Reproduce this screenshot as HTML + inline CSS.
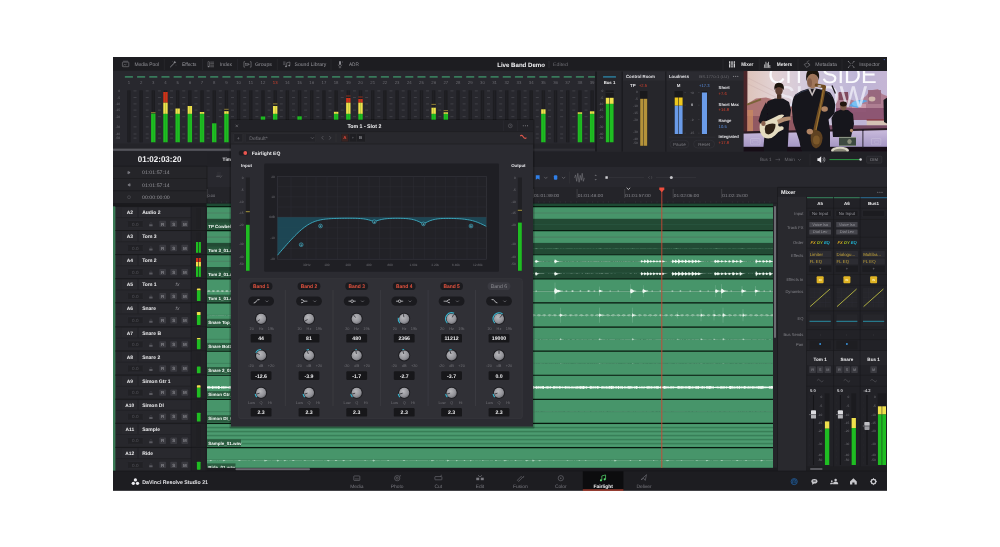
<!DOCTYPE html>
<html lang="en"><head><meta charset="utf-8"><title>DaVinci Resolve - Fairlight</title>
<style>
html,body{margin:0;padding:0;background:#fff;}
body{width:1000px;height:547px;overflow:hidden;position:relative;}
#wrap{position:absolute;left:0;top:0;width:1000px;height:547px;will-change:transform;}
svg{display:block;font-family:"Liberation Sans",sans-serif;filter:blur(0.35px);}
svg text{white-space:pre;text-rendering:geometricPrecision;}
</style></head><body>
<div id="wrap">
<svg width="1000" height="547" viewBox="0 0 1000 547">
<rect x="0" y="0" width="1000" height="547" fill="#ffffff"/>
<rect x="113" y="57" width="774" height="433.6" fill="#28282e"/>
<rect x="113" y="57" width="774" height="13.7" fill="#1d1d21"/>
<rect x="113" y="151.5" width="774" height="15.5" fill="#212126"/>
<rect x="207" y="167" width="680" height="20" fill="#28282e"/>
<rect x="207" y="187" width="570" height="16.5" fill="#242429"/>
<rect x="122.4" y="62.1" width="6.4" height="4.6" fill="none" rx="0.5" stroke="#95959b" stroke-width="0.5"/>
<line x1="123.1" y1="61.2" x2="128.1" y2="61.2" stroke="#95959b" stroke-width="0.4"/>
<path d="M123.4 65.6 l1 -1.2 l1 0.8 l1 -1.4" fill="none" stroke="#95959b" stroke-width="0.4"/>
<text x="134.4" y="66.19" font-size="5.1" fill="#95959b" textLength="24.6" lengthAdjust="spacingAndGlyphs">Media Pool</text>
<line x1="170.2" y1="67.2" x2="174" y2="63.4" stroke="#95959b" stroke-width="0.8"/>
<path d="M174.8 60.8 l0.5 1 l1 0.5 l-1 0.5 l-0.5 1 l-0.5 -1 l-1 -0.5 l1 -0.5z" fill="#95959b"/>
<circle cx="176" cy="65" r="0.35" fill="#95959b"/>
<circle cx="172.6" cy="61.8" r="0.3" fill="#95959b"/>
<text x="182" y="66.19" font-size="5.1" fill="#95959b" textLength="14.4" lengthAdjust="spacingAndGlyphs">Effects</text>
<rect x="208" y="61.8" width="1.3" height="5.2" fill="none" stroke="#95959b" stroke-width="0.4"/>
<line x1="210.2" y1="62.1" x2="214" y2="62.1" stroke="#95959b" stroke-width="0.45"/>
<line x1="210.2" y1="63.65" x2="214" y2="63.65" stroke="#95959b" stroke-width="0.45"/>
<line x1="210.2" y1="65.2" x2="214" y2="65.2" stroke="#95959b" stroke-width="0.45"/>
<line x1="210.2" y1="66.75" x2="214" y2="66.75" stroke="#95959b" stroke-width="0.45"/>
<text x="220" y="66.19" font-size="5.1" fill="#95959b" textLength="12" lengthAdjust="spacingAndGlyphs">Index</text>
<path d="M245.1 61.7 h-1.2 v5.4 h1.2 M249.9 61.7 h1.2 v5.4 h-1.2" fill="none" stroke="#95959b" stroke-width="0.5"/>
<rect x="245.7" y="63.2" width="3" height="2.4" fill="none" stroke="#95959b" stroke-width="0.4"/>
<line x1="246.3" y1="64.4" x2="249.9" y2="64.4" stroke="#95959b" stroke-width="0.4"/>
<text x="254.9" y="66.19" font-size="5.1" fill="#95959b" textLength="17" lengthAdjust="spacingAndGlyphs">Groups</text>
<path d="M286.7 66.4 v-3.6 l3.2 -0.8 v3.6" fill="none" stroke="#95959b" stroke-width="0.5"/>
<circle cx="286" cy="66.4" r="0.8" fill="#95959b"/>
<circle cx="289.2" cy="65.6" r="0.8" fill="#95959b"/>
<line x1="283.1" y1="62" x2="285.5" y2="62" stroke="#95959b" stroke-width="0.4"/>
<line x1="283.1" y1="63.2" x2="285.5" y2="63.2" stroke="#95959b" stroke-width="0.4"/>
<line x1="283.1" y1="64.4" x2="285.5" y2="64.4" stroke="#95959b" stroke-width="0.4"/>
<text x="294.6" y="66.19" font-size="5.1" fill="#95959b" textLength="31.6" lengthAdjust="spacingAndGlyphs">Sound Library</text>
<rect x="339.1" y="61" width="1.8" height="4" fill="#95959b" rx="0.9"/>
<path d="M338.2 64.6 a1.8 1.8 0 0 0 3.6 0" fill="none" stroke="#95959b" stroke-width="0.4"/>
<line x1="340" y1="66.4" x2="340" y2="67.7" stroke="#95959b" stroke-width="0.4"/>
<line x1="338.8" y1="67.7" x2="341.2" y2="67.7" stroke="#95959b" stroke-width="0.4"/>
<circle cx="342.4" cy="62" r="0.4" fill="#95959b"/>
<text x="348.9" y="66.19" font-size="5.1" fill="#95959b" textLength="9.9" lengthAdjust="spacingAndGlyphs">ADR</text>
<line x1="164.3" y1="59" x2="164.3" y2="70" stroke="#303036" stroke-width="0.5"/>
<line x1="202.5" y1="59" x2="202.5" y2="70" stroke="#303036" stroke-width="0.5"/>
<line x1="237.6" y1="59" x2="237.6" y2="70" stroke="#303036" stroke-width="0.5"/>
<line x1="277.3" y1="59" x2="277.3" y2="70" stroke="#303036" stroke-width="0.5"/>
<line x1="331" y1="59" x2="331" y2="70" stroke="#303036" stroke-width="0.5"/>
<text x="497.2" y="66.57" font-size="6.2" fill="#f2f2f4" font-weight="bold" textLength="47.8" lengthAdjust="spacingAndGlyphs">Live Band Demo</text>
<line x1="549" y1="61" x2="549" y2="68" stroke="#3a3a40" stroke-width="0.5"/>
<text x="553" y="66.08" font-size="4.8" fill="#6e6e74" textLength="15" lengthAdjust="spacingAndGlyphs">Edited</text>
<line x1="729.7" y1="61.2" x2="729.7" y2="67.6" stroke="#e8e8ea" stroke-width="1.15"/>
<line x1="729" y1="63.8" x2="730.4" y2="63.8" stroke="#1c1c20" stroke-width="0.45"/>
<line x1="732" y1="61.2" x2="732" y2="67.6" stroke="#e8e8ea" stroke-width="1.15"/>
<line x1="731.3" y1="65.3" x2="732.7" y2="65.3" stroke="#1c1c20" stroke-width="0.45"/>
<line x1="734.3" y1="61.2" x2="734.3" y2="67.6" stroke="#e8e8ea" stroke-width="1.15"/>
<line x1="733.6" y1="63.2" x2="735" y2="63.2" stroke="#1c1c20" stroke-width="0.45"/>
<text x="741.2" y="66.19" font-size="5.1" fill="#e8e8ea" font-weight="bold" textLength="12.2" lengthAdjust="spacingAndGlyphs">Mixer</text>
<line x1="764.6" y1="67.4" x2="764.6" y2="64.4" stroke="#e8e8ea" stroke-width="0.7"/>
<line x1="765.9" y1="67.4" x2="765.9" y2="61.8" stroke="#e8e8ea" stroke-width="0.7"/>
<line x1="767.2" y1="67.4" x2="767.2" y2="63.2" stroke="#e8e8ea" stroke-width="0.7"/>
<line x1="768.5" y1="67.4" x2="768.5" y2="61.8" stroke="#e8e8ea" stroke-width="0.7"/>
<line x1="769.8" y1="67.4" x2="769.8" y2="65" stroke="#e8e8ea" stroke-width="0.7"/>
<line x1="763.8" y1="67.6" x2="770.6" y2="67.6" stroke="#e8e8ea" stroke-width="0.4"/>
<text x="776.8" y="66.19" font-size="5.1" fill="#e8e8ea" font-weight="bold" textLength="15.4" lengthAdjust="spacingAndGlyphs">Meters</text>
<path d="M804.2 64.4 l3.5 -1.6 l2.4 2.2 l-3.5 2.4z" fill="none" stroke="#95959b" stroke-width="0.5"/>
<circle cx="808.8" cy="63.8" r="0.5" fill="#95959b"/>
<path d="M806.7 61.8 l2.6 -1.2" fill="none" stroke="#95959b" stroke-width="0.4"/>
<text x="815.2" y="66.19" font-size="5.1" fill="#95959b" textLength="21.6" lengthAdjust="spacingAndGlyphs">Metadata</text>
<line x1="848.4" y1="61.6" x2="854" y2="67.2" stroke="#95959b" stroke-width="0.55"/>
<line x1="848.4" y1="67.2" x2="854" y2="61.6" stroke="#95959b" stroke-width="0.55"/>
<circle cx="851.2" cy="64.4" r="0.9" fill="#1c1c20"/>
<circle cx="848.4" cy="61.6" r="0.5" fill="#95959b"/>
<circle cx="854" cy="61.6" r="0.5" fill="#95959b"/>
<circle cx="848.4" cy="67.2" r="0.5" fill="#95959b"/>
<circle cx="854" cy="67.2" r="0.5" fill="#95959b"/>
<text x="859.2" y="66.19" font-size="5.1" fill="#95959b" textLength="20.5" lengthAdjust="spacingAndGlyphs">Inspector</text>
<line x1="723" y1="59" x2="723" y2="70" stroke="#303036" stroke-width="0.5"/>
<line x1="759.2" y1="59" x2="759.2" y2="70" stroke="#303036" stroke-width="0.5"/>
<line x1="798" y1="59" x2="798" y2="70" stroke="#303036" stroke-width="0.5"/>
<line x1="842" y1="59" x2="842" y2="70" stroke="#303036" stroke-width="0.5"/>
<circle cx="884.3" cy="59.6" r="0.6" fill="#4a6ad0"/>
<text x="120.2" y="92.06" font-size="3.3" fill="#6a6a70" text-anchor="end">0</text>
<text x="120.2" y="98.66" font-size="3.3" fill="#6a6a70" text-anchor="end">-5</text>
<text x="120.2" y="105.06" font-size="3.3" fill="#6a6a70" text-anchor="end">-10</text>
<text x="120.2" y="111.25" font-size="3.3" fill="#6a6a70" text-anchor="end">-15</text>
<text x="120.2" y="117.86" font-size="3.3" fill="#6a6a70" text-anchor="end">-20</text>
<text x="120.2" y="128.06" font-size="3.3" fill="#6a6a70" text-anchor="end">-30</text>
<text x="120.2" y="135.16" font-size="3.3" fill="#6a6a70" text-anchor="end">-40</text>
<text x="120.2" y="139.25" font-size="3.3" fill="#6a6a70" text-anchor="end">-50</text>
<rect x="124.8" y="76.1" width="8.2" height="1.6" fill="#387a5b" rx="0.5"/>
<text x="128.9" y="83.91" font-size="4.3" fill="#6a6a70" text-anchor="middle">1</text>
<rect x="127.2" y="90.4" width="3.4" height="51.9" fill="#1d1d21"/>
<line x1="128.9" y1="90.4" x2="128.9" y2="142.3" stroke="#26262b" stroke-width="0.5"/>
<line x1="133.5" y1="90.9" x2="136.5" y2="90.9" stroke="#55555b" stroke-width="0.55"/>
<line x1="133.5" y1="97.5" x2="136.5" y2="97.5" stroke="#55555b" stroke-width="0.55"/>
<line x1="133.5" y1="103.9" x2="136.5" y2="103.9" stroke="#55555b" stroke-width="0.55"/>
<line x1="133.5" y1="110.1" x2="136.5" y2="110.1" stroke="#55555b" stroke-width="0.55"/>
<line x1="133.5" y1="116.7" x2="136.5" y2="116.7" stroke="#55555b" stroke-width="0.55"/>
<line x1="133.5" y1="126.9" x2="136.5" y2="126.9" stroke="#55555b" stroke-width="0.55"/>
<line x1="133.5" y1="134" x2="136.5" y2="134" stroke="#55555b" stroke-width="0.55"/>
<line x1="133.5" y1="138.1" x2="136.5" y2="138.1" stroke="#55555b" stroke-width="0.55"/>
<rect x="136.99" y="76.1" width="8.2" height="1.6" fill="#387a5b" rx="0.5"/>
<text x="141.09" y="83.91" font-size="4.3" fill="#6a6a70" text-anchor="middle">2</text>
<rect x="139.39" y="90.4" width="3.4" height="51.9" fill="#1d1d21"/>
<line x1="141.09" y1="90.4" x2="141.09" y2="142.3" stroke="#26262b" stroke-width="0.5"/>
<line x1="145.69" y1="90.9" x2="148.69" y2="90.9" stroke="#55555b" stroke-width="0.55"/>
<line x1="145.69" y1="97.5" x2="148.69" y2="97.5" stroke="#55555b" stroke-width="0.55"/>
<line x1="145.69" y1="103.9" x2="148.69" y2="103.9" stroke="#55555b" stroke-width="0.55"/>
<line x1="145.69" y1="110.1" x2="148.69" y2="110.1" stroke="#55555b" stroke-width="0.55"/>
<line x1="145.69" y1="116.7" x2="148.69" y2="116.7" stroke="#55555b" stroke-width="0.55"/>
<line x1="145.69" y1="126.9" x2="148.69" y2="126.9" stroke="#55555b" stroke-width="0.55"/>
<line x1="145.69" y1="134" x2="148.69" y2="134" stroke="#55555b" stroke-width="0.55"/>
<line x1="145.69" y1="138.1" x2="148.69" y2="138.1" stroke="#55555b" stroke-width="0.55"/>
<rect x="149.18" y="76.1" width="8.2" height="1.6" fill="#387a5b" rx="0.5"/>
<text x="153.28" y="83.91" font-size="4.3" fill="#6a6a70" text-anchor="middle">3</text>
<rect x="151.58" y="90.4" width="3.4" height="51.9" fill="#1d1d21"/>
<line x1="153.28" y1="90.4" x2="153.28" y2="142.3" stroke="#26262b" stroke-width="0.5"/>
<line x1="157.88" y1="90.9" x2="160.88" y2="90.9" stroke="#55555b" stroke-width="0.55"/>
<line x1="157.88" y1="97.5" x2="160.88" y2="97.5" stroke="#55555b" stroke-width="0.55"/>
<line x1="157.88" y1="103.9" x2="160.88" y2="103.9" stroke="#55555b" stroke-width="0.55"/>
<line x1="157.88" y1="110.1" x2="160.88" y2="110.1" stroke="#55555b" stroke-width="0.55"/>
<line x1="157.88" y1="116.7" x2="160.88" y2="116.7" stroke="#55555b" stroke-width="0.55"/>
<line x1="157.88" y1="126.9" x2="160.88" y2="126.9" stroke="#55555b" stroke-width="0.55"/>
<line x1="157.88" y1="134" x2="160.88" y2="134" stroke="#55555b" stroke-width="0.55"/>
<line x1="157.88" y1="138.1" x2="160.88" y2="138.1" stroke="#55555b" stroke-width="0.55"/>
<rect x="151.08" y="113.5" width="4.4" height="28.8" fill="#1fbd22"/>
<line x1="153.28" y1="113.5" x2="153.28" y2="142.3" stroke="#0c7a10" stroke-width="0.35" opacity="0.6"/>
<line x1="151.08" y1="112.6" x2="155.48" y2="112.6" stroke="#d8c040" stroke-width="0.6"/>
<rect x="161.37" y="76.1" width="8.2" height="1.6" fill="#387a5b" rx="0.5"/>
<text x="165.47" y="83.91" font-size="4.3" fill="#6a6a70" text-anchor="middle">4</text>
<rect x="163.77" y="90.4" width="3.4" height="51.9" fill="#1d1d21"/>
<line x1="165.47" y1="90.4" x2="165.47" y2="142.3" stroke="#26262b" stroke-width="0.5"/>
<line x1="170.07" y1="90.9" x2="173.07" y2="90.9" stroke="#55555b" stroke-width="0.55"/>
<line x1="170.07" y1="97.5" x2="173.07" y2="97.5" stroke="#55555b" stroke-width="0.55"/>
<line x1="170.07" y1="103.9" x2="173.07" y2="103.9" stroke="#55555b" stroke-width="0.55"/>
<line x1="170.07" y1="110.1" x2="173.07" y2="110.1" stroke="#55555b" stroke-width="0.55"/>
<line x1="170.07" y1="116.7" x2="173.07" y2="116.7" stroke="#55555b" stroke-width="0.55"/>
<line x1="170.07" y1="126.9" x2="173.07" y2="126.9" stroke="#55555b" stroke-width="0.55"/>
<line x1="170.07" y1="134" x2="173.07" y2="134" stroke="#55555b" stroke-width="0.55"/>
<line x1="170.07" y1="138.1" x2="173.07" y2="138.1" stroke="#55555b" stroke-width="0.55"/>
<rect x="163.27" y="92" width="4.4" height="10.7" fill="#d2301a"/>
<rect x="163.27" y="102.7" width="4.4" height="11.2" fill="#efe04c"/>
<rect x="163.27" y="113.9" width="4.4" height="28.4" fill="#1fbd22"/>
<line x1="165.47" y1="92" x2="165.47" y2="142.3" stroke="#0c7a10" stroke-width="0.35" opacity="0.6"/>
<rect x="173.56" y="76.1" width="8.2" height="1.6" fill="#387a5b" rx="0.5"/>
<text x="177.66" y="83.91" font-size="4.3" fill="#6a6a70" text-anchor="middle">5</text>
<rect x="175.96" y="90.4" width="3.4" height="51.9" fill="#1d1d21"/>
<line x1="177.66" y1="90.4" x2="177.66" y2="142.3" stroke="#26262b" stroke-width="0.5"/>
<line x1="182.26" y1="90.9" x2="185.26" y2="90.9" stroke="#55555b" stroke-width="0.55"/>
<line x1="182.26" y1="97.5" x2="185.26" y2="97.5" stroke="#55555b" stroke-width="0.55"/>
<line x1="182.26" y1="103.9" x2="185.26" y2="103.9" stroke="#55555b" stroke-width="0.55"/>
<line x1="182.26" y1="110.1" x2="185.26" y2="110.1" stroke="#55555b" stroke-width="0.55"/>
<line x1="182.26" y1="116.7" x2="185.26" y2="116.7" stroke="#55555b" stroke-width="0.55"/>
<line x1="182.26" y1="126.9" x2="185.26" y2="126.9" stroke="#55555b" stroke-width="0.55"/>
<line x1="182.26" y1="134" x2="185.26" y2="134" stroke="#55555b" stroke-width="0.55"/>
<line x1="182.26" y1="138.1" x2="185.26" y2="138.1" stroke="#55555b" stroke-width="0.55"/>
<rect x="175.46" y="108.5" width="4.4" height="5.4" fill="#efe04c"/>
<rect x="175.46" y="113.9" width="4.4" height="28.4" fill="#1fbd22"/>
<line x1="177.66" y1="108.5" x2="177.66" y2="142.3" stroke="#0c7a10" stroke-width="0.35" opacity="0.6"/>
<rect x="185.75" y="76.1" width="8.2" height="1.6" fill="#387a5b" rx="0.5"/>
<text x="189.85" y="83.91" font-size="4.3" fill="#6a6a70" text-anchor="middle">6</text>
<rect x="188.15" y="90.4" width="3.4" height="51.9" fill="#1d1d21"/>
<line x1="189.85" y1="90.4" x2="189.85" y2="142.3" stroke="#26262b" stroke-width="0.5"/>
<line x1="194.45" y1="90.9" x2="197.45" y2="90.9" stroke="#55555b" stroke-width="0.55"/>
<line x1="194.45" y1="97.5" x2="197.45" y2="97.5" stroke="#55555b" stroke-width="0.55"/>
<line x1="194.45" y1="103.9" x2="197.45" y2="103.9" stroke="#55555b" stroke-width="0.55"/>
<line x1="194.45" y1="110.1" x2="197.45" y2="110.1" stroke="#55555b" stroke-width="0.55"/>
<line x1="194.45" y1="116.7" x2="197.45" y2="116.7" stroke="#55555b" stroke-width="0.55"/>
<line x1="194.45" y1="126.9" x2="197.45" y2="126.9" stroke="#55555b" stroke-width="0.55"/>
<line x1="194.45" y1="134" x2="197.45" y2="134" stroke="#55555b" stroke-width="0.55"/>
<line x1="194.45" y1="138.1" x2="197.45" y2="138.1" stroke="#55555b" stroke-width="0.55"/>
<rect x="187.65" y="106" width="4.4" height="7.9" fill="#efe04c"/>
<rect x="187.65" y="113.9" width="4.4" height="28.4" fill="#1fbd22"/>
<line x1="189.85" y1="106" x2="189.85" y2="142.3" stroke="#0c7a10" stroke-width="0.35" opacity="0.6"/>
<rect x="197.94" y="76.1" width="8.2" height="1.6" fill="#387a5b" rx="0.5"/>
<text x="202.04" y="83.91" font-size="4.3" fill="#6a6a70" text-anchor="middle">7</text>
<rect x="200.34" y="90.4" width="3.4" height="51.9" fill="#1d1d21"/>
<line x1="202.04" y1="90.4" x2="202.04" y2="142.3" stroke="#26262b" stroke-width="0.5"/>
<line x1="206.64" y1="90.9" x2="209.64" y2="90.9" stroke="#55555b" stroke-width="0.55"/>
<line x1="206.64" y1="97.5" x2="209.64" y2="97.5" stroke="#55555b" stroke-width="0.55"/>
<line x1="206.64" y1="103.9" x2="209.64" y2="103.9" stroke="#55555b" stroke-width="0.55"/>
<line x1="206.64" y1="110.1" x2="209.64" y2="110.1" stroke="#55555b" stroke-width="0.55"/>
<line x1="206.64" y1="116.7" x2="209.64" y2="116.7" stroke="#55555b" stroke-width="0.55"/>
<line x1="206.64" y1="126.9" x2="209.64" y2="126.9" stroke="#55555b" stroke-width="0.55"/>
<line x1="206.64" y1="134" x2="209.64" y2="134" stroke="#55555b" stroke-width="0.55"/>
<line x1="206.64" y1="138.1" x2="209.64" y2="138.1" stroke="#55555b" stroke-width="0.55"/>
<rect x="199.84" y="112" width="4.4" height="1.9" fill="#efe04c"/>
<rect x="199.84" y="113.9" width="4.4" height="28.4" fill="#1fbd22"/>
<line x1="202.04" y1="112" x2="202.04" y2="142.3" stroke="#0c7a10" stroke-width="0.35" opacity="0.6"/>
<rect x="210.13" y="76.1" width="8.2" height="1.6" fill="#387a5b" rx="0.5"/>
<text x="214.23" y="83.91" font-size="4.3" fill="#6a6a70" text-anchor="middle">8</text>
<rect x="212.53" y="90.4" width="3.4" height="51.9" fill="#1d1d21"/>
<line x1="214.23" y1="90.4" x2="214.23" y2="142.3" stroke="#26262b" stroke-width="0.5"/>
<line x1="218.83" y1="90.9" x2="221.83" y2="90.9" stroke="#55555b" stroke-width="0.55"/>
<line x1="218.83" y1="97.5" x2="221.83" y2="97.5" stroke="#55555b" stroke-width="0.55"/>
<line x1="218.83" y1="103.9" x2="221.83" y2="103.9" stroke="#55555b" stroke-width="0.55"/>
<line x1="218.83" y1="110.1" x2="221.83" y2="110.1" stroke="#55555b" stroke-width="0.55"/>
<line x1="218.83" y1="116.7" x2="221.83" y2="116.7" stroke="#55555b" stroke-width="0.55"/>
<line x1="218.83" y1="126.9" x2="221.83" y2="126.9" stroke="#55555b" stroke-width="0.55"/>
<line x1="218.83" y1="134" x2="221.83" y2="134" stroke="#55555b" stroke-width="0.55"/>
<line x1="218.83" y1="138.1" x2="221.83" y2="138.1" stroke="#55555b" stroke-width="0.55"/>
<rect x="212.03" y="123.3" width="4.4" height="19" fill="#1fbd22"/>
<line x1="214.23" y1="123.3" x2="214.23" y2="142.3" stroke="#0c7a10" stroke-width="0.35" opacity="0.6"/>
<rect x="222.32" y="76.1" width="8.2" height="1.6" fill="#387a5b" rx="0.5"/>
<text x="226.42" y="83.91" font-size="4.3" fill="#6a6a70" text-anchor="middle">9</text>
<rect x="224.72" y="90.4" width="3.4" height="51.9" fill="#1d1d21"/>
<line x1="226.42" y1="90.4" x2="226.42" y2="142.3" stroke="#26262b" stroke-width="0.5"/>
<line x1="231.02" y1="90.9" x2="234.02" y2="90.9" stroke="#55555b" stroke-width="0.55"/>
<line x1="231.02" y1="97.5" x2="234.02" y2="97.5" stroke="#55555b" stroke-width="0.55"/>
<line x1="231.02" y1="103.9" x2="234.02" y2="103.9" stroke="#55555b" stroke-width="0.55"/>
<line x1="231.02" y1="110.1" x2="234.02" y2="110.1" stroke="#55555b" stroke-width="0.55"/>
<line x1="231.02" y1="116.7" x2="234.02" y2="116.7" stroke="#55555b" stroke-width="0.55"/>
<line x1="231.02" y1="126.9" x2="234.02" y2="126.9" stroke="#55555b" stroke-width="0.55"/>
<line x1="231.02" y1="134" x2="234.02" y2="134" stroke="#55555b" stroke-width="0.55"/>
<line x1="231.02" y1="138.1" x2="234.02" y2="138.1" stroke="#55555b" stroke-width="0.55"/>
<rect x="224.22" y="111.2" width="4.4" height="2.7" fill="#efe04c"/>
<rect x="224.22" y="113.9" width="4.4" height="28.4" fill="#1fbd22"/>
<line x1="226.42" y1="111.2" x2="226.42" y2="142.3" stroke="#0c7a10" stroke-width="0.35" opacity="0.6"/>
<line x1="224.22" y1="109.3" x2="228.62" y2="109.3" stroke="#d8c040" stroke-width="0.6"/>
<rect x="234.51" y="76.1" width="8.2" height="1.6" fill="#387a5b" rx="0.5"/>
<text x="238.61" y="83.91" font-size="4.3" fill="#6a6a70" text-anchor="middle">10</text>
<rect x="236.91" y="90.4" width="3.4" height="51.9" fill="#1d1d21"/>
<line x1="238.61" y1="90.4" x2="238.61" y2="142.3" stroke="#26262b" stroke-width="0.5"/>
<line x1="243.21" y1="90.9" x2="246.21" y2="90.9" stroke="#55555b" stroke-width="0.55"/>
<line x1="243.21" y1="97.5" x2="246.21" y2="97.5" stroke="#55555b" stroke-width="0.55"/>
<line x1="243.21" y1="103.9" x2="246.21" y2="103.9" stroke="#55555b" stroke-width="0.55"/>
<line x1="243.21" y1="110.1" x2="246.21" y2="110.1" stroke="#55555b" stroke-width="0.55"/>
<line x1="243.21" y1="116.7" x2="246.21" y2="116.7" stroke="#55555b" stroke-width="0.55"/>
<line x1="243.21" y1="126.9" x2="246.21" y2="126.9" stroke="#55555b" stroke-width="0.55"/>
<line x1="243.21" y1="134" x2="246.21" y2="134" stroke="#55555b" stroke-width="0.55"/>
<line x1="243.21" y1="138.1" x2="246.21" y2="138.1" stroke="#55555b" stroke-width="0.55"/>
<rect x="246.7" y="76.1" width="8.2" height="1.6" fill="#387a5b" rx="0.5"/>
<text x="250.8" y="83.91" font-size="4.3" fill="#6a6a70" text-anchor="middle">11</text>
<rect x="249.1" y="90.4" width="3.4" height="51.9" fill="#1d1d21"/>
<line x1="250.8" y1="90.4" x2="250.8" y2="142.3" stroke="#26262b" stroke-width="0.5"/>
<line x1="255.4" y1="90.9" x2="258.4" y2="90.9" stroke="#55555b" stroke-width="0.55"/>
<line x1="255.4" y1="97.5" x2="258.4" y2="97.5" stroke="#55555b" stroke-width="0.55"/>
<line x1="255.4" y1="103.9" x2="258.4" y2="103.9" stroke="#55555b" stroke-width="0.55"/>
<line x1="255.4" y1="110.1" x2="258.4" y2="110.1" stroke="#55555b" stroke-width="0.55"/>
<line x1="255.4" y1="116.7" x2="258.4" y2="116.7" stroke="#55555b" stroke-width="0.55"/>
<line x1="255.4" y1="126.9" x2="258.4" y2="126.9" stroke="#55555b" stroke-width="0.55"/>
<line x1="255.4" y1="134" x2="258.4" y2="134" stroke="#55555b" stroke-width="0.55"/>
<line x1="255.4" y1="138.1" x2="258.4" y2="138.1" stroke="#55555b" stroke-width="0.55"/>
<rect x="258.89" y="76.1" width="8.2" height="1.6" fill="#387a5b" rx="0.5"/>
<text x="262.99" y="83.91" font-size="4.3" fill="#6a6a70" text-anchor="middle">12</text>
<rect x="261.29" y="90.4" width="3.4" height="51.9" fill="#1d1d21"/>
<line x1="262.99" y1="90.4" x2="262.99" y2="142.3" stroke="#26262b" stroke-width="0.5"/>
<line x1="267.59" y1="90.9" x2="270.59" y2="90.9" stroke="#55555b" stroke-width="0.55"/>
<line x1="267.59" y1="97.5" x2="270.59" y2="97.5" stroke="#55555b" stroke-width="0.55"/>
<line x1="267.59" y1="103.9" x2="270.59" y2="103.9" stroke="#55555b" stroke-width="0.55"/>
<line x1="267.59" y1="110.1" x2="270.59" y2="110.1" stroke="#55555b" stroke-width="0.55"/>
<line x1="267.59" y1="116.7" x2="270.59" y2="116.7" stroke="#55555b" stroke-width="0.55"/>
<line x1="267.59" y1="126.9" x2="270.59" y2="126.9" stroke="#55555b" stroke-width="0.55"/>
<line x1="267.59" y1="134" x2="270.59" y2="134" stroke="#55555b" stroke-width="0.55"/>
<line x1="267.59" y1="138.1" x2="270.59" y2="138.1" stroke="#55555b" stroke-width="0.55"/>
<rect x="260.79" y="116.5" width="4.4" height="25.8" fill="#1fbd22"/>
<line x1="262.99" y1="116.5" x2="262.99" y2="142.3" stroke="#0c7a10" stroke-width="0.35" opacity="0.6"/>
<rect x="271.08" y="76.1" width="8.2" height="1.6" fill="#387a5b" rx="0.5"/>
<text x="275.18" y="83.91" font-size="4.3" fill="#d8402c" text-anchor="middle">13</text>
<rect x="273.48" y="90.4" width="3.4" height="51.9" fill="#1d1d21"/>
<line x1="275.18" y1="90.4" x2="275.18" y2="142.3" stroke="#26262b" stroke-width="0.5"/>
<line x1="279.78" y1="90.9" x2="282.78" y2="90.9" stroke="#55555b" stroke-width="0.55"/>
<line x1="279.78" y1="97.5" x2="282.78" y2="97.5" stroke="#55555b" stroke-width="0.55"/>
<line x1="279.78" y1="103.9" x2="282.78" y2="103.9" stroke="#55555b" stroke-width="0.55"/>
<line x1="279.78" y1="110.1" x2="282.78" y2="110.1" stroke="#55555b" stroke-width="0.55"/>
<line x1="279.78" y1="116.7" x2="282.78" y2="116.7" stroke="#55555b" stroke-width="0.55"/>
<line x1="279.78" y1="126.9" x2="282.78" y2="126.9" stroke="#55555b" stroke-width="0.55"/>
<line x1="279.78" y1="134" x2="282.78" y2="134" stroke="#55555b" stroke-width="0.55"/>
<line x1="279.78" y1="138.1" x2="282.78" y2="138.1" stroke="#55555b" stroke-width="0.55"/>
<rect x="272.98" y="106" width="4.4" height="7.9" fill="#efe04c"/>
<rect x="272.98" y="113.9" width="4.4" height="28.4" fill="#1fbd22"/>
<line x1="275.18" y1="106" x2="275.18" y2="142.3" stroke="#0c7a10" stroke-width="0.35" opacity="0.6"/>
<line x1="272.98" y1="103.9" x2="277.38" y2="103.9" stroke="#d8c040" stroke-width="0.6"/>
<rect x="283.27" y="76.1" width="8.2" height="1.6" fill="#387a5b" rx="0.5"/>
<text x="287.37" y="83.91" font-size="4.3" fill="#6a6a70" text-anchor="middle">14</text>
<rect x="285.67" y="90.4" width="3.4" height="51.9" fill="#1d1d21"/>
<line x1="287.37" y1="90.4" x2="287.37" y2="142.3" stroke="#26262b" stroke-width="0.5"/>
<line x1="291.97" y1="90.9" x2="294.97" y2="90.9" stroke="#55555b" stroke-width="0.55"/>
<line x1="291.97" y1="97.5" x2="294.97" y2="97.5" stroke="#55555b" stroke-width="0.55"/>
<line x1="291.97" y1="103.9" x2="294.97" y2="103.9" stroke="#55555b" stroke-width="0.55"/>
<line x1="291.97" y1="110.1" x2="294.97" y2="110.1" stroke="#55555b" stroke-width="0.55"/>
<line x1="291.97" y1="116.7" x2="294.97" y2="116.7" stroke="#55555b" stroke-width="0.55"/>
<line x1="291.97" y1="126.9" x2="294.97" y2="126.9" stroke="#55555b" stroke-width="0.55"/>
<line x1="291.97" y1="134" x2="294.97" y2="134" stroke="#55555b" stroke-width="0.55"/>
<line x1="291.97" y1="138.1" x2="294.97" y2="138.1" stroke="#55555b" stroke-width="0.55"/>
<rect x="295.46" y="76.1" width="8.2" height="1.6" fill="#387a5b" rx="0.5"/>
<text x="299.56" y="83.91" font-size="4.3" fill="#6a6a70" text-anchor="middle">15</text>
<rect x="297.86" y="90.4" width="3.4" height="51.9" fill="#1d1d21"/>
<line x1="299.56" y1="90.4" x2="299.56" y2="142.3" stroke="#26262b" stroke-width="0.5"/>
<line x1="304.16" y1="90.9" x2="307.16" y2="90.9" stroke="#55555b" stroke-width="0.55"/>
<line x1="304.16" y1="97.5" x2="307.16" y2="97.5" stroke="#55555b" stroke-width="0.55"/>
<line x1="304.16" y1="103.9" x2="307.16" y2="103.9" stroke="#55555b" stroke-width="0.55"/>
<line x1="304.16" y1="110.1" x2="307.16" y2="110.1" stroke="#55555b" stroke-width="0.55"/>
<line x1="304.16" y1="116.7" x2="307.16" y2="116.7" stroke="#55555b" stroke-width="0.55"/>
<line x1="304.16" y1="126.9" x2="307.16" y2="126.9" stroke="#55555b" stroke-width="0.55"/>
<line x1="304.16" y1="134" x2="307.16" y2="134" stroke="#55555b" stroke-width="0.55"/>
<line x1="304.16" y1="138.1" x2="307.16" y2="138.1" stroke="#55555b" stroke-width="0.55"/>
<rect x="297.36" y="116.3" width="4.4" height="26" fill="#1fbd22"/>
<line x1="299.56" y1="116.3" x2="299.56" y2="142.3" stroke="#0c7a10" stroke-width="0.35" opacity="0.6"/>
<rect x="307.65" y="76.1" width="8.2" height="1.6" fill="#387a5b" rx="0.5"/>
<text x="311.75" y="83.91" font-size="4.3" fill="#6a6a70" text-anchor="middle">16</text>
<rect x="310.05" y="90.4" width="3.4" height="51.9" fill="#1d1d21"/>
<line x1="311.75" y1="90.4" x2="311.75" y2="142.3" stroke="#26262b" stroke-width="0.5"/>
<line x1="316.35" y1="90.9" x2="319.35" y2="90.9" stroke="#55555b" stroke-width="0.55"/>
<line x1="316.35" y1="97.5" x2="319.35" y2="97.5" stroke="#55555b" stroke-width="0.55"/>
<line x1="316.35" y1="103.9" x2="319.35" y2="103.9" stroke="#55555b" stroke-width="0.55"/>
<line x1="316.35" y1="110.1" x2="319.35" y2="110.1" stroke="#55555b" stroke-width="0.55"/>
<line x1="316.35" y1="116.7" x2="319.35" y2="116.7" stroke="#55555b" stroke-width="0.55"/>
<line x1="316.35" y1="126.9" x2="319.35" y2="126.9" stroke="#55555b" stroke-width="0.55"/>
<line x1="316.35" y1="134" x2="319.35" y2="134" stroke="#55555b" stroke-width="0.55"/>
<line x1="316.35" y1="138.1" x2="319.35" y2="138.1" stroke="#55555b" stroke-width="0.55"/>
<rect x="319.84" y="76.1" width="8.2" height="1.6" fill="#387a5b" rx="0.5"/>
<text x="323.94" y="83.91" font-size="4.3" fill="#6a6a70" text-anchor="middle">17</text>
<rect x="322.24" y="90.4" width="3.4" height="51.9" fill="#1d1d21"/>
<line x1="323.94" y1="90.4" x2="323.94" y2="142.3" stroke="#26262b" stroke-width="0.5"/>
<line x1="328.54" y1="90.9" x2="331.54" y2="90.9" stroke="#55555b" stroke-width="0.55"/>
<line x1="328.54" y1="97.5" x2="331.54" y2="97.5" stroke="#55555b" stroke-width="0.55"/>
<line x1="328.54" y1="103.9" x2="331.54" y2="103.9" stroke="#55555b" stroke-width="0.55"/>
<line x1="328.54" y1="110.1" x2="331.54" y2="110.1" stroke="#55555b" stroke-width="0.55"/>
<line x1="328.54" y1="116.7" x2="331.54" y2="116.7" stroke="#55555b" stroke-width="0.55"/>
<line x1="328.54" y1="126.9" x2="331.54" y2="126.9" stroke="#55555b" stroke-width="0.55"/>
<line x1="328.54" y1="134" x2="331.54" y2="134" stroke="#55555b" stroke-width="0.55"/>
<line x1="328.54" y1="138.1" x2="331.54" y2="138.1" stroke="#55555b" stroke-width="0.55"/>
<rect x="332.03" y="76.1" width="8.2" height="1.6" fill="#387a5b" rx="0.5"/>
<text x="336.13" y="83.91" font-size="4.3" fill="#6a6a70" text-anchor="middle">18</text>
<rect x="334.43" y="90.4" width="3.4" height="51.9" fill="#1d1d21"/>
<line x1="336.13" y1="90.4" x2="336.13" y2="142.3" stroke="#26262b" stroke-width="0.5"/>
<line x1="340.73" y1="90.9" x2="343.73" y2="90.9" stroke="#55555b" stroke-width="0.55"/>
<line x1="340.73" y1="97.5" x2="343.73" y2="97.5" stroke="#55555b" stroke-width="0.55"/>
<line x1="340.73" y1="103.9" x2="343.73" y2="103.9" stroke="#55555b" stroke-width="0.55"/>
<line x1="340.73" y1="110.1" x2="343.73" y2="110.1" stroke="#55555b" stroke-width="0.55"/>
<line x1="340.73" y1="116.7" x2="343.73" y2="116.7" stroke="#55555b" stroke-width="0.55"/>
<line x1="340.73" y1="126.9" x2="343.73" y2="126.9" stroke="#55555b" stroke-width="0.55"/>
<line x1="340.73" y1="134" x2="343.73" y2="134" stroke="#55555b" stroke-width="0.55"/>
<line x1="340.73" y1="138.1" x2="343.73" y2="138.1" stroke="#55555b" stroke-width="0.55"/>
<rect x="333.93" y="111.8" width="4.4" height="2.1" fill="#efe04c"/>
<rect x="333.93" y="113.9" width="4.4" height="28.4" fill="#1fbd22"/>
<line x1="336.13" y1="111.8" x2="336.13" y2="142.3" stroke="#0c7a10" stroke-width="0.35" opacity="0.6"/>
<rect x="344.22" y="76.1" width="8.2" height="1.6" fill="#387a5b" rx="0.5"/>
<text x="348.32" y="83.91" font-size="4.3" fill="#6a6a70" text-anchor="middle">19</text>
<rect x="346.62" y="90.4" width="3.4" height="51.9" fill="#1d1d21"/>
<line x1="348.32" y1="90.4" x2="348.32" y2="142.3" stroke="#26262b" stroke-width="0.5"/>
<line x1="352.92" y1="90.9" x2="355.92" y2="90.9" stroke="#55555b" stroke-width="0.55"/>
<line x1="352.92" y1="97.5" x2="355.92" y2="97.5" stroke="#55555b" stroke-width="0.55"/>
<line x1="352.92" y1="103.9" x2="355.92" y2="103.9" stroke="#55555b" stroke-width="0.55"/>
<line x1="352.92" y1="110.1" x2="355.92" y2="110.1" stroke="#55555b" stroke-width="0.55"/>
<line x1="352.92" y1="116.7" x2="355.92" y2="116.7" stroke="#55555b" stroke-width="0.55"/>
<line x1="352.92" y1="126.9" x2="355.92" y2="126.9" stroke="#55555b" stroke-width="0.55"/>
<line x1="352.92" y1="134" x2="355.92" y2="134" stroke="#55555b" stroke-width="0.55"/>
<line x1="352.92" y1="138.1" x2="355.92" y2="138.1" stroke="#55555b" stroke-width="0.55"/>
<rect x="346.12" y="98" width="4.4" height="4.7" fill="#d2301a"/>
<rect x="346.12" y="102.7" width="4.4" height="11.2" fill="#efe04c"/>
<rect x="346.12" y="113.9" width="4.4" height="28.4" fill="#1fbd22"/>
<line x1="348.32" y1="98" x2="348.32" y2="142.3" stroke="#0c7a10" stroke-width="0.35" opacity="0.6"/>
<line x1="346.12" y1="96" x2="350.52" y2="96" stroke="#d84020" stroke-width="0.6"/>
<rect x="356.41" y="76.1" width="8.2" height="1.6" fill="#387a5b" rx="0.5"/>
<text x="360.51" y="83.91" font-size="4.3" fill="#6a6a70" text-anchor="middle">20</text>
<rect x="358.81" y="90.4" width="3.4" height="51.9" fill="#1d1d21"/>
<line x1="360.51" y1="90.4" x2="360.51" y2="142.3" stroke="#26262b" stroke-width="0.5"/>
<line x1="365.11" y1="90.9" x2="368.11" y2="90.9" stroke="#55555b" stroke-width="0.55"/>
<line x1="365.11" y1="97.5" x2="368.11" y2="97.5" stroke="#55555b" stroke-width="0.55"/>
<line x1="365.11" y1="103.9" x2="368.11" y2="103.9" stroke="#55555b" stroke-width="0.55"/>
<line x1="365.11" y1="110.1" x2="368.11" y2="110.1" stroke="#55555b" stroke-width="0.55"/>
<line x1="365.11" y1="116.7" x2="368.11" y2="116.7" stroke="#55555b" stroke-width="0.55"/>
<line x1="365.11" y1="126.9" x2="368.11" y2="126.9" stroke="#55555b" stroke-width="0.55"/>
<line x1="365.11" y1="134" x2="368.11" y2="134" stroke="#55555b" stroke-width="0.55"/>
<line x1="365.11" y1="138.1" x2="368.11" y2="138.1" stroke="#55555b" stroke-width="0.55"/>
<rect x="358.31" y="99" width="4.4" height="3.7" fill="#d2301a"/>
<rect x="358.31" y="102.7" width="4.4" height="11.2" fill="#efe04c"/>
<rect x="358.31" y="113.9" width="4.4" height="28.4" fill="#1fbd22"/>
<line x1="360.51" y1="99" x2="360.51" y2="142.3" stroke="#0c7a10" stroke-width="0.35" opacity="0.6"/>
<line x1="358.31" y1="97" x2="362.71" y2="97" stroke="#d84020" stroke-width="0.6"/>
<rect x="368.6" y="76.1" width="8.2" height="1.6" fill="#387a5b" rx="0.5"/>
<text x="372.7" y="83.91" font-size="4.3" fill="#6a6a70" text-anchor="middle">21</text>
<rect x="371" y="90.4" width="3.4" height="51.9" fill="#1d1d21"/>
<line x1="372.7" y1="90.4" x2="372.7" y2="142.3" stroke="#26262b" stroke-width="0.5"/>
<line x1="377.3" y1="90.9" x2="380.3" y2="90.9" stroke="#55555b" stroke-width="0.55"/>
<line x1="377.3" y1="97.5" x2="380.3" y2="97.5" stroke="#55555b" stroke-width="0.55"/>
<line x1="377.3" y1="103.9" x2="380.3" y2="103.9" stroke="#55555b" stroke-width="0.55"/>
<line x1="377.3" y1="110.1" x2="380.3" y2="110.1" stroke="#55555b" stroke-width="0.55"/>
<line x1="377.3" y1="116.7" x2="380.3" y2="116.7" stroke="#55555b" stroke-width="0.55"/>
<line x1="377.3" y1="126.9" x2="380.3" y2="126.9" stroke="#55555b" stroke-width="0.55"/>
<line x1="377.3" y1="134" x2="380.3" y2="134" stroke="#55555b" stroke-width="0.55"/>
<line x1="377.3" y1="138.1" x2="380.3" y2="138.1" stroke="#55555b" stroke-width="0.55"/>
<rect x="380.79" y="76.1" width="8.2" height="1.6" fill="#387a5b" rx="0.5"/>
<text x="384.89" y="83.91" font-size="4.3" fill="#6a6a70" text-anchor="middle">22</text>
<rect x="383.19" y="90.4" width="3.4" height="51.9" fill="#1d1d21"/>
<line x1="384.89" y1="90.4" x2="384.89" y2="142.3" stroke="#26262b" stroke-width="0.5"/>
<line x1="389.49" y1="90.9" x2="392.49" y2="90.9" stroke="#55555b" stroke-width="0.55"/>
<line x1="389.49" y1="97.5" x2="392.49" y2="97.5" stroke="#55555b" stroke-width="0.55"/>
<line x1="389.49" y1="103.9" x2="392.49" y2="103.9" stroke="#55555b" stroke-width="0.55"/>
<line x1="389.49" y1="110.1" x2="392.49" y2="110.1" stroke="#55555b" stroke-width="0.55"/>
<line x1="389.49" y1="116.7" x2="392.49" y2="116.7" stroke="#55555b" stroke-width="0.55"/>
<line x1="389.49" y1="126.9" x2="392.49" y2="126.9" stroke="#55555b" stroke-width="0.55"/>
<line x1="389.49" y1="134" x2="392.49" y2="134" stroke="#55555b" stroke-width="0.55"/>
<line x1="389.49" y1="138.1" x2="392.49" y2="138.1" stroke="#55555b" stroke-width="0.55"/>
<rect x="392.98" y="76.1" width="8.2" height="1.6" fill="#387a5b" rx="0.5"/>
<text x="397.08" y="83.91" font-size="4.3" fill="#6a6a70" text-anchor="middle">23</text>
<rect x="395.38" y="90.4" width="3.4" height="51.9" fill="#1d1d21"/>
<line x1="397.08" y1="90.4" x2="397.08" y2="142.3" stroke="#26262b" stroke-width="0.5"/>
<line x1="401.68" y1="90.9" x2="404.68" y2="90.9" stroke="#55555b" stroke-width="0.55"/>
<line x1="401.68" y1="97.5" x2="404.68" y2="97.5" stroke="#55555b" stroke-width="0.55"/>
<line x1="401.68" y1="103.9" x2="404.68" y2="103.9" stroke="#55555b" stroke-width="0.55"/>
<line x1="401.68" y1="110.1" x2="404.68" y2="110.1" stroke="#55555b" stroke-width="0.55"/>
<line x1="401.68" y1="116.7" x2="404.68" y2="116.7" stroke="#55555b" stroke-width="0.55"/>
<line x1="401.68" y1="126.9" x2="404.68" y2="126.9" stroke="#55555b" stroke-width="0.55"/>
<line x1="401.68" y1="134" x2="404.68" y2="134" stroke="#55555b" stroke-width="0.55"/>
<line x1="401.68" y1="138.1" x2="404.68" y2="138.1" stroke="#55555b" stroke-width="0.55"/>
<rect x="405.17" y="76.1" width="8.2" height="1.6" fill="#387a5b" rx="0.5"/>
<text x="409.27" y="83.91" font-size="4.3" fill="#6a6a70" text-anchor="middle">24</text>
<rect x="407.57" y="90.4" width="3.4" height="51.9" fill="#1d1d21"/>
<line x1="409.27" y1="90.4" x2="409.27" y2="142.3" stroke="#26262b" stroke-width="0.5"/>
<line x1="413.87" y1="90.9" x2="416.87" y2="90.9" stroke="#55555b" stroke-width="0.55"/>
<line x1="413.87" y1="97.5" x2="416.87" y2="97.5" stroke="#55555b" stroke-width="0.55"/>
<line x1="413.87" y1="103.9" x2="416.87" y2="103.9" stroke="#55555b" stroke-width="0.55"/>
<line x1="413.87" y1="110.1" x2="416.87" y2="110.1" stroke="#55555b" stroke-width="0.55"/>
<line x1="413.87" y1="116.7" x2="416.87" y2="116.7" stroke="#55555b" stroke-width="0.55"/>
<line x1="413.87" y1="126.9" x2="416.87" y2="126.9" stroke="#55555b" stroke-width="0.55"/>
<line x1="413.87" y1="134" x2="416.87" y2="134" stroke="#55555b" stroke-width="0.55"/>
<line x1="413.87" y1="138.1" x2="416.87" y2="138.1" stroke="#55555b" stroke-width="0.55"/>
<rect x="417.36" y="76.1" width="8.2" height="1.6" fill="#387a5b" rx="0.5"/>
<text x="421.46" y="83.91" font-size="4.3" fill="#6a6a70" text-anchor="middle">25</text>
<rect x="419.76" y="90.4" width="3.4" height="51.9" fill="#1d1d21"/>
<line x1="421.46" y1="90.4" x2="421.46" y2="142.3" stroke="#26262b" stroke-width="0.5"/>
<line x1="426.06" y1="90.9" x2="429.06" y2="90.9" stroke="#55555b" stroke-width="0.55"/>
<line x1="426.06" y1="97.5" x2="429.06" y2="97.5" stroke="#55555b" stroke-width="0.55"/>
<line x1="426.06" y1="103.9" x2="429.06" y2="103.9" stroke="#55555b" stroke-width="0.55"/>
<line x1="426.06" y1="110.1" x2="429.06" y2="110.1" stroke="#55555b" stroke-width="0.55"/>
<line x1="426.06" y1="116.7" x2="429.06" y2="116.7" stroke="#55555b" stroke-width="0.55"/>
<line x1="426.06" y1="126.9" x2="429.06" y2="126.9" stroke="#55555b" stroke-width="0.55"/>
<line x1="426.06" y1="134" x2="429.06" y2="134" stroke="#55555b" stroke-width="0.55"/>
<line x1="426.06" y1="138.1" x2="429.06" y2="138.1" stroke="#55555b" stroke-width="0.55"/>
<rect x="429.55" y="76.1" width="8.2" height="1.6" fill="#387a5b" rx="0.5"/>
<text x="433.65" y="83.91" font-size="4.3" fill="#6a6a70" text-anchor="middle">26</text>
<rect x="431.95" y="90.4" width="3.4" height="51.9" fill="#1d1d21"/>
<line x1="433.65" y1="90.4" x2="433.65" y2="142.3" stroke="#26262b" stroke-width="0.5"/>
<line x1="438.25" y1="90.9" x2="441.25" y2="90.9" stroke="#55555b" stroke-width="0.55"/>
<line x1="438.25" y1="97.5" x2="441.25" y2="97.5" stroke="#55555b" stroke-width="0.55"/>
<line x1="438.25" y1="103.9" x2="441.25" y2="103.9" stroke="#55555b" stroke-width="0.55"/>
<line x1="438.25" y1="110.1" x2="441.25" y2="110.1" stroke="#55555b" stroke-width="0.55"/>
<line x1="438.25" y1="116.7" x2="441.25" y2="116.7" stroke="#55555b" stroke-width="0.55"/>
<line x1="438.25" y1="126.9" x2="441.25" y2="126.9" stroke="#55555b" stroke-width="0.55"/>
<line x1="438.25" y1="134" x2="441.25" y2="134" stroke="#55555b" stroke-width="0.55"/>
<line x1="438.25" y1="138.1" x2="441.25" y2="138.1" stroke="#55555b" stroke-width="0.55"/>
<rect x="431.45" y="107.7" width="4.4" height="6.2" fill="#efe04c"/>
<rect x="431.45" y="113.9" width="4.4" height="28.4" fill="#1fbd22"/>
<line x1="433.65" y1="107.7" x2="433.65" y2="142.3" stroke="#0c7a10" stroke-width="0.35" opacity="0.6"/>
<line x1="431.45" y1="104.4" x2="435.85" y2="104.4" stroke="#d8c040" stroke-width="0.6"/>
<rect x="441.74" y="76.1" width="8.2" height="1.6" fill="#387a5b" rx="0.5"/>
<text x="445.84" y="83.91" font-size="4.3" fill="#6a6a70" text-anchor="middle">27</text>
<rect x="444.14" y="90.4" width="3.4" height="51.9" fill="#1d1d21"/>
<line x1="445.84" y1="90.4" x2="445.84" y2="142.3" stroke="#26262b" stroke-width="0.5"/>
<line x1="450.44" y1="90.9" x2="453.44" y2="90.9" stroke="#55555b" stroke-width="0.55"/>
<line x1="450.44" y1="97.5" x2="453.44" y2="97.5" stroke="#55555b" stroke-width="0.55"/>
<line x1="450.44" y1="103.9" x2="453.44" y2="103.9" stroke="#55555b" stroke-width="0.55"/>
<line x1="450.44" y1="110.1" x2="453.44" y2="110.1" stroke="#55555b" stroke-width="0.55"/>
<line x1="450.44" y1="116.7" x2="453.44" y2="116.7" stroke="#55555b" stroke-width="0.55"/>
<line x1="450.44" y1="126.9" x2="453.44" y2="126.9" stroke="#55555b" stroke-width="0.55"/>
<line x1="450.44" y1="134" x2="453.44" y2="134" stroke="#55555b" stroke-width="0.55"/>
<line x1="450.44" y1="138.1" x2="453.44" y2="138.1" stroke="#55555b" stroke-width="0.55"/>
<rect x="443.64" y="112.3" width="4.4" height="1.6" fill="#efe04c"/>
<rect x="443.64" y="113.9" width="4.4" height="28.4" fill="#1fbd22"/>
<line x1="445.84" y1="112.3" x2="445.84" y2="142.3" stroke="#0c7a10" stroke-width="0.35" opacity="0.6"/>
<line x1="443.64" y1="110.6" x2="448.04" y2="110.6" stroke="#d8c040" stroke-width="0.6"/>
<rect x="453.93" y="76.1" width="8.2" height="1.6" fill="#387a5b" rx="0.5"/>
<text x="458.03" y="83.91" font-size="4.3" fill="#6a6a70" text-anchor="middle">28</text>
<rect x="456.33" y="90.4" width="3.4" height="51.9" fill="#1d1d21"/>
<line x1="458.03" y1="90.4" x2="458.03" y2="142.3" stroke="#26262b" stroke-width="0.5"/>
<line x1="462.63" y1="90.9" x2="465.63" y2="90.9" stroke="#55555b" stroke-width="0.55"/>
<line x1="462.63" y1="97.5" x2="465.63" y2="97.5" stroke="#55555b" stroke-width="0.55"/>
<line x1="462.63" y1="103.9" x2="465.63" y2="103.9" stroke="#55555b" stroke-width="0.55"/>
<line x1="462.63" y1="110.1" x2="465.63" y2="110.1" stroke="#55555b" stroke-width="0.55"/>
<line x1="462.63" y1="116.7" x2="465.63" y2="116.7" stroke="#55555b" stroke-width="0.55"/>
<line x1="462.63" y1="126.9" x2="465.63" y2="126.9" stroke="#55555b" stroke-width="0.55"/>
<line x1="462.63" y1="134" x2="465.63" y2="134" stroke="#55555b" stroke-width="0.55"/>
<line x1="462.63" y1="138.1" x2="465.63" y2="138.1" stroke="#55555b" stroke-width="0.55"/>
<rect x="466.12" y="76.1" width="8.2" height="1.6" fill="#387a5b" rx="0.5"/>
<text x="470.22" y="83.91" font-size="4.3" fill="#6a6a70" text-anchor="middle">29</text>
<rect x="468.52" y="90.4" width="3.4" height="51.9" fill="#1d1d21"/>
<line x1="470.22" y1="90.4" x2="470.22" y2="142.3" stroke="#26262b" stroke-width="0.5"/>
<line x1="474.82" y1="90.9" x2="477.82" y2="90.9" stroke="#55555b" stroke-width="0.55"/>
<line x1="474.82" y1="97.5" x2="477.82" y2="97.5" stroke="#55555b" stroke-width="0.55"/>
<line x1="474.82" y1="103.9" x2="477.82" y2="103.9" stroke="#55555b" stroke-width="0.55"/>
<line x1="474.82" y1="110.1" x2="477.82" y2="110.1" stroke="#55555b" stroke-width="0.55"/>
<line x1="474.82" y1="116.7" x2="477.82" y2="116.7" stroke="#55555b" stroke-width="0.55"/>
<line x1="474.82" y1="126.9" x2="477.82" y2="126.9" stroke="#55555b" stroke-width="0.55"/>
<line x1="474.82" y1="134" x2="477.82" y2="134" stroke="#55555b" stroke-width="0.55"/>
<line x1="474.82" y1="138.1" x2="477.82" y2="138.1" stroke="#55555b" stroke-width="0.55"/>
<rect x="478.31" y="76.1" width="8.2" height="1.6" fill="#387a5b" rx="0.5"/>
<text x="482.41" y="83.91" font-size="4.3" fill="#6a6a70" text-anchor="middle">30</text>
<rect x="480.71" y="90.4" width="3.4" height="51.9" fill="#1d1d21"/>
<line x1="482.41" y1="90.4" x2="482.41" y2="142.3" stroke="#26262b" stroke-width="0.5"/>
<line x1="487.01" y1="90.9" x2="490.01" y2="90.9" stroke="#55555b" stroke-width="0.55"/>
<line x1="487.01" y1="97.5" x2="490.01" y2="97.5" stroke="#55555b" stroke-width="0.55"/>
<line x1="487.01" y1="103.9" x2="490.01" y2="103.9" stroke="#55555b" stroke-width="0.55"/>
<line x1="487.01" y1="110.1" x2="490.01" y2="110.1" stroke="#55555b" stroke-width="0.55"/>
<line x1="487.01" y1="116.7" x2="490.01" y2="116.7" stroke="#55555b" stroke-width="0.55"/>
<line x1="487.01" y1="126.9" x2="490.01" y2="126.9" stroke="#55555b" stroke-width="0.55"/>
<line x1="487.01" y1="134" x2="490.01" y2="134" stroke="#55555b" stroke-width="0.55"/>
<line x1="487.01" y1="138.1" x2="490.01" y2="138.1" stroke="#55555b" stroke-width="0.55"/>
<rect x="490.5" y="76.1" width="8.2" height="1.6" fill="#387a5b" rx="0.5"/>
<text x="494.6" y="83.91" font-size="4.3" fill="#6a6a70" text-anchor="middle">31</text>
<rect x="492.9" y="90.4" width="3.4" height="51.9" fill="#1d1d21"/>
<line x1="494.6" y1="90.4" x2="494.6" y2="142.3" stroke="#26262b" stroke-width="0.5"/>
<line x1="499.2" y1="90.9" x2="502.2" y2="90.9" stroke="#55555b" stroke-width="0.55"/>
<line x1="499.2" y1="97.5" x2="502.2" y2="97.5" stroke="#55555b" stroke-width="0.55"/>
<line x1="499.2" y1="103.9" x2="502.2" y2="103.9" stroke="#55555b" stroke-width="0.55"/>
<line x1="499.2" y1="110.1" x2="502.2" y2="110.1" stroke="#55555b" stroke-width="0.55"/>
<line x1="499.2" y1="116.7" x2="502.2" y2="116.7" stroke="#55555b" stroke-width="0.55"/>
<line x1="499.2" y1="126.9" x2="502.2" y2="126.9" stroke="#55555b" stroke-width="0.55"/>
<line x1="499.2" y1="134" x2="502.2" y2="134" stroke="#55555b" stroke-width="0.55"/>
<line x1="499.2" y1="138.1" x2="502.2" y2="138.1" stroke="#55555b" stroke-width="0.55"/>
<rect x="502.69" y="76.1" width="8.2" height="1.6" fill="#387a5b" rx="0.5"/>
<text x="506.79" y="83.91" font-size="4.3" fill="#6a6a70" text-anchor="middle">32</text>
<rect x="505.09" y="90.4" width="3.4" height="51.9" fill="#1d1d21"/>
<line x1="506.79" y1="90.4" x2="506.79" y2="142.3" stroke="#26262b" stroke-width="0.5"/>
<line x1="511.39" y1="90.9" x2="514.39" y2="90.9" stroke="#55555b" stroke-width="0.55"/>
<line x1="511.39" y1="97.5" x2="514.39" y2="97.5" stroke="#55555b" stroke-width="0.55"/>
<line x1="511.39" y1="103.9" x2="514.39" y2="103.9" stroke="#55555b" stroke-width="0.55"/>
<line x1="511.39" y1="110.1" x2="514.39" y2="110.1" stroke="#55555b" stroke-width="0.55"/>
<line x1="511.39" y1="116.7" x2="514.39" y2="116.7" stroke="#55555b" stroke-width="0.55"/>
<line x1="511.39" y1="126.9" x2="514.39" y2="126.9" stroke="#55555b" stroke-width="0.55"/>
<line x1="511.39" y1="134" x2="514.39" y2="134" stroke="#55555b" stroke-width="0.55"/>
<line x1="511.39" y1="138.1" x2="514.39" y2="138.1" stroke="#55555b" stroke-width="0.55"/>
<rect x="514.88" y="76.1" width="8.2" height="1.6" fill="#387a5b" rx="0.5"/>
<text x="518.98" y="83.91" font-size="4.3" fill="#6a6a70" text-anchor="middle">33</text>
<rect x="517.28" y="90.4" width="3.4" height="51.9" fill="#1d1d21"/>
<line x1="518.98" y1="90.4" x2="518.98" y2="142.3" stroke="#26262b" stroke-width="0.5"/>
<line x1="523.58" y1="90.9" x2="526.58" y2="90.9" stroke="#55555b" stroke-width="0.55"/>
<line x1="523.58" y1="97.5" x2="526.58" y2="97.5" stroke="#55555b" stroke-width="0.55"/>
<line x1="523.58" y1="103.9" x2="526.58" y2="103.9" stroke="#55555b" stroke-width="0.55"/>
<line x1="523.58" y1="110.1" x2="526.58" y2="110.1" stroke="#55555b" stroke-width="0.55"/>
<line x1="523.58" y1="116.7" x2="526.58" y2="116.7" stroke="#55555b" stroke-width="0.55"/>
<line x1="523.58" y1="126.9" x2="526.58" y2="126.9" stroke="#55555b" stroke-width="0.55"/>
<line x1="523.58" y1="134" x2="526.58" y2="134" stroke="#55555b" stroke-width="0.55"/>
<line x1="523.58" y1="138.1" x2="526.58" y2="138.1" stroke="#55555b" stroke-width="0.55"/>
<rect x="527.07" y="76.1" width="8.2" height="1.6" fill="#387a5b" rx="0.5"/>
<text x="531.17" y="83.91" font-size="4.3" fill="#6a6a70" text-anchor="middle">34</text>
<rect x="529.47" y="90.4" width="3.4" height="51.9" fill="#1d1d21"/>
<line x1="531.17" y1="90.4" x2="531.17" y2="142.3" stroke="#26262b" stroke-width="0.5"/>
<line x1="535.77" y1="90.9" x2="538.77" y2="90.9" stroke="#55555b" stroke-width="0.55"/>
<line x1="535.77" y1="97.5" x2="538.77" y2="97.5" stroke="#55555b" stroke-width="0.55"/>
<line x1="535.77" y1="103.9" x2="538.77" y2="103.9" stroke="#55555b" stroke-width="0.55"/>
<line x1="535.77" y1="110.1" x2="538.77" y2="110.1" stroke="#55555b" stroke-width="0.55"/>
<line x1="535.77" y1="116.7" x2="538.77" y2="116.7" stroke="#55555b" stroke-width="0.55"/>
<line x1="535.77" y1="126.9" x2="538.77" y2="126.9" stroke="#55555b" stroke-width="0.55"/>
<line x1="535.77" y1="134" x2="538.77" y2="134" stroke="#55555b" stroke-width="0.55"/>
<line x1="535.77" y1="138.1" x2="538.77" y2="138.1" stroke="#55555b" stroke-width="0.55"/>
<rect x="539.26" y="76.1" width="8.2" height="1.6" fill="#387a5b" rx="0.5"/>
<text x="543.36" y="83.91" font-size="4.3" fill="#6a6a70" text-anchor="middle">35</text>
<rect x="541.66" y="90.4" width="3.4" height="51.9" fill="#1d1d21"/>
<line x1="543.36" y1="90.4" x2="543.36" y2="142.3" stroke="#26262b" stroke-width="0.5"/>
<line x1="547.96" y1="90.9" x2="550.96" y2="90.9" stroke="#55555b" stroke-width="0.55"/>
<line x1="547.96" y1="97.5" x2="550.96" y2="97.5" stroke="#55555b" stroke-width="0.55"/>
<line x1="547.96" y1="103.9" x2="550.96" y2="103.9" stroke="#55555b" stroke-width="0.55"/>
<line x1="547.96" y1="110.1" x2="550.96" y2="110.1" stroke="#55555b" stroke-width="0.55"/>
<line x1="547.96" y1="116.7" x2="550.96" y2="116.7" stroke="#55555b" stroke-width="0.55"/>
<line x1="547.96" y1="126.9" x2="550.96" y2="126.9" stroke="#55555b" stroke-width="0.55"/>
<line x1="547.96" y1="134" x2="550.96" y2="134" stroke="#55555b" stroke-width="0.55"/>
<line x1="547.96" y1="138.1" x2="550.96" y2="138.1" stroke="#55555b" stroke-width="0.55"/>
<rect x="541.16" y="109.3" width="4.4" height="4.6" fill="#efe04c"/>
<rect x="541.16" y="113.9" width="4.4" height="28.4" fill="#1fbd22"/>
<line x1="543.36" y1="109.3" x2="543.36" y2="142.3" stroke="#0c7a10" stroke-width="0.35" opacity="0.6"/>
<rect x="551.45" y="76.1" width="8.2" height="1.6" fill="#387a5b" rx="0.5"/>
<text x="555.55" y="83.91" font-size="4.3" fill="#6a6a70" text-anchor="middle">36</text>
<rect x="553.85" y="90.4" width="3.4" height="51.9" fill="#1d1d21"/>
<line x1="555.55" y1="90.4" x2="555.55" y2="142.3" stroke="#26262b" stroke-width="0.5"/>
<line x1="560.15" y1="90.9" x2="563.15" y2="90.9" stroke="#55555b" stroke-width="0.55"/>
<line x1="560.15" y1="97.5" x2="563.15" y2="97.5" stroke="#55555b" stroke-width="0.55"/>
<line x1="560.15" y1="103.9" x2="563.15" y2="103.9" stroke="#55555b" stroke-width="0.55"/>
<line x1="560.15" y1="110.1" x2="563.15" y2="110.1" stroke="#55555b" stroke-width="0.55"/>
<line x1="560.15" y1="116.7" x2="563.15" y2="116.7" stroke="#55555b" stroke-width="0.55"/>
<line x1="560.15" y1="126.9" x2="563.15" y2="126.9" stroke="#55555b" stroke-width="0.55"/>
<line x1="560.15" y1="134" x2="563.15" y2="134" stroke="#55555b" stroke-width="0.55"/>
<line x1="560.15" y1="138.1" x2="563.15" y2="138.1" stroke="#55555b" stroke-width="0.55"/>
<rect x="563.64" y="76.1" width="8.2" height="1.6" fill="#387a5b" rx="0.5"/>
<text x="567.74" y="83.91" font-size="4.3" fill="#6a6a70" text-anchor="middle">37</text>
<rect x="566.04" y="90.4" width="3.4" height="51.9" fill="#1d1d21"/>
<line x1="567.74" y1="90.4" x2="567.74" y2="142.3" stroke="#26262b" stroke-width="0.5"/>
<line x1="572.34" y1="90.9" x2="575.34" y2="90.9" stroke="#55555b" stroke-width="0.55"/>
<line x1="572.34" y1="97.5" x2="575.34" y2="97.5" stroke="#55555b" stroke-width="0.55"/>
<line x1="572.34" y1="103.9" x2="575.34" y2="103.9" stroke="#55555b" stroke-width="0.55"/>
<line x1="572.34" y1="110.1" x2="575.34" y2="110.1" stroke="#55555b" stroke-width="0.55"/>
<line x1="572.34" y1="116.7" x2="575.34" y2="116.7" stroke="#55555b" stroke-width="0.55"/>
<line x1="572.34" y1="126.9" x2="575.34" y2="126.9" stroke="#55555b" stroke-width="0.55"/>
<line x1="572.34" y1="134" x2="575.34" y2="134" stroke="#55555b" stroke-width="0.55"/>
<line x1="572.34" y1="138.1" x2="575.34" y2="138.1" stroke="#55555b" stroke-width="0.55"/>
<rect x="575.83" y="76.1" width="8.2" height="1.6" fill="#387a5b" rx="0.5"/>
<text x="579.93" y="83.91" font-size="4.3" fill="#6a6a70" text-anchor="middle">38</text>
<rect x="578.23" y="90.4" width="3.4" height="51.9" fill="#1d1d21"/>
<line x1="579.93" y1="90.4" x2="579.93" y2="142.3" stroke="#26262b" stroke-width="0.5"/>
<line x1="584.53" y1="90.9" x2="587.53" y2="90.9" stroke="#55555b" stroke-width="0.55"/>
<line x1="584.53" y1="97.5" x2="587.53" y2="97.5" stroke="#55555b" stroke-width="0.55"/>
<line x1="584.53" y1="103.9" x2="587.53" y2="103.9" stroke="#55555b" stroke-width="0.55"/>
<line x1="584.53" y1="110.1" x2="587.53" y2="110.1" stroke="#55555b" stroke-width="0.55"/>
<line x1="584.53" y1="116.7" x2="587.53" y2="116.7" stroke="#55555b" stroke-width="0.55"/>
<line x1="584.53" y1="126.9" x2="587.53" y2="126.9" stroke="#55555b" stroke-width="0.55"/>
<line x1="584.53" y1="134" x2="587.53" y2="134" stroke="#55555b" stroke-width="0.55"/>
<line x1="584.53" y1="138.1" x2="587.53" y2="138.1" stroke="#55555b" stroke-width="0.55"/>
<rect x="577.73" y="112.3" width="4.4" height="1.6" fill="#efe04c"/>
<rect x="577.73" y="113.9" width="4.4" height="28.4" fill="#1fbd22"/>
<line x1="579.93" y1="112.3" x2="579.93" y2="142.3" stroke="#0c7a10" stroke-width="0.35" opacity="0.6"/>
<rect x="588.02" y="76.1" width="6.98" height="1.6" fill="#387a5b" rx="0.5"/>
<text x="592.12" y="83.91" font-size="4.3" fill="#6a6a70" text-anchor="middle">39</text>
<rect x="590.42" y="90.4" width="3.4" height="51.9" fill="#1d1d21"/>
<line x1="592.12" y1="90.4" x2="592.12" y2="142.3" stroke="#26262b" stroke-width="0.5"/>
<rect x="589.92" y="111.3" width="4.4" height="2.6" fill="#efe04c"/>
<rect x="589.92" y="113.9" width="4.4" height="28.4" fill="#1fbd22"/>
<line x1="592.12" y1="111.3" x2="592.12" y2="142.3" stroke="#0c7a10" stroke-width="0.35" opacity="0.6"/>
<rect x="113" y="148.4" width="482" height="2.4" fill="#303035"/>
<rect x="113" y="148.4" width="357" height="2.4" fill="#56565c"/>
<rect x="113" y="143.5" width="482" height="4.9" fill="#242429"/>
<rect x="595" y="71.5" width="2" height="80" fill="#1b1b1f"/>
<rect x="597" y="71.5" width="24.5" height="80" fill="#26262b"/>
<rect x="603" y="76.1" width="13" height="1.6" fill="#2a6f8a" rx="0.5"/>
<text x="609.5" y="83.8" font-size="4.3" fill="#e8e8ea" font-weight="bold" text-anchor="middle">Bus 1</text>
<text x="603.4" y="92.06" font-size="3.3" fill="#707076" text-anchor="end">0</text>
<text x="603.4" y="98.66" font-size="3.3" fill="#707076" text-anchor="end">-5</text>
<text x="603.4" y="105.06" font-size="3.3" fill="#707076" text-anchor="end">-10</text>
<text x="603.4" y="111.25" font-size="3.3" fill="#707076" text-anchor="end">-15</text>
<text x="603.4" y="117.86" font-size="3.3" fill="#707076" text-anchor="end">-20</text>
<text x="603.4" y="128.06" font-size="3.3" fill="#707076" text-anchor="end">-30</text>
<text x="603.4" y="135.16" font-size="3.3" fill="#707076" text-anchor="end">-40</text>
<text x="603.4" y="139.25" font-size="3.3" fill="#707076" text-anchor="end">-50</text>
<rect x="605.6" y="90.4" width="8.1" height="51.9" fill="#19191c"/>
<rect x="605.8" y="97.8" width="3.65" height="6.1" fill="#efe04c"/>
<rect x="605.8" y="103.9" width="3.65" height="38.4" fill="#1fbd22"/>
<rect x="609.95" y="97.8" width="3.65" height="6.1" fill="#efe04c"/>
<rect x="609.95" y="103.9" width="3.65" height="38.4" fill="#1fbd22"/>
<line x1="605.6" y1="92.5" x2="613.7" y2="92.5" stroke="#3a3a40" stroke-width="0.4"/>
<rect x="621.5" y="71.5" width="1.5" height="80" fill="#1b1b1f"/>
<rect x="623" y="71.5" width="42.3" height="80" fill="#26262b"/>
<rect x="623" y="71.5" width="42.3" height="9.1" fill="#2b2b31"/>
<text x="626" y="77.98" font-size="4.5" fill="#e2e2e6" font-weight="bold" textLength="28.8" lengthAdjust="spacingAndGlyphs">Control Room</text>
<text x="630" y="87.04" font-size="4.4" fill="#e2e2e6" font-weight="bold">TP</text>
<text x="639" y="87.04" font-size="4.4" fill="#d8402c" textLength="8" lengthAdjust="spacingAndGlyphs">+2.5</text>
<rect x="640" y="91" width="7.4" height="55" fill="#19191c"/>
<rect x="640.2" y="98.8" width="3.3" height="47" fill="#b4923a"/>
<rect x="643.9" y="98.8" width="3.3" height="47" fill="#b4923a"/>
<text x="637.8" y="92.66" font-size="3.3" fill="#707076" text-anchor="end">0</text>
<text x="637.8" y="99.66" font-size="3.3" fill="#707076" text-anchor="end">-5</text>
<text x="637.8" y="107.16" font-size="3.3" fill="#707076" text-anchor="end">-10</text>
<text x="637.8" y="114.16" font-size="3.3" fill="#707076" text-anchor="end">-15</text>
<text x="637.8" y="121.16" font-size="3.3" fill="#707076" text-anchor="end">-20</text>
<text x="637.8" y="132.66" font-size="3.3" fill="#707076" text-anchor="end">-30</text>
<text x="637.8" y="139.66" font-size="3.3" fill="#707076" text-anchor="end">-40</text>
<text x="637.8" y="144.16" font-size="3.3" fill="#707076" text-anchor="end">-50</text>
<rect x="665.3" y="71.5" width="1.3" height="80" fill="#1b1b1f"/>
<rect x="666.6" y="71.5" width="77" height="80" fill="#26262b"/>
<rect x="666.6" y="71.5" width="77" height="9.1" fill="#2b2b31"/>
<text x="669" y="77.98" font-size="4.5" fill="#e2e2e6" font-weight="bold" textLength="20" lengthAdjust="spacingAndGlyphs">Loudness</text>
<text x="699.3" y="77.77" font-size="3.9" fill="#6e6e74" textLength="29.5" lengthAdjust="spacingAndGlyphs">BS.1770-1 (LU)</text>
<circle cx="733.6" cy="76.4" r="0.55" fill="#8a8a90"/>
<circle cx="735.7" cy="76.4" r="0.55" fill="#8a8a90"/>
<circle cx="737.8" cy="76.4" r="0.55" fill="#8a8a90"/>
<text x="678.6" y="87.04" font-size="4.4" fill="#e2e2e6" font-weight="bold" text-anchor="middle">M</text>
<text x="699" y="86.97" font-size="4.2" fill="#5b8fe0" textLength="10.6" lengthAdjust="spacingAndGlyphs">+17.3</text>
<rect x="674.5" y="91" width="8.3" height="43.2" fill="#19191c"/>
<rect x="674.7" y="97.5" width="3.7" height="8.2" fill="#efc81e"/>
<rect x="674.7" y="105.7" width="3.7" height="28.3" fill="#6a9be8"/>
<rect x="678.9" y="97.5" width="3.7" height="8.2" fill="#efc81e"/>
<rect x="678.9" y="105.7" width="3.7" height="28.3" fill="#6a9be8"/>
<text x="692" y="93.62" font-size="3.2" fill="#707076" text-anchor="middle">+9</text>
<text x="692" y="106.46" font-size="3.6" fill="#d8d8dc" font-weight="bold" text-anchor="middle">0</text>
<text x="692" y="120.62" font-size="3.2" fill="#707076" text-anchor="middle">-9</text>
<text x="692" y="134.32" font-size="3.2" fill="#707076" text-anchor="middle">-15</text>
<line x1="684.3" y1="92.5" x2="686" y2="92.5" stroke="#4c4c52" stroke-width="0.4"/>
<line x1="698" y1="92.5" x2="699.7" y2="92.5" stroke="#4c4c52" stroke-width="0.4"/>
<line x1="684.3" y1="105.2" x2="686" y2="105.2" stroke="#4c4c52" stroke-width="0.4"/>
<line x1="698" y1="105.2" x2="699.7" y2="105.2" stroke="#4c4c52" stroke-width="0.4"/>
<line x1="684.3" y1="119.5" x2="686" y2="119.5" stroke="#4c4c52" stroke-width="0.4"/>
<line x1="698" y1="119.5" x2="699.7" y2="119.5" stroke="#4c4c52" stroke-width="0.4"/>
<line x1="684.3" y1="133.2" x2="686" y2="133.2" stroke="#4c4c52" stroke-width="0.4"/>
<line x1="698" y1="133.2" x2="699.7" y2="133.2" stroke="#4c4c52" stroke-width="0.4"/>
<rect x="701.7" y="91" width="5.5" height="43.2" fill="#19191c"/>
<rect x="701.9" y="92.5" width="5.1" height="41.5" fill="#6a9be8"/>
<line x1="669" y1="137.2" x2="715.5" y2="137.2" stroke="#3a3a40" stroke-width="0.4"/>
<rect x="670" y="140.3" width="18.8" height="7.6" fill="#26262b" rx="3.8" stroke="#3a3a41" stroke-width="0.45"/>
<text x="679.4" y="145.67" font-size="4.5" fill="#7c7c82" text-anchor="middle">Pause</text>
<rect x="693.5" y="140.3" width="21.1" height="7.6" fill="#26262b" rx="3.8" stroke="#3a3a41" stroke-width="0.45"/>
<text x="704.05" y="145.67" font-size="4.5" fill="#7c7c82" text-anchor="middle">Reset</text>
<text x="718.6" y="89.17" font-size="4.2" fill="#e2e2e6" font-weight="bold">Short</text>
<text x="718.6" y="94.67" font-size="4.2" fill="#d8402c">+7.6</text>
<text x="718.6" y="105.67" font-size="4.2" fill="#e2e2e6" font-weight="bold">Short Max</text>
<text x="718.6" y="111.07" font-size="4.2" fill="#d8402c">+14.8</text>
<text x="718.6" y="122.17" font-size="4.2" fill="#e2e2e6" font-weight="bold">Range</text>
<text x="718.6" y="127.77" font-size="4.2" fill="#5b8fe0">10.5</text>
<text x="718.6" y="138.47" font-size="4.2" fill="#e2e2e6" font-weight="bold">Integrated</text>
<text x="718.6" y="143.87" font-size="4.2" fill="#d8402c">+17.8</text>
<defs><clipPath id="vc"><rect x="743.6" y="71" width="143.4" height="80.6"/></clipPath>
<linearGradient id="vbg" x1="0" y1="0" x2="1" y2="0"><stop offset="0" stop-color="#dcc0b4"/><stop offset="0.22" stop-color="#e2d2d4"/><stop offset="0.5" stop-color="#cfc6dc"/><stop offset="0.8" stop-color="#bdb4d6"/><stop offset="1" stop-color="#c6b6d4"/></linearGradient>
<linearGradient id="vfl" x1="0" y1="0" x2="0" y2="1"><stop offset="0" stop-color="#c9bbdc"/><stop offset="1" stop-color="#a596c4"/></linearGradient>
<linearGradient id="vsh" x1="0" y1="0" x2="0" y2="1"><stop offset="0" stop-color="#f8f8fc"/><stop offset="0.6" stop-color="#f0f0fa"/><stop offset="1" stop-color="#b8d0f0"/></linearGradient>
<filter id="vb" x="-10%" y="-10%" width="120%" height="120%"><feGaussianBlur stdDeviation="0.7"/></filter></defs>
<g clip-path="url(#vc)">
<g filter="url(#vb)">
<rect x="740.6" y="68" width="149.4" height="86.6" fill="url(#vbg)"/>
<text x="768.3" y="82.7" font-size="24" fill="#fafafd" textLength="108.4" lengthAdjust="spacingAndGlyphs">CITYSIDE</text>
<rect x="740" y="68" width="7.4" height="66" fill="#4e262a"/>
<path d="M748 78 L792 100 M748 84 L790 104" fill="none" stroke="#c8a8a8" stroke-width="0.6" opacity="0.6"/>
<path d="M747 104 L756 98.5 L766 97.5 L775 100 L790 106 L800 110 L800 132 L747 132Z" fill="#a86a6a" opacity="0.9"/>
<rect x="747" y="116" width="53" height="16" fill="#8e5560" opacity="0.9"/>
<rect x="747.4" y="110" width="5.6" height="21.5" fill="#c88860" opacity="0.8"/>
<path d="M836 100 L838 92.5 L848 92 L849 99 L858 102 L866 96 L870 90.5 L878 89 L882 94 L887 96 L887 120 L836 120Z" fill="#ac7a8c" opacity="0.92"/>
<rect x="839" y="92" width="9" height="8" fill="#7a4458" opacity="0.9"/>
<rect x="868" y="90" width="13" height="14" fill="#94647a" opacity="0.85"/>
<rect x="852" y="104" width="14" height="8" fill="#d0a0b0" opacity="0.8"/>
<rect x="836" y="108" width="51" height="12" fill="#8a5270" opacity="0.9"/>
<path d="M849 106 Q856 97 868 101 Q860 103 858 108 Z" fill="#58a8e8" opacity="0.95"/>
<ellipse cx="857" cy="103.6" rx="5" ry="2.6" fill="#7cc4f4" opacity="0.9"/>
<ellipse cx="872" cy="99" rx="3.4" ry="2.4" fill="#e8d8c0" opacity="0.7"/>
<text x="776" y="106.9" font-size="30" fill="url(#vsh)" textLength="91" lengthAdjust="spacingAndGlyphs" opacity="0.72">SHOW</text>
<rect x="866.7" y="120" width="20.3" height="5.4" fill="#d4c2b4"/>
<rect x="800" y="125.3" width="87" height="4.7" fill="#6a3a50" opacity="0.85"/>
<rect x="866.7" y="119.2" width="20.3" height="1.4" fill="#8a3a48"/>
<path d="M740 131.5 L890 128 L890 134 L740 134Z" fill="#2a1a24"/>
<path d="M740 133.8 L890 130 L890 147 L740 147Z" fill="url(#vfl)"/>
<rect x="740" y="146.8" width="150" height="7.2" fill="#120f16"/>
<line x1="862.9" y1="129" x2="862.9" y2="148" stroke="#221a26" stroke-width="0.9"/>
<circle cx="862.9" cy="130" r="1" fill="#221a26"/>
<path d="M883.5 100 L888 97 L888 124 L884 122Z" fill="#14121a"/>
<path d="M831.5 118 L835 112 L841 109.5 L848 110 L853 114 L854 124 L851 137 L833 137Z" fill="#15131a"/>
<ellipse cx="843.4" cy="106.6" rx="3.2" ry="4" fill="#7a5a48"/>
<ellipse cx="843.4" cy="104" rx="3.5" ry="2.4" fill="#20160f"/>
<ellipse cx="851.5" cy="130.6" rx="1.6" ry="1.8" fill="#b08868"/>
<path d="M839 137 L856 137 L856 146 L839 146Z" fill="#3c4a40"/>
<line x1="839" y1="137.4" x2="856" y2="137.4" stroke="#a8b0a0" stroke-width="0.8"/>
<line x1="839" y1="145.6" x2="856" y2="145.6" stroke="#8a9488" stroke-width="0.7"/>
<ellipse cx="849.5" cy="141.5" rx="2.2" ry="2.6" fill="#a8a890" opacity="0.7"/>
<ellipse cx="840" cy="150.5" rx="9" ry="3.8" fill="#d8d4c4"/>
<ellipse cx="840" cy="151.4" rx="6.6" ry="2.6" fill="#8a8878"/>
<path d="M764 108 L768 101 L775 98.4 L783 98.6 L789 102 L791 110 L789 124 L787.5 152 L763 152 L765 130Z" fill="#14121a"/>
<path d="M766 102 L761 112 L758.5 121 L762 126 L768 116Z" fill="#15131b"/>
<ellipse cx="779" cy="90" rx="3.8" ry="5.4" fill="#5e4034"/>
<path d="M774.4 90 Q773.6 82.6 779 82.8 Q784.6 82.8 783.8 90 Q781 86 777.6 87.2 Q775.4 88 774.4 90Z" fill="#1c120e"/>
<rect x="777" y="94.5" width="4.4" height="4.5" fill="#4a3028"/>
<path d="M747 104.6 L761 99.4" fill="none" stroke="#7a6438" stroke-width="1.8"/>
<path d="M757 103 L772 118" fill="none" stroke="#3a2a20" stroke-width="1" opacity="0"/>
<path d="M759.9 124 Q758.5 133 764 137.6 Q770 140.4 775 135.5 Q778 131.5 783.4 129.6 Q784.6 126 780.6 126.4 Q777.6 127 778.4 123.6 Q780 118.6 784.2 115.4 Q783 113.6 779 115 Q772 118.6 766.6 121 Q762 121.4 759.9 124Z" fill="#e4dcc0"/>
<path d="M765.5 125.5 Q771 122.6 775.4 124 Q776 128.5 772.5 132.6 Q768.5 136 765.4 133 Q764 129 765.5 125.5Z" fill="#2e2018"/>
<path d="M777 120 Q785 116 790.6 116.6 L790.8 120 Q784 121 778.4 124Z" fill="#b08c70"/>
<ellipse cx="763.4" cy="123.4" rx="2.2" ry="2.6" fill="#8a6450"/>
<path d="M801.5 152 L799.2 140.5 L793.2 122.5 L791.7 107.5 Q792.4 98 795.4 94.4 Q801 90.4 808 88.8 L816 88.6 Q824 89.6 830 92.5 Q834.4 98 835.2 104.5 L834.5 113.5 L828.5 119.5 L830 130 L830 152Z" fill="#14131b"/>
<path d="M795.6 95.4 Q800.6 91.2 808 89.6" fill="none" stroke="#3a4258" stroke-width="1" opacity="0.8"/>
<path d="M821 90 Q828 91.4 832 96.6" fill="none" stroke="#343a50" stroke-width="0.9" opacity="0.7"/>
<path d="M808 88.4 L812.2 96.5 L816.2 88.4Z" fill="#c4bcbc"/>
<path d="M810.4 88.8 L812.2 93.6 L814 88.8Z" fill="#1a161e"/>
<ellipse cx="812.6" cy="80.4" rx="5.6" ry="8" fill="#a0765a"/>
<path d="M806.4 81.4 Q804.8 68.4 812.6 68.8 Q820.6 68.8 818.8 80.4 Q817.6 74 812.6 73.8 Q807.8 73.8 806.4 81.4Z" fill="#1c120d"/>
<ellipse cx="809.6" cy="82.8" rx="2.4" ry="4.6" fill="#74503c" opacity="0.6"/>
<path d="M816.4 85.2 L824.4 86.6 L822 100 L818.6 114 L815.4 128 L813.6 140" fill="none" stroke="#6e4c22" stroke-width="3.4" stroke-linecap="round" stroke-linejoin="round"/>
<path d="M823.4 90 L819.6 112 L816 130" fill="none" stroke="#b8903e" stroke-width="0.9" opacity="0.7"/>
<path d="M810.6 136 Q811 130.5 816 130 Q822 130.5 822.6 138 Q822 147 816 148.4 Q810.4 147.6 810.6 136Z" fill="#5e4220"/>
<ellipse cx="816.4" cy="140" rx="3.4" ry="4.6" fill="#7e5c2c" opacity="0.9"/>
<ellipse cx="824.6" cy="109" rx="3.3" ry="2.8" fill="#b08464"/>
<ellipse cx="809.8" cy="131.6" rx="3.2" ry="2.8" fill="#b08464"/>
<line x1="832" y1="85.5" x2="835.4" y2="93.6" stroke="#1a161e" stroke-width="1.3"/>
<ellipse cx="819.4" cy="86" rx="2" ry="1" fill="#d8d8e0" opacity="0.7"/>
</g>
<rect x="750.6" y="138.6" width="9.4" height="6.2" fill="none" rx="0.8" stroke="#e8e8f0" stroke-width="0.5" opacity="0.45"/>
<rect x="752.6" y="140.4" width="5.4" height="2.8" fill="none" rx="0.3" stroke="#e8e8f0" stroke-width="0.4" opacity="0.4"/>
<rect x="871.4" y="138.6" width="9.4" height="6.2" fill="none" rx="0.8" stroke="#e8e8f0" stroke-width="0.5" opacity="0.45"/>
<rect x="874.4" y="140.8" width="4.4" height="2.6" fill="none" rx="0.3" stroke="#e8e8f0" stroke-width="0.4" opacity="0.4"/>
</g>
<text x="760" y="161.21" font-size="4.6" fill="#6e6e74" textLength="11.5" lengthAdjust="spacingAndGlyphs">Bus 1</text>
<path d="M775.5 159.6 h4.5 m-1.3 -1.2 l1.3 1.2 l-1.3 1.2" fill="none" stroke="#6e6e74" stroke-width="0.45"/>
<text x="784.5" y="161.21" font-size="4.6" fill="#6e6e74" textLength="10.5" lengthAdjust="spacingAndGlyphs">Main</text>
<path d="M798 159 l1.5 1.5 l1.5 -1.5" fill="none" stroke="#6e6e74" stroke-width="0.5"/>
<line x1="810" y1="154" x2="810" y2="165.5" stroke="#303036" stroke-width="0.5"/>
<path d="M817.4 158.3 h1.6 l2.2 -2 v6.6 l-2.2 -2 h-1.6z" fill="#e8e8ec"/>
<path d="M822.6 158 a2 2 0 0 1 0 3.2 M823.6 156.9 a3.4 3.4 0 0 1 0 5.4" fill="none" stroke="#e8e8ec" stroke-width="0.5"/>
<line x1="829.5" y1="159.6" x2="860" y2="159.6" stroke="#2fa84a" stroke-width="0.9"/>
<circle cx="860.6" cy="159.6" r="1.25" fill="#d8d8dc"/>
<rect x="866.7" y="156.2" width="15.1" height="6.9" fill="#26262b" rx="1" stroke="#3e3e45" stroke-width="0.5"/>
<text x="874.2" y="161.17" font-size="4.2" fill="#8a8a90" text-anchor="middle">DIM</text>
<rect x="113" y="151.5" width="94" height="14.7" fill="#222227"/>
<text x="137.8" y="162.21" font-size="8.3" fill="#f4f4f6" font-weight="bold" textLength="43.6" lengthAdjust="spacingAndGlyphs">01:02:03:20</text>
<text x="222.6" y="160.88" font-size="4.8" fill="#e8e8ea" font-weight="bold">Timeline 1</text>
<rect x="113" y="166.2" width="94" height="12.3" fill="#252529"/>
<line x1="113" y1="166.2" x2="207" y2="166.2" stroke="#1a1a1d" stroke-width="0.6"/>
<text x="142" y="174.35" font-size="5" fill="#96969c" textLength="27.8" lengthAdjust="spacingAndGlyphs">01:01:57:14</text>
<path d="M127.6 171.3 v2.6 M128.4 171.3 l1.8 1.3 l-1.8 1.3z" fill="#8e8e94" stroke="#8e8e94" stroke-width="0.4"/>
<rect x="113" y="178.5" width="94" height="12.3" fill="#252529"/>
<line x1="113" y1="178.5" x2="207" y2="178.5" stroke="#1a1a1d" stroke-width="0.6"/>
<text x="142" y="186.65" font-size="5" fill="#96969c" textLength="27.8" lengthAdjust="spacingAndGlyphs">01:01:57:14</text>
<path d="M130.4 183.6 v2.6 M129.6 183.6 l-1.8 1.3 l1.8 1.3z" fill="#8e8e94" stroke="#8e8e94" stroke-width="0.4"/>
<rect x="113" y="190.8" width="94" height="12.3" fill="#252529"/>
<line x1="113" y1="190.8" x2="207" y2="190.8" stroke="#1a1a1d" stroke-width="0.6"/>
<text x="142" y="198.95" font-size="5" fill="#96969c" textLength="27.8" lengthAdjust="spacingAndGlyphs">00:00:00:00</text>
<circle cx="129" cy="197.2" r="1.5" fill="none" stroke="#6a6a70" stroke-width="0.4"/>
<line x1="207" y1="166.2" x2="207" y2="203.5" stroke="#1a1a1d" stroke-width="0.8"/>
<rect x="113" y="203.1" width="94" height="3.3" fill="#1a1a1d"/>
<text x="219" y="174.11" font-size="2.6" fill="#77777d" text-anchor="middle">::::</text>
<path d="M216.2 176.6 h3.5 l0.8 0.8 l1.4 -1.8" fill="none" stroke="#8a8a90" stroke-width="0.4"/>
<line x1="216.6" y1="175.2" x2="220.8" y2="175.2" stroke="#66666c" stroke-width="0.35"/>
<text x="207.5" y="196.87" font-size="3.9" fill="#8a8a90">0:00</text>
<line x1="207.3" y1="189" x2="207.3" y2="198" stroke="#66666c" stroke-width="0.4"/>
<path d="M535.8 175.2 h3.8 v4.6 l-1.9 -1.3 l-1.9 1.3z" fill="#2f7fe8"/>
<path d="M544.2 176.9 l1.6 1.6 l1.6 -1.6" fill="none" stroke="#8a8a90" stroke-width="0.5"/>
<rect x="553.9" y="175.3" width="3.4" height="4.4" fill="#2f7fe8" rx="0.9"/>
<path d="M562 176.9 l1.6 1.6 l1.6 -1.6" fill="none" stroke="#8a8a90" stroke-width="0.5"/>
<line x1="569.4" y1="171.5" x2="569.4" y2="183.5" stroke="#38383e" stroke-width="0.5"/>
<path d="M574.6 177.9 l1 -3 l1.1 6.4 l1.1 -8 l1.3 9 l1.1 -7 l1.1 5 l0.9 -7 l1.1 8 l1.1 -3.4" fill="none" stroke="#7c7c82" stroke-width="0.55"/>
<path d="M595.7 174.5 l-1.2 1.4 h2.4z M595.7 180.5 l-1.2 -1.4 h2.4z" fill="#66666c"/>
<rect x="605.4" y="176.3" width="2.4" height="2.4" fill="#d0d0d4" rx="0.3"/>
<line x1="609" y1="177.5" x2="644" y2="177.5" stroke="#3a3a40" stroke-width="0.5"/>
<path d="M649.6 176.4 l-1.2 1.1 l1.2 1.1 M651 176.4 l1.2 1.1 l-1.2 1.1" fill="none" stroke="#66666c" stroke-width="0.45"/>
<line x1="656" y1="177.5" x2="696" y2="177.5" stroke="#3a3a40" stroke-width="0.5"/>
<circle cx="671.3" cy="177.5" r="1.5" fill="#c4c4c8"/>
<line x1="207" y1="203.3" x2="777" y2="203.3" stroke="#18181b" stroke-width="0.6"/>
<line x1="533.3" y1="189" x2="533.3" y2="198" stroke="#5e5e64" stroke-width="0.45"/>
<text x="533.9" y="196.74" font-size="4.4" fill="#8a8a90" textLength="25.4" lengthAdjust="spacingAndGlyphs">01:01:39:00</text>
<line x1="577.1" y1="189" x2="577.1" y2="198" stroke="#5e5e64" stroke-width="0.45"/>
<text x="577.7" y="196.74" font-size="4.4" fill="#8a8a90" textLength="25.4" lengthAdjust="spacingAndGlyphs">01:01:48:00</text>
<line x1="624.7" y1="189" x2="624.7" y2="198" stroke="#5e5e64" stroke-width="0.45"/>
<text x="625.3" y="196.74" font-size="4.4" fill="#8a8a90" textLength="25.4" lengthAdjust="spacingAndGlyphs">01:01:57:00</text>
<line x1="673.2" y1="189" x2="673.2" y2="198" stroke="#5e5e64" stroke-width="0.45"/>
<text x="673.8" y="196.74" font-size="4.4" fill="#8a8a90" textLength="25.4" lengthAdjust="spacingAndGlyphs">01:02:06:00</text>
<line x1="721.7" y1="189" x2="721.7" y2="198" stroke="#5e5e64" stroke-width="0.45"/>
<text x="722.3" y="196.74" font-size="4.4" fill="#8a8a90" textLength="25.4" lengthAdjust="spacingAndGlyphs">01:02:15:00</text>
<line x1="210.63" y1="201" x2="210.63" y2="203" stroke="#3e3e44" stroke-width="0.35"/>
<line x1="216.01" y1="201" x2="216.01" y2="203" stroke="#3e3e44" stroke-width="0.35"/>
<line x1="221.39" y1="201" x2="221.39" y2="203" stroke="#3e3e44" stroke-width="0.35"/>
<line x1="226.77" y1="201" x2="226.77" y2="203" stroke="#3e3e44" stroke-width="0.35"/>
<line x1="232.14" y1="201" x2="232.14" y2="203" stroke="#3e3e44" stroke-width="0.35"/>
<line x1="237.52" y1="201" x2="237.52" y2="203" stroke="#3e3e44" stroke-width="0.35"/>
<line x1="248.28" y1="201" x2="248.28" y2="203" stroke="#3e3e44" stroke-width="0.35"/>
<line x1="253.66" y1="201" x2="253.66" y2="203" stroke="#3e3e44" stroke-width="0.35"/>
<line x1="259.03" y1="201" x2="259.03" y2="203" stroke="#3e3e44" stroke-width="0.35"/>
<line x1="264.41" y1="201" x2="264.41" y2="203" stroke="#3e3e44" stroke-width="0.35"/>
<line x1="269.79" y1="201" x2="269.79" y2="203" stroke="#3e3e44" stroke-width="0.35"/>
<line x1="275.17" y1="201" x2="275.17" y2="203" stroke="#3e3e44" stroke-width="0.35"/>
<line x1="280.54" y1="201" x2="280.54" y2="203" stroke="#3e3e44" stroke-width="0.35"/>
<line x1="285.92" y1="201" x2="285.92" y2="203" stroke="#3e3e44" stroke-width="0.35"/>
<line x1="296.68" y1="201" x2="296.68" y2="203" stroke="#3e3e44" stroke-width="0.35"/>
<line x1="302.06" y1="201" x2="302.06" y2="203" stroke="#3e3e44" stroke-width="0.35"/>
<line x1="307.43" y1="201" x2="307.43" y2="203" stroke="#3e3e44" stroke-width="0.35"/>
<line x1="312.81" y1="201" x2="312.81" y2="203" stroke="#3e3e44" stroke-width="0.35"/>
<line x1="318.19" y1="201" x2="318.19" y2="203" stroke="#3e3e44" stroke-width="0.35"/>
<line x1="323.57" y1="201" x2="323.57" y2="203" stroke="#3e3e44" stroke-width="0.35"/>
<line x1="328.94" y1="201" x2="328.94" y2="203" stroke="#3e3e44" stroke-width="0.35"/>
<line x1="334.32" y1="201" x2="334.32" y2="203" stroke="#3e3e44" stroke-width="0.35"/>
<line x1="345.08" y1="201" x2="345.08" y2="203" stroke="#3e3e44" stroke-width="0.35"/>
<line x1="350.46" y1="201" x2="350.46" y2="203" stroke="#3e3e44" stroke-width="0.35"/>
<line x1="355.83" y1="201" x2="355.83" y2="203" stroke="#3e3e44" stroke-width="0.35"/>
<line x1="361.21" y1="201" x2="361.21" y2="203" stroke="#3e3e44" stroke-width="0.35"/>
<line x1="366.59" y1="201" x2="366.59" y2="203" stroke="#3e3e44" stroke-width="0.35"/>
<line x1="371.97" y1="201" x2="371.97" y2="203" stroke="#3e3e44" stroke-width="0.35"/>
<line x1="377.34" y1="201" x2="377.34" y2="203" stroke="#3e3e44" stroke-width="0.35"/>
<line x1="382.72" y1="201" x2="382.72" y2="203" stroke="#3e3e44" stroke-width="0.35"/>
<line x1="393.48" y1="201" x2="393.48" y2="203" stroke="#3e3e44" stroke-width="0.35"/>
<line x1="398.86" y1="201" x2="398.86" y2="203" stroke="#3e3e44" stroke-width="0.35"/>
<line x1="404.23" y1="201" x2="404.23" y2="203" stroke="#3e3e44" stroke-width="0.35"/>
<line x1="409.61" y1="201" x2="409.61" y2="203" stroke="#3e3e44" stroke-width="0.35"/>
<line x1="414.99" y1="201" x2="414.99" y2="203" stroke="#3e3e44" stroke-width="0.35"/>
<line x1="420.37" y1="201" x2="420.37" y2="203" stroke="#3e3e44" stroke-width="0.35"/>
<line x1="425.74" y1="201" x2="425.74" y2="203" stroke="#3e3e44" stroke-width="0.35"/>
<line x1="431.12" y1="201" x2="431.12" y2="203" stroke="#3e3e44" stroke-width="0.35"/>
<line x1="441.88" y1="201" x2="441.88" y2="203" stroke="#3e3e44" stroke-width="0.35"/>
<line x1="447.26" y1="201" x2="447.26" y2="203" stroke="#3e3e44" stroke-width="0.35"/>
<line x1="452.63" y1="201" x2="452.63" y2="203" stroke="#3e3e44" stroke-width="0.35"/>
<line x1="458.01" y1="201" x2="458.01" y2="203" stroke="#3e3e44" stroke-width="0.35"/>
<line x1="463.39" y1="201" x2="463.39" y2="203" stroke="#3e3e44" stroke-width="0.35"/>
<line x1="468.77" y1="201" x2="468.77" y2="203" stroke="#3e3e44" stroke-width="0.35"/>
<line x1="474.14" y1="201" x2="474.14" y2="203" stroke="#3e3e44" stroke-width="0.35"/>
<line x1="479.52" y1="201" x2="479.52" y2="203" stroke="#3e3e44" stroke-width="0.35"/>
<line x1="490.28" y1="201" x2="490.28" y2="203" stroke="#3e3e44" stroke-width="0.35"/>
<line x1="495.66" y1="201" x2="495.66" y2="203" stroke="#3e3e44" stroke-width="0.35"/>
<line x1="501.03" y1="201" x2="501.03" y2="203" stroke="#3e3e44" stroke-width="0.35"/>
<line x1="506.41" y1="201" x2="506.41" y2="203" stroke="#3e3e44" stroke-width="0.35"/>
<line x1="511.79" y1="201" x2="511.79" y2="203" stroke="#3e3e44" stroke-width="0.35"/>
<line x1="517.17" y1="201" x2="517.17" y2="203" stroke="#3e3e44" stroke-width="0.35"/>
<line x1="522.54" y1="201" x2="522.54" y2="203" stroke="#3e3e44" stroke-width="0.35"/>
<line x1="527.92" y1="201" x2="527.92" y2="203" stroke="#3e3e44" stroke-width="0.35"/>
<line x1="538.68" y1="201" x2="538.68" y2="203" stroke="#3e3e44" stroke-width="0.35"/>
<line x1="544.06" y1="201" x2="544.06" y2="203" stroke="#3e3e44" stroke-width="0.35"/>
<line x1="549.43" y1="201" x2="549.43" y2="203" stroke="#3e3e44" stroke-width="0.35"/>
<line x1="554.81" y1="201" x2="554.81" y2="203" stroke="#3e3e44" stroke-width="0.35"/>
<line x1="560.19" y1="201" x2="560.19" y2="203" stroke="#3e3e44" stroke-width="0.35"/>
<line x1="565.57" y1="201" x2="565.57" y2="203" stroke="#3e3e44" stroke-width="0.35"/>
<line x1="570.94" y1="201" x2="570.94" y2="203" stroke="#3e3e44" stroke-width="0.35"/>
<line x1="576.32" y1="201" x2="576.32" y2="203" stroke="#3e3e44" stroke-width="0.35"/>
<line x1="587.08" y1="201" x2="587.08" y2="203" stroke="#3e3e44" stroke-width="0.35"/>
<line x1="592.46" y1="201" x2="592.46" y2="203" stroke="#3e3e44" stroke-width="0.35"/>
<line x1="597.83" y1="201" x2="597.83" y2="203" stroke="#3e3e44" stroke-width="0.35"/>
<line x1="603.21" y1="201" x2="603.21" y2="203" stroke="#3e3e44" stroke-width="0.35"/>
<line x1="608.59" y1="201" x2="608.59" y2="203" stroke="#3e3e44" stroke-width="0.35"/>
<line x1="613.97" y1="201" x2="613.97" y2="203" stroke="#3e3e44" stroke-width="0.35"/>
<line x1="619.34" y1="201" x2="619.34" y2="203" stroke="#3e3e44" stroke-width="0.35"/>
<line x1="624.72" y1="201" x2="624.72" y2="203" stroke="#3e3e44" stroke-width="0.35"/>
<line x1="635.48" y1="201" x2="635.48" y2="203" stroke="#3e3e44" stroke-width="0.35"/>
<line x1="640.86" y1="201" x2="640.86" y2="203" stroke="#3e3e44" stroke-width="0.35"/>
<line x1="646.23" y1="201" x2="646.23" y2="203" stroke="#3e3e44" stroke-width="0.35"/>
<line x1="651.61" y1="201" x2="651.61" y2="203" stroke="#3e3e44" stroke-width="0.35"/>
<line x1="656.99" y1="201" x2="656.99" y2="203" stroke="#3e3e44" stroke-width="0.35"/>
<line x1="662.37" y1="201" x2="662.37" y2="203" stroke="#3e3e44" stroke-width="0.35"/>
<line x1="667.74" y1="201" x2="667.74" y2="203" stroke="#3e3e44" stroke-width="0.35"/>
<line x1="673.12" y1="201" x2="673.12" y2="203" stroke="#3e3e44" stroke-width="0.35"/>
<line x1="683.88" y1="201" x2="683.88" y2="203" stroke="#3e3e44" stroke-width="0.35"/>
<line x1="689.26" y1="201" x2="689.26" y2="203" stroke="#3e3e44" stroke-width="0.35"/>
<line x1="694.63" y1="201" x2="694.63" y2="203" stroke="#3e3e44" stroke-width="0.35"/>
<line x1="700.01" y1="201" x2="700.01" y2="203" stroke="#3e3e44" stroke-width="0.35"/>
<line x1="705.39" y1="201" x2="705.39" y2="203" stroke="#3e3e44" stroke-width="0.35"/>
<line x1="710.77" y1="201" x2="710.77" y2="203" stroke="#3e3e44" stroke-width="0.35"/>
<line x1="716.14" y1="201" x2="716.14" y2="203" stroke="#3e3e44" stroke-width="0.35"/>
<line x1="721.52" y1="201" x2="721.52" y2="203" stroke="#3e3e44" stroke-width="0.35"/>
<line x1="732.28" y1="201" x2="732.28" y2="203" stroke="#3e3e44" stroke-width="0.35"/>
<line x1="737.66" y1="201" x2="737.66" y2="203" stroke="#3e3e44" stroke-width="0.35"/>
<line x1="743.03" y1="201" x2="743.03" y2="203" stroke="#3e3e44" stroke-width="0.35"/>
<line x1="748.41" y1="201" x2="748.41" y2="203" stroke="#3e3e44" stroke-width="0.35"/>
<line x1="753.79" y1="201" x2="753.79" y2="203" stroke="#3e3e44" stroke-width="0.35"/>
<line x1="759.17" y1="201" x2="759.17" y2="203" stroke="#3e3e44" stroke-width="0.35"/>
<line x1="764.54" y1="201" x2="764.54" y2="203" stroke="#3e3e44" stroke-width="0.35"/>
<line x1="769.92" y1="201" x2="769.92" y2="203" stroke="#3e3e44" stroke-width="0.35"/>
<path d="M626.6 187.8 l1.8 1.7 l1.8 -1.7" fill="none" stroke="#f0f0f2" stroke-width="0.7"/>
<rect x="206.6" y="203.6" width="566.4" height="3.4" fill="#1d4a33"/>
<rect x="206.6" y="206.4" width="566.4" height="24.1" fill="#47956a"/>
<rect x="206.6" y="230.5" width="566.4" height="24.1" fill="#47956a"/>
<rect x="206.6" y="254.6" width="566.4" height="24.1" fill="#47956a"/>
<rect x="206.6" y="278.7" width="566.4" height="24.1" fill="#47956a"/>
<rect x="206.6" y="302.8" width="566.4" height="24.1" fill="#47956a"/>
<rect x="206.6" y="326.9" width="566.4" height="24.1" fill="#47956a"/>
<rect x="206.6" y="351" width="566.4" height="24.1" fill="#47956a"/>
<rect x="206.6" y="375.1" width="566.4" height="24.1" fill="#47956a"/>
<rect x="206.6" y="399.2" width="566.4" height="24.1" fill="#47956a"/>
<rect x="206.6" y="423.3" width="566.4" height="24.1" fill="#47956a"/>
<rect x="206.6" y="447.4" width="566.4" height="23.6" fill="#47956a"/>
<rect x="206.6" y="207.3" width="566.4" height="11.1" fill="#47956a"/>
<line x1="206.6" y1="213" x2="773" y2="213" stroke="#4a8263" stroke-width="1.1"/>
<rect x="206.6" y="218.8" width="566.4" height="11.2" fill="#224a34"/>
<line x1="206.6" y1="224.6" x2="773" y2="224.6" stroke="#2a5640" stroke-width="0.8"/>
<rect x="206.6" y="231.4" width="566.4" height="11.1" fill="#47956a"/>
<line x1="206.6" y1="237.1" x2="773" y2="237.1" stroke="#4a8263" stroke-width="1.1"/>
<rect x="206.6" y="242.9" width="566.4" height="11.2" fill="#224a34"/>
<line x1="206.6" y1="248.7" x2="773" y2="248.7" stroke="#2a5640" stroke-width="0.8"/>
<rect x="206.6" y="255.5" width="566.4" height="11.1" fill="#47956a"/>
<line x1="206.6" y1="261.2" x2="773" y2="261.2" stroke="#4a8263" stroke-width="1.1"/>
<rect x="206.6" y="267" width="566.4" height="11.2" fill="#224a34"/>
<line x1="206.6" y1="272.8" x2="773" y2="272.8" stroke="#2a5640" stroke-width="0.8"/>
<line x1="206.6" y1="291.1" x2="773" y2="291.1" stroke="#3b7d59" stroke-width="0.8"/>
<line x1="206.6" y1="315.2" x2="773" y2="315.2" stroke="#3b7d59" stroke-width="0.8"/>
<line x1="206.6" y1="339.3" x2="773" y2="339.3" stroke="#3b7d59" stroke-width="0.8"/>
<line x1="206.6" y1="363.4" x2="773" y2="363.4" stroke="#3b7d59" stroke-width="0.8"/>
<line x1="206.6" y1="387.5" x2="773" y2="387.5" stroke="#3b7d59" stroke-width="0.8"/>
<line x1="206.6" y1="411.6" x2="773" y2="411.6" stroke="#3b7d59" stroke-width="0.8"/>
<line x1="206.6" y1="459.8" x2="773" y2="459.8" stroke="#3b7d59" stroke-width="0.8"/>
<line x1="206.6" y1="206.55" x2="773" y2="206.55" stroke="#07190e" stroke-width="1.2"/>
<line x1="206.6" y1="230.65" x2="773" y2="230.65" stroke="#07190e" stroke-width="1.2"/>
<line x1="206.6" y1="254.75" x2="773" y2="254.75" stroke="#07190e" stroke-width="1.2"/>
<line x1="206.6" y1="278.85" x2="773" y2="278.85" stroke="#07190e" stroke-width="1.2"/>
<line x1="206.6" y1="302.95" x2="773" y2="302.95" stroke="#07190e" stroke-width="1.2"/>
<line x1="206.6" y1="327.05" x2="773" y2="327.05" stroke="#07190e" stroke-width="1.2"/>
<line x1="206.6" y1="351.15" x2="773" y2="351.15" stroke="#07190e" stroke-width="1.2"/>
<line x1="206.6" y1="375.25" x2="773" y2="375.25" stroke="#07190e" stroke-width="1.2"/>
<line x1="206.6" y1="399.35" x2="773" y2="399.35" stroke="#07190e" stroke-width="1.2"/>
<line x1="206.6" y1="423.45" x2="773" y2="423.45" stroke="#07190e" stroke-width="1.2"/>
<line x1="206.6" y1="447.55" x2="773" y2="447.55" stroke="#07190e" stroke-width="1.2"/>
<line x1="206.6" y1="427.62" x2="773" y2="427.62" stroke="#2c6a47" stroke-width="0.6"/>
<line x1="206.6" y1="431.63" x2="773" y2="431.63" stroke="#2c6a47" stroke-width="0.6"/>
<line x1="206.6" y1="435.65" x2="773" y2="435.65" stroke="#2c6a47" stroke-width="0.6"/>
<line x1="206.6" y1="439.67" x2="773" y2="439.67" stroke="#2c6a47" stroke-width="0.6"/>
<line x1="206.6" y1="443.68" x2="773" y2="443.68" stroke="#2c6a47" stroke-width="0.6"/>
<line x1="206.6" y1="425.61" x2="773" y2="425.61" stroke="#5fae80" stroke-width="0.3"/>
<line x1="206.6" y1="429.62" x2="773" y2="429.62" stroke="#5fae80" stroke-width="0.3"/>
<line x1="206.6" y1="433.64" x2="773" y2="433.64" stroke="#5fae80" stroke-width="0.3"/>
<line x1="206.6" y1="437.66" x2="773" y2="437.66" stroke="#5fae80" stroke-width="0.3"/>
<line x1="206.6" y1="441.68" x2="773" y2="441.68" stroke="#5fae80" stroke-width="0.3"/>
<line x1="206.6" y1="445.69" x2="773" y2="445.69" stroke="#5fae80" stroke-width="0.3"/>
<path d="M531 248.7L531.5 248.6L532 248.6L532.5 248.6L533 248.6L533.5 248.7L534 248.7L534.5 248.6L535 248.7L535.5 248.6L536 248.1L536.5 248.4L537 248.5L537.5 248.6L538 248.6L538.5 248.7L539 248.6L539.5 248.7L540 248.6L540.5 248.6L541 248.6L541.5 248.6L542 248.6L542.5 248.6L543 248.6L543.5 248.7L544 248.7L544.5 248.7L545 248.6L545.5 248.6L546 248.6L546.5 248.7L547 248.6L547.5 248.6L548 248.6L548.5 248.6L549 248.6L549.5 248.6L550 248.6L550.5 248.6L551 248.6L551.5 248.6L552 248.6L552.5 248.7L553 248.6L553.5 248.6L554 248.6L554.5 248.6L555 248.6L555.5 248.6L556 248.2L556.5 248.4L557 248.5L557.5 248.6L558 248.6L558.5 248.6L559 248.7L559.5 248.7L560 248.7L560.5 248.6L561 248.6L561.5 248.7L562 248.6L562.5 248.7L563 248.7L563.5 248.6L564 248.6L564.5 248.7L565 248.7L565.5 248.6L566 248.7L566.5 248.6L567 248.6L567.5 248.6L568 248.6L568.5 248.6L569 248.6L569.5 248.6L570 248.6L570.5 248.6L571 248.6L571.5 248.6L572 248.6L572.5 248.6L573 248.7L573.5 248.7L574 248.6L574.5 248.6L575 248.6L575.5 248.7L576 248.6L576.5 248.6L577 248.7L577.5 248.6L578 248.6L578.5 248.7L579 248.6L579.5 248.6L580 248.6L580.5 248.6L581 248.6L581.5 248.6L582 248.7L582.5 248.7L583 248.6L583.5 248.6L584 248.7L584.5 248.6L585 248.6L585.5 248.7L586 248.6L586.5 248.7L587 248.6L587.5 248.6L588 248.7L588.5 248.6L589 248.6L589.5 248.7L590 248.6L590.5 248.6L591 248.7L591.5 248.7L592 248.6L592.5 248.7L593 248.7L593.5 248.6L594 248.6L594.5 248.7L595 248.7L595.5 248.7L596 248.6L596.5 248.6L597 248.6L597.5 248.7L598 248.7L598.5 248.6L599 248.6L599.5 248.6L600 248.3L600.5 248.4L601 248.6L601.5 248.6L602 248.6L602.5 248.7L603 248.7L603.5 248.7L604 248.6L604.5 248.6L605 248.7L605.5 248.6L606 248.6L606.5 248.6L607 248.6L607.5 248.6L608 248.6L608.5 248.7L609 248.6L609.5 248.6L610 248.6L610.5 248.6L611 248.7L611.5 248.7L612 248.7L612.5 248.7L613 248.6L613.5 248.7L614 248.6L614.5 248.7L615 248.6L615.5 248.6L616 248.6L616.5 248.6L617 248.6L617.5 248.6L618 248.7L618.5 248.6L619 248.7L619.5 248.7L620 248.6L620.5 248.6L621 248.6L621.5 248.6L622 248.6L622.5 248.7L623 248.7L623.5 248.6L624 248.6L624.5 248.6L625 248.6L625.5 248.7L626 248.6L626.5 248.6L627 248.7L627.5 248.6L628 248.6L628.5 248.6L629 248.6L629.5 248.7L630 248.6L630.5 248.6L631 248.7L631.5 248.7L632 248.3L632.5 248.4L633 248.6L633.5 248.6L634 248.6L634.5 248.6L635 248.6L635.5 248.7L636 248.6L636.5 248.6L637 248.7L637.5 248.6L638 248.6L638.5 248.6L639 248.7L639.5 248.7L640 248.6L640.5 248.6L641 248.6L641.5 248.6L642 248.6L642.5 248.6L643 248.6L643.5 248.6L644 248.6L644.5 248.6L645 248.6L645.5 248.6L646 248.6L646.5 248.7L647 248.6L647.5 248.6L648 248.7L648.5 248.6L649 248.6L649.5 248.6L650 248.6L650.5 248.6L651 248.6L651.5 248.6L652 248.7L652.5 248.6L653 248.7L653.5 248.6L654 248.6L654.5 248.6L655 248.6L655.5 248.6L656 248.6L656.5 248.6L657 248.7L657.5 248.6L658 248.7L658.5 248.7L659 248.6L659.5 248.7L660 248.7L660.5 248.7L661 248.6L661.5 248.7L662 248.7L662.5 248.6L663 248.7L663.5 248.6L664 248.6L664.5 248.6L665 248.6L665.5 248.6L666 248.6L666.5 248.7L667 248.6L667.5 248.6L668 248.6L668.5 248.7L669 248.6L669.5 248.6L670 248.7L670.5 248.7L671 248.6L671.5 248.6L672 248.7L672.5 248.7L673 248.7L673.5 248.6L674 248.6L674.5 248.6L675 248.6L675.5 248.6L676 248.3L676.5 248.3L677 248.5L677.5 248.6L678 248.6L678.5 248.6L679 248.6L679.5 248.7L680 248.6L680.5 248.6L681 248.6L681.5 248.7L682 248.7L682.5 248.6L683 248.7L683.5 248.7L684 248.6L684.5 248.6L685 248.7L685.5 248.6L686 248.6L686.5 248.6L687 248.6L687.5 248.7L688 248.7L688.5 248.7L689 248.6L689.5 248.6L690 248.7L690.5 248.6L691 248.7L691.5 248.6L692 248.7L692.5 248.6L693 248.6L693.5 248.6L694 248.6L694.5 248.6L695 248.6L695.5 248.6L696 248.6L696.5 248.6L697 248.6L697.5 248.6L698 248.6L698.5 248.6L699 248.6L699.5 248.7L700 248.7L700.5 248.6L701 248.6L701.5 248.6L702 248.6L702.5 248.7L703 248.7L703.5 248.7L704 248.7L704.5 248.6L705 248.6L705.5 248.6L706 248.7L706.5 248.6L707 248.7L707.5 248.6L708 248.6L708.5 248.7L709 248.7L709.5 248.6L710 248.7L710.5 248.6L711 248.6L711.5 248.6L712 248.7L712.5 248.7L713 248.6L713.5 248.6L714 248.7L714.5 248.6L715 248.6L715.5 248.6L716 248.3L716.5 248.5L717 248.5L717.5 248.6L718 248.6L718.5 248.6L719 248.6L719.5 248.6L720 248.6L720.5 248.6L721 248.7L721.5 248.6L722 248.6L722.5 248.6L723 248.6L723.5 248.7L724 248.6L724.5 248.6L725 248.7L725.5 248.6L726 248.6L726.5 248.7L727 248.6L727.5 248.7L728 248.7L728.5 248.6L729 248.6L729.5 248.6L730 248.6L730.5 248.6L731 248.7L731.5 248.7L732 248.7L732.5 248.6L733 248.6L733.5 248.6L734 248.6L734.5 248.6L735 248.7L735.5 248.6L736 248.6L736.5 248.7L737 248.6L737.5 248.7L738 248.6L738.5 248.6L739 248.7L739.5 248.6L740 248.6L740.5 248.6L741 248.6L741.5 248.6L742 248.3L742.5 248.4L743 248.6L743.5 248.6L744 248.6L744.5 248.6L745 248.7L745.5 248.7L746 248.6L746.5 248.7L747 248.7L747.5 248.6L748 248.6L748.5 248.6L749 248.6L749.5 248.6L750 248.6L750.5 248.6L751 248.6L751.5 248.7L752 248.6L752.5 248.6L753 248.6L753.5 248.6L754 248.7L754.5 248.6L755 248.6L755.5 248.6L756 248.6L756.5 248.6L757 248.7L757.5 248.6L758 248.7L758.5 248.6L759 248.6L759.5 248.6L760 248.6L760.5 248.6L761 248.6L761.5 248.7L762 248.6L762.5 248.6L763 248.7L763.5 248.6L764 248.7L764.5 248.7L765 248.6L765.5 248.6L766 248.7L766.5 248.6L767 248.6L767.5 248.7L768 248.6L768.5 248.6L769 248.6L769.5 248.6L770 248.6L770.5 248.7L771 248.6L771.5 248.6L772 248.6L772.5 248.6L773 248.6L773 248.8L772.5 248.8L772 248.8L771.5 248.8L771 248.8L770.5 248.7L770 248.8L769.5 248.8L769 248.8L768.5 248.8L768 248.8L767.5 248.7L767 248.8L766.5 248.8L766 248.7L765.5 248.8L765 248.8L764.5 248.7L764 248.7L763.5 248.8L763 248.7L762.5 248.8L762 248.8L761.5 248.7L761 248.8L760.5 248.8L760 248.8L759.5 248.8L759 248.8L758.5 248.8L758 248.7L757.5 248.8L757 248.7L756.5 248.8L756 248.8L755.5 248.8L755 248.8L754.5 248.8L754 248.7L753.5 248.8L753 248.8L752.5 248.8L752 248.8L751.5 248.7L751 248.8L750.5 248.8L750 248.8L749.5 248.8L749 248.8L748.5 248.8L748 248.8L747.5 248.8L747 248.7L746.5 248.7L746 248.8L745.5 248.7L745 248.7L744.5 248.8L744 248.8L743.5 248.8L743 248.8L742.5 249L742 249.1L741.5 248.8L741 248.8L740.5 248.8L740 248.8L739.5 248.8L739 248.7L738.5 248.8L738 248.8L737.5 248.7L737 248.8L736.5 248.7L736 248.8L735.5 248.8L735 248.7L734.5 248.8L734 248.8L733.5 248.8L733 248.8L732.5 248.8L732 248.7L731.5 248.7L731 248.7L730.5 248.8L730 248.8L729.5 248.8L729 248.8L728.5 248.8L728 248.7L727.5 248.7L727 248.8L726.5 248.7L726 248.8L725.5 248.8L725 248.7L724.5 248.8L724 248.8L723.5 248.7L723 248.8L722.5 248.8L722 248.8L721.5 248.8L721 248.7L720.5 248.8L720 248.8L719.5 248.8L719 248.8L718.5 248.8L718 248.8L717.5 248.8L717 248.9L716.5 248.9L716 249.1L715.5 248.8L715 248.8L714.5 248.8L714 248.7L713.5 248.8L713 248.8L712.5 248.7L712 248.7L711.5 248.8L711 248.8L710.5 248.8L710 248.7L709.5 248.8L709 248.7L708.5 248.7L708 248.8L707.5 248.8L707 248.7L706.5 248.8L706 248.7L705.5 248.8L705 248.8L704.5 248.8L704 248.7L703.5 248.7L703 248.7L702.5 248.7L702 248.8L701.5 248.8L701 248.8L700.5 248.8L700 248.7L699.5 248.7L699 248.8L698.5 248.8L698 248.8L697.5 248.8L697 248.8L696.5 248.8L696 248.8L695.5 248.8L695 248.8L694.5 248.8L694 248.8L693.5 248.8L693 248.8L692.5 248.8L692 248.7L691.5 248.8L691 248.7L690.5 248.8L690 248.7L689.5 248.8L689 248.8L688.5 248.7L688 248.7L687.5 248.7L687 248.8L686.5 248.8L686 248.8L685.5 248.8L685 248.7L684.5 248.8L684 248.8L683.5 248.7L683 248.7L682.5 248.8L682 248.7L681.5 248.7L681 248.8L680.5 248.8L680 248.8L679.5 248.7L679 248.8L678.5 248.8L678 248.8L677.5 248.8L677 248.9L676.5 249.1L676 249.1L675.5 248.8L675 248.8L674.5 248.8L674 248.8L673.5 248.8L673 248.7L672.5 248.7L672 248.7L671.5 248.8L671 248.8L670.5 248.7L670 248.7L669.5 248.8L669 248.8L668.5 248.7L668 248.8L667.5 248.8L667 248.8L666.5 248.7L666 248.8L665.5 248.8L665 248.8L664.5 248.8L664 248.8L663.5 248.8L663 248.7L662.5 248.8L662 248.7L661.5 248.7L661 248.8L660.5 248.7L660 248.7L659.5 248.7L659 248.8L658.5 248.7L658 248.7L657.5 248.8L657 248.7L656.5 248.8L656 248.8L655.5 248.8L655 248.8L654.5 248.8L654 248.8L653.5 248.8L653 248.7L652.5 248.8L652 248.7L651.5 248.8L651 248.8L650.5 248.8L650 248.8L649.5 248.8L649 248.8L648.5 248.8L648 248.7L647.5 248.8L647 248.8L646.5 248.7L646 248.8L645.5 248.8L645 248.8L644.5 248.8L644 248.8L643.5 248.8L643 248.8L642.5 248.8L642 248.8L641.5 248.8L641 248.8L640.5 248.8L640 248.8L639.5 248.7L639 248.7L638.5 248.8L638 248.8L637.5 248.8L637 248.7L636.5 248.8L636 248.8L635.5 248.7L635 248.8L634.5 248.8L634 248.8L633.5 248.8L633 248.8L632.5 249L632 249.1L631.5 248.7L631 248.7L630.5 248.8L630 248.8L629.5 248.7L629 248.8L628.5 248.8L628 248.8L627.5 248.8L627 248.7L626.5 248.8L626 248.8L625.5 248.7L625 248.8L624.5 248.8L624 248.8L623.5 248.8L623 248.7L622.5 248.7L622 248.8L621.5 248.8L621 248.8L620.5 248.8L620 248.8L619.5 248.7L619 248.7L618.5 248.8L618 248.7L617.5 248.8L617 248.8L616.5 248.8L616 248.8L615.5 248.8L615 248.8L614.5 248.7L614 248.8L613.5 248.7L613 248.8L612.5 248.7L612 248.7L611.5 248.7L611 248.7L610.5 248.8L610 248.8L609.5 248.8L609 248.8L608.5 248.7L608 248.8L607.5 248.8L607 248.8L606.5 248.8L606 248.8L605.5 248.8L605 248.7L604.5 248.8L604 248.8L603.5 248.7L603 248.7L602.5 248.7L602 248.8L601.5 248.8L601 248.8L600.5 249L600 249.1L599.5 248.8L599 248.8L598.5 248.8L598 248.7L597.5 248.7L597 248.8L596.5 248.8L596 248.8L595.5 248.7L595 248.7L594.5 248.7L594 248.8L593.5 248.8L593 248.7L592.5 248.7L592 248.8L591.5 248.7L591 248.7L590.5 248.8L590 248.8L589.5 248.7L589 248.8L588.5 248.8L588 248.7L587.5 248.8L587 248.8L586.5 248.7L586 248.8L585.5 248.7L585 248.8L584.5 248.8L584 248.7L583.5 248.8L583 248.8L582.5 248.7L582 248.7L581.5 248.8L581 248.8L580.5 248.8L580 248.8L579.5 248.8L579 248.8L578.5 248.7L578 248.8L577.5 248.8L577 248.7L576.5 248.8L576 248.8L575.5 248.7L575 248.8L574.5 248.8L574 248.8L573.5 248.7L573 248.7L572.5 248.8L572 248.8L571.5 248.8L571 248.8L570.5 248.8L570 248.8L569.5 248.8L569 248.8L568.5 248.8L568 248.8L567.5 248.8L567 248.8L566.5 248.8L566 248.7L565.5 248.8L565 248.7L564.5 248.7L564 248.8L563.5 248.8L563 248.7L562.5 248.7L562 248.8L561.5 248.7L561 248.8L560.5 248.8L560 248.7L559.5 248.7L559 248.7L558.5 248.8L558 248.8L557.5 248.8L557 248.9L556.5 249L556 249.2L555.5 248.8L555 248.8L554.5 248.8L554 248.8L553.5 248.8L553 248.8L552.5 248.7L552 248.8L551.5 248.8L551 248.8L550.5 248.8L550 248.8L549.5 248.8L549 248.8L548.5 248.8L548 248.8L547.5 248.8L547 248.8L546.5 248.7L546 248.8L545.5 248.8L545 248.8L544.5 248.7L544 248.7L543.5 248.7L543 248.8L542.5 248.8L542 248.8L541.5 248.8L541 248.8L540.5 248.8L540 248.8L539.5 248.7L539 248.8L538.5 248.7L538 248.8L537.5 248.8L537 248.9L536.5 249L536 249.3L535.5 248.8L535 248.7L534.5 248.8L534 248.7L533.5 248.7L533 248.8L532.5 248.8L532 248.8L531.5 248.8L531 248.7Z" fill="#7fba96" opacity="0.7"/>
<path d="M531 261.4L531.5 261.4L532 261.4L532.5 261.4L533 261.4L533.5 261.4L534 261.3L534.5 261.3L535 261.3L535.5 260.6L536 259.7L536.5 260.3L537 260.4L537.5 260.7L538 261L538.5 261.1L539 261.2L539.5 261.3L540 261.3L540.5 261.3L541 261.4L541.5 261.3L542 261.4L542.5 261.4L543 261.3L543.5 261.3L544 261.4L544.5 261.4L545 261.4L545.5 261.4L546 261.4L546.5 261.4L547 261.3L547.5 261.4L548 261.4L548.5 261.4L549 261.4L549.5 261.4L550 261.4L550.5 261.4L551 261.3L551.5 261.4L552 261.4L552.5 261.4L553 261.4L553.5 261.4L554 261.4L554.5 260.6L555 259.1L555.5 260.1L556 260.1L556.5 260.6L557 260.8L557.5 261L558 261L558.5 261.1L559 261.2L559.5 261.2L560 261.3L560.5 261.3L561 261.3L561.5 261.3L562 261.4L562.5 261.3L563 261.4L563.5 261.4L564 261.4L564.5 261.4L565 261.4L565.5 261.3L566 261.4L566.5 261.4L567 261.4L567.5 261.4L568 261.4L568.5 261.3L569 261.4L569.5 261.4L570 261.4L570.5 261.4L571 261.3L571.5 261.4L572 261.4L572.5 261.3L573 261.4L573.5 261.3L574 261.4L574.5 261.4L575 261.4L575.5 261.4L576 261.4L576.5 261.4L577 261.3L577.5 261.3L578 261.4L578.5 261.4L579 261.4L579.5 261.4L580 261.4L580.5 261.4L581 261.3L581.5 261.4L582 261.4L582.5 261.3L583 261.4L583.5 261.3L584 261.4L584.5 261.3L585 261.4L585.5 261.3L586 261.3L586.5 261.4L587 261.4L587.5 261.4L588 261.3L588.5 261.3L589 261.3L589.5 261.4L590 261.4L590.5 261.3L591 261.4L591.5 261.3L592 261.4L592.5 261.4L593 261.3L593.5 261.4L594 261.3L594.5 261.3L595 261.4L595.5 261.3L596 261.3L596.5 261.3L597 261.4L597.5 261.3L598 261.4L598.5 261.3L599 261.3L599.5 261.4L600 261.4L600.5 261.4L601 261.4L601.5 261.3L602 261.3L602.5 261.4L603 261.4L603.5 261.3L604 261.4L604.5 261.3L605 261.4L605.5 261.3L606 261.3L606.5 261.3L607 261.4L607.5 261.3L608 261.4L608.5 261.3L609 261.4L609.5 261.3L610 261.3L610.5 261.4L611 261.4L611.5 261.4L612 261.4L612.5 261.4L613 261.4L613.5 261.3L614 261.4L614.5 261.4L615 261.4L615.5 261.3L616 261.4L616.5 261.4L617 261.3L617.5 261.3L618 261.4L618.5 261.4L619 261.4L619.5 261.3L620 261.4L620.5 261.4L621 261.4L621.5 261.3L622 261.4L622.5 261.4L623 261.4L623.5 261.3L624 261.4L624.5 261.4L625 261.3L625.5 261.3L626 261.4L626.5 261.3L627 261.4L627.5 261.4L628 261.3L628.5 261.4L629 261.3L629.5 261.4L630 261.3L630.5 261.4L631 261.4L631.5 261.4L632 261.4L632.5 261.4L633 261.3L633.5 261.3L634 261.4L634.5 261.4L635 261.4L635.5 261.4L636 261.3L636.5 261.4L637 261.4L637.5 261.4L638 261.3L638.5 261.4L639 261.3L639.5 261.3L640 261.4L640.5 261.3L641 260.7L641.5 260.1L642 260.5L642.5 260.7L643 261L643.5 261.1L644 261L644.5 259.5L645 260.3L645.5 260.6L646 260.8L646.5 261.1L647 260.8L647.5 259.2L648 260.1L648.5 260.4L649 260.8L649.5 261L650 261.1L650.5 260.1L651 260.4L651.5 260.8L652 261L652.5 261.1L653 261.1L653.5 260.2L654 260.3L654.5 260.8L655 260.9L655.5 261.1L656 261.2L656.5 260.6L657 260.4L657.5 260.8L658 261L658.5 261L659 261.2L659.5 260.5L660 260.3L660.5 260.6L661 261L661.5 261.1L662 261.1L662.5 260.3L663 260.4L663.5 260.8L664 261L664.5 261.1L665 261.2L665.5 261.3L666 261.3L666.5 261.3L667 261.3L667.5 261.4L668 261.4L668.5 261.4L669 261.3L669.5 261.4L670 261.4L670.5 261.3L671 261.3L671.5 261.3L672 260.9L672.5 259.6L673 259.9L673.5 260.6L674 260.7L674.5 260.9L675 260.6L675.5 259.6L676 260L676.5 260.4L677 260.8L677.5 260.9L678 260.8L678.5 259.1L679 259.6L679.5 260.1L680 260.7L680.5 260.8L681 260.9L681.5 260.7L682 259.6L682.5 260.2L683 260.5L683.5 260.5L684 260.9L684.5 261L685 260.3L685.5 259.5L686 260.1L686.5 260.6L687 260.8L687.5 260.9L688 261.1L688.5 260.2L689 259.7L689.5 260.4L690 260.6L690.5 260.7L691 261L691.5 261.1L692 259.3L692.5 259.9L693 260.4L693.5 260.4L694 260.8L694.5 261L695 260.5L695.5 259.7L696 260.2L696.5 260.5L697 260.7L697.5 261L698 260.7L698.5 260L699 260.3L699.5 260.7L700 260.9L700.5 261L701 261.1L701.5 261.2L702 261.2L702.5 261.3L703 261.3L703.5 261.3L704 261.3L704.5 261.4L705 261.4L705.5 261.3L706 261.4L706.5 261.4L707 261.4L707.5 261.3L708 261.3L708.5 261.4L709 261.4L709.5 261.4L710 261.4L710.5 261.3L711 261.4L711.5 261.3L712 261.3L712.5 261.3L713 261.4L713.5 261.3L714 261.3L714.5 260.8L715 259.7L715.5 260.1L716 260.4L716.5 260.7L717 260.9L717.5 260.3L718 259.8L718.5 260.5L719 260.6L719.5 261L720 261.1L720.5 261.1L721 261L721.5 260L722 260.5L722.5 260.7L723 261L723.5 261.1L724 261.2L724.5 261.2L725 260L725.5 260.5L726 260.8L726.5 260.9L727 261.1L727.5 261.2L728 261.2L728.5 261L729 259.9L729.5 260.5L730 260.8L730.5 261L731 261.1L731.5 261.2L732 261.3L732.5 260.2L733 259.6L733.5 260.3L734 260.6L734.5 260.7L735 260.9L735.5 261.1L736 261L736.5 260.1L737 260.4L737.5 260.8L738 261L738.5 261L739 261.2L739.5 261.2L740 259.5L740.5 260L741 260.4L741.5 260.6L742 260.9L742.5 261L743 261.2L743.5 261.3L744 261.3L744.5 261.3L745 261.3L745.5 261.4L746 261.3L746.5 261.3L747 261.4L747.5 261.4L748 261.4L748.5 261.4L749 261.3L749.5 261.4L750 261.4L750.5 261.3L751 261.4L751.5 261.4L752 261.4L752.5 261.4L753 261.4L753.5 261.3L754 261.4L754.5 261.4L755 261.4L755.5 261.1L756 259.1L756.5 260L757 260.5L757.5 260.8L758 261L758.5 261L759 260.8L759.5 260.5L760 260.5L760.5 260.8L761 261L761.5 261.2L762 261.2L762.5 260.8L763 260.1L763.5 260.4L764 260.6L764.5 260.9L765 261.1L765.5 261.2L766 260.5L766.5 260.1L767 260.6L767.5 260.7L768 260.9L768.5 261.1L769 261.2L769.5 260L770 260L770.5 260.5L771 260.8L771.5 260.9L772 261.1L772.5 261.1L773 261.3L773 261.5L772.5 261.7L772 261.7L771.5 261.9L771 262L770.5 262.3L770 262.8L769.5 262.8L769 261.6L768.5 261.7L768 261.9L767.5 262.1L767 262.2L766.5 262.7L766 262.3L765.5 261.6L765 261.7L764.5 261.9L764 262.2L763.5 262.4L763 262.7L762.5 262L762 261.6L761.5 261.6L761 261.8L760.5 262L760 262.3L759.5 262.3L759 262L758.5 261.8L758 261.8L757.5 262L757 262.3L756.5 262.8L756 263.7L755.5 261.7L755 261.4L754.5 261.4L754 261.4L753.5 261.5L753 261.4L752.5 261.4L752 261.4L751.5 261.4L751 261.4L750.5 261.5L750 261.4L749.5 261.4L749 261.5L748.5 261.4L748 261.4L747.5 261.4L747 261.4L746.5 261.5L746 261.5L745.5 261.4L745 261.5L744.5 261.5L744 261.5L743.5 261.5L743 261.6L742.5 261.8L742 261.9L741.5 262.2L741 262.4L740.5 262.8L740 263.3L739.5 261.6L739 261.6L738.5 261.8L738 261.8L737.5 262L737 262.4L736.5 262.7L736 261.8L735.5 261.7L735 261.9L734.5 262.1L734 262.2L733.5 262.5L733 263.2L732.5 262.6L732 261.5L731.5 261.6L731 261.7L730.5 261.8L730 262L729.5 262.3L729 262.9L728.5 261.8L728 261.6L727.5 261.6L727 261.7L726.5 261.9L726 262L725.5 262.3L725 262.8L724.5 261.6L724 261.6L723.5 261.7L723 261.8L722.5 262.1L722 262.3L721.5 262.8L721 261.8L720.5 261.7L720 261.7L719.5 261.8L719 262.2L718.5 262.3L718 263L717.5 262.5L717 261.9L716.5 262.1L716 262.4L715.5 262.7L715 263.1L714.5 262L714 261.5L713.5 261.5L713 261.4L712.5 261.5L712 261.5L711.5 261.5L711 261.4L710.5 261.5L710 261.4L709.5 261.4L709 261.4L708.5 261.4L708 261.5L707.5 261.5L707 261.4L706.5 261.4L706 261.4L705.5 261.5L705 261.4L704.5 261.4L704 261.5L703.5 261.5L703 261.5L702.5 261.5L702 261.6L701.5 261.6L701 261.7L700.5 261.8L700 261.9L699.5 262.1L699 262.5L698.5 262.8L698 262.1L697.5 261.8L697 262.1L696.5 262.3L696 262.6L695.5 263.1L695 262.3L694.5 261.8L694 262L693.5 262.4L693 262.4L692.5 262.9L692 263.5L691.5 261.7L691 261.8L690.5 262.1L690 262.2L689.5 262.4L689 263.1L688.5 262.6L688 261.7L687.5 261.9L687 262L686.5 262.2L686 262.7L685.5 263.3L685 262.5L684.5 261.8L684 261.9L683.5 262.3L683 262.3L682.5 262.6L682 263.2L681.5 262.1L681 261.9L680.5 262L680 262.1L679.5 262.7L679 263.2L678.5 263.7L678 262L677.5 261.9L677 262L676.5 262.4L676 262.8L675.5 263.2L675 262.2L674.5 261.9L674 262.1L673.5 262.2L673 262.9L672.5 263.2L672 261.9L671.5 261.5L671 261.5L670.5 261.5L670 261.4L669.5 261.4L669 261.5L668.5 261.4L668 261.4L667.5 261.4L667 261.5L666.5 261.5L666 261.5L665.5 261.5L665 261.6L664.5 261.7L664 261.8L663.5 262L663 262.4L662.5 262.5L662 261.7L661.5 261.7L661 261.8L660.5 262.2L660 262.5L659.5 262.3L659 261.6L658.5 261.8L658 261.8L657.5 262L657 262.4L656.5 262.2L656 261.6L655.5 261.7L655 261.9L654.5 262L654 262.5L653.5 262.6L653 261.7L652.5 261.7L652 261.8L651.5 262L651 262.4L650.5 262.7L650 261.7L649.5 261.8L649 262L648.5 262.4L648 262.7L647.5 263.6L647 262L646.5 261.7L646 262L645.5 262.2L645 262.5L644.5 263.3L644 261.8L643.5 261.7L643 261.8L642.5 262.1L642 262.3L641.5 262.7L641 262.1L640.5 261.5L640 261.4L639.5 261.5L639 261.5L638.5 261.4L638 261.5L637.5 261.4L637 261.4L636.5 261.4L636 261.5L635.5 261.4L635 261.4L634.5 261.4L634 261.4L633.5 261.5L633 261.5L632.5 261.4L632 261.4L631.5 261.4L631 261.4L630.5 261.4L630 261.5L629.5 261.4L629 261.5L628.5 261.4L628 261.5L627.5 261.4L627 261.4L626.5 261.5L626 261.4L625.5 261.5L625 261.5L624.5 261.4L624 261.4L623.5 261.5L623 261.4L622.5 261.4L622 261.4L621.5 261.5L621 261.4L620.5 261.4L620 261.4L619.5 261.5L619 261.4L618.5 261.4L618 261.4L617.5 261.5L617 261.5L616.5 261.4L616 261.4L615.5 261.5L615 261.4L614.5 261.4L614 261.4L613.5 261.5L613 261.4L612.5 261.4L612 261.4L611.5 261.4L611 261.4L610.5 261.4L610 261.5L609.5 261.5L609 261.4L608.5 261.5L608 261.4L607.5 261.5L607 261.4L606.5 261.5L606 261.5L605.5 261.5L605 261.4L604.5 261.5L604 261.4L603.5 261.5L603 261.4L602.5 261.4L602 261.5L601.5 261.5L601 261.4L600.5 261.4L600 261.4L599.5 261.4L599 261.5L598.5 261.5L598 261.4L597.5 261.5L597 261.4L596.5 261.5L596 261.5L595.5 261.5L595 261.4L594.5 261.5L594 261.5L593.5 261.4L593 261.5L592.5 261.4L592 261.4L591.5 261.5L591 261.4L590.5 261.5L590 261.4L589.5 261.4L589 261.5L588.5 261.5L588 261.5L587.5 261.4L587 261.4L586.5 261.4L586 261.5L585.5 261.5L585 261.4L584.5 261.5L584 261.4L583.5 261.5L583 261.4L582.5 261.5L582 261.4L581.5 261.4L581 261.5L580.5 261.4L580 261.4L579.5 261.4L579 261.4L578.5 261.4L578 261.4L577.5 261.5L577 261.5L576.5 261.4L576 261.4L575.5 261.4L575 261.4L574.5 261.4L574 261.4L573.5 261.5L573 261.4L572.5 261.5L572 261.4L571.5 261.4L571 261.5L570.5 261.4L570 261.4L569.5 261.4L569 261.4L568.5 261.5L568 261.4L567.5 261.4L567 261.4L566.5 261.4L566 261.4L565.5 261.5L565 261.4L564.5 261.4L564 261.4L563.5 261.4L563 261.4L562.5 261.5L562 261.4L561.5 261.5L561 261.5L560.5 261.5L560 261.5L559.5 261.6L559 261.6L558.5 261.7L558 261.8L557.5 261.8L557 262L556.5 262.2L556 262.7L555.5 262.7L555 263.7L554.5 262.2L554 261.4L553.5 261.4L553 261.4L552.5 261.4L552 261.4L551.5 261.4L551 261.5L550.5 261.4L550 261.4L549.5 261.4L549 261.4L548.5 261.4L548 261.4L547.5 261.4L547 261.5L546.5 261.4L546 261.4L545.5 261.4L545 261.4L544.5 261.4L544 261.4L543.5 261.5L543 261.5L542.5 261.4L542 261.4L541.5 261.5L541 261.4L540.5 261.5L540 261.5L539.5 261.5L539 261.6L538.5 261.7L538 261.8L537.5 262.1L537 262.4L536.5 262.5L536 263.1L535.5 262.2L535 261.5L534.5 261.5L534 261.5L533.5 261.4L533 261.4L532.5 261.4L532 261.4L531.5 261.4L531 261.4Z" fill="#f2faf4" opacity="1"/>
<path d="M531 273.8L531.5 273.7L532 273.7L532.5 273.7L533 273.7L533.5 273.7L534 273.8L534.5 273.8L535 273.7L535.5 272.8L536 271.7L536.5 272.4L537 273L537.5 273.2L538 273.3L538.5 273.5L539 273.6L539.5 273.7L540 273.7L540.5 273.7L541 273.7L541.5 273.7L542 273.7L542.5 273.7L543 273.7L543.5 273.7L544 273.7L544.5 273.8L545 273.8L545.5 273.8L546 273.8L546.5 273.8L547 273.8L547.5 273.8L548 273.8L548.5 273.7L549 273.8L549.5 273.8L550 273.7L550.5 273.8L551 273.8L551.5 273.8L552 273.7L552.5 273.8L553 273.7L553.5 273.8L554 273.7L554.5 273.1L555 271.6L555.5 272.4L556 272.6L556.5 272.9L557 272.9L557.5 273.3L558 273.4L558.5 273.5L559 273.5L559.5 273.6L560 273.7L560.5 273.7L561 273.7L561.5 273.7L562 273.8L562.5 273.8L563 273.8L563.5 273.7L564 273.8L564.5 273.7L565 273.8L565.5 273.8L566 273.8L566.5 273.8L567 273.7L567.5 273.8L568 273.8L568.5 273.8L569 273.7L569.5 273.8L570 273.8L570.5 273.7L571 273.8L571.5 273.7L572 273.7L572.5 273.8L573 273.7L573.5 273.8L574 273.8L574.5 273.8L575 273.7L575.5 273.8L576 273.8L576.5 273.7L577 273.7L577.5 273.7L578 273.8L578.5 273.8L579 273.7L579.5 273.8L580 273.8L580.5 273.8L581 273.8L581.5 273.8L582 273.7L582.5 273.7L583 273.8L583.5 273.8L584 273.8L584.5 273.8L585 273.8L585.5 273.7L586 273.7L586.5 273.8L587 273.7L587.5 273.7L588 273.7L588.5 273.8L589 273.7L589.5 273.8L590 273.7L590.5 273.8L591 273.8L591.5 273.7L592 273.7L592.5 273.8L593 273.7L593.5 273.8L594 273.8L594.5 273.8L595 273.8L595.5 273.8L596 273.7L596.5 273.8L597 273.7L597.5 273.8L598 273.7L598.5 273.8L599 273.8L599.5 273.7L600 273.7L600.5 273.8L601 273.7L601.5 273.7L602 273.7L602.5 273.7L603 273.7L603.5 273.8L604 273.8L604.5 273.8L605 273.7L605.5 273.7L606 273.8L606.5 273.7L607 273.7L607.5 273.7L608 273.8L608.5 273.7L609 273.8L609.5 273.8L610 273.8L610.5 273.8L611 273.7L611.5 273.8L612 273.7L612.5 273.8L613 273.8L613.5 273.8L614 273.8L614.5 273.8L615 273.7L615.5 273.8L616 273.8L616.5 273.8L617 273.8L617.5 273.8L618 273.8L618.5 273.8L619 273.8L619.5 273.8L620 273.8L620.5 273.8L621 273.8L621.5 273.8L622 273.8L622.5 273.8L623 273.7L623.5 273.8L624 273.8L624.5 273.8L625 273.8L625.5 273.8L626 273.7L626.5 273.8L627 273.8L627.5 273.8L628 273.8L628.5 273.8L629 273.8L629.5 273.8L630 273.7L630.5 273.7L631 273.8L631.5 273.7L632 273.8L632.5 273.8L633 273.8L633.5 273.8L634 273.8L634.5 273.7L635 273.7L635.5 273.8L636 273.8L636.5 273.7L637 273.8L637.5 273.8L638 273.8L638.5 273.8L639 273.8L639.5 273.8L640 273.7L640.5 273.8L641 273L641.5 272L642 272.6L642.5 273.1L643 273.2L643.5 273.5L644 273.3L644.5 272.2L645 272.6L645.5 273.1L646 273.1L646.5 273.4L647 273.2L647.5 271.5L648 272.5L648.5 272.9L649 273.2L649.5 273.4L650 273.4L650.5 272.3L651 272.7L651.5 273.1L652 273.4L652.5 273.5L653 273.4L653.5 272.2L654 272.8L654.5 273L655 273.2L655.5 273.5L656 273.5L656.5 273L657 272.6L657.5 272.9L658 273.3L658.5 273.5L659 273.6L659.5 272.7L660 272.7L660.5 272.9L661 273.2L661.5 273.4L662 273.5L662.5 272.4L663 272.7L663.5 273.1L664 273.4L664.5 273.5L665 273.6L665.5 273.6L666 273.7L666.5 273.7L667 273.7L667.5 273.8L668 273.8L668.5 273.8L669 273.8L669.5 273.8L670 273.8L670.5 273.8L671 273.8L671.5 273.7L672 273.3L672.5 271.7L673 272.4L673.5 272.7L674 273.2L674.5 273.3L675 272.7L675.5 271.9L676 272.4L676.5 272.9L677 273.1L677.5 273.3L678 273.2L678.5 271.4L679 272L679.5 272.6L680 272.9L680.5 273.2L681 273.3L681.5 272.9L682 271.5L682.5 272L683 272.7L683.5 272.8L684 273.3L684.5 273.3L685 272.9L685.5 272L686 272.2L686.5 272.9L687 273.1L687.5 273.2L688 273.5L688.5 272.5L689 271.8L689.5 272.7L690 273L690.5 273.2L691 273.3L691.5 273.4L692 271.6L692.5 272.1L693 272.3L693.5 272.8L694 273.1L694.5 273.3L695 272.9L695.5 271.9L696 272.5L696.5 272.9L697 273.1L697.5 273.3L698 272.8L698.5 272.4L699 272.5L699.5 272.9L700 273.1L700.5 273.3L701 273.5L701.5 273.6L702 273.6L702.5 273.7L703 273.7L703.5 273.7L704 273.8L704.5 273.7L705 273.7L705.5 273.8L706 273.7L706.5 273.8L707 273.8L707.5 273.8L708 273.7L708.5 273.7L709 273.8L709.5 273.7L710 273.8L710.5 273.7L711 273.7L711.5 273.8L712 273.7L712.5 273.8L713 273.8L713.5 273.8L714 273.8L714.5 273L715 272.1L715.5 272.4L716 272.7L716.5 273L717 273.2L717.5 272.5L718 272.1L718.5 272.8L719 273L719.5 273.2L720 273.4L720.5 273.5L721 273.4L721.5 272.4L722 272.8L722.5 273.1L723 273.3L723.5 273.4L724 273.6L724.5 273.6L725 272.3L725.5 272.5L726 272.9L726.5 273.2L727 273.4L727.5 273.5L728 273.6L728.5 273.3L729 272.4L729.5 272.9L730 273.1L730.5 273.3L731 273.5L731.5 273.5L732 273.6L732.5 272.5L733 272.1L733.5 272.4L734 272.8L734.5 273.1L735 273.4L735.5 273.5L736 273.4L736.5 272.3L737 272.9L737.5 273L738 273.2L738.5 273.4L739 273.5L739.5 273.6L740 271.5L740.5 272.4L741 272.7L741.5 273.1L742 273.3L742.5 273.4L743 273.5L743.5 273.6L744 273.7L744.5 273.7L745 273.7L745.5 273.8L746 273.8L746.5 273.8L747 273.8L747.5 273.8L748 273.8L748.5 273.7L749 273.7L749.5 273.8L750 273.8L750.5 273.8L751 273.7L751.5 273.8L752 273.8L752.5 273.7L753 273.8L753.5 273.8L754 273.8L754.5 273.8L755 273.7L755.5 273.5L756 271.1L756.5 271.9L757 272.5L757.5 273L758 273.2L758.5 273.5L759 273.1L759.5 272.7L760 273.1L760.5 273.1L761 273.4L761.5 273.6L762 273.6L762.5 273.2L763 272L763.5 272.5L764 273.2L764.5 273.3L765 273.4L765.5 273.6L766 273L766.5 272.5L767 272.7L767.5 273.2L768 273.3L768.5 273.5L769 273.5L769.5 272.3L770 271.8L770.5 272.4L771 272.9L771.5 273.2L772 273.4L772.5 273.5L773 273.6L773 274L772.5 274.1L772 274.2L771.5 274.4L771 274.7L770.5 275.2L770 275.8L769.5 275.3L769 274.1L768.5 274.1L768 274.3L767.5 274.4L767 274.9L766.5 275.1L766 274.6L765.5 274L765 274.2L764.5 274.3L764 274.4L763.5 275.1L763 275.6L762.5 274.4L762 274L761.5 274L761 274.2L760.5 274.5L760 274.5L759.5 274.9L759 274.5L758.5 274.1L758 274.4L757.5 274.6L757 275.1L756.5 275.7L756 276.5L755.5 274.1L755 273.9L754.5 273.8L754 273.8L753.5 273.8L753 273.8L752.5 273.9L752 273.8L751.5 273.8L751 273.9L750.5 273.8L750 273.8L749.5 273.8L749 273.9L748.5 273.9L748 273.8L747.5 273.8L747 273.8L746.5 273.8L746 273.8L745.5 273.8L745 273.9L744.5 273.9L744 273.9L743.5 274L743 274.1L742.5 274.2L742 274.3L741.5 274.5L741 274.9L740.5 275.2L740 276.1L739.5 274L739 274.1L738.5 274.2L738 274.4L737.5 274.6L737 274.7L736.5 275.3L736 274.2L735.5 274.1L735 274.2L734.5 274.5L734 274.8L733.5 275.2L733 275.5L732.5 275.1L732 274L731.5 274.1L731 274.1L730.5 274.3L730 274.5L729.5 274.7L729 275.2L728.5 274.3L728 274L727.5 274.1L727 274.2L726.5 274.4L726 274.7L725.5 275.1L725 275.3L724.5 274L724 274L723.5 274.2L723 274.3L722.5 274.5L722 274.8L721.5 275.2L721 274.2L720.5 274.1L720 274.2L719.5 274.4L719 274.6L718.5 274.8L718 275.5L717.5 275.1L717 274.4L716.5 274.6L716 274.9L715.5 275.2L715 275.5L714.5 274.6L714 273.8L713.5 273.8L713 273.8L712.5 273.8L712 273.9L711.5 273.8L711 273.9L710.5 273.9L710 273.8L709.5 273.9L709 273.8L708.5 273.9L708 273.9L707.5 273.8L707 273.8L706.5 273.8L706 273.9L705.5 273.8L705 273.9L704.5 273.9L704 273.8L703.5 273.9L703 273.9L702.5 273.9L702 274L701.5 274L701 274.1L700.5 274.3L700 274.5L699.5 274.7L699 275.1L698.5 275.2L698 274.8L697.5 274.3L697 274.5L696.5 274.7L696 275.1L695.5 275.7L695 274.7L694.5 274.3L694 274.5L693.5 274.8L693 275.3L692.5 275.5L692 276L691.5 274.2L691 274.3L690.5 274.4L690 274.6L689.5 274.9L689 275.8L688.5 275.1L688 274.1L687.5 274.4L687 274.5L686.5 274.7L686 275.4L685.5 275.6L685 274.7L684.5 274.3L684 274.3L683.5 274.8L683 274.9L682.5 275.6L682 276.1L681.5 274.7L681 274.3L680.5 274.4L680 274.7L679.5 275L679 275.6L678.5 276.2L678 274.4L677.5 274.3L677 274.5L676.5 274.7L676 275.2L675.5 275.7L675 274.9L674.5 274.3L674 274.4L673.5 274.9L673 275.2L672.5 275.9L672 274.3L671.5 273.9L671 273.8L670.5 273.8L670 273.8L669.5 273.8L669 273.8L668.5 273.8L668 273.8L667.5 273.8L667 273.9L666.5 273.9L666 273.9L665.5 274L665 274L664.5 274.1L664 274.2L663.5 274.5L663 274.9L662.5 275.2L662 274.1L661.5 274.2L661 274.4L660.5 274.7L660 274.9L659.5 274.9L659 274L658.5 274.1L658 274.3L657.5 274.7L657 275L656.5 274.6L656 274.1L655.5 274.1L655 274.4L654.5 274.6L654 274.8L653.5 275.4L653 274.2L652.5 274.1L652 274.2L651.5 274.5L651 274.9L650.5 275.3L650 274.2L649.5 274.2L649 274.4L648.5 274.7L648 275.1L647.5 276.1L647 274.4L646.5 274.2L646 274.5L645.5 274.5L645 275L644.5 275.4L644 274.3L643.5 274.1L643 274.4L642.5 274.5L642 275L641.5 275.6L641 274.6L640.5 273.8L640 273.9L639.5 273.8L639 273.8L638.5 273.8L638 273.8L637.5 273.8L637 273.8L636.5 273.9L636 273.8L635.5 273.8L635 273.9L634.5 273.9L634 273.8L633.5 273.8L633 273.8L632.5 273.8L632 273.8L631.5 273.9L631 273.8L630.5 273.9L630 273.9L629.5 273.8L629 273.8L628.5 273.8L628 273.8L627.5 273.8L627 273.8L626.5 273.8L626 273.9L625.5 273.8L625 273.8L624.5 273.8L624 273.8L623.5 273.8L623 273.9L622.5 273.8L622 273.8L621.5 273.8L621 273.8L620.5 273.8L620 273.8L619.5 273.8L619 273.8L618.5 273.8L618 273.8L617.5 273.8L617 273.8L616.5 273.8L616 273.8L615.5 273.8L615 273.9L614.5 273.8L614 273.8L613.5 273.8L613 273.8L612.5 273.8L612 273.9L611.5 273.8L611 273.9L610.5 273.8L610 273.8L609.5 273.8L609 273.8L608.5 273.9L608 273.8L607.5 273.9L607 273.9L606.5 273.9L606 273.8L605.5 273.9L605 273.9L604.5 273.8L604 273.8L603.5 273.8L603 273.9L602.5 273.9L602 273.9L601.5 273.9L601 273.9L600.5 273.8L600 273.9L599.5 273.9L599 273.8L598.5 273.8L598 273.9L597.5 273.8L597 273.9L596.5 273.8L596 273.9L595.5 273.8L595 273.8L594.5 273.8L594 273.8L593.5 273.8L593 273.9L592.5 273.8L592 273.9L591.5 273.9L591 273.8L590.5 273.8L590 273.9L589.5 273.8L589 273.9L588.5 273.8L588 273.9L587.5 273.9L587 273.9L586.5 273.8L586 273.9L585.5 273.9L585 273.8L584.5 273.8L584 273.8L583.5 273.8L583 273.8L582.5 273.9L582 273.9L581.5 273.8L581 273.8L580.5 273.8L580 273.8L579.5 273.8L579 273.9L578.5 273.8L578 273.8L577.5 273.9L577 273.9L576.5 273.9L576 273.8L575.5 273.8L575 273.9L574.5 273.8L574 273.8L573.5 273.8L573 273.9L572.5 273.8L572 273.9L571.5 273.9L571 273.8L570.5 273.9L570 273.8L569.5 273.8L569 273.9L568.5 273.8L568 273.8L567.5 273.8L567 273.9L566.5 273.8L566 273.8L565.5 273.8L565 273.8L564.5 273.9L564 273.8L563.5 273.9L563 273.8L562.5 273.8L562 273.8L561.5 273.9L561 273.9L560.5 273.9L560 273.9L559.5 274L559 274.1L558.5 274.1L558 274.2L557.5 274.3L557 274.7L556.5 274.7L556 275L555.5 275.2L555 276L554.5 274.5L554 273.9L553.5 273.8L553 273.9L552.5 273.8L552 273.9L551.5 273.8L551 273.8L550.5 273.8L550 273.9L549.5 273.8L549 273.8L548.5 273.9L548 273.8L547.5 273.8L547 273.8L546.5 273.8L546 273.8L545.5 273.8L545 273.8L544.5 273.8L544 273.9L543.5 273.9L543 273.9L542.5 273.9L542 273.9L541.5 273.9L541 273.9L540.5 273.9L540 273.9L539.5 273.9L539 274L538.5 274.1L538 274.3L537.5 274.4L537 274.6L536.5 275.2L536 275.9L535.5 274.8L535 273.9L534.5 273.8L534 273.8L533.5 273.9L533 273.9L532.5 273.9L532 273.9L531.5 273.9L531 273.8Z" fill="#f2faf4" opacity="1"/>
<path d="M531 290.9L531.5 290.9L532 291L532.5 291L533 291L533.5 291L534 291L534.5 290.9L535 291L535.5 290.9L536 290.4L536.5 290.7L537 290.9L537.5 290.9L538 291L538.5 291L539 291L539.5 290.9L540 291L540.5 291L541 291L541.5 291L542 291L542.5 291L543 291L543.5 290.9L544 290.9L544.5 291L545 291L545.5 291L546 290.9L546.5 290.9L547 291L547.5 291L548 291L548.5 291L549 291L549.5 291L550 290.9L550.5 291L551 291L551.5 291L552 291L552.5 291L553 291L553.5 291L554 291L554.5 289.8L555 287.6L555.5 288.6L556 288.7L556.5 289.3L557 289.7L557.5 289.9L558 289.8L558.5 289.9L559 290.1L559.5 290.3L560 290.5L560.5 290.5L561 290.7L561.5 290.7L562 290.8L562.5 290.8L563 290.9L563.5 290.9L564 290.9L564.5 291L565 290.9L565.5 291L566 290.4L566.5 290.7L567 290.8L567.5 290.9L568 291L568.5 291L569 291L569.5 291L570 291L570.5 291L571 290.9L571.5 291L572 290.2L572.5 290.5L573 290.7L573.5 290.8L574 291L574.5 291L575 291L575.5 291L576 291L576.5 291L577 291L577.5 290.9L578 290.9L578.5 291L579 290.9L579.5 291L580 290.4L580.5 290.6L581 290.8L581.5 290.9L582 290.9L582.5 290.9L583 290.9L583.5 290.9L584 290.9L584.5 291L585 291L585.5 291L586 291L586.5 290.9L587 290.9L587.5 290.9L588 290.2L588.5 290.5L589 290.6L589.5 290.8L590 290.8L590.5 290.9L591 291L591.5 291L592 291L592.5 291L593 290.9L593.5 291L594 290.4L594.5 290.7L595 290.8L595.5 290.9L596 291L596.5 291L597 290.9L597.5 291L598 291L598.5 290.9L599 290.6L599.5 289.7L600 290.1L600.5 290.1L601 290.5L601.5 290.5L602 290.7L602.5 290.8L603 290.9L603.5 290.9L604 290.9L604.5 291L605 291L605.5 290.9L606 290.9L606.5 291L607 290.9L607.5 290.9L608 291L608.5 291L609 291L609.5 291L610 290.5L610.5 290.8L611 290.9L611.5 291L612 291L612.5 290.9L613 291L613.5 291L614 291L614.5 291L615 291L615.5 291L616 291L616.5 291L617 290.9L617.5 291L618 290.6L618.5 290.8L619 290.9L619.5 291L620 290.9L620.5 291L621 291L621.5 290.9L622 290.9L622.5 290.9L623 291L623.5 291L624 290.9L624.5 291L625 291L625.5 291L626 291L626.5 291L627 290.9L627.5 290.9L628 291L628.5 291L629 291L629.5 290.9L630 290.9L630.5 289.1L631 288.4L631.5 289.2L632 289.3L632.5 289.6L633 289.9L633.5 290.3L634 290.4L634.5 290.6L635 290.7L635.5 290.7L636 290.7L636.5 290.9L637 290.9L637.5 290.9L638 291L638.5 291L639 291L639.5 291L640 291L640.5 291L641 290.9L641.5 290.9L642 291L642.5 290.8L643 288.8L643.5 289.1L644 289.7L644.5 289.8L645 290.1L645.5 290.2L646 290.5L646.5 290.4L647 290.6L647.5 290.6L648 290.8L648.5 290.9L649 290.9L649.5 290.9L650 290.9L650.5 291L651 291L651.5 290.9L652 290.5L652.5 290.8L653 290.9L653.5 291L654 291L654.5 291L655 290.9L655.5 291L656 290.9L656.5 291L657 290.9L657.5 291L658 291L658.5 291L659 291L659.5 291L660 290.6L660.5 290.8L661 290.9L661.5 291L662 290.9L662.5 291L663 291L663.5 291L664 291L664.5 291L665 291L665.5 291L666 291L666.5 291L667 291L667.5 291L668 291L668.5 291L669 291L669.5 291L670 291L670.5 291L671 291L671.5 291L672 290.4L672.5 290.7L673 290.8L673.5 291L674 291L674.5 290.9L675 290.9L675.5 290.9L676 291L676.5 291L677 291L677.5 291L678 291L678.5 291L679 291L679.5 291L680 290.4L680.5 290.6L681 290.8L681.5 290.9L682 291L682.5 291L683 291L683.5 291L684 291L684.5 291L685 290.9L685.5 291L686 291L686.5 291L687 291L687.5 291L688 290.9L688.5 291L689 291L689.5 291L690 290.5L690.5 290.7L691 290.9L691.5 291L692 291L692.5 291L693 291L693.5 291L694 291L694.5 290.9L695 290.9L695.5 291L696 291L696.5 291L697 290.9L697.5 290.9L698 291L698.5 291L699 291L699.5 290.9L700 290.3L700.5 290.7L701 290.8L701.5 290.9L702 291L702.5 290.9L703 290.9L703.5 290.9L704 291L704.5 290.9L705 291L705.5 291L706 291L706.5 291L707 291L707.5 291L708 290.5L708.5 290.7L709 290.9L709.5 290.9L710 291L710.5 291L711 290.9L711.5 291L712 290.9L712.5 291L713 290.9L713.5 290.9L714 291L714.5 291L715 291L715.5 289.5L716 289.4L716.5 289.5L717 289.7L717.5 290.2L718 290.4L718.5 290.6L719 290.6L719.5 290.8L720 290.9L720.5 290.9L721 289.9L721.5 288.4L722 289L722.5 289.1L723 289.6L723.5 290L724 290.3L724.5 290.4L725 290.4L725.5 290.6L726 290.7L726.5 290.8L727 290.8L727.5 290.8L728 290.9L728.5 291L729 291L729.5 291L730 291L730.5 290.9L731 290.6L731.5 290.8L732 290.9L732.5 291L733 290.9L733.5 291L734 291L734.5 291L735 291L735.5 290.9L736 291L736.5 291L737 291L737.5 290.9L738 291L738.5 291L739 291L739.5 291L740 291L740.5 291L741 291L741.5 290.4L742 288.7L742.5 289.6L743 289.9L743.5 290L744 290.3L744.5 290.4L745 290.5L745.5 290.6L746 290.8L746.5 290.9L747 290.9L747.5 290.9L748 291L748.5 291L749 291L749.5 290.9L750 291L750.5 290.9L751 291L751.5 291L752 290.9L752.5 291L753 291L753.5 291L754 291L754.5 291L755 290.3L755.5 289.4L756 289.7L756.5 290L757 290.1L757.5 290.5L758 290.5L758.5 290.7L759 290.7L759.5 290.8L760 290.9L760.5 290.9L761 290.9L761.5 291L762 291L762.5 290.9L763 291L763.5 291L764 290.5L764.5 290.7L765 290.9L765.5 291L766 290.9L766.5 290.9L767 291L767.5 291L768 291L768.5 291L769 291L769.5 290.9L770 290.5L770.5 290.8L771 290.9L771.5 290.9L772 291L772.5 290.9L773 291L773 291.2L772.5 291.3L772 291.2L771.5 291.3L771 291.3L770.5 291.4L770 291.7L769.5 291.3L769 291.2L768.5 291.2L768 291.2L767.5 291.2L767 291.2L766.5 291.3L766 291.3L765.5 291.2L765 291.3L764.5 291.5L764 291.7L763.5 291.2L763 291.2L762.5 291.3L762 291.2L761.5 291.2L761 291.3L760.5 291.3L760 291.3L759.5 291.4L759 291.5L758.5 291.5L758 291.7L757.5 291.7L757 292.1L756.5 292.2L756 292.5L755.5 292.8L755 291.9L754.5 291.2L754 291.2L753.5 291.2L753 291.2L752.5 291.2L752 291.3L751.5 291.2L751 291.2L750.5 291.3L750 291.2L749.5 291.3L749 291.2L748.5 291.2L748 291.2L747.5 291.3L747 291.3L746.5 291.3L746 291.4L745.5 291.6L745 291.7L744.5 291.8L744 291.9L743.5 292.2L743 292.3L742.5 292.6L742 293.5L741.5 291.8L741 291.2L740.5 291.2L740 291.2L739.5 291.2L739 291.2L738.5 291.2L738 291.2L737.5 291.3L737 291.2L736.5 291.2L736 291.2L735.5 291.3L735 291.2L734.5 291.2L734 291.2L733.5 291.2L733 291.3L732.5 291.2L732 291.3L731.5 291.4L731 291.6L730.5 291.3L730 291.2L729.5 291.2L729 291.2L728.5 291.2L728 291.3L727.5 291.4L727 291.4L726.5 291.4L726 291.5L725.5 291.6L725 291.8L724.5 291.8L724 291.9L723.5 292.2L723 292.6L722.5 293.1L722 293.2L721.5 293.8L721 292.3L720.5 291.3L720 291.3L719.5 291.4L719 291.6L718.5 291.6L718 291.8L717.5 292L717 292.5L716.5 292.7L716 292.8L715.5 292.7L715 291.2L714.5 291.2L714 291.2L713.5 291.3L713 291.3L712.5 291.2L712 291.3L711.5 291.2L711 291.3L710.5 291.2L710 291.2L709.5 291.3L709 291.3L708.5 291.5L708 291.7L707.5 291.2L707 291.2L706.5 291.2L706 291.2L705.5 291.2L705 291.2L704.5 291.3L704 291.2L703.5 291.3L703 291.3L702.5 291.3L702 291.2L701.5 291.3L701 291.4L700.5 291.5L700 291.9L699.5 291.3L699 291.2L698.5 291.2L698 291.2L697.5 291.3L697 291.3L696.5 291.2L696 291.2L695.5 291.2L695 291.3L694.5 291.3L694 291.2L693.5 291.2L693 291.2L692.5 291.2L692 291.2L691.5 291.2L691 291.3L690.5 291.5L690 291.7L689.5 291.2L689 291.2L688.5 291.2L688 291.3L687.5 291.2L687 291.2L686.5 291.2L686 291.2L685.5 291.2L685 291.3L684.5 291.2L684 291.2L683.5 291.2L683 291.2L682.5 291.2L682 291.2L681.5 291.3L681 291.4L680.5 291.6L680 291.8L679.5 291.2L679 291.2L678.5 291.2L678 291.2L677.5 291.2L677 291.2L676.5 291.2L676 291.2L675.5 291.3L675 291.3L674.5 291.3L674 291.2L673.5 291.2L673 291.4L672.5 291.5L672 291.8L671.5 291.2L671 291.2L670.5 291.2L670 291.2L669.5 291.2L669 291.2L668.5 291.2L668 291.2L667.5 291.2L667 291.2L666.5 291.2L666 291.2L665.5 291.2L665 291.2L664.5 291.2L664 291.2L663.5 291.2L663 291.2L662.5 291.2L662 291.3L661.5 291.2L661 291.3L660.5 291.4L660 291.6L659.5 291.2L659 291.2L658.5 291.2L658 291.2L657.5 291.2L657 291.3L656.5 291.2L656 291.3L655.5 291.2L655 291.3L654.5 291.2L654 291.2L653.5 291.2L653 291.3L652.5 291.4L652 291.7L651.5 291.3L651 291.2L650.5 291.2L650 291.3L649.5 291.3L649 291.3L648.5 291.3L648 291.4L647.5 291.6L647 291.6L646.5 291.8L646 291.7L645.5 292L645 292.1L644.5 292.4L644 292.5L643.5 293.1L643 293.4L642.5 291.4L642 291.2L641.5 291.3L641 291.3L640.5 291.2L640 291.2L639.5 291.2L639 291.2L638.5 291.2L638 291.2L637.5 291.3L637 291.3L636.5 291.3L636 291.5L635.5 291.5L635 291.5L634.5 291.6L634 291.8L633.5 291.9L633 292.3L632.5 292.6L632 292.9L631.5 293L631 293.8L630.5 293.1L630 291.3L629.5 291.3L629 291.2L628.5 291.2L628 291.2L627.5 291.3L627 291.3L626.5 291.2L626 291.2L625.5 291.2L625 291.2L624.5 291.2L624 291.3L623.5 291.2L623 291.2L622.5 291.3L622 291.3L621.5 291.3L621 291.2L620.5 291.2L620 291.3L619.5 291.2L619 291.3L618.5 291.4L618 291.6L617.5 291.2L617 291.3L616.5 291.2L616 291.2L615.5 291.2L615 291.2L614.5 291.2L614 291.2L613.5 291.2L613 291.2L612.5 291.3L612 291.2L611.5 291.2L611 291.3L610.5 291.4L610 291.7L609.5 291.2L609 291.2L608.5 291.2L608 291.2L607.5 291.3L607 291.3L606.5 291.2L606 291.3L605.5 291.3L605 291.2L604.5 291.2L604 291.3L603.5 291.3L603 291.3L602.5 291.4L602 291.5L601.5 291.7L601 291.7L600.5 292.1L600 292.1L599.5 292.5L599 291.6L598.5 291.3L598 291.2L597.5 291.2L597 291.3L596.5 291.2L596 291.2L595.5 291.3L595 291.4L594.5 291.5L594 291.8L593.5 291.2L593 291.3L592.5 291.2L592 291.2L591.5 291.2L591 291.2L590.5 291.3L590 291.4L589.5 291.4L589 291.6L588.5 291.7L588 292L587.5 291.3L587 291.3L586.5 291.3L586 291.2L585.5 291.2L585 291.2L584.5 291.2L584 291.3L583.5 291.3L583 291.3L582.5 291.3L582 291.3L581.5 291.3L581 291.4L580.5 291.6L580 291.8L579.5 291.2L579 291.3L578.5 291.2L578 291.3L577.5 291.3L577 291.2L576.5 291.2L576 291.2L575.5 291.2L575 291.2L574.5 291.2L574 291.2L573.5 291.4L573 291.5L572.5 291.7L572 292L571.5 291.2L571 291.3L570.5 291.2L570 291.2L569.5 291.2L569 291.2L568.5 291.2L568 291.2L567.5 291.3L567 291.4L566.5 291.5L566 291.8L565.5 291.2L565 291.3L564.5 291.2L564 291.3L563.5 291.3L563 291.3L562.5 291.4L562 291.4L561.5 291.5L561 291.5L560.5 291.7L560 291.7L559.5 291.9L559 292.1L558.5 292.3L558 292.4L557.5 292.3L557 292.5L556.5 292.9L556 293.5L555.5 293.6L555 294.6L554.5 292.4L554 291.2L553.5 291.2L553 291.2L552.5 291.2L552 291.2L551.5 291.2L551 291.2L550.5 291.2L550 291.3L549.5 291.2L549 291.2L548.5 291.2L548 291.2L547.5 291.2L547 291.2L546.5 291.3L546 291.3L545.5 291.2L545 291.2L544.5 291.2L544 291.3L543.5 291.3L543 291.2L542.5 291.2L542 291.2L541.5 291.2L541 291.2L540.5 291.2L540 291.2L539.5 291.3L539 291.2L538.5 291.2L538 291.2L537.5 291.3L537 291.3L536.5 291.5L536 291.8L535.5 291.3L535 291.2L534.5 291.3L534 291.2L533.5 291.2L533 291.2L532.5 291.2L532 291.2L531.5 291.3L531 291.3Z" fill="#f2faf4" opacity="1"/>
<line x1="555" y1="282.6" x2="555" y2="299.6" stroke="#cfe8d8" stroke-width="0.35" opacity="0.6"/>
<line x1="599.5" y1="286.6" x2="599.5" y2="295.6" stroke="#cfe8d8" stroke-width="0.35" opacity="0.6"/>
<line x1="630.8" y1="284.1" x2="630.8" y2="298.1" stroke="#cfe8d8" stroke-width="0.35" opacity="0.6"/>
<line x1="643.2" y1="285.1" x2="643.2" y2="297.1" stroke="#cfe8d8" stroke-width="0.35" opacity="0.6"/>
<line x1="715.8" y1="285.1" x2="715.8" y2="297.1" stroke="#cfe8d8" stroke-width="0.35" opacity="0.6"/>
<line x1="721.4" y1="284.1" x2="721.4" y2="298.1" stroke="#cfe8d8" stroke-width="0.35" opacity="0.6"/>
<line x1="742" y1="286.1" x2="742" y2="296.1" stroke="#cfe8d8" stroke-width="0.35" opacity="0.6"/>
<line x1="755.5" y1="286.1" x2="755.5" y2="296.1" stroke="#cfe8d8" stroke-width="0.35" opacity="0.6"/>
<path d="M531 315.2L531.5 314.9L532 314.7L532.5 314.4L533 314.2L533.5 314L534 314.1L534.5 314.3L535 314.5L535.5 314.8L536 315L536.5 315.1L537 314.8L537.5 314.6L538 314.4L538.5 314.1L539 313.9L539.5 314.2L540 314.4L540.5 314.6L541 314.9L541.5 315.1L542 315L542.5 314.7L543 314.5L543.5 314.3L544 314L544.5 314L545 314.3L545.5 314.5L546 314.7L546.5 315L547 315.1L547.5 314.9L548 314.6L548.5 314.4L549 314.2L549.5 313.9L550 314.1L550.5 314.4L551 314.6L551.5 314.8L552 315.1L552.5 315L553 314.8L553.5 314.5L554 314.3L554.5 314.1L555 314L555.5 314.2L556 314.4L556.5 314.7L557 314.9L557.5 315.2L558 314.9L558.5 314.7L559 314.4L559.5 314.2L560 314L560.5 314.1L561 314.3L561.5 314.5L562 314.8L562.5 315L563 315.1L563.5 314.8L564 314.6L564.5 314.4L565 314.1L565.5 313.9L566 314.2L566.5 314.4L567 314.6L567.5 314.9L568 315.1L568.5 315L569 314.7L569.5 314.5L570 314.3L570.5 314L571 314L571.5 314.3L572 314.5L572.5 314.7L573 315L573.5 315.1L574 314.9L574.5 314.6L575 314.4L575.5 314.2L576 313.9L576.5 314.1L577 314.4L577.5 314.6L578 314.8L578.5 315.1L579 315L579.5 314.8L580 314.5L580.5 314.3L581 314.1L581.5 314L582 314.2L582.5 314.4L583 314.7L583.5 314.9L584 315.2L584.5 314.9L585 314.7L585.5 314.4L586 314.2L586.5 314L587 314.1L587.5 314.3L588 314.5L588.5 314.8L589 315L589.5 315.1L590 314.8L590.5 314.6L591 314.4L591.5 314.1L592 313.9L592.5 314.2L593 314.4L593.5 314.6L594 314.9L594.5 315.1L595 315L595.5 314.7L596 314.5L596.5 314.3L597 314L597.5 314L598 314.3L598.5 314.5L599 314.7L599.5 315L600 315.1L600.5 314.9L601 314.6L601.5 314.4L602 314.2L602.5 313.9L603 314.1L603.5 314.4L604 314.6L604.5 314.8L605 315.1L605.5 315L606 314.8L606.5 314.5L607 314.3L607.5 314.1L608 314L608.5 314.2L609 314.4L609.5 314.7L610 314.9L610.5 315.2L611 314.9L611.5 314.7L612 314.4L612.5 314.2L613 314L613.5 314.1L614 314.3L614.5 314.5L615 314.8L615.5 315L616 315.1L616.5 314.8L617 314.6L617.5 314.4L618 314.1L618.5 313.9L619 314.2L619.5 314.4L620 314.6L620.5 314.9L621 315.1L621.5 315L622 314.7L622.5 314.5L623 314.3L623.5 314L624 314L624.5 314.3L625 314.5L625.5 314.7L626 315L626.5 315.1L627 314.9L627.5 314.6L628 314.4L628.5 314.2L629 313.9L629.5 314.1L630 314.4L630.5 314.6L631 314.8L631.5 315.1L632 315L632.5 314.8L633 314.5L633.5 314.3L634 314.1L634.5 314L635 314.2L635.5 314.4L636 314.7L636.5 314.9L637 315.2L637.5 314.9L638 314.7L638.5 314.4L639 314.2L639.5 314L640 314.1L640.5 314.3L641 314.5L641.5 314.8L642 315L642.5 315.1L643 314.8L643.5 314.6L644 314.4L644.5 314.1L645 313.9L645.5 314.2L646 314.4L646.5 314.6L647 314.9L647.5 315.1L648 315L648.5 314.7L649 314.5L649.5 314.3L650 314L650.5 314L651 314.3L651.5 314.5L652 314.7L652.5 315L653 315.1L653.5 314.9L654 314.6L654.5 314.4L655 314.2L655.5 313.9L656 314.1L656.5 314.4L657 314.6L657.5 314.8L658 315.1L658.5 315L659 314.8L659.5 314.5L660 314.3L660.5 314.1L661 314L661.5 314.2L662 314.4L662.5 314.7L663 314.9L663.5 315.2L664 314.9L664.5 314.7L665 314.4L665.5 314.2L666 314L666.5 314.1L667 314.3L667.5 314.5L668 314.8L668.5 315L669 315.1L669.5 314.8L670 314.6L670.5 314.4L671 314.1L671.5 313.9L672 314.2L672.5 314.4L673 314.6L673.5 314.9L674 315.1L674.5 315L675 314.7L675.5 314.5L676 314.3L676.5 314L677 314L677.5 314.3L678 314.5L678.5 314.7L679 315L679.5 315.1L680 314.9L680.5 314.6L681 314.4L681.5 314.2L682 313.9L682.5 314.1L683 314.4L683.5 314.6L684 314.8L684.5 315.1L685 315L685.5 314.8L686 314.5L686.5 314.3L687 314.1L687.5 314L688 314.2L688.5 314.4L689 314.7L689.5 314.9L690 315.1L690.5 314.9L691 314.7L691.5 314.4L692 314.2L692.5 314L693 314.1L693.5 314.3L694 314.5L694.5 314.8L695 315L695.5 315.1L696 314.8L696.5 314.6L697 314.4L697.5 314.1L698 313.9L698.5 314.2L699 314.4L699.5 314.6L700 314.9L700.5 315.1L701 315L701.5 314.7L702 314.5L702.5 314.3L703 314L703.5 314L704 314.3L704.5 314.5L705 314.7L705.5 315L706 315.1L706.5 314.9L707 314.6L707.5 314.4L708 314.2L708.5 313.9L709 314.1L709.5 314.4L710 314.6L710.5 314.8L711 315.1L711.5 315L712 314.8L712.5 314.5L713 314.3L713.5 314.1L714 314L714.5 314.2L715 314.4L715.5 314.7L716 314.9L716.5 315.1L717 314.9L717.5 314.7L718 314.4L718.5 314.2L719 314L719.5 314.1L720 314.3L720.5 314.5L721 314.8L721.5 315L722 315.1L722.5 314.8L723 314.6L723.5 314.4L724 314.1L724.5 313.9L725 314.2L725.5 314.4L726 314.6L726.5 314.9L727 315.1L727.5 315L728 314.7L728.5 314.5L729 314.3L729.5 314L730 314L730.5 314.3L731 314.5L731.5 314.7L732 315L732.5 315.1L733 314.9L733.5 314.6L734 314.4L734.5 314.2L735 313.9L735.5 314.1L736 314.4L736.5 314.6L737 314.8L737.5 315.1L738 315L738.5 314.8L739 314.5L739.5 314.3L740 314.1L740.5 314L741 314.2L741.5 314.4L742 314.7L742.5 314.9L743 315.2L743.5 314.9L744 314.7L744.5 314.4L745 314.2L745.5 314L746 314.1L746.5 314.3L747 314.5L747.5 314.8L748 315L748.5 315.1L749 314.8L749.5 314.6L750 314.4L750.5 314.1L751 313.9L751.5 314.2L752 314.4L752.5 314.6L753 314.9L753.5 315.1L754 315L754.5 314.7L755 314.5L755.5 314.3L756 314L756.5 314L757 314.3L757.5 314.5L758 314.7L758.5 315L759 315.1L759.5 314.9L760 314.6L760.5 314.4L761 314.2L761.5 313.9L762 314.1L762.5 314.4L763 314.6L763.5 314.8L764 315.1L764.5 315L765 314.8L765.5 314.5L766 314.3L766.5 314.1L767 314L767.5 314.2L768 314.4L768.5 314.7L769 314.9L769.5 315.2L770 314.9L770.5 314.7L771 314.4L771.5 314.2L772 314L772.5 314.1L773 314.3L773 316.1L772.5 316.3L772 316.4L771.5 316.2L771 316L770.5 315.7L770 315.5L769.5 315.2L769 315.5L768.5 315.7L768 316L767.5 316.2L767 316.4L766.5 316.3L766 316.1L765.5 315.9L765 315.6L764.5 315.4L764 315.3L763.5 315.6L763 315.8L762.5 316L762 316.3L761.5 316.5L761 316.2L760.5 316L760 315.8L759.5 315.5L759 315.3L758.5 315.4L758 315.7L757.5 315.9L757 316.1L756.5 316.4L756 316.4L755.5 316.1L755 315.9L754.5 315.7L754 315.4L753.5 315.3L753 315.5L752.5 315.8L752 316L751.5 316.2L751 316.5L750.5 316.3L750 316L749.5 315.8L749 315.6L748.5 315.3L748 315.4L747.5 315.6L747 315.9L746.5 316.1L746 316.3L745.5 316.4L745 316.2L744.5 316L744 315.7L743.5 315.5L743 315.2L742.5 315.5L742 315.7L741.5 316L741 316.2L740.5 316.4L740 316.3L739.5 316.1L739 315.9L738.5 315.6L738 315.4L737.5 315.3L737 315.6L736.5 315.8L736 316L735.5 316.3L735 316.5L734.5 316.2L734 316L733.5 315.8L733 315.5L732.5 315.3L732 315.4L731.5 315.7L731 315.9L730.5 316.1L730 316.4L729.5 316.4L729 316.1L728.5 315.9L728 315.7L727.5 315.4L727 315.3L726.5 315.5L726 315.8L725.5 316L725 316.2L724.5 316.5L724 316.3L723.5 316L723 315.8L722.5 315.6L722 315.3L721.5 315.4L721 315.6L720.5 315.9L720 316.1L719.5 316.3L719 316.4L718.5 316.2L718 316L717.5 315.7L717 315.5L716.5 315.3L716 315.5L715.5 315.7L715 316L714.5 316.2L714 316.4L713.5 316.3L713 316.1L712.5 315.9L712 315.6L711.5 315.4L711 315.3L710.5 315.6L710 315.8L709.5 316L709 316.3L708.5 316.5L708 316.2L707.5 316L707 315.8L706.5 315.5L706 315.3L705.5 315.4L705 315.7L704.5 315.9L704 316.1L703.5 316.4L703 316.4L702.5 316.1L702 315.9L701.5 315.7L701 315.4L700.5 315.3L700 315.5L699.5 315.8L699 316L698.5 316.2L698 316.5L697.5 316.3L697 316L696.5 315.8L696 315.6L695.5 315.3L695 315.4L694.5 315.6L694 315.9L693.5 316.1L693 316.3L692.5 316.4L692 316.2L691.5 316L691 315.7L690.5 315.5L690 315.3L689.5 315.5L689 315.7L688.5 316L688 316.2L687.5 316.4L687 316.3L686.5 316.1L686 315.9L685.5 315.6L685 315.4L684.5 315.3L684 315.6L683.5 315.8L683 316L682.5 316.3L682 316.5L681.5 316.2L681 316L680.5 315.8L680 315.5L679.5 315.3L679 315.4L678.5 315.7L678 315.9L677.5 316.1L677 316.4L676.5 316.4L676 316.1L675.5 315.9L675 315.7L674.5 315.4L674 315.3L673.5 315.5L673 315.8L672.5 316L672 316.2L671.5 316.5L671 316.3L670.5 316L670 315.8L669.5 315.6L669 315.3L668.5 315.4L668 315.6L667.5 315.9L667 316.1L666.5 316.3L666 316.4L665.5 316.2L665 316L664.5 315.7L664 315.5L663.5 315.2L663 315.5L662.5 315.7L662 316L661.5 316.2L661 316.4L660.5 316.3L660 316.1L659.5 315.9L659 315.6L658.5 315.4L658 315.3L657.5 315.6L657 315.8L656.5 316L656 316.3L655.5 316.5L655 316.2L654.5 316L654 315.8L653.5 315.5L653 315.3L652.5 315.4L652 315.7L651.5 315.9L651 316.1L650.5 316.4L650 316.4L649.5 316.1L649 315.9L648.5 315.7L648 315.4L647.5 315.3L647 315.5L646.5 315.8L646 316L645.5 316.2L645 316.5L644.5 316.3L644 316L643.5 315.8L643 315.6L642.5 315.3L642 315.4L641.5 315.6L641 315.9L640.5 316.1L640 316.3L639.5 316.4L639 316.2L638.5 316L638 315.7L637.5 315.5L637 315.2L636.5 315.5L636 315.7L635.5 316L635 316.2L634.5 316.4L634 316.3L633.5 316.1L633 315.9L632.5 315.6L632 315.4L631.5 315.3L631 315.6L630.5 315.8L630 316L629.5 316.3L629 316.5L628.5 316.2L628 316L627.5 315.8L627 315.5L626.5 315.3L626 315.4L625.5 315.7L625 315.9L624.5 316.1L624 316.4L623.5 316.4L623 316.1L622.5 315.9L622 315.7L621.5 315.4L621 315.3L620.5 315.5L620 315.8L619.5 316L619 316.2L618.5 316.5L618 316.3L617.5 316L617 315.8L616.5 315.6L616 315.3L615.5 315.4L615 315.6L614.5 315.9L614 316.1L613.5 316.3L613 316.4L612.5 316.2L612 316L611.5 315.7L611 315.5L610.5 315.2L610 315.5L609.5 315.7L609 316L608.5 316.2L608 316.4L607.5 316.3L607 316.1L606.5 315.9L606 315.6L605.5 315.4L605 315.3L604.5 315.6L604 315.8L603.5 316L603 316.3L602.5 316.5L602 316.2L601.5 316L601 315.8L600.5 315.5L600 315.3L599.5 315.4L599 315.7L598.5 315.9L598 316.1L597.5 316.4L597 316.4L596.5 316.1L596 315.9L595.5 315.7L595 315.4L594.5 315.3L594 315.5L593.5 315.8L593 316L592.5 316.2L592 316.5L591.5 316.3L591 316L590.5 315.8L590 315.6L589.5 315.3L589 315.4L588.5 315.6L588 315.9L587.5 316.1L587 316.3L586.5 316.4L586 316.2L585.5 316L585 315.7L584.5 315.5L584 315.2L583.5 315.5L583 315.7L582.5 316L582 316.2L581.5 316.4L581 316.3L580.5 316.1L580 315.9L579.5 315.6L579 315.4L578.5 315.3L578 315.6L577.5 315.8L577 316L576.5 316.3L576 316.5L575.5 316.2L575 316L574.5 315.8L574 315.5L573.5 315.3L573 315.4L572.5 315.7L572 315.9L571.5 316.1L571 316.4L570.5 316.4L570 316.1L569.5 315.9L569 315.7L568.5 315.4L568 315.3L567.5 315.5L567 315.8L566.5 316L566 316.2L565.5 316.5L565 316.3L564.5 316L564 315.8L563.5 315.6L563 315.3L562.5 315.4L562 315.6L561.5 315.9L561 316.1L560.5 316.3L560 316.4L559.5 316.2L559 316L558.5 315.7L558 315.5L557.5 315.2L557 315.5L556.5 315.7L556 316L555.5 316.2L555 316.4L554.5 316.3L554 316.1L553.5 315.9L553 315.6L552.5 315.4L552 315.3L551.5 315.6L551 315.8L550.5 316L550 316.3L549.5 316.5L549 316.2L548.5 316L548 315.8L547.5 315.5L547 315.3L546.5 315.4L546 315.7L545.5 315.9L545 316.1L544.5 316.4L544 316.4L543.5 316.1L543 315.9L542.5 315.7L542 315.4L541.5 315.3L541 315.5L540.5 315.8L540 316L539.5 316.2L539 316.5L538.5 316.3L538 316L537.5 315.8L537 315.6L536.5 315.3L536 315.4L535.5 315.6L535 315.9L534.5 316.1L534 316.3L533.5 316.4L533 316.2L532.5 316L532 315.7L531.5 315.5L531 315.2Z" fill="#a4ccb4" opacity="0.7"/>
<path d="M531 315.2L531.5 315.2L532 315.2L532.5 315.2L533 315.2L533.5 315.2L534 315.2L534.5 315.2L535 315.2L535.5 315.2L536 315.2L536.5 315.2L537 315.2L537.5 315.1L538 315.2L538.5 315.2L539 315.2L539.5 315.1L540 315.2L540.5 315.2L541 315.1L541.5 315.2L542 315.1L542.5 315.2L543 315.2L543.5 315.2L544 315.2L544.5 315.1L545 315.2L545.5 315.2L546 315.2L546.5 315.2L547 315.2L547.5 315.2L548 315.2L548.5 315.2L549 315.1L549.5 315.2L550 315.2L550.5 315.2L551 315.2L551.5 315.2L552 315.1L552.5 315.1L553 315.2L553.5 315.2L554 315.2L554.5 315.1L555 315.1L555.5 315.2L556 315.1L556.5 315.2L557 315.2L557.5 315.1L558 315.2L558.5 315.2L559 315.2L559.5 315.1L560 314.4L560.5 313.5L561 313.9L561.5 314.4L562 314.6L562.5 314.8L563 315L563.5 315L564 315.1L564.5 315.1L565 315.2L565.5 315.2L566 315.2L566.5 315.2L567 315.2L567.5 315.2L568 315.1L568.5 315.2L569 315.2L569.5 315.2L570 315.1L570.5 315.1L571 315.1L571.5 315.2L572 315.2L572.5 315.2L573 315.1L573.5 315.1L574 315.2L574.5 315.2L575 315.2L575.5 315.2L576 315.2L576.5 315.2L577 315.2L577.5 315.2L578 315.2L578.5 315.2L579 315.2L579.5 315.1L580 315.1L580.5 315.2L581 315.2L581.5 315.1L582 315.2L582.5 315.1L583 315.1L583.5 315.1L584 315.1L584.5 315.2L585 315.2L585.5 315.2L586 315.2L586.5 315.2L587 315.2L587.5 315.2L588 315.2L588.5 315.2L589 315.2L589.5 315.2L590 315.2L590.5 315.2L591 315.2L591.5 315.2L592 315.1L592.5 315.2L593 315.2L593.5 315.2L594 315.2L594.5 315.2L595 315.2L595.5 315.1L596 315.1L596.5 315.2L597 315.2L597.5 315.2L598 315.2L598.5 315.2L599 314.6L599.5 313.5L600 313.8L600.5 314.3L601 314.6L601.5 314.8L602 315L602.5 315.1L603 315.1L603.5 315.1L604 315.1L604.5 315.1L605 315.1L605.5 315.1L606 315.2L606.5 315.2L607 315.2L607.5 315.2L608 315.2L608.5 315.2L609 315.2L609.5 315.1L610 315.1L610.5 315.2L611 315.1L611.5 315.1L612 315.1L612.5 315.2L613 315.2L613.5 315.2L614 315.2L614.5 315.2L615 315.2L615.5 315.1L616 315.1L616.5 315.2L617 315.2L617.5 315.1L618 315.2L618.5 315.2L619 315.1L619.5 315.1L620 315.1L620.5 315.2L621 315.2L621.5 315.1L622 315.2L622.5 315.1L623 315.1L623.5 315.2L624 315.2L624.5 315.1L625 315.1L625.5 315.2L626 315.2L626.5 315.2L627 315.1L627.5 315.1L628 315.2L628.5 315.1L629 315.1L629.5 315.2L630 315.2L630.5 315.2L631 315.2L631.5 315.2L632 314.7L632.5 312.9L633 313.7L633.5 314.4L634 314.7L634.5 314.8L635 315L635.5 315L636 315.1L636.5 315.1L637 315.1L637.5 315.2L638 315.2L638.5 315.2L639 315.2L639.5 315.2L640 315.1L640.5 315.2L641 315.2L641.5 315.1L642 315.2L642.5 315.2L643 315.2L643.5 315.2L644 315.1L644.5 315.2L645 315.2L645.5 315.2L646 315.2L646.5 315.1L647 315.2L647.5 315.2L648 315.1L648.5 315.1L649 315.2L649.5 315.2L650 315.2L650.5 315.2L651 315.1L651.5 315.2L652 315.2L652.5 315.2L653 315.1L653.5 315.1L654 315.1L654.5 315.1L655 315.2L655.5 315.2L656 315.1L656.5 315.1L657 315.2L657.5 315.2L658 315.2L658.5 315.2L659 315.2L659.5 315.2L660 315.1L660.5 315.1L661 315.1L661.5 315.2L662 315.1L662.5 315.2L663 315.2L663.5 315.1L664 315.1L664.5 315.2L665 315.1L665.5 315.2L666 315.2L666.5 315.1L667 315.1L667.5 315.2L668 315.2L668.5 315.2L669 315.2L669.5 315.2L670 315.2L670.5 315.1L671 315.2L671.5 315.2L672 315.2L672.5 315.2L673 315.2L673.5 315.2L674 315.2L674.5 315.2L675 315.1L675.5 315.1L676 315.1L676.5 315.2L677 314.9L677.5 314.5L678 314.7L678.5 314.9L679 315L679.5 315.1L680 315.1L680.5 315.2L681 315.2L681.5 315.1L682 315.1L682.5 315.1L683 315.2L683.5 315.1L684 315.2L684.5 315.2L685 315.2L685.5 315.1L686 315.2L686.5 315.2L687 315.2L687.5 315.2L688 315.2L688.5 315.2L689 315.2L689.5 315.2L690 315.2L690.5 315.2L691 315.1L691.5 315.2L692 315.2L692.5 315.2L693 315.2L693.5 315.2L694 315.2L694.5 315.2L695 315.1L695.5 315.2L696 315.2L696.5 315.2L697 315.1L697.5 315.2L698 315.1L698.5 315.2L699 315.2L699.5 315.1L700 315.2L700.5 315L701 313.5L701.5 314L702 314.6L702.5 314.9L703 315L703.5 315.1L704 315.1L704.5 315.1L705 315.1L705.5 315.2L706 315.2L706.5 315.2L707 315.2L707.5 315.1L708 315.1L708.5 315.2L709 315.2L709.5 315.1L710 315.2L710.5 315.2L711 315.2L711.5 315.2L712 315.2L712.5 315.2L713 315.2L713.5 315.1L714 313.9L714.5 314.4L715 314.7L715.5 314.8L716 315L716.5 315.1L717 315.1L717.5 315.1L718 315.2L718.5 315.2L719 315.1L719.5 315.2L720 315.1L720.5 315.1L721 315.2L721.5 315.2L722 315.2L722.5 314.9L723 312.9L723.5 313.6L724 314.3L724.5 314.6L725 314.8L725.5 314.9L726 315L726.5 315.1L727 315.1L727.5 315.1L728 315.2L728.5 315.2L729 315.2L729.5 315.2L730 315.1L730.5 315.2L731 315.1L731.5 315.1L732 315.2L732.5 315.2L733 315.2L733.5 315.1L734 315.1L734.5 315.2L735 315.2L735.5 315.2L736 315.2L736.5 315.2L737 315.1L737.5 315.2L738 315.2L738.5 315.2L739 315.2L739.5 315.2L740 315.1L740.5 315.1L741 315.1L741.5 315.2L742 315.2L742.5 315L743 313.2L743.5 313.9L744 314.7L744.5 314.8L745 315L745.5 315.1L746 315.1L746.5 315.2L747 315.2L747.5 315.2L748 315.2L748.5 315.1L749 315.2L749.5 315.1L750 315.2L750.5 315.2L751 315.2L751.5 315.2L752 315.2L752.5 315.2L753 315.2L753.5 315.2L754 315.2L754.5 315.1L755 315.2L755.5 315.1L756 315.1L756.5 315.2L757 315.1L757.5 315.1L758 315.1L758.5 315.2L759 315.2L759.5 315.2L760 315.1L760.5 315.2L761 315.2L761.5 315.2L762 315.2L762.5 315.2L763 315.2L763.5 315.1L764 315.2L764.5 315.1L765 315.2L765.5 315.2L766 315.2L766.5 315.2L767 315.2L767.5 315.1L768 315.1L768.5 315.1L769 315.2L769.5 315.1L770 315.1L770.5 315.2L771 315.1L771.5 315.2L772 315.1L772.5 315.2L773 315.1L773 315.3L772.5 315.2L772 315.3L771.5 315.2L771 315.3L770.5 315.2L770 315.3L769.5 315.3L769 315.2L768.5 315.3L768 315.3L767.5 315.3L767 315.2L766.5 315.2L766 315.2L765.5 315.2L765 315.2L764.5 315.3L764 315.2L763.5 315.3L763 315.2L762.5 315.2L762 315.2L761.5 315.2L761 315.2L760.5 315.2L760 315.3L759.5 315.2L759 315.2L758.5 315.2L758 315.3L757.5 315.3L757 315.3L756.5 315.2L756 315.3L755.5 315.3L755 315.2L754.5 315.3L754 315.2L753.5 315.2L753 315.2L752.5 315.2L752 315.2L751.5 315.2L751 315.2L750.5 315.2L750 315.2L749.5 315.3L749 315.2L748.5 315.3L748 315.2L747.5 315.2L747 315.2L746.5 315.2L746 315.3L745.5 315.3L745 315.4L744.5 315.6L744 315.7L743.5 316.5L743 317.2L742.5 315.4L742 315.2L741.5 315.2L741 315.3L740.5 315.3L740 315.3L739.5 315.2L739 315.2L738.5 315.2L738 315.2L737.5 315.2L737 315.3L736.5 315.2L736 315.2L735.5 315.2L735 315.2L734.5 315.2L734 315.3L733.5 315.3L733 315.2L732.5 315.2L732 315.2L731.5 315.3L731 315.3L730.5 315.2L730 315.3L729.5 315.2L729 315.2L728.5 315.2L728 315.2L727.5 315.3L727 315.3L726.5 315.3L726 315.4L725.5 315.5L725 315.6L724.5 315.8L724 316.1L723.5 316.8L723 317.5L722.5 315.5L722 315.2L721.5 315.2L721 315.2L720.5 315.3L720 315.3L719.5 315.2L719 315.3L718.5 315.2L718 315.2L717.5 315.3L717 315.3L716.5 315.3L716 315.4L715.5 315.6L715 315.7L714.5 316L714 316.5L713.5 315.3L713 315.2L712.5 315.2L712 315.2L711.5 315.2L711 315.2L710.5 315.2L710 315.2L709.5 315.3L709 315.2L708.5 315.2L708 315.3L707.5 315.3L707 315.2L706.5 315.2L706 315.2L705.5 315.2L705 315.3L704.5 315.3L704 315.3L703.5 315.3L703 315.4L702.5 315.5L702 315.8L701.5 316.4L701 316.9L700.5 315.4L700 315.2L699.5 315.3L699 315.2L698.5 315.2L698 315.3L697.5 315.2L697 315.3L696.5 315.2L696 315.2L695.5 315.2L695 315.3L694.5 315.2L694 315.2L693.5 315.2L693 315.2L692.5 315.2L692 315.2L691.5 315.2L691 315.3L690.5 315.2L690 315.2L689.5 315.2L689 315.2L688.5 315.2L688 315.2L687.5 315.2L687 315.2L686.5 315.2L686 315.2L685.5 315.3L685 315.2L684.5 315.2L684 315.2L683.5 315.3L683 315.2L682.5 315.3L682 315.3L681.5 315.3L681 315.2L680.5 315.2L680 315.3L679.5 315.3L679 315.4L678.5 315.5L678 315.7L677.5 315.9L677 315.5L676.5 315.2L676 315.3L675.5 315.3L675 315.3L674.5 315.2L674 315.2L673.5 315.2L673 315.2L672.5 315.2L672 315.2L671.5 315.2L671 315.2L670.5 315.3L670 315.2L669.5 315.2L669 315.2L668.5 315.2L668 315.2L667.5 315.2L667 315.3L666.5 315.3L666 315.2L665.5 315.2L665 315.3L664.5 315.2L664 315.3L663.5 315.3L663 315.2L662.5 315.2L662 315.3L661.5 315.2L661 315.3L660.5 315.3L660 315.3L659.5 315.2L659 315.2L658.5 315.2L658 315.2L657.5 315.2L657 315.2L656.5 315.3L656 315.3L655.5 315.2L655 315.2L654.5 315.3L654 315.3L653.5 315.3L653 315.3L652.5 315.2L652 315.2L651.5 315.2L651 315.3L650.5 315.2L650 315.2L649.5 315.2L649 315.2L648.5 315.3L648 315.3L647.5 315.2L647 315.2L646.5 315.3L646 315.2L645.5 315.2L645 315.2L644.5 315.2L644 315.3L643.5 315.2L643 315.2L642.5 315.2L642 315.2L641.5 315.3L641 315.2L640.5 315.2L640 315.3L639.5 315.2L639 315.2L638.5 315.2L638 315.2L637.5 315.2L637 315.3L636.5 315.3L636 315.3L635.5 315.4L635 315.4L634.5 315.6L634 315.7L633.5 316L633 316.7L632.5 317.5L632 315.7L631.5 315.2L631 315.2L630.5 315.2L630 315.2L629.5 315.2L629 315.3L628.5 315.3L628 315.2L627.5 315.3L627 315.3L626.5 315.2L626 315.2L625.5 315.2L625 315.3L624.5 315.3L624 315.2L623.5 315.2L623 315.3L622.5 315.3L622 315.2L621.5 315.3L621 315.2L620.5 315.2L620 315.3L619.5 315.3L619 315.3L618.5 315.2L618 315.2L617.5 315.3L617 315.2L616.5 315.2L616 315.3L615.5 315.3L615 315.2L614.5 315.2L614 315.2L613.5 315.2L613 315.2L612.5 315.2L612 315.3L611.5 315.3L611 315.3L610.5 315.2L610 315.3L609.5 315.3L609 315.2L608.5 315.2L608 315.2L607.5 315.2L607 315.2L606.5 315.2L606 315.2L605.5 315.3L605 315.3L604.5 315.3L604 315.3L603.5 315.3L603 315.3L602.5 315.3L602 315.4L601.5 315.6L601 315.8L600.5 316.1L600 316.6L599.5 316.9L599 315.8L598.5 315.2L598 315.2L597.5 315.2L597 315.2L596.5 315.2L596 315.3L595.5 315.3L595 315.2L594.5 315.2L594 315.2L593.5 315.2L593 315.2L592.5 315.2L592 315.3L591.5 315.2L591 315.2L590.5 315.2L590 315.2L589.5 315.2L589 315.2L588.5 315.2L588 315.2L587.5 315.2L587 315.2L586.5 315.2L586 315.2L585.5 315.2L585 315.2L584.5 315.2L584 315.3L583.5 315.3L583 315.3L582.5 315.3L582 315.2L581.5 315.3L581 315.2L580.5 315.2L580 315.3L579.5 315.3L579 315.2L578.5 315.2L578 315.2L577.5 315.2L577 315.2L576.5 315.2L576 315.2L575.5 315.2L575 315.2L574.5 315.2L574 315.2L573.5 315.3L573 315.3L572.5 315.2L572 315.2L571.5 315.2L571 315.3L570.5 315.3L570 315.3L569.5 315.2L569 315.2L568.5 315.2L568 315.3L567.5 315.2L567 315.2L566.5 315.2L566 315.2L565.5 315.2L565 315.2L564.5 315.3L564 315.3L563.5 315.4L563 315.4L562.5 315.6L562 315.8L561.5 316L561 316.5L560.5 316.9L560 316L559.5 315.3L559 315.2L558.5 315.2L558 315.2L557.5 315.3L557 315.2L556.5 315.2L556 315.3L555.5 315.2L555 315.3L554.5 315.3L554 315.2L553.5 315.2L553 315.2L552.5 315.3L552 315.3L551.5 315.2L551 315.2L550.5 315.2L550 315.2L549.5 315.2L549 315.3L548.5 315.2L548 315.2L547.5 315.2L547 315.2L546.5 315.2L546 315.2L545.5 315.2L545 315.2L544.5 315.3L544 315.2L543.5 315.2L543 315.2L542.5 315.2L542 315.3L541.5 315.2L541 315.3L540.5 315.2L540 315.2L539.5 315.3L539 315.2L538.5 315.2L538 315.2L537.5 315.3L537 315.2L536.5 315.2L536 315.2L535.5 315.2L535 315.2L534.5 315.2L534 315.2L533.5 315.2L533 315.2L532.5 315.2L532 315.2L531.5 315.2L531 315.2Z" fill="#f2faf4" opacity="0.95"/>
<line x1="560.3" y1="307.7" x2="560.3" y2="322.7" stroke="#cfe8d8" stroke-width="0.35" opacity="0.6"/>
<line x1="599.4" y1="307.7" x2="599.4" y2="322.7" stroke="#cfe8d8" stroke-width="0.35" opacity="0.6"/>
<line x1="632.4" y1="307.7" x2="632.4" y2="322.7" stroke="#cfe8d8" stroke-width="0.35" opacity="0.6"/>
<line x1="677.3" y1="311.82" x2="677.3" y2="318.57" stroke="#cfe8d8" stroke-width="0.35" opacity="0.6"/>
<line x1="701" y1="309.2" x2="701" y2="321.2" stroke="#cfe8d8" stroke-width="0.35" opacity="0.6"/>
<line x1="714" y1="309.95" x2="714" y2="320.45" stroke="#cfe8d8" stroke-width="0.35" opacity="0.6"/>
<line x1="723" y1="307.7" x2="723" y2="322.7" stroke="#cfe8d8" stroke-width="0.35" opacity="0.6"/>
<line x1="743" y1="309.2" x2="743" y2="321.2" stroke="#cfe8d8" stroke-width="0.35" opacity="0.6"/>
<path d="M531 339.3L531.5 339.2L532 339.3L532.5 339.2L533 339.3L533.5 339.3L534 339.2L534.5 339.3L535 339.2L535.5 339.2L536 339.2L536.5 339.2L537 339.3L537.5 339.2L538 339.3L538.5 339.3L539 339.3L539.5 339.3L540 339.2L540.5 339.2L541 339.2L541.5 339.3L542 339.3L542.5 339.2L543 339.3L543.5 339.2L544 339.2L544.5 339.2L545 339.3L545.5 339.2L546 339.2L546.5 339.2L547 339.2L547.5 339.2L548 339.3L548.5 339.3L549 339.2L549.5 339.2L550 339.3L550.5 339.2L551 339.2L551.5 339.2L552 339.2L552.5 339.3L553 339.2L553.5 339.2L554 339.3L554.5 339.2L555 339.3L555.5 339.2L556 339.2L556.5 339.2L557 339.2L557.5 339.2L558 339.3L558.5 339.3L559 339.2L559.5 339.2L560 338.9L560.5 338.3L561 338.8L561.5 339L562 339.1L562.5 339.2L563 339.2L563.5 339.2L564 339.2L564.5 339.3L565 339.3L565.5 339.2L566 339.3L566.5 339.3L567 339.2L567.5 339.3L568 339.2L568.5 339.2L569 339.2L569.5 339.2L570 339.3L570.5 339.3L571 339.3L571.5 339.3L572 339.2L572.5 339.2L573 339.2L573.5 339.2L574 339.2L574.5 339.2L575 339.3L575.5 339.3L576 339.3L576.5 339.2L577 339.2L577.5 339.2L578 339.2L578.5 339.2L579 339.3L579.5 339.2L580 339.3L580.5 339.2L581 339.3L581.5 339.2L582 339.2L582.5 339.2L583 339.2L583.5 339.3L584 339.2L584.5 339.2L585 339.3L585.5 339.2L586 339.2L586.5 339.2L587 339.3L587.5 339.3L588 339.2L588.5 339.2L589 339.3L589.5 339.2L590 339.2L590.5 339.2L591 339.2L591.5 339.2L592 339.2L592.5 339.3L593 339.3L593.5 339.2L594 339.3L594.5 339.2L595 339.2L595.5 339.2L596 339.3L596.5 339.2L597 339.2L597.5 339.3L598 339.2L598.5 339.2L599 339L599.5 338.4L600 338.6L600.5 339L601 339L601.5 339.1L602 339.2L602.5 339.2L603 339.2L603.5 339.2L604 339.2L604.5 339.2L605 339.2L605.5 339.3L606 339.2L606.5 339.3L607 339.2L607.5 339.2L608 339.2L608.5 339.3L609 339.3L609.5 339.2L610 339.2L610.5 339.2L611 339.2L611.5 339.2L612 339.2L612.5 339.2L613 339.2L613.5 339.2L614 339.2L614.5 339.2L615 339.2L615.5 339.3L616 339.3L616.5 339.2L617 339.3L617.5 339.2L618 339.3L618.5 339.2L619 339.3L619.5 339.3L620 339.2L620.5 339.2L621 339.3L621.5 339.2L622 339.2L622.5 339.2L623 339.2L623.5 339.2L624 339.2L624.5 339.3L625 339.2L625.5 339.2L626 339.2L626.5 339.2L627 339.2L627.5 339.2L628 339.2L628.5 339.2L629 339.2L629.5 339.2L630 339.2L630.5 339.2L631 339.3L631.5 339.2L632 339.1L632.5 338.2L633 338.6L633.5 338.9L634 339.1L634.5 339.2L635 339.2L635.5 339.2L636 339.2L636.5 339.2L637 339.3L637.5 339.2L638 339.3L638.5 339.2L639 339.3L639.5 339.2L640 339.3L640.5 339.3L641 339.3L641.5 339.2L642 339.2L642.5 339.2L643 339.3L643.5 339.3L644 339.3L644.5 339.3L645 339.2L645.5 339.3L646 339.3L646.5 339.2L647 339.2L647.5 339.2L648 339.2L648.5 339.3L649 339.2L649.5 339.2L650 339.2L650.5 339.2L651 339.2L651.5 339.2L652 339.2L652.5 339.3L653 339.3L653.5 339.2L654 339.3L654.5 339.2L655 339.3L655.5 339.2L656 339.2L656.5 339.2L657 339.2L657.5 339.2L658 339.2L658.5 339.2L659 339.2L659.5 339.2L660 339.2L660.5 339.2L661 339.2L661.5 339.2L662 339.2L662.5 339.3L663 339.2L663.5 339.2L664 339.3L664.5 339.2L665 339.2L665.5 339.2L666 339.2L666.5 339.2L667 339.3L667.5 339.3L668 339.2L668.5 339.2L669 339.2L669.5 339.2L670 339.3L670.5 339.2L671 339.3L671.5 339.2L672 339.2L672.5 339.3L673 339.2L673.5 339.2L674 339.3L674.5 339.2L675 339.3L675.5 339.3L676 339.2L676.5 339.3L677 339.1L677.5 338.8L678 339L678.5 339.1L679 339.2L679.5 339.2L680 339.2L680.5 339.3L681 339.2L681.5 339.2L682 339.2L682.5 339.3L683 339.3L683.5 339.2L684 339.2L684.5 339.3L685 339.3L685.5 339.3L686 339.2L686.5 339.2L687 339.2L687.5 339.3L688 339.2L688.5 339.2L689 339.2L689.5 339.2L690 339.2L690.5 339.3L691 339.2L691.5 339.3L692 339.2L692.5 339.2L693 339.2L693.5 339.2L694 339.2L694.5 339.3L695 339.2L695.5 339.2L696 339.2L696.5 339.2L697 339.2L697.5 339.2L698 339.2L698.5 339.2L699 339.2L699.5 339.3L700 339.3L700.5 339.2L701 338.3L701.5 338.7L702 338.9L702.5 339.1L703 339.2L703.5 339.2L704 339.2L704.5 339.2L705 339.2L705.5 339.2L706 339.2L706.5 339.2L707 339.3L707.5 339.2L708 339.3L708.5 339.2L709 339.2L709.5 339.2L710 339.2L710.5 339.2L711 339.2L711.5 339.2L712 339.3L712.5 339.3L713 339.2L713.5 339.2L714 338.5L714.5 338.9L715 339L715.5 339.2L716 339.2L716.5 339.2L717 339.2L717.5 339.2L718 339.2L718.5 339.2L719 339.3L719.5 339.2L720 339.2L720.5 339.2L721 339.2L721.5 339.2L722 339.3L722.5 339.2L723 338.2L723.5 338.6L724 338.8L724.5 339L725 339.2L725.5 339.2L726 339.2L726.5 339.3L727 339.2L727.5 339.3L728 339.2L728.5 339.2L729 339.2L729.5 339.3L730 339.3L730.5 339.2L731 339.2L731.5 339.2L732 339.2L732.5 339.2L733 339.3L733.5 339.2L734 339.2L734.5 339.2L735 339.2L735.5 339.2L736 339.2L736.5 339.2L737 339.2L737.5 339.2L738 339.3L738.5 339.2L739 339.2L739.5 339.2L740 339.2L740.5 339.2L741 339.2L741.5 339.2L742 339.2L742.5 339.2L743 338.4L743.5 338.7L744 339L744.5 339.1L745 339.2L745.5 339.2L746 339.2L746.5 339.2L747 339.2L747.5 339.2L748 339.2L748.5 339.2L749 339.2L749.5 339.2L750 339.2L750.5 339.2L751 339.2L751.5 339.3L752 339.3L752.5 339.2L753 339.2L753.5 339.2L754 339.2L754.5 339.2L755 339.2L755.5 339.2L756 339.2L756.5 339.2L757 339.3L757.5 339.3L758 339.2L758.5 339.2L759 339.2L759.5 339.2L760 339.2L760.5 339.2L761 339.3L761.5 339.2L762 339.2L762.5 339.2L763 339.2L763.5 339.2L764 339.2L764.5 339.3L765 339.2L765.5 339.2L766 339.2L766.5 339.3L767 339.3L767.5 339.3L768 339.3L768.5 339.3L769 339.2L769.5 339.2L770 339.2L770.5 339.2L771 339.2L771.5 339.3L772 339.3L772.5 339.3L773 339.2L773 339.4L772.5 339.3L772 339.3L771.5 339.3L771 339.4L770.5 339.4L770 339.4L769.5 339.4L769 339.4L768.5 339.3L768 339.3L767.5 339.3L767 339.3L766.5 339.3L766 339.4L765.5 339.4L765 339.4L764.5 339.3L764 339.4L763.5 339.4L763 339.4L762.5 339.4L762 339.4L761.5 339.4L761 339.3L760.5 339.4L760 339.4L759.5 339.4L759 339.4L758.5 339.4L758 339.4L757.5 339.3L757 339.3L756.5 339.4L756 339.4L755.5 339.4L755 339.4L754.5 339.4L754 339.4L753.5 339.4L753 339.4L752.5 339.4L752 339.3L751.5 339.3L751 339.4L750.5 339.4L750 339.4L749.5 339.4L749 339.4L748.5 339.4L748 339.4L747.5 339.4L747 339.4L746.5 339.4L746 339.4L745.5 339.4L745 339.4L744.5 339.5L744 339.6L743.5 339.9L743 340.2L742.5 339.4L742 339.4L741.5 339.4L741 339.4L740.5 339.4L740 339.4L739.5 339.4L739 339.4L738.5 339.4L738 339.3L737.5 339.4L737 339.4L736.5 339.4L736 339.4L735.5 339.4L735 339.4L734.5 339.4L734 339.4L733.5 339.4L733 339.3L732.5 339.4L732 339.4L731.5 339.4L731 339.4L730.5 339.4L730 339.3L729.5 339.3L729 339.4L728.5 339.4L728 339.4L727.5 339.3L727 339.4L726.5 339.3L726 339.4L725.5 339.4L725 339.4L724.5 339.6L724 339.8L723.5 340L723 340.4L722.5 339.4L722 339.3L721.5 339.4L721 339.4L720.5 339.4L720 339.4L719.5 339.4L719 339.3L718.5 339.4L718 339.4L717.5 339.4L717 339.4L716.5 339.4L716 339.4L715.5 339.4L715 339.6L714.5 339.7L714 340.1L713.5 339.4L713 339.4L712.5 339.3L712 339.3L711.5 339.4L711 339.4L710.5 339.4L710 339.4L709.5 339.4L709 339.4L708.5 339.4L708 339.3L707.5 339.4L707 339.3L706.5 339.4L706 339.4L705.5 339.4L705 339.4L704.5 339.4L704 339.4L703.5 339.4L703 339.4L702.5 339.5L702 339.7L701.5 339.9L701 340.3L700.5 339.4L700 339.3L699.5 339.3L699 339.4L698.5 339.4L698 339.4L697.5 339.4L697 339.4L696.5 339.4L696 339.4L695.5 339.4L695 339.4L694.5 339.3L694 339.4L693.5 339.4L693 339.4L692.5 339.4L692 339.4L691.5 339.3L691 339.4L690.5 339.3L690 339.4L689.5 339.4L689 339.4L688.5 339.4L688 339.4L687.5 339.3L687 339.4L686.5 339.4L686 339.4L685.5 339.3L685 339.3L684.5 339.3L684 339.4L683.5 339.4L683 339.3L682.5 339.3L682 339.4L681.5 339.4L681 339.4L680.5 339.3L680 339.4L679.5 339.4L679 339.4L678.5 339.5L678 339.6L677.5 339.8L677 339.5L676.5 339.3L676 339.4L675.5 339.3L675 339.3L674.5 339.4L674 339.3L673.5 339.4L673 339.4L672.5 339.3L672 339.4L671.5 339.4L671 339.3L670.5 339.4L670 339.3L669.5 339.4L669 339.4L668.5 339.4L668 339.4L667.5 339.3L667 339.3L666.5 339.4L666 339.4L665.5 339.4L665 339.4L664.5 339.4L664 339.3L663.5 339.4L663 339.4L662.5 339.3L662 339.4L661.5 339.4L661 339.4L660.5 339.4L660 339.4L659.5 339.4L659 339.4L658.5 339.4L658 339.4L657.5 339.4L657 339.4L656.5 339.4L656 339.4L655.5 339.4L655 339.3L654.5 339.4L654 339.3L653.5 339.4L653 339.3L652.5 339.3L652 339.4L651.5 339.4L651 339.4L650.5 339.4L650 339.4L649.5 339.4L649 339.4L648.5 339.3L648 339.4L647.5 339.4L647 339.4L646.5 339.4L646 339.3L645.5 339.3L645 339.4L644.5 339.3L644 339.3L643.5 339.3L643 339.3L642.5 339.4L642 339.4L641.5 339.4L641 339.3L640.5 339.3L640 339.3L639.5 339.4L639 339.3L638.5 339.4L638 339.3L637.5 339.4L637 339.3L636.5 339.4L636 339.4L635.5 339.4L635 339.4L634.5 339.4L634 339.5L633.5 339.7L633 340L632.5 340.4L632 339.5L631.5 339.4L631 339.3L630.5 339.4L630 339.4L629.5 339.4L629 339.4L628.5 339.4L628 339.4L627.5 339.4L627 339.4L626.5 339.4L626 339.4L625.5 339.4L625 339.4L624.5 339.3L624 339.4L623.5 339.4L623 339.4L622.5 339.4L622 339.4L621.5 339.4L621 339.3L620.5 339.4L620 339.4L619.5 339.3L619 339.3L618.5 339.4L618 339.3L617.5 339.4L617 339.3L616.5 339.4L616 339.3L615.5 339.3L615 339.4L614.5 339.4L614 339.4L613.5 339.4L613 339.4L612.5 339.4L612 339.4L611.5 339.4L611 339.4L610.5 339.4L610 339.4L609.5 339.4L609 339.3L608.5 339.3L608 339.4L607.5 339.4L607 339.4L606.5 339.3L606 339.4L605.5 339.3L605 339.4L604.5 339.4L604 339.4L603.5 339.4L603 339.4L602.5 339.4L602 339.4L601.5 339.5L601 339.6L600.5 339.6L600 340L599.5 340.2L599 339.6L598.5 339.4L598 339.4L597.5 339.3L597 339.4L596.5 339.4L596 339.3L595.5 339.4L595 339.4L594.5 339.4L594 339.3L593.5 339.4L593 339.3L592.5 339.3L592 339.4L591.5 339.4L591 339.4L590.5 339.4L590 339.4L589.5 339.4L589 339.3L588.5 339.4L588 339.4L587.5 339.3L587 339.3L586.5 339.4L586 339.4L585.5 339.4L585 339.3L584.5 339.4L584 339.4L583.5 339.3L583 339.4L582.5 339.4L582 339.4L581.5 339.4L581 339.3L580.5 339.4L580 339.3L579.5 339.4L579 339.3L578.5 339.4L578 339.4L577.5 339.4L577 339.4L576.5 339.4L576 339.3L575.5 339.3L575 339.3L574.5 339.4L574 339.4L573.5 339.4L573 339.4L572.5 339.4L572 339.4L571.5 339.3L571 339.3L570.5 339.3L570 339.3L569.5 339.4L569 339.4L568.5 339.4L568 339.4L567.5 339.3L567 339.4L566.5 339.3L566 339.3L565.5 339.4L565 339.3L564.5 339.3L564 339.4L563.5 339.4L563 339.4L562.5 339.4L562 339.5L561.5 339.6L561 339.8L560.5 340.3L560 339.7L559.5 339.4L559 339.4L558.5 339.3L558 339.3L557.5 339.4L557 339.4L556.5 339.4L556 339.4L555.5 339.4L555 339.3L554.5 339.4L554 339.3L553.5 339.4L553 339.4L552.5 339.3L552 339.4L551.5 339.4L551 339.4L550.5 339.4L550 339.3L549.5 339.4L549 339.4L548.5 339.3L548 339.3L547.5 339.4L547 339.4L546.5 339.4L546 339.4L545.5 339.4L545 339.3L544.5 339.4L544 339.4L543.5 339.4L543 339.3L542.5 339.4L542 339.3L541.5 339.3L541 339.4L540.5 339.4L540 339.4L539.5 339.3L539 339.3L538.5 339.3L538 339.3L537.5 339.4L537 339.3L536.5 339.4L536 339.4L535.5 339.4L535 339.4L534.5 339.3L534 339.4L533.5 339.3L533 339.3L532.5 339.4L532 339.3L531.5 339.4L531 339.3Z" fill="#d6ecdf" opacity="0.8"/>
<path d="M531 363.4L531.5 363.4L532 363.4L532.5 363.3L533 363.4L533.5 363.3L534 363.3L534.5 363.4L535 363.3L535.5 363.3L536 363.4L536.5 363.4L537 363.3L537.5 363.4L538 363.3L538.5 363.4L539 363.4L539.5 363.4L540 363.3L540.5 363.3L541 363.3L541.5 363.3L542 363.4L542.5 363.3L543 363.4L543.5 363.4L544 363.3L544.5 363.3L545 363.4L545.5 363.4L546 363.4L546.5 363.4L547 363.4L547.5 363.3L548 363.4L548.5 363.3L549 363.3L549.5 363.4L550 363.4L550.5 363.3L551 363.4L551.5 363.4L552 363.3L552.5 363.4L553 363.3L553.5 363.4L554 363.3L554.5 363.3L555 363.4L555.5 363.4L556 363.4L556.5 363.3L557 363.4L557.5 363.4L558 363.3L558.5 363.3L559 363.4L559.5 363.4L560 363.2L560.5 363L561 363.1L561.5 363.2L562 363.3L562.5 363.3L563 363.3L563.5 363.3L564 363.4L564.5 363.4L565 363.3L565.5 363.3L566 363.4L566.5 363.4L567 363.3L567.5 363.3L568 363.4L568.5 363.4L569 363.3L569.5 363.3L570 363.4L570.5 363.3L571 363.4L571.5 363.4L572 363.4L572.5 363.4L573 363.4L573.5 363.4L574 363.3L574.5 363.4L575 363.3L575.5 363.4L576 363.3L576.5 363.3L577 363.3L577.5 363.3L578 363.4L578.5 363.3L579 363.4L579.5 363.4L580 363.3L580.5 363.4L581 363.4L581.5 363.3L582 363.4L582.5 363.3L583 363.4L583.5 363.3L584 363.4L584.5 363.4L585 363.3L585.5 363.4L586 363.3L586.5 363.3L587 363.3L587.5 363.4L588 363.4L588.5 363.4L589 363.4L589.5 363.3L590 363.3L590.5 363.4L591 363.4L591.5 363.3L592 363.4L592.5 363.4L593 363.3L593.5 363.3L594 363.4L594.5 363.4L595 363.3L595.5 363.3L596 363.4L596.5 363.3L597 363.4L597.5 363.3L598 363.3L598.5 363.3L599 363.3L599.5 362.9L600 363.1L600.5 363.2L601 363.3L601.5 363.3L602 363.3L602.5 363.4L603 363.3L603.5 363.3L604 363.3L604.5 363.3L605 363.3L605.5 363.3L606 363.3L606.5 363.4L607 363.3L607.5 363.3L608 363.4L608.5 363.3L609 363.3L609.5 363.4L610 363.3L610.5 363.4L611 363.3L611.5 363.3L612 363.4L612.5 363.3L613 363.4L613.5 363.3L614 363.4L614.5 363.3L615 363.3L615.5 363.3L616 363.3L616.5 363.4L617 363.3L617.5 363.3L618 363.3L618.5 363.4L619 363.4L619.5 363.4L620 363.3L620.5 363.4L621 363.4L621.5 363.4L622 363.4L622.5 363.3L623 363.4L623.5 363.3L624 363.4L624.5 363.3L625 363.4L625.5 363.3L626 363.3L626.5 363.3L627 363.3L627.5 363.3L628 363.4L628.5 363.4L629 363.4L629.5 363.3L630 363.4L630.5 363.4L631 363.4L631.5 363.4L632 363.3L632.5 362.9L633 363.1L633.5 363.2L634 363.3L634.5 363.3L635 363.4L635.5 363.4L636 363.3L636.5 363.4L637 363.3L637.5 363.4L638 363.4L638.5 363.4L639 363.3L639.5 363.3L640 363.3L640.5 363.3L641 363.3L641.5 363.3L642 363.3L642.5 363.3L643 363.4L643.5 363.4L644 363.4L644.5 363.3L645 363.3L645.5 363.4L646 363.3L646.5 363.4L647 363.4L647.5 363.4L648 363.4L648.5 363.3L649 363.3L649.5 363.4L650 363.4L650.5 363.4L651 363.4L651.5 363.4L652 363.3L652.5 363.4L653 363.3L653.5 363.3L654 363.4L654.5 363.3L655 363.4L655.5 363.4L656 363.3L656.5 363.3L657 363.3L657.5 363.3L658 363.4L658.5 363.3L659 363.4L659.5 363.4L660 363.3L660.5 363.4L661 363.3L661.5 363.4L662 363.3L662.5 363.3L663 363.4L663.5 363.3L664 363.4L664.5 363.3L665 363.4L665.5 363.4L666 363.3L666.5 363.4L667 363.4L667.5 363.4L668 363.4L668.5 363.3L669 363.3L669.5 363.3L670 363.4L670.5 363.3L671 363.3L671.5 363.4L672 363.3L672.5 363.4L673 363.4L673.5 363.4L674 363.4L674.5 363.4L675 363.3L675.5 363.3L676 363.3L676.5 363.4L677 363.3L677.5 363.2L678 363.3L678.5 363.3L679 363.4L679.5 363.3L680 363.4L680.5 363.4L681 363.3L681.5 363.4L682 363.3L682.5 363.4L683 363.4L683.5 363.4L684 363.3L684.5 363.3L685 363.4L685.5 363.4L686 363.3L686.5 363.4L687 363.3L687.5 363.3L688 363.3L688.5 363.3L689 363.3L689.5 363.4L690 363.3L690.5 363.4L691 363.4L691.5 363.3L692 363.3L692.5 363.3L693 363.3L693.5 363.3L694 363.4L694.5 363.4L695 363.3L695.5 363.3L696 363.3L696.5 363.4L697 363.3L697.5 363.3L698 363.3L698.5 363.3L699 363.3L699.5 363.4L700 363.4L700.5 363.3L701 362.9L701.5 363.2L702 363.3L702.5 363.3L703 363.3L703.5 363.4L704 363.4L704.5 363.4L705 363.3L705.5 363.3L706 363.3L706.5 363.4L707 363.3L707.5 363.4L708 363.4L708.5 363.3L709 363.4L709.5 363.3L710 363.3L710.5 363.4L711 363.3L711.5 363.3L712 363.4L712.5 363.3L713 363.3L713.5 363.4L714 363.1L714.5 363.2L715 363.3L715.5 363.3L716 363.4L716.5 363.4L717 363.3L717.5 363.4L718 363.4L718.5 363.3L719 363.3L719.5 363.4L720 363.4L720.5 363.3L721 363.3L721.5 363.4L722 363.3L722.5 363.3L723 362.9L723.5 363.1L724 363.2L724.5 363.3L725 363.3L725.5 363.4L726 363.3L726.5 363.3L727 363.4L727.5 363.3L728 363.3L728.5 363.3L729 363.3L729.5 363.3L730 363.4L730.5 363.4L731 363.4L731.5 363.4L732 363.3L732.5 363.4L733 363.3L733.5 363.4L734 363.3L734.5 363.3L735 363.3L735.5 363.4L736 363.4L736.5 363.4L737 363.4L737.5 363.3L738 363.3L738.5 363.3L739 363.3L739.5 363.4L740 363.4L740.5 363.4L741 363.4L741.5 363.4L742 363.3L742.5 363.4L743 363L743.5 363.2L744 363.2L744.5 363.3L745 363.3L745.5 363.4L746 363.3L746.5 363.3L747 363.4L747.5 363.3L748 363.3L748.5 363.4L749 363.4L749.5 363.4L750 363.3L750.5 363.3L751 363.4L751.5 363.4L752 363.3L752.5 363.3L753 363.4L753.5 363.3L754 363.3L754.5 363.3L755 363.3L755.5 363.3L756 363.4L756.5 363.4L757 363.3L757.5 363.4L758 363.3L758.5 363.3L759 363.3L759.5 363.4L760 363.4L760.5 363.3L761 363.3L761.5 363.4L762 363.3L762.5 363.3L763 363.4L763.5 363.3L764 363.4L764.5 363.3L765 363.3L765.5 363.4L766 363.4L766.5 363.3L767 363.4L767.5 363.3L768 363.3L768.5 363.3L769 363.4L769.5 363.3L770 363.3L770.5 363.3L771 363.4L771.5 363.4L772 363.4L772.5 363.3L773 363.4L773 363.4L772.5 363.5L772 363.4L771.5 363.4L771 363.4L770.5 363.5L770 363.5L769.5 363.5L769 363.4L768.5 363.5L768 363.5L767.5 363.5L767 363.4L766.5 363.5L766 363.4L765.5 363.4L765 363.5L764.5 363.5L764 363.4L763.5 363.5L763 363.4L762.5 363.5L762 363.5L761.5 363.4L761 363.5L760.5 363.5L760 363.4L759.5 363.4L759 363.5L758.5 363.5L758 363.5L757.5 363.4L757 363.5L756.5 363.4L756 363.4L755.5 363.5L755 363.5L754.5 363.5L754 363.5L753.5 363.5L753 363.4L752.5 363.5L752 363.5L751.5 363.4L751 363.4L750.5 363.5L750 363.5L749.5 363.4L749 363.4L748.5 363.4L748 363.5L747.5 363.5L747 363.4L746.5 363.5L746 363.5L745.5 363.4L745 363.5L744.5 363.5L744 363.6L743.5 363.6L743 363.8L742.5 363.4L742 363.5L741.5 363.4L741 363.4L740.5 363.4L740 363.4L739.5 363.4L739 363.5L738.5 363.5L738 363.5L737.5 363.5L737 363.4L736.5 363.4L736 363.4L735.5 363.4L735 363.5L734.5 363.5L734 363.5L733.5 363.4L733 363.5L732.5 363.4L732 363.5L731.5 363.4L731 363.4L730.5 363.4L730 363.4L729.5 363.5L729 363.5L728.5 363.5L728 363.5L727.5 363.5L727 363.4L726.5 363.5L726 363.5L725.5 363.4L725 363.5L724.5 363.5L724 363.6L723.5 363.7L723 363.9L722.5 363.5L722 363.5L721.5 363.4L721 363.5L720.5 363.5L720 363.4L719.5 363.4L719 363.5L718.5 363.5L718 363.4L717.5 363.4L717 363.5L716.5 363.4L716 363.4L715.5 363.5L715 363.5L714.5 363.6L714 363.7L713.5 363.4L713 363.5L712.5 363.5L712 363.4L711.5 363.5L711 363.5L710.5 363.4L710 363.5L709.5 363.5L709 363.4L708.5 363.5L708 363.4L707.5 363.4L707 363.5L706.5 363.4L706 363.5L705.5 363.5L705 363.5L704.5 363.4L704 363.4L703.5 363.4L703 363.5L702.5 363.5L702 363.5L701.5 363.6L701 363.9L700.5 363.5L700 363.4L699.5 363.4L699 363.5L698.5 363.5L698 363.5L697.5 363.5L697 363.5L696.5 363.4L696 363.5L695.5 363.5L695 363.5L694.5 363.4L694 363.4L693.5 363.5L693 363.5L692.5 363.5L692 363.5L691.5 363.5L691 363.4L690.5 363.4L690 363.5L689.5 363.4L689 363.5L688.5 363.5L688 363.5L687.5 363.5L687 363.5L686.5 363.4L686 363.5L685.5 363.4L685 363.4L684.5 363.5L684 363.5L683.5 363.4L683 363.4L682.5 363.4L682 363.5L681.5 363.4L681 363.5L680.5 363.4L680 363.4L679.5 363.5L679 363.4L678.5 363.5L678 363.5L677.5 363.6L677 363.5L676.5 363.4L676 363.5L675.5 363.5L675 363.5L674.5 363.4L674 363.4L673.5 363.4L673 363.4L672.5 363.4L672 363.5L671.5 363.4L671 363.5L670.5 363.5L670 363.4L669.5 363.5L669 363.5L668.5 363.5L668 363.4L667.5 363.4L667 363.4L666.5 363.4L666 363.5L665.5 363.4L665 363.4L664.5 363.5L664 363.4L663.5 363.5L663 363.4L662.5 363.5L662 363.5L661.5 363.4L661 363.5L660.5 363.4L660 363.5L659.5 363.4L659 363.4L658.5 363.5L658 363.4L657.5 363.5L657 363.5L656.5 363.5L656 363.5L655.5 363.4L655 363.4L654.5 363.5L654 363.4L653.5 363.5L653 363.5L652.5 363.4L652 363.5L651.5 363.4L651 363.4L650.5 363.4L650 363.4L649.5 363.4L649 363.5L648.5 363.5L648 363.4L647.5 363.4L647 363.4L646.5 363.4L646 363.5L645.5 363.4L645 363.5L644.5 363.5L644 363.4L643.5 363.4L643 363.4L642.5 363.5L642 363.5L641.5 363.5L641 363.5L640.5 363.5L640 363.5L639.5 363.5L639 363.5L638.5 363.4L638 363.4L637.5 363.4L637 363.5L636.5 363.4L636 363.5L635.5 363.4L635 363.4L634.5 363.5L634 363.5L633.5 363.6L633 363.7L632.5 363.9L632 363.5L631.5 363.4L631 363.4L630.5 363.4L630 363.4L629.5 363.5L629 363.4L628.5 363.4L628 363.4L627.5 363.5L627 363.5L626.5 363.5L626 363.5L625.5 363.5L625 363.4L624.5 363.5L624 363.4L623.5 363.5L623 363.4L622.5 363.5L622 363.4L621.5 363.4L621 363.4L620.5 363.4L620 363.5L619.5 363.4L619 363.4L618.5 363.4L618 363.5L617.5 363.5L617 363.5L616.5 363.4L616 363.5L615.5 363.5L615 363.5L614.5 363.5L614 363.4L613.5 363.5L613 363.4L612.5 363.5L612 363.4L611.5 363.5L611 363.5L610.5 363.4L610 363.5L609.5 363.4L609 363.5L608.5 363.5L608 363.4L607.5 363.5L607 363.5L606.5 363.4L606 363.5L605.5 363.5L605 363.5L604.5 363.5L604 363.5L603.5 363.5L603 363.5L602.5 363.4L602 363.5L601.5 363.5L601 363.5L600.5 363.6L600 363.7L599.5 363.9L599 363.5L598.5 363.5L598 363.5L597.5 363.5L597 363.4L596.5 363.5L596 363.4L595.5 363.5L595 363.5L594.5 363.4L594 363.4L593.5 363.5L593 363.5L592.5 363.4L592 363.4L591.5 363.5L591 363.4L590.5 363.4L590 363.5L589.5 363.5L589 363.4L588.5 363.4L588 363.4L587.5 363.4L587 363.5L586.5 363.5L586 363.5L585.5 363.4L585 363.5L584.5 363.4L584 363.4L583.5 363.5L583 363.4L582.5 363.5L582 363.4L581.5 363.5L581 363.4L580.5 363.4L580 363.5L579.5 363.4L579 363.4L578.5 363.5L578 363.4L577.5 363.5L577 363.5L576.5 363.5L576 363.5L575.5 363.4L575 363.5L574.5 363.4L574 363.5L573.5 363.4L573 363.4L572.5 363.4L572 363.4L571.5 363.4L571 363.4L570.5 363.5L570 363.4L569.5 363.5L569 363.5L568.5 363.4L568 363.4L567.5 363.5L567 363.5L566.5 363.4L566 363.4L565.5 363.5L565 363.5L564.5 363.4L564 363.4L563.5 363.5L563 363.5L562.5 363.5L562 363.5L561.5 363.6L561 363.7L560.5 363.8L560 363.6L559.5 363.4L559 363.4L558.5 363.5L558 363.5L557.5 363.4L557 363.4L556.5 363.5L556 363.4L555.5 363.4L555 363.4L554.5 363.5L554 363.5L553.5 363.4L553 363.5L552.5 363.4L552 363.5L551.5 363.4L551 363.4L550.5 363.5L550 363.4L549.5 363.4L549 363.5L548.5 363.5L548 363.4L547.5 363.5L547 363.4L546.5 363.4L546 363.4L545.5 363.4L545 363.4L544.5 363.5L544 363.5L543.5 363.4L543 363.4L542.5 363.5L542 363.4L541.5 363.5L541 363.5L540.5 363.5L540 363.5L539.5 363.4L539 363.4L538.5 363.4L538 363.5L537.5 363.4L537 363.5L536.5 363.4L536 363.4L535.5 363.5L535 363.5L534.5 363.4L534 363.5L533.5 363.5L533 363.4L532.5 363.5L532 363.4L531.5 363.4L531 363.4Z" fill="#a8d0b8" opacity="0.5"/>
<path d="M531 386.3L531.5 386.5L532 386.3L532.5 386.7L533 386L533.5 386L534 386.2L534.5 386.7L535 386.4L535.5 386.6L536 386.7L536.5 385.9L537 385.8L537.5 386.9L538 386L538.5 386.3L539 386.5L539.5 386.6L540 386.2L540.5 386.4L541 386.2L541.5 386.2L542 386.8L542.5 386.1L543 385.9L543.5 385.9L544 386.3L544.5 386.9L545 386.9L545.5 386.8L546 385.9L546.5 386.6L547 386.5L547.5 385.9L548 386.6L548.5 386.3L549 386.4L549.5 386.8L550 386.3L550.5 386L551 386.8L551.5 386.7L552 386.5L552.5 386.9L553 386.4L553.5 386L554 386.2L554.5 386.3L555 386L555.5 386.8L556 386.3L556.5 386.5L557 386.3L557.5 386.8L558 386.1L558.5 386.8L559 386.7L559.5 386L560 385.9L560.5 386.5L561 386.5L561.5 386.7L562 386.6L562.5 386.3L563 386.7L563.5 386.8L564 386.4L564.5 386.7L565 386.2L565.5 386L566 386.4L566.5 386.5L567 386.2L567.5 386.6L568 386.4L568.5 386.5L569 386.2L569.5 386.4L570 386.4L570.5 386.9L571 386.4L571.5 386.5L572 386.3L572.5 386.7L573 385.9L573.5 386.9L574 386.3L574.5 386.8L575 386.4L575.5 386.4L576 386.4L576.5 386.4L577 386L577.5 386.5L578 385.9L578.5 386.7L579 386.2L579.5 386.3L580 386.4L580.5 385.9L581 386L581.5 386L582 386.9L582.5 385.9L583 386.1L583.5 385.9L584 385.9L584.5 386.6L585 386.2L585.5 386.8L586 386.3L586.5 385.9L587 386.7L587.5 386.5L588 386.8L588.5 386.7L589 386.7L589.5 386.8L590 385.8L590.5 386L591 386.4L591.5 386.1L592 386.2L592.5 386.4L593 386.5L593.5 386.2L594 386.3L594.5 386.6L595 386.5L595.5 386.2L596 386.2L596.5 386.7L597 386.3L597.5 386L598 386L598.5 386.2L599 386.8L599.5 386.5L600 386.8L600.5 386.9L601 386.6L601.5 386.4L602 386.1L602.5 386.2L603 386.6L603.5 386.2L604 386.4L604.5 386.4L605 386.6L605.5 386.4L606 386.6L606.5 386.1L607 386.4L607.5 386.4L608 386.4L608.5 386.4L609 386.2L609.5 386.1L610 386.1L610.5 386.5L611 386.1L611.5 385.9L612 385.8L612.5 386.1L613 386.8L613.5 386L614 386L614.5 386.9L615 386.6L615.5 386.6L616 386.1L616.5 386.3L617 386.6L617.5 386.7L618 386.1L618.5 385.9L619 386.1L619.5 386.7L620 386.4L620.5 386L621 386.7L621.5 386.3L622 386L622.5 385.9L623 386.9L623.5 386.9L624 386L624.5 386.3L625 386.7L625.5 386L626 386.9L626.5 386.4L627 386.5L627.5 386.5L628 386L628.5 386.3L629 386.1L629.5 385.9L630 386.7L630.5 386L631 386L631.5 386.5L632 386.3L632.5 386.4L633 386.7L633.5 386.5L634 386.8L634.5 385.9L635 386.7L635.5 386.2L636 386.3L636.5 385.9L637 386.1L637.5 386.5L638 386.5L638.5 386.9L639 386.9L639.5 386.6L640 385.9L640.5 386.9L641 386.7L641.5 386.2L642 386.5L642.5 386.7L643 385.9L643.5 386.9L644 386.3L644.5 386.5L645 386.5L645.5 386.7L646 386.7L646.5 386.5L647 386.1L647.5 386.4L648 386.1L648.5 386L649 386.7L649.5 386L650 386.3L650.5 386.5L651 386.4L651.5 386L652 386.5L652.5 386.8L653 385.9L653.5 386.8L654 386.8L654.5 386.1L655 386.6L655.5 386.6L656 386.2L656.5 386L657 386.5L657.5 385.9L658 386.3L658.5 386.3L659 386.3L659.5 386.9L660 386.7L660.5 386.2L661 386.3L661.5 386.4L662 386.5L662.5 386.5L663 386.7L663.5 386.3L664 386L664.5 386L665 385.9L665.5 386.5L666 385.9L666.5 386.7L667 386L667.5 386.7L668 386.3L668.5 386.3L669 386.9L669.5 386.9L670 385.9L670.5 386.5L671 386.5L671.5 386.2L672 386.3L672.5 386.5L673 386.6L673.5 386.2L674 386.2L674.5 386.8L675 386.7L675.5 386.8L676 386.4L676.5 386.8L677 386.8L677.5 386.2L678 386L678.5 386L679 386.3L679.5 386.2L680 386.1L680.5 386.5L681 386.4L681.5 386.1L682 386.2L682.5 386.3L683 386.2L683.5 386.3L684 386.7L684.5 386.6L685 386.2L685.5 386.5L686 386L686.5 386.5L687 386.2L687.5 386.8L688 386L688.5 386.2L689 386.3L689.5 385.9L690 386.1L690.5 386.2L691 386.4L691.5 386.4L692 386.7L692.5 386.2L693 385.9L693.5 386.8L694 386.6L694.5 386.8L695 386.2L695.5 386.4L696 386.1L696.5 385.9L697 386.8L697.5 385.9L698 386.2L698.5 385.9L699 386.1L699.5 386.8L700 386.8L700.5 386.5L701 386.4L701.5 386.6L702 386.1L702.5 386.1L703 386.5L703.5 386.2L704 386.7L704.5 385.9L705 386.7L705.5 386.8L706 386.5L706.5 386L707 386.3L707.5 386.2L708 386L708.5 386.5L709 385.9L709.5 385.9L710 386.3L710.5 386.1L711 386L711.5 386.3L712 386.8L712.5 386.2L713 386.4L713.5 386L714 386.7L714.5 386.9L715 386.7L715.5 386.7L716 386.5L716.5 386.7L717 386.6L717.5 386.3L718 386.8L718.5 386.4L719 386.5L719.5 386.9L720 386.2L720.5 386.4L721 386.1L721.5 386L722 386.9L722.5 386.1L723 386.4L723.5 386L724 386.8L724.5 386L725 386.5L725.5 386.8L726 386.4L726.5 386L727 386.8L727.5 386.5L728 386.8L728.5 386.9L729 386L729.5 386.3L730 385.9L730.5 385.9L731 386L731.5 386.5L732 385.8L732.5 386.2L733 386.6L733.5 386.4L734 386.4L734.5 386.6L735 385.9L735.5 386.9L736 386.2L736.5 386.6L737 386.5L737.5 386.1L738 386.3L738.5 386.9L739 385.8L739.5 386.1L740 386.4L740.5 386.7L741 386.2L741.5 386.5L742 386.2L742.5 386.8L743 386.2L743.5 386.7L744 385.9L744.5 386.1L745 386.3L745.5 386.2L746 386.3L746.5 386.6L747 386.9L747.5 386.4L748 386.1L748.5 386.5L749 386.1L749.5 386.4L750 386.8L750.5 386.3L751 386.3L751.5 386.6L752 386.7L752.5 385.9L753 386.3L753.5 386.1L754 386.9L754.5 386.1L755 386.7L755.5 386.4L756 386.5L756.5 386.5L757 386.1L757.5 386.7L758 385.9L758.5 386L759 386.4L759.5 386L760 386.3L760.5 385.9L761 386.4L761.5 385.9L762 386.1L762.5 386.2L763 385.8L763.5 386.2L764 386.7L764.5 386.2L765 386.7L765.5 386.5L766 386.2L766.5 386.7L767 386.5L767.5 386.7L768 386.5L768.5 386.7L769 386.2L769.5 386L770 386.4L770.5 386.2L771 386.1L771.5 386L772 386.1L772.5 386.2L773 386.1L773 388.7L772.5 388.6L772 388.7L771.5 388.8L771 388.7L770.5 388.6L770 388.4L769.5 388.8L769 388.6L768.5 388.1L768 388.3L767.5 388.1L767 388.3L766.5 388.1L766 388.6L765.5 388.3L765 388.1L764.5 388.6L764 388.1L763.5 388.6L763 389L762.5 388.6L762 388.7L761.5 388.9L761 388.4L760.5 388.9L760 388.5L759.5 388.8L759 388.4L758.5 388.8L758 388.9L757.5 388.1L757 388.7L756.5 388.3L756 388.3L755.5 388.4L755 388.1L754.5 388.7L754 387.9L753.5 388.7L753 388.5L752.5 388.9L752 388.1L751.5 388.2L751 388.5L750.5 388.5L750 388L749.5 388.4L749 388.7L748.5 388.3L748 388.7L747.5 388.4L747 387.9L746.5 388.2L746 388.5L745.5 388.6L745 388.5L744.5 388.7L744 388.9L743.5 388.1L743 388.6L742.5 388L742 388.6L741.5 388.3L741 388.6L740.5 388.1L740 388.4L739.5 388.7L739 389L738.5 387.9L738 388.5L737.5 388.7L737 388.3L736.5 388.2L736 388.6L735.5 387.9L735 388.9L734.5 388.2L734 388.4L733.5 388.4L733 388.2L732.5 388.6L732 389L731.5 388.3L731 388.8L730.5 388.9L730 388.9L729.5 388.5L729 388.8L728.5 387.9L728 388L727.5 388.3L727 388L726.5 388.8L726 388.4L725.5 388L725 388.3L724.5 388.8L724 388L723.5 388.8L723 388.4L722.5 388.7L722 387.9L721.5 388.8L721 388.7L720.5 388.4L720 388.6L719.5 387.9L719 388.3L718.5 388.4L718 388L717.5 388.5L717 388.2L716.5 388.1L716 388.3L715.5 388.1L715 388.1L714.5 387.9L714 388.1L713.5 388.8L713 388.4L712.5 388.6L712 388L711.5 388.5L711 388.8L710.5 388.7L710 388.5L709.5 388.9L709 388.9L708.5 388.3L708 388.8L707.5 388.6L707 388.5L706.5 388.8L706 388.3L705.5 388L705 388.1L704.5 388.9L704 388.1L703.5 388.6L703 388.3L702.5 388.7L702 388.7L701.5 388.2L701 388.4L700.5 388.3L700 388L699.5 388L699 388.7L698.5 388.9L698 388.6L697.5 388.9L697 388L696.5 388.9L696 388.7L695.5 388.4L695 388.6L694.5 388L694 388.2L693.5 388L693 388.9L692.5 388.6L692 388.1L691.5 388.4L691 388.4L690.5 388.6L690 388.7L689.5 388.9L689 388.5L688.5 388.6L688 388.8L687.5 388L687 388.6L686.5 388.3L686 388.8L685.5 388.3L685 388.6L684.5 388.2L684 388.1L683.5 388.5L683 388.6L682.5 388.5L682 388.6L681.5 388.7L681 388.4L680.5 388.3L680 388.7L679.5 388.6L679 388.5L678.5 388.8L678 388.8L677.5 388.6L677 388L676.5 388L676 388.4L675.5 388L675 388.1L674.5 388L674 388.6L673.5 388.6L673 388.2L672.5 388.3L672 388.5L671.5 388.6L671 388.3L670.5 388.3L670 388.9L669.5 387.9L669 387.9L668.5 388.5L668 388.5L667.5 388.1L667 388.8L666.5 388.1L666 388.9L665.5 388.3L665 388.9L664.5 388.8L664 388.8L663.5 388.5L663 388.1L662.5 388.3L662 388.3L661.5 388.4L661 388.5L660.5 388.6L660 388.1L659.5 387.9L659 388.5L658.5 388.5L658 388.5L657.5 388.9L657 388.3L656.5 388.8L656 388.6L655.5 388.2L655 388.2L654.5 388.7L654 388L653.5 388L653 388.9L652.5 388L652 388.3L651.5 388.8L651 388.4L650.5 388.3L650 388.5L649.5 388.8L649 388.1L648.5 388.8L648 388.7L647.5 388.4L647 388.7L646.5 388.3L646 388.1L645.5 388.1L645 388.3L644.5 388.3L644 388.5L643.5 387.9L643 388.9L642.5 388.1L642 388.3L641.5 388.6L641 388.1L640.5 387.9L640 388.9L639.5 388.2L639 387.9L638.5 387.9L638 388.3L637.5 388.3L637 388.7L636.5 388.9L636 388.5L635.5 388.6L635 388.1L634.5 388.9L634 388L633.5 388.3L633 388.1L632.5 388.4L632 388.5L631.5 388.3L631 388.8L630.5 388.8L630 388.1L629.5 388.9L629 388.7L628.5 388.5L628 388.8L627.5 388.3L627 388.3L626.5 388.4L626 387.9L625.5 388.8L625 388.1L624.5 388.5L624 388.8L623.5 387.9L623 387.9L622.5 388.9L622 388.8L621.5 388.5L621 388.1L620.5 388.8L620 388.4L619.5 388.1L619 388.7L618.5 388.9L618 388.7L617.5 388.1L617 388.2L616.5 388.5L616 388.7L615.5 388.2L615 388.2L614.5 387.9L614 388.8L613.5 388.8L613 388L612.5 388.7L612 389L611.5 388.9L611 388.7L610.5 388.3L610 388.7L609.5 388.7L609 388.6L608.5 388.4L608 388.4L607.5 388.4L607 388.4L606.5 388.7L606 388.2L605.5 388.4L605 388.2L604.5 388.4L604 388.4L603.5 388.6L603 388.2L602.5 388.6L602 388.7L601.5 388.4L601 388.2L600.5 387.9L600 388L599.5 388.3L599 388L598.5 388.6L598 388.8L597.5 388.8L597 388.5L596.5 388.1L596 388.6L595.5 388.6L595 388.3L594.5 388.2L594 388.5L593.5 388.6L593 388.3L592.5 388.4L592 388.6L591.5 388.7L591 388.4L590.5 388.8L590 389L589.5 388L589 388.1L588.5 388.1L588 388L587.5 388.3L587 388.1L586.5 388.9L586 388.5L585.5 388L585 388.6L584.5 388.2L584 388.9L583.5 388.9L583 388.7L582.5 388.9L582 387.9L581.5 388.8L581 388.8L580.5 388.9L580 388.4L579.5 388.5L579 388.6L578.5 388.1L578 388.9L577.5 388.3L577 388.8L576.5 388.4L576 388.4L575.5 388.4L575 388.4L574.5 388L574 388.5L573.5 387.9L573 388.9L572.5 388.1L572 388.5L571.5 388.3L571 388.4L570.5 387.9L570 388.4L569.5 388.4L569 388.6L568.5 388.3L568 388.4L567.5 388.2L567 388.6L566.5 388.3L566 388.4L565.5 388.8L565 388.6L564.5 388.1L564 388.4L563.5 388L563 388.1L562.5 388.5L562 388.2L561.5 388.1L561 388.3L560.5 388.3L560 388.9L559.5 388.8L559 388.1L558.5 388L558 388.7L557.5 388L557 388.5L556.5 388.3L556 388.5L555.5 388L555 388.8L554.5 388.5L554 388.6L553.5 388.8L553 388.4L552.5 387.9L552 388.3L551.5 388.1L551 388L550.5 388.8L550 388.5L549.5 388L549 388.4L548.5 388.5L548 388.2L547.5 388.9L547 388.3L546.5 388.2L546 388.9L545.5 388L545 387.9L544.5 387.9L544 388.5L543.5 388.9L543 388.9L542.5 388.7L542 388L541.5 388.6L541 388.6L540.5 388.4L540 388.6L539.5 388.2L539 388.3L538.5 388.5L538 388.8L537.5 387.9L537 389L536.5 388.9L536 388.1L535.5 388.2L535 388.4L534.5 388.1L534 388.6L533.5 388.8L533 388.8L532.5 388.1L532 388.5L531.5 388.3L531 388.5Z" fill="#f2faf4" opacity="1"/>
<path d="M206.6 386.3L207.1 386.5L207.6 386.3L208.1 386.7L208.6 386L209.1 386L209.6 386.2L210.1 386.7L210.6 386.4L211.1 386.6L211.6 386.7L212.1 385.9L212.6 385.8L213.1 386.9L213.6 386L214.1 386.3L214.6 386.5L215.1 386.6L215.6 386.2L216.1 386.4L216.6 386.2L217.1 386.2L217.6 386.8L218.1 386.1L218.6 385.9L219.1 385.9L219.6 386.3L220.1 386.9L220.6 386.9L221.1 386.8L221.6 385.9L222.1 386.6L222.6 386.5L223.1 385.9L223.6 386.6L224.1 386.3L224.6 386.4L225.1 386.8L225.6 386.3L226.1 386L226.6 386.8L227.1 386.7L227.6 386.5L228.1 386.9L228.6 386.4L229.1 386L229.6 386.2L230.1 386.3L230.6 386L231.1 386.8L231.6 386.3L231.6 388.5L231.1 388L230.6 388.8L230.1 388.5L229.6 388.6L229.1 388.8L228.6 388.4L228.1 387.9L227.6 388.3L227.1 388.1L226.6 388L226.1 388.8L225.6 388.5L225.1 388L224.6 388.4L224.1 388.5L223.6 388.2L223.1 388.9L222.6 388.3L222.1 388.2L221.6 388.9L221.1 388L220.6 387.9L220.1 387.9L219.6 388.5L219.1 388.9L218.6 388.9L218.1 388.7L217.6 388L217.1 388.6L216.6 388.6L216.1 388.4L215.6 388.6L215.1 388.2L214.6 388.3L214.1 388.5L213.6 388.8L213.1 387.9L212.6 389L212.1 388.9L211.6 388.1L211.1 388.2L210.6 388.4L210.1 388.1L209.6 388.6L209.1 388.8L208.6 388.8L208.1 388.1L207.6 388.5L207.1 388.3L206.6 388.5Z" fill="#f2faf4" opacity="1"/>
<path d="M531 411.5L531.5 411.5L532 411.5L532.5 411.5L533 411.5L533.5 411.5L534 411.5L534.5 411.5L535 411.5L535.5 411.5L536 411.6L536.5 411.5L537 411.6L537.5 411.5L538 411.5L538.5 411.6L539 411.5L539.5 411.5L540 411.5L540.5 411.5L541 411.6L541.5 411.6L542 411.5L542.5 411.6L543 411.5L543.5 411.5L544 411.6L544.5 411.5L545 411.5L545.5 411.5L546 411.5L546.5 411.5L547 411.5L547.5 411.5L548 411.5L548.5 411.5L549 411.5L549.5 411.5L550 411.5L550.5 411.5L551 411.5L551.5 411.5L552 411.5L552.5 411.6L553 411.5L553.5 411.5L554 411.5L554.5 411.5L555 411.5L555.5 411.5L556 411.6L556.5 411.5L557 411.5L557.5 411.5L558 411.5L558.5 411.5L559 411.6L559.5 411.5L560 411.5L560.5 411.5L561 411.6L561.5 411.5L562 411.5L562.5 411.5L563 411.6L563.5 411.5L564 411.6L564.5 411.6L565 411.5L565.5 411.5L566 411.5L566.5 411.5L567 411.5L567.5 411.5L568 411.6L568.5 411.5L569 411.6L569.5 411.5L570 411.5L570.5 411.5L571 411.5L571.5 411.5L572 411.5L572.5 411.5L573 411.5L573.5 411.5L574 411.5L574.5 411.5L575 411.6L575.5 411.5L576 411.5L576.5 411.5L577 411.5L577.5 411.5L578 411.5L578.5 411.6L579 411.6L579.5 411.5L580 411.5L580.5 411.5L581 411.5L581.5 411.5L582 411.5L582.5 411.5L583 411.5L583.5 411.5L584 411.5L584.5 411.6L585 411.5L585.5 411.5L586 411.5L586.5 411.5L587 411.5L587.5 411.5L588 411.5L588.5 411.5L589 411.5L589.5 411.5L590 411.5L590.5 411.6L591 411.6L591.5 411.5L592 411.5L592.5 411.5L593 411.5L593.5 411.5L594 411.5L594.5 411.5L595 411.5L595.5 411.5L596 411.6L596.5 411.5L597 411.5L597.5 411.5L598 411.5L598.5 411.5L599 411.5L599.5 411.5L600 411.6L600.5 411.5L601 411.5L601.5 411.6L602 411.5L602.5 411.5L603 411.5L603.5 411.6L604 411.5L604.5 411.5L605 411.5L605.5 411.5L606 411.5L606.5 411.5L607 411.6L607.5 411.6L608 411.6L608.5 411.5L609 411.5L609.5 411.5L610 411.6L610.5 411.5L611 411.5L611.5 411.5L612 411.5L612.5 411.5L613 411.6L613.5 411.5L614 411.5L614.5 411.5L615 411.5L615.5 411.5L616 411.5L616.5 411.5L617 411.5L617.5 411.5L618 411.5L618.5 411.5L619 411.5L619.5 411.5L620 411.5L620.5 411.5L621 411.5L621.5 411.5L622 411.5L622.5 411.5L623 411.6L623.5 411.5L624 411.5L624.5 411.5L625 411.5L625.5 411.5L626 411.5L626.5 411.5L627 411.5L627.5 411.5L628 411.6L628.5 411.5L629 411.6L629.5 411.5L630 411.5L630.5 411.5L631 411.5L631.5 411.5L632 411.5L632.5 411.5L633 411.5L633.5 411.6L634 411.5L634.5 411.5L635 411.5L635.5 411.6L636 411.5L636.5 411.5L637 411.5L637.5 411.5L638 411.5L638.5 411.5L639 411.5L639.5 411.5L640 411.5L640.5 411.5L641 411.5L641.5 411.5L642 411.5L642.5 411.5L643 411.6L643.5 411.5L644 411.5L644.5 411.5L645 411.5L645.5 411.5L646 411.5L646.5 411.6L647 411.5L647.5 411.5L648 411.5L648.5 411.5L649 411.5L649.5 411.5L650 411.5L650.5 411.5L651 411.5L651.5 411.5L652 411.6L652.5 411.6L653 411.5L653.5 411.6L654 411.5L654.5 411.5L655 411.5L655.5 411.5L656 411.6L656.5 411.6L657 411.5L657.5 411.6L658 411.5L658.5 411.5L659 411.6L659.5 411.6L660 411.5L660.5 411.5L661 411.5L661.5 411.5L662 411.5L662.5 411.5L663 411.5L663.5 411.5L664 411.5L664.5 411.5L665 411.6L665.5 411.5L666 411.5L666.5 411.5L667 411.5L667.5 411.5L668 411.5L668.5 411.5L669 411.5L669.5 411.5L670 411.5L670.5 411.5L671 411.5L671.5 411.6L672 411.5L672.5 411.5L673 411.6L673.5 411.5L674 411.5L674.5 411.5L675 411.5L675.5 411.5L676 411.5L676.5 411.5L677 411.5L677.5 411.5L678 411.5L678.5 411.5L679 411.5L679.5 411.5L680 411.5L680.5 411.5L681 411.5L681.5 411.5L682 411.5L682.5 411.5L683 411.5L683.5 411.5L684 411.5L684.5 411.5L685 411.5L685.5 411.5L686 411.6L686.5 411.5L687 411.5L687.5 411.5L688 411.5L688.5 411.6L689 411.5L689.5 411.6L690 411.5L690.5 411.5L691 411.5L691.5 411.5L692 411.6L692.5 411.6L693 411.5L693.5 411.5L694 411.5L694.5 411.5L695 411.5L695.5 411.5L696 411.5L696.5 411.6L697 411.5L697.5 411.5L698 411.5L698.5 411.5L699 411.5L699.5 411.5L700 411.5L700.5 411.5L701 411.5L701.5 411.5L702 411.5L702.5 411.5L703 411.5L703.5 411.5L704 411.5L704.5 411.5L705 411.5L705.5 411.5L706 411.5L706.5 411.5L707 411.5L707.5 411.6L708 411.5L708.5 411.5L709 411.5L709.5 411.5L710 411.5L710.5 411.5L711 411.5L711.5 411.6L712 411.5L712.5 411.5L713 411.5L713.5 411.5L714 411.5L714.5 411.5L715 411.6L715.5 411.5L716 411.5L716.5 411.5L717 411.5L717.5 411.5L718 411.5L718.5 411.5L719 411.5L719.5 411.6L720 411.5L720.5 411.6L721 411.5L721.5 411.5L722 411.5L722.5 411.5L723 411.5L723.5 411.5L724 411.6L724.5 411.5L725 411.6L725.5 411.5L726 411.5L726.5 411.5L727 411.5L727.5 411.5L728 411.5L728.5 411.5L729 411.5L729.5 411.6L730 411.5L730.5 411.5L731 411.5L731.5 411.5L732 411.5L732.5 411.5L733 411.5L733.5 411.5L734 411.5L734.5 411.5L735 411.5L735.5 411.5L736 411.5L736.5 411.5L737 411.5L737.5 411.5L738 411.5L738.5 411.6L739 411.5L739.5 411.5L740 411.5L740.5 411.6L741 411.5L741.5 411.5L742 411.5L742.5 411.6L743 411.5L743.5 411.5L744 411.6L744.5 411.5L745 411.5L745.5 411.5L746 411.5L746.5 411.6L747 411.5L747.5 411.5L748 411.5L748.5 411.5L749 411.5L749.5 411.6L750 411.6L750.5 411.6L751 411.5L751.5 411.5L752 411.5L752.5 411.6L753 411.5L753.5 411.5L754 411.5L754.5 411.5L755 411.5L755.5 411.6L756 411.6L756.5 411.5L757 411.5L757.5 411.5L758 411.5L758.5 411.5L759 411.5L759.5 411.5L760 411.5L760.5 411.6L761 411.5L761.5 411.5L762 411.5L762.5 411.5L763 411.5L763.5 411.5L764 411.5L764.5 411.6L765 411.5L765.5 411.6L766 411.5L766.5 411.5L767 411.5L767.5 411.5L768 411.5L768.5 411.5L769 411.5L769.5 411.5L770 411.5L770.5 411.5L771 411.5L771.5 411.5L772 411.5L772.5 411.5L773 411.5L773 411.7L772.5 411.7L772 411.7L771.5 411.7L771 411.7L770.5 411.7L770 411.7L769.5 411.7L769 411.7L768.5 411.7L768 411.7L767.5 411.7L767 411.7L766.5 411.7L766 411.7L765.5 411.6L765 411.7L764.5 411.6L764 411.7L763.5 411.7L763 411.7L762.5 411.7L762 411.7L761.5 411.7L761 411.7L760.5 411.6L760 411.7L759.5 411.7L759 411.7L758.5 411.7L758 411.7L757.5 411.7L757 411.7L756.5 411.7L756 411.6L755.5 411.6L755 411.7L754.5 411.7L754 411.7L753.5 411.7L753 411.7L752.5 411.6L752 411.7L751.5 411.7L751 411.7L750.5 411.6L750 411.6L749.5 411.6L749 411.7L748.5 411.7L748 411.7L747.5 411.7L747 411.7L746.5 411.6L746 411.7L745.5 411.7L745 411.7L744.5 411.7L744 411.6L743.5 411.7L743 411.7L742.5 411.6L742 411.7L741.5 411.7L741 411.7L740.5 411.6L740 411.7L739.5 411.7L739 411.7L738.5 411.6L738 411.7L737.5 411.7L737 411.7L736.5 411.7L736 411.7L735.5 411.7L735 411.7L734.5 411.7L734 411.7L733.5 411.7L733 411.7L732.5 411.7L732 411.7L731.5 411.7L731 411.7L730.5 411.7L730 411.7L729.5 411.6L729 411.7L728.5 411.7L728 411.7L727.5 411.7L727 411.7L726.5 411.7L726 411.7L725.5 411.7L725 411.6L724.5 411.7L724 411.6L723.5 411.7L723 411.7L722.5 411.7L722 411.7L721.5 411.7L721 411.7L720.5 411.6L720 411.7L719.5 411.6L719 411.7L718.5 411.7L718 411.7L717.5 411.7L717 411.7L716.5 411.7L716 411.7L715.5 411.7L715 411.6L714.5 411.7L714 411.7L713.5 411.7L713 411.7L712.5 411.7L712 411.7L711.5 411.6L711 411.7L710.5 411.7L710 411.7L709.5 411.7L709 411.7L708.5 411.7L708 411.7L707.5 411.6L707 411.7L706.5 411.7L706 411.7L705.5 411.7L705 411.7L704.5 411.7L704 411.7L703.5 411.7L703 411.7L702.5 411.7L702 411.7L701.5 411.7L701 411.7L700.5 411.7L700 411.7L699.5 411.7L699 411.7L698.5 411.7L698 411.7L697.5 411.7L697 411.7L696.5 411.6L696 411.7L695.5 411.7L695 411.7L694.5 411.7L694 411.7L693.5 411.7L693 411.7L692.5 411.6L692 411.6L691.5 411.7L691 411.7L690.5 411.7L690 411.7L689.5 411.6L689 411.7L688.5 411.6L688 411.7L687.5 411.7L687 411.7L686.5 411.7L686 411.6L685.5 411.7L685 411.7L684.5 411.7L684 411.7L683.5 411.7L683 411.7L682.5 411.7L682 411.7L681.5 411.7L681 411.7L680.5 411.7L680 411.7L679.5 411.7L679 411.7L678.5 411.7L678 411.7L677.5 411.7L677 411.7L676.5 411.7L676 411.7L675.5 411.7L675 411.7L674.5 411.7L674 411.7L673.5 411.7L673 411.6L672.5 411.7L672 411.7L671.5 411.6L671 411.7L670.5 411.7L670 411.7L669.5 411.7L669 411.7L668.5 411.7L668 411.7L667.5 411.7L667 411.7L666.5 411.7L666 411.7L665.5 411.7L665 411.6L664.5 411.7L664 411.7L663.5 411.7L663 411.7L662.5 411.7L662 411.7L661.5 411.7L661 411.7L660.5 411.7L660 411.7L659.5 411.6L659 411.6L658.5 411.7L658 411.7L657.5 411.6L657 411.7L656.5 411.6L656 411.6L655.5 411.7L655 411.7L654.5 411.7L654 411.7L653.5 411.6L653 411.7L652.5 411.6L652 411.6L651.5 411.7L651 411.7L650.5 411.7L650 411.7L649.5 411.7L649 411.7L648.5 411.7L648 411.7L647.5 411.7L647 411.7L646.5 411.6L646 411.7L645.5 411.7L645 411.7L644.5 411.7L644 411.7L643.5 411.7L643 411.6L642.5 411.7L642 411.7L641.5 411.7L641 411.7L640.5 411.7L640 411.7L639.5 411.7L639 411.7L638.5 411.7L638 411.7L637.5 411.7L637 411.7L636.5 411.7L636 411.7L635.5 411.6L635 411.7L634.5 411.7L634 411.7L633.5 411.6L633 411.7L632.5 411.7L632 411.7L631.5 411.7L631 411.7L630.5 411.7L630 411.7L629.5 411.7L629 411.6L628.5 411.7L628 411.6L627.5 411.7L627 411.7L626.5 411.7L626 411.7L625.5 411.7L625 411.7L624.5 411.7L624 411.7L623.5 411.7L623 411.6L622.5 411.7L622 411.7L621.5 411.7L621 411.7L620.5 411.7L620 411.7L619.5 411.7L619 411.7L618.5 411.7L618 411.7L617.5 411.7L617 411.7L616.5 411.7L616 411.7L615.5 411.7L615 411.7L614.5 411.7L614 411.7L613.5 411.7L613 411.6L612.5 411.7L612 411.7L611.5 411.7L611 411.7L610.5 411.7L610 411.6L609.5 411.7L609 411.7L608.5 411.7L608 411.6L607.5 411.6L607 411.6L606.5 411.7L606 411.7L605.5 411.7L605 411.7L604.5 411.7L604 411.7L603.5 411.6L603 411.7L602.5 411.7L602 411.7L601.5 411.6L601 411.7L600.5 411.7L600 411.6L599.5 411.7L599 411.7L598.5 411.7L598 411.7L597.5 411.7L597 411.7L596.5 411.7L596 411.6L595.5 411.7L595 411.7L594.5 411.7L594 411.7L593.5 411.7L593 411.7L592.5 411.7L592 411.7L591.5 411.7L591 411.6L590.5 411.6L590 411.7L589.5 411.7L589 411.7L588.5 411.7L588 411.7L587.5 411.7L587 411.7L586.5 411.7L586 411.7L585.5 411.7L585 411.7L584.5 411.6L584 411.7L583.5 411.7L583 411.7L582.5 411.7L582 411.7L581.5 411.7L581 411.7L580.5 411.7L580 411.7L579.5 411.7L579 411.6L578.5 411.6L578 411.7L577.5 411.7L577 411.7L576.5 411.7L576 411.7L575.5 411.7L575 411.6L574.5 411.7L574 411.7L573.5 411.7L573 411.7L572.5 411.7L572 411.7L571.5 411.7L571 411.7L570.5 411.7L570 411.7L569.5 411.7L569 411.6L568.5 411.7L568 411.6L567.5 411.7L567 411.7L566.5 411.7L566 411.7L565.5 411.7L565 411.7L564.5 411.6L564 411.6L563.5 411.7L563 411.6L562.5 411.7L562 411.7L561.5 411.7L561 411.6L560.5 411.7L560 411.7L559.5 411.7L559 411.6L558.5 411.7L558 411.7L557.5 411.7L557 411.7L556.5 411.7L556 411.6L555.5 411.7L555 411.7L554.5 411.7L554 411.7L553.5 411.7L553 411.7L552.5 411.6L552 411.7L551.5 411.7L551 411.7L550.5 411.7L550 411.7L549.5 411.7L549 411.7L548.5 411.7L548 411.7L547.5 411.7L547 411.7L546.5 411.7L546 411.7L545.5 411.7L545 411.7L544.5 411.7L544 411.6L543.5 411.7L543 411.7L542.5 411.6L542 411.7L541.5 411.6L541 411.6L540.5 411.7L540 411.7L539.5 411.7L539 411.7L538.5 411.6L538 411.7L537.5 411.7L537 411.6L536.5 411.7L536 411.6L535.5 411.7L535 411.7L534.5 411.7L534 411.7L533.5 411.7L533 411.7L532.5 411.7L532 411.7L531.5 411.7L531 411.7Z" fill="#a8d0b8" opacity="0.5"/>
<path d="M206.6 291L207.1 290.9L207.6 290.8L208.1 290.6L208.6 290.5L209.1 290.5L209.6 290.6L210.1 290.8L210.6 290.9L211.1 291L211.6 290.9L212.1 290.8L212.6 290.6L213.1 290.5L213.6 290.5L214.1 290.6L214.6 290.8L215.1 290.9L215.6 290.9L216.1 290.9L216.6 290.8L217.1 290.6L217.6 290.5L218.1 290.5L218.6 290.6L219.1 290.8L219.6 290.9L220.1 291L220.6 290.9L221.1 290.8L221.6 290.6L222.1 290.5L222.6 290.5L223.1 290.6L223.6 290.8L224.1 290.9L224.6 291L225.1 290.9L225.6 290.8L226.1 290.6L226.6 290.5L227.1 290.5L227.6 290.6L228.1 290.8L228.6 290.9L229.1 291L229.6 290.9L230.1 290.8L230.6 290.6L231.1 290.5L231.6 290.5L231.6 291.7L231.1 291.7L230.6 291.6L230.1 291.4L229.6 291.3L229.1 291.2L228.6 291.3L228.1 291.4L227.6 291.6L227.1 291.7L226.6 291.7L226.1 291.6L225.6 291.4L225.1 291.3L224.6 291.2L224.1 291.3L223.6 291.4L223.1 291.6L222.6 291.7L222.1 291.7L221.6 291.6L221.1 291.4L220.6 291.3L220.1 291.2L219.6 291.3L219.1 291.4L218.6 291.6L218.1 291.7L217.6 291.7L217.1 291.6L216.6 291.4L216.1 291.3L215.6 291.3L215.1 291.3L214.6 291.4L214.1 291.6L213.6 291.7L213.1 291.7L212.6 291.6L212.1 291.4L211.6 291.3L211.1 291.2L210.6 291.3L210.1 291.4L209.6 291.6L209.1 291.7L208.6 291.7L208.1 291.6L207.6 291.4L207.1 291.3L206.6 291.2Z" fill="#f2faf4" opacity="0.8"/>
<path d="M206.6 315.1L207.1 315.2L207.6 315.2L208.1 315.1L208.6 315.2L209.1 315.2L209.6 315.1L210.1 315.1L210.6 315.1L211.1 315.2L211.6 315.1L212.1 315.1L212.6 315.1L213.1 315.1L213.6 315.1L214.1 315.1L214.6 315.1L215.1 315.2L215.6 315.1L216.1 315.1L216.6 315.1L217.1 315.2L217.6 315.1L218.1 315.1L218.6 315.1L219.1 315.1L219.6 315.1L220.1 315.1L220.6 315.1L221.1 315.1L221.6 315.1L222.1 315.1L222.6 315.1L223.1 315.1L223.6 315.1L224.1 315.1L224.6 315.2L225.1 315.1L225.6 315.1L226.1 315.2L226.6 315.2L227.1 315.1L227.6 315.2L228.1 315.1L228.6 315.1L229.1 315.1L229.6 315.1L230.1 315.1L230.6 315.1L231.1 315.1L231.6 315.1L231.6 315.3L231.1 315.3L230.6 315.3L230.1 315.3L229.6 315.3L229.1 315.3L228.6 315.3L228.1 315.3L227.6 315.2L227.1 315.3L226.6 315.2L226.1 315.2L225.6 315.3L225.1 315.3L224.6 315.2L224.1 315.3L223.6 315.3L223.1 315.3L222.6 315.3L222.1 315.3L221.6 315.3L221.1 315.3L220.6 315.3L220.1 315.3L219.6 315.3L219.1 315.3L218.6 315.3L218.1 315.3L217.6 315.3L217.1 315.2L216.6 315.3L216.1 315.3L215.6 315.3L215.1 315.2L214.6 315.3L214.1 315.3L213.6 315.3L213.1 315.3L212.6 315.3L212.1 315.3L211.6 315.3L211.1 315.2L210.6 315.3L210.1 315.3L209.6 315.3L209.1 315.2L208.6 315.2L208.1 315.3L207.6 315.2L207.1 315.2L206.6 315.3Z" fill="#f2faf4" opacity="0.6"/>
<path d="M206.6 460.5L207.3 460.5L208 460.5L208.7 460.5L209.4 460.6L210.1 459.9L210.8 460.1L211.5 460.3L212.2 460.4L212.9 460.5L213.6 460.5L214.3 460.5L215 460.5L215.7 460.5L216.4 460.6L217.1 460.5L217.8 460.5L218.5 460.6L219.2 460.5L219.9 460.5L220.6 460.5L221.3 460.5L222 460.5L222.7 460.5L223.4 460L224.1 460.1L224.8 460.2L225.5 460.4L226.2 460.5L226.9 460.5L227.6 460.5L228.3 460.5L229 460.5L229.7 460.5L230.4 460.5L231.1 460.5L231.8 460.5L232.5 460.5L233.2 460.5L233.9 460.6L234.6 460.5L235.3 460.5L236 460.5L236.7 460.5L237.4 460.5L238.1 460.5L238.8 460.1L239.5 460.1L240.2 460.3L240.9 460.4L241.6 460.5L242.3 460.5L243 460.5L243.7 460.5L244.4 460.5L245.1 460.5L245.8 460.5L246.5 460.5L247.2 460.6L247.9 460.5L248.6 460.5L249.3 460.5L250 460.5L250.7 460.6L251.4 460.6L252.1 460.5L252.8 460.5L253.5 460.5L254.2 460.2L254.9 460.3L255.6 460.5L256.3 460.5L257 460.5L257.7 460.5L258.4 460.5L259.1 460.5L259.8 460.5L260.5 460.5L261.2 460.5L261.9 460.5L262.6 460.5L263.3 460.5L264 460.5L264.7 459.8L265.4 460L266.1 460.1L266.8 460.3L267.5 460.4L268.2 460.5L268.9 460.5L269.6 460.5L270.3 460.5L271 460.5L271.7 460.6L272.4 460.5L273.1 460.5L273.8 460.5L274.5 460.5L275.2 460.5L275.9 460.5L276.6 460.5L277.3 459.7L278 459.9L278.7 460.2L279.4 460.4L280.1 460.5L280.8 460.5L281.5 460.5L282.2 460.5L282.9 460.6L283.6 460.5L284.3 460L285 460.2L285.7 460.3L286.4 460.4L287.1 460.5L287.8 460.5L288.5 460.6L289.2 460.5L289.9 460.5L290.6 460.5L291.3 460.5L292 460.5L292.7 460.1L293.4 460.1L294.1 460.2L294.8 460.4L295.5 460.5L296.2 460.5L296.9 460.5L297.6 460.5L298.3 460.5L299 460.5L299.7 460.5L300.4 460.5L301.1 460.5L301.8 460.5L302.5 460.6L303.2 460.5L303.9 460.5L304.6 460.2L305.3 460.3L306 460.5L306.7 460.5L307.4 460.5L308.1 460.5L308.8 460.5L309.5 460.5L310.2 460.5L310.9 460.5L311.6 460.5L312.3 460.4L313 460.2L313.7 460.2L314.4 460.4L315.1 460.5L315.8 460.5L316.5 460.5L317.2 460.5L317.9 460.5L318.6 460.5L319.3 460.5L320 460.5L320.7 460.5L321.4 460.5L322.1 460.5L322.8 460.5L323.5 460.6L324.2 460.5L324.9 460.5L325.6 460.5L326.3 460.5L327 460.5L327.7 460.1L328.4 460L329.1 460.2L329.8 460.4L330.5 460.5L331.2 460.5L331.9 460.5L332.6 460.5L333.3 460.5L334 460.5L334.7 460.5L335.4 460.1L336.1 460.1L336.8 460.3L337.5 460.4L338.2 460.4L338.9 460.5L339.6 460.5L340.3 460.5L341 460.5L341.7 460.5L342.4 460.5L343.1 459.9L343.8 460.1L344.5 460.3L345.2 460.5L345.9 460.5L346.6 460.5L347.3 460.5L348 460.5L348.7 460.5L349.4 460.5L350.1 460.3L350.8 460.3L351.5 460.4L352.2 460.5L352.9 460.5L353.6 460.5L354.3 460.5L355 460.5L355.7 460.5L356.4 460.5L357.1 460.5L357.8 460.5L358.5 460.5L359.2 460.5L359.9 460.5L360.6 460.5L361.3 460.5L362 460.5L362.7 460.5L363.4 460.5L364.1 460.5L364.8 460.2L365.5 460.2L366.2 460.4L366.9 460.5L367.6 460.5L368.3 460.5L369 460.6L369.7 460.5L370.4 460.5L371.1 460.5L371.8 460.5L372.5 460.5L373.2 459.6L373.9 459.9L374.6 460.2L375.3 460.4L376 460.5L376.7 460.5L377.4 460.5L378.1 460.5L378.8 460.5L379.5 460.5L380.2 460.6L380.9 460.5L381.6 460.5L382.3 460.5L383 460.5L383.7 460.5L384.4 460.5L385.1 460.5L385.8 460.5L386.5 460.5L387.2 460.5L387.9 460.1L388.6 460.3L389.3 460.4L390 460.5L390.7 460.5L391.4 460.5L392.1 460.5L392.8 460.5L393.5 460.5L394.2 460.5L394.9 460.5L395.6 460.5L396.3 460.5L397 460.5L397.7 460.5L398.4 460.5L399.1 460.6L399.8 460.5L400.5 460.5L401.2 460.5L401.9 460.5L402.6 460.5L403.3 460.2L404 460.1L404.7 460.3L405.4 460.4L406.1 460.5L406.8 460.5L407.5 460.5L408.2 460.5L408.9 460.6L409.6 460.5L410.3 460.5L411 460.5L411.7 460.5L412.4 460.5L413.1 460.5L413.8 460.5L414.5 460.5L415.2 460.5L415.9 460.4L416.6 460.3L417.3 460.4L418 460.5L418.7 460.5L419.4 460.5L420.1 460.5L420.8 460.5L421.5 460.5L422.2 460.5L422.9 460.5L423.6 460.5L424.3 460.5L425 460.5L425.7 460.5L426.4 460.5L427.1 460.5L427.8 460.5L428.5 460.6L429.2 460.5L429.9 460.5L430.6 460.6L431.3 460.2L432 459.9L432.7 460.2L433.4 460.3L434.1 460.4L434.8 460.5L435.5 460.6L436.2 460.5L436.9 460.5L437.6 460.5L438.3 460.6L439 460.5L439.7 460.5L440.4 460.5L441.1 460.5L441.8 460.5L442.5 460.5L443.2 460.5L443.9 460.5L444.6 460.6L445.3 460.5L446 460.5L446.7 460.5L447.4 459.8L448.1 460.1L448.8 460.2L449.5 460.4L450.2 460.5L450.9 460.5L451.6 460.5L452.3 460.5L453 460.5L453.7 460.5L454.4 460.5L455.1 460.5L455.8 460.4L456.5 460L457.2 460.3L457.9 460.4L458.6 460.5L459.3 460.5L460 460.5L460.7 460.5L461.4 460.5L462.1 460.5L462.8 460.5L463.5 460.5L464.2 460.1L464.9 460.3L465.6 460.5L466.3 460.5L467 460.5L467.7 460.5L468.4 460.5L469.1 460.5L469.8 460.5L470.5 459.9L471.2 460.3L471.9 460.4L472.6 460.5L473.3 460.5L474 460.5L474.7 460.6L475.4 460.5L476.1 460.5L476.8 460.5L477.5 460.5L478.2 460.6L478.9 460.5L479.6 460.5L480.3 460.5L481 460.5L481.7 460.6L482.4 460.3L483.1 460.3L483.8 460.4L484.5 460.5L485.2 460.5L485.9 460.5L486.6 460.5L487.3 460.5L488 460.5L488.7 460.5L489.4 460.6L490.1 460.5L490.8 460.5L491.5 460.5L492.2 460.5L492.9 460.5L493.6 460.6L494.3 460.6L495 460.4L495.7 460.1L496.4 460.3L497.1 460.4L497.8 460.5L498.5 460.5L499.2 460.5L499.9 460.5L500.6 460.5L501.3 460.5L502 460.6L502.7 460.5L503.4 460.5L504.1 460.2L504.8 460L505.5 460.2L506.2 460.3L506.9 460.4L507.6 460.5L508.3 460.5L509 460.5L509.7 460.6L510.4 460.5L511.1 460.5L511.8 460.5L512.5 460.5L513.2 460.6L513.9 460.5L514.6 460.5L515.3 460.1L516 460.2L516.7 460.4L517.4 460.5L518.1 460.5L518.8 460.5L519.5 460.5L520.2 460.5L520.9 460.5L521.6 460.5L522.3 460.5L523 460.6L523.7 460.5L524.4 460.6L525.1 460.5L525.8 460.2L526.5 460L527.2 460.2L527.9 460.3L528.6 460.4L529.3 460.5L530 460.5L530.7 460.5L531.4 460.5L532.1 460.5L532.8 459.6L533.5 459.9L534.2 460.3L534.9 460.4L535.6 460.5L536.3 460.5L537 460.5L537.7 460.5L538.4 460.4L539.1 459.9L539.8 460.2L540.5 460.3L541.2 460.4L541.9 460.5L542.6 460.5L543.3 460.5L544 460.5L544.7 460.5L545.4 460.5L546.1 460.5L546.8 460.5L547.5 460.5L548.2 460.5L548.9 460.6L549.6 460.5L550.3 460.5L551 460.5L551.7 460.5L552.4 460.5L553.1 460.4L553.8 460.3L554.5 460.4L555.2 460.5L555.9 460.5L556.6 460.5L557.3 460.5L558 460.5L558.7 460.5L559.4 460.5L560.1 460.5L560.8 460.5L561.5 460.5L562.2 460.5L562.9 460.5L563.6 460.5L564.3 460.5L565 460.5L565.7 460.5L566.4 460.5L567.1 460.2L567.8 460.2L568.5 460.4L569.2 460.4L569.9 460.5L570.6 460.5L571.3 460.5L572 460.5L572.7 460.5L573.4 460.6L574.1 460.5L574.8 460.5L575.5 460.6L576.2 460.5L576.9 460.5L577.6 460.5L578.3 460.5L579 460.2L579.7 460.3L580.4 460.4L581.1 460.5L581.8 460.5L582.5 460.5L583.2 460.5L583.9 460.5L584.6 460.5L585.3 460.2L586 460.3L586.7 460.4L587.4 460.5L588.1 460.5L588.8 460.5L589.5 460.5L590.2 460.5L590.9 460.5L591.6 460.5L592.3 460.5L593 460.5L593.7 460.5L594.4 460.5L595.1 460.5L595.8 460.5L596.5 460.5L597.2 460.5L597.9 460.5L598.6 460.6L599.3 460.5L600 460.5L600.7 460.4L601.4 460.2L602.1 460.4L602.8 460.4L603.5 460.5L604.2 460.5L604.9 460.5L605.6 460.5L606.3 460.5L607 460.5L607.7 460.5L608.4 460.5L609.1 460.5L609.8 460.5L610.5 460.6L611.2 460.5L611.9 460.5L612.6 460.5L613.3 460.5L614 460.5L614.7 459.7L615.4 460L616.1 460.2L616.8 460.4L617.5 460.5L618.2 460.5L618.9 460.5L619.6 460.5L620.3 460.5L621 460.5L621.7 460.5L622.4 460.5L623.1 460.5L623.8 460.5L624.5 460.5L625.2 460.5L625.9 460.5L626.6 460.5L627.3 460.5L628 460.5L628.7 460.5L629.4 460.5L630.1 460.1L630.8 460.3L631.5 460.4L632.2 460.5L632.9 460.5L633.6 460.5L634.3 460.5L635 460.5L635.7 460.5L636.4 460.5L637.1 460.5L637.8 460.5L638.5 460.6L639.2 460.3L639.9 460.1L640.6 460.3L641.3 460.4L642 460.5L642.7 460.5L643.4 460.5L644.1 460.5L644.8 460.5L645.5 460.5L646.2 460.5L646.9 460.5L647.6 460.5L648.3 460.5L649 460.5L649.7 460.5L650.4 460.5L651.1 460.5L651.8 460.5L652.5 460.6L653.2 460.3L653.9 460.3L654.6 460.4L655.3 460.5L656 460.5L656.7 460.5L657.4 460.5L658.1 460.5L658.8 460.6L659.5 460.6L660.2 460.5L660.9 460.5L661.6 460.5L662.3 460.5L663 460.5L663.7 460.6L664.4 460.5L665.1 460.5L665.8 460.5L666.5 460.2L667.2 459.9L667.9 460.2L668.6 460.3L669.3 460.4L670 460.5L670.7 460.5L671.4 460.5L672.1 460.5L672.8 460.5L673.5 460.5L674.2 460.6L674.9 460.5L675.6 460.6L676.3 460.5L677 460.5L677.7 460.5L678.4 460.5L679.1 460.5L679.8 460.5L680.5 460.5L681.2 460.3L681.9 460.3L682.6 460.4L683.3 460.5L684 460.5L684.7 460.5L685.4 460.5L686.1 460.5L686.8 460.5L687.5 460.5L688.2 460.5L688.9 460.5L689.6 460.5L690.3 460.5L691 460.5L691.7 460.5L692.4 460.5L693.1 460.5L693.8 460.5L694.5 460.6L695.2 460.5L695.9 460.5L696.6 460.3L697.3 460.2L698 460.4L698.7 460.5L699.4 460.5L700.1 460.5L700.8 460.5L701.5 460.5L702.2 460.5L702.9 460.5L703.6 460.5L704.3 460.5L705 460.5L705.7 460.5L706.4 459.9L707.1 460.1L707.8 460.3L708.5 460.4L709.2 460.5L709.9 460.5L710.6 460.6L711.3 460.5L712 460.6L712.7 460.6L713.4 460.5L714.1 460.5L714.8 460.5L715.5 460.5L716.2 460.5L716.9 460.5L717.6 460.5L718.3 460.6L719 460.5L719.7 460.6L720.4 460.5L721.1 460.3L721.8 460.1L722.5 460.3L723.2 460.4L723.9 460.5L724.6 460.5L725.3 460.5L726 460.5L726.7 460.5L727.4 460.5L728.1 460.5L728.8 460.5L729.5 460.5L730.2 460.5L730.9 460.5L731.6 460.6L732.3 460.5L733 460.5L733.7 460.5L734.4 460.5L735.1 460.5L735.8 460.5L736.5 460.2L737.2 460.1L737.9 460.2L738.6 460.4L739.3 460.5L740 460.5L740.7 460.5L741.4 460.5L742.1 460.5L742.8 460.6L743.5 460.5L744.2 460.5L744.9 460.5L745.6 460.2L746.3 460.1L747 460.4L747.7 460.4L748.4 460.5L749.1 460.5L749.8 460.5L750.5 460.5L751.2 460.5L751.9 460.5L752.6 460.5L753.3 460.4L754 460.3L754.7 460.4L755.4 460.5L756.1 460.5L756.8 460.5L757.5 460.5L758.2 460.5L758.9 460.5L759.6 460.5L760.3 460.6L761 459.7L761.7 460.1L762.4 460.2L763.1 460.4L763.8 460.5L764.5 460.5L765.2 460.6L765.9 460.5L766.6 460.5L767.3 460.5L768 460.5L768.7 460.5L769.4 460.5L770.1 460.5L770.8 460.5L771.5 460.5L772.2 460.5L772.9 460.5L772.9 460.7L772.2 460.7L771.5 460.7L770.8 460.7L770.1 460.7L769.4 460.7L768.7 460.7L768 460.7L767.3 460.7L766.6 460.7L765.9 460.7L765.2 460.6L764.5 460.7L763.8 460.7L763.1 460.8L762.4 461L761.7 461.1L761 461.5L760.3 460.6L759.6 460.7L758.9 460.7L758.2 460.7L757.5 460.7L756.8 460.7L756.1 460.7L755.4 460.7L754.7 460.8L754 460.9L753.3 460.8L752.6 460.7L751.9 460.7L751.2 460.7L750.5 460.7L749.8 460.7L749.1 460.7L748.4 460.7L747.7 460.8L747 460.8L746.3 461.1L745.6 461L744.9 460.7L744.2 460.7L743.5 460.7L742.8 460.6L742.1 460.7L741.4 460.7L740.7 460.7L740 460.7L739.3 460.7L738.6 460.8L737.9 461L737.2 461.1L736.5 461L735.8 460.7L735.1 460.7L734.4 460.7L733.7 460.7L733 460.7L732.3 460.7L731.6 460.6L730.9 460.7L730.2 460.7L729.5 460.7L728.8 460.7L728.1 460.7L727.4 460.7L726.7 460.7L726 460.7L725.3 460.7L724.6 460.7L723.9 460.7L723.2 460.8L722.5 460.9L721.8 461.1L721.1 460.9L720.4 460.7L719.7 460.6L719 460.7L718.3 460.6L717.6 460.7L716.9 460.7L716.2 460.7L715.5 460.7L714.8 460.7L714.1 460.7L713.4 460.7L712.7 460.6L712 460.6L711.3 460.7L710.6 460.6L709.9 460.7L709.2 460.7L708.5 460.8L707.8 460.9L707.1 461.1L706.4 461.3L705.7 460.7L705 460.7L704.3 460.7L703.6 460.7L702.9 460.7L702.2 460.7L701.5 460.7L700.8 460.7L700.1 460.7L699.4 460.7L698.7 460.7L698 460.8L697.3 461L696.6 460.9L695.9 460.7L695.2 460.7L694.5 460.6L693.8 460.7L693.1 460.7L692.4 460.7L691.7 460.7L691 460.7L690.3 460.7L689.6 460.7L688.9 460.7L688.2 460.7L687.5 460.7L686.8 460.7L686.1 460.7L685.4 460.7L684.7 460.7L684 460.7L683.3 460.7L682.6 460.8L681.9 460.9L681.2 460.9L680.5 460.7L679.8 460.7L679.1 460.7L678.4 460.7L677.7 460.7L677 460.7L676.3 460.7L675.6 460.6L674.9 460.7L674.2 460.6L673.5 460.7L672.8 460.7L672.1 460.7L671.4 460.7L670.7 460.7L670 460.7L669.3 460.8L668.6 460.9L667.9 461L667.2 461.3L666.5 461L665.8 460.7L665.1 460.7L664.4 460.7L663.7 460.6L663 460.7L662.3 460.7L661.6 460.7L660.9 460.7L660.2 460.7L659.5 460.6L658.8 460.6L658.1 460.7L657.4 460.7L656.7 460.7L656 460.7L655.3 460.7L654.6 460.8L653.9 460.9L653.2 460.9L652.5 460.6L651.8 460.7L651.1 460.7L650.4 460.7L649.7 460.7L649 460.7L648.3 460.7L647.6 460.7L646.9 460.7L646.2 460.7L645.5 460.7L644.8 460.7L644.1 460.7L643.4 460.7L642.7 460.7L642 460.7L641.3 460.8L640.6 460.9L639.9 461.1L639.2 460.9L638.5 460.6L637.8 460.7L637.1 460.7L636.4 460.7L635.7 460.7L635 460.7L634.3 460.7L633.6 460.7L632.9 460.7L632.2 460.7L631.5 460.8L630.8 460.9L630.1 461.1L629.4 460.7L628.7 460.7L628 460.7L627.3 460.7L626.6 460.7L625.9 460.7L625.2 460.7L624.5 460.7L623.8 460.7L623.1 460.7L622.4 460.7L621.7 460.7L621 460.7L620.3 460.7L619.6 460.7L618.9 460.7L618.2 460.7L617.5 460.7L616.8 460.8L616.1 461L615.4 461.2L614.7 461.5L614 460.7L613.3 460.7L612.6 460.7L611.9 460.7L611.2 460.7L610.5 460.6L609.8 460.7L609.1 460.7L608.4 460.7L607.7 460.7L607 460.7L606.3 460.7L605.6 460.7L604.9 460.7L604.2 460.7L603.5 460.7L602.8 460.8L602.1 460.8L601.4 461L600.7 460.8L600 460.7L599.3 460.7L598.6 460.6L597.9 460.7L597.2 460.7L596.5 460.7L595.8 460.7L595.1 460.7L594.4 460.7L593.7 460.7L593 460.7L592.3 460.7L591.6 460.7L590.9 460.7L590.2 460.7L589.5 460.7L588.8 460.7L588.1 460.7L587.4 460.7L586.7 460.8L586 460.9L585.3 461L584.6 460.7L583.9 460.7L583.2 460.7L582.5 460.7L581.8 460.7L581.1 460.7L580.4 460.8L579.7 460.9L579 461L578.3 460.7L577.6 460.7L576.9 460.7L576.2 460.7L575.5 460.6L574.8 460.7L574.1 460.7L573.4 460.6L572.7 460.7L572 460.7L571.3 460.7L570.6 460.7L569.9 460.7L569.2 460.8L568.5 460.8L567.8 461L567.1 461L566.4 460.7L565.7 460.7L565 460.7L564.3 460.7L563.6 460.7L562.9 460.7L562.2 460.7L561.5 460.7L560.8 460.7L560.1 460.7L559.4 460.7L558.7 460.7L558 460.7L557.3 460.7L556.6 460.7L555.9 460.7L555.2 460.7L554.5 460.8L553.8 460.9L553.1 460.8L552.4 460.7L551.7 460.7L551 460.7L550.3 460.7L549.6 460.7L548.9 460.6L548.2 460.7L547.5 460.7L546.8 460.7L546.1 460.7L545.4 460.7L544.7 460.7L544 460.7L543.3 460.7L542.6 460.7L541.9 460.7L541.2 460.8L540.5 460.9L539.8 461L539.1 461.3L538.4 460.8L537.7 460.7L537 460.7L536.3 460.7L535.6 460.7L534.9 460.8L534.2 460.9L533.5 461.3L532.8 461.6L532.1 460.7L531.4 460.7L530.7 460.7L530 460.7L529.3 460.7L528.6 460.8L527.9 460.9L527.2 461L526.5 461.2L525.8 461L525.1 460.7L524.4 460.6L523.7 460.7L523 460.6L522.3 460.7L521.6 460.7L520.9 460.7L520.2 460.7L519.5 460.7L518.8 460.7L518.1 460.7L517.4 460.7L516.7 460.8L516 461L515.3 461.1L514.6 460.7L513.9 460.7L513.2 460.6L512.5 460.7L511.8 460.7L511.1 460.7L510.4 460.7L509.7 460.6L509 460.7L508.3 460.7L507.6 460.7L506.9 460.8L506.2 460.9L505.5 461L504.8 461.2L504.1 461L503.4 460.7L502.7 460.7L502 460.6L501.3 460.7L500.6 460.7L499.9 460.7L499.2 460.7L498.5 460.7L497.8 460.7L497.1 460.8L496.4 460.9L495.7 461.1L495 460.8L494.3 460.6L493.6 460.6L492.9 460.7L492.2 460.7L491.5 460.7L490.8 460.7L490.1 460.7L489.4 460.6L488.7 460.7L488 460.7L487.3 460.7L486.6 460.7L485.9 460.7L485.2 460.7L484.5 460.7L483.8 460.8L483.1 460.9L482.4 460.9L481.7 460.6L481 460.7L480.3 460.7L479.6 460.7L478.9 460.7L478.2 460.6L477.5 460.7L476.8 460.7L476.1 460.7L475.4 460.7L474.7 460.6L474 460.7L473.3 460.7L472.6 460.7L471.9 460.8L471.2 460.9L470.5 461.3L469.8 460.7L469.1 460.7L468.4 460.7L467.7 460.7L467 460.7L466.3 460.7L465.6 460.7L464.9 460.9L464.2 461.1L463.5 460.7L462.8 460.7L462.1 460.7L461.4 460.7L460.7 460.7L460 460.7L459.3 460.7L458.6 460.7L457.9 460.8L457.2 460.9L456.5 461.2L455.8 460.8L455.1 460.7L454.4 460.7L453.7 460.7L453 460.7L452.3 460.7L451.6 460.7L450.9 460.7L450.2 460.7L449.5 460.8L448.8 461L448.1 461.1L447.4 461.4L446.7 460.7L446 460.7L445.3 460.7L444.6 460.6L443.9 460.7L443.2 460.7L442.5 460.7L441.8 460.7L441.1 460.7L440.4 460.7L439.7 460.7L439 460.7L438.3 460.6L437.6 460.7L436.9 460.7L436.2 460.7L435.5 460.6L434.8 460.7L434.1 460.8L433.4 460.9L432.7 461L432 461.3L431.3 461L430.6 460.6L429.9 460.7L429.2 460.7L428.5 460.6L427.8 460.7L427.1 460.7L426.4 460.7L425.7 460.7L425 460.7L424.3 460.7L423.6 460.7L422.9 460.7L422.2 460.7L421.5 460.7L420.8 460.7L420.1 460.7L419.4 460.7L418.7 460.7L418 460.7L417.3 460.8L416.6 460.9L415.9 460.8L415.2 460.7L414.5 460.7L413.8 460.7L413.1 460.7L412.4 460.7L411.7 460.7L411 460.7L410.3 460.7L409.6 460.7L408.9 460.6L408.2 460.7L407.5 460.7L406.8 460.7L406.1 460.7L405.4 460.8L404.7 460.9L404 461.1L403.3 461L402.6 460.7L401.9 460.7L401.2 460.7L400.5 460.7L399.8 460.7L399.1 460.6L398.4 460.7L397.7 460.7L397 460.7L396.3 460.7L395.6 460.7L394.9 460.7L394.2 460.7L393.5 460.7L392.8 460.7L392.1 460.7L391.4 460.7L390.7 460.7L390 460.7L389.3 460.8L388.6 460.9L387.9 461.1L387.2 460.7L386.5 460.7L385.8 460.7L385.1 460.7L384.4 460.7L383.7 460.7L383 460.7L382.3 460.7L381.6 460.7L380.9 460.7L380.2 460.6L379.5 460.7L378.8 460.7L378.1 460.7L377.4 460.7L376.7 460.7L376 460.7L375.3 460.8L374.6 461L373.9 461.3L373.2 461.6L372.5 460.7L371.8 460.7L371.1 460.7L370.4 460.7L369.7 460.7L369 460.6L368.3 460.7L367.6 460.7L366.9 460.7L366.2 460.8L365.5 461L364.8 461L364.1 460.7L363.4 460.7L362.7 460.7L362 460.7L361.3 460.7L360.6 460.7L359.9 460.7L359.2 460.7L358.5 460.7L357.8 460.7L357.1 460.7L356.4 460.7L355.7 460.7L355 460.7L354.3 460.7L353.6 460.7L352.9 460.7L352.2 460.7L351.5 460.8L350.8 460.9L350.1 460.9L349.4 460.7L348.7 460.7L348 460.7L347.3 460.7L346.6 460.7L345.9 460.7L345.2 460.7L344.5 460.9L343.8 461.1L343.1 461.3L342.4 460.7L341.7 460.7L341 460.7L340.3 460.7L339.6 460.7L338.9 460.7L338.2 460.8L337.5 460.8L336.8 460.9L336.1 461.1L335.4 461.1L334.7 460.7L334 460.7L333.3 460.7L332.6 460.7L331.9 460.7L331.2 460.7L330.5 460.7L329.8 460.8L329.1 461L328.4 461.2L327.7 461.1L327 460.7L326.3 460.7L325.6 460.7L324.9 460.7L324.2 460.7L323.5 460.6L322.8 460.7L322.1 460.7L321.4 460.7L320.7 460.7L320 460.7L319.3 460.7L318.6 460.7L317.9 460.7L317.2 460.7L316.5 460.7L315.8 460.7L315.1 460.7L314.4 460.8L313.7 461L313 461L312.3 460.8L311.6 460.7L310.9 460.7L310.2 460.7L309.5 460.7L308.8 460.7L308.1 460.7L307.4 460.7L306.7 460.7L306 460.7L305.3 460.9L304.6 461L303.9 460.7L303.2 460.7L302.5 460.6L301.8 460.7L301.1 460.7L300.4 460.7L299.7 460.7L299 460.7L298.3 460.7L297.6 460.7L296.9 460.7L296.2 460.7L295.5 460.7L294.8 460.8L294.1 461L293.4 461.1L292.7 461.1L292 460.7L291.3 460.7L290.6 460.7L289.9 460.7L289.2 460.7L288.5 460.6L287.8 460.7L287.1 460.7L286.4 460.8L285.7 460.9L285 461L284.3 461.2L283.6 460.7L282.9 460.6L282.2 460.7L281.5 460.7L280.8 460.7L280.1 460.7L279.4 460.8L278.7 461L278 461.3L277.3 461.5L276.6 460.7L275.9 460.7L275.2 460.7L274.5 460.7L273.8 460.7L273.1 460.7L272.4 460.7L271.7 460.6L271 460.7L270.3 460.7L269.6 460.7L268.9 460.7L268.2 460.7L267.5 460.8L266.8 460.9L266.1 461.1L265.4 461.2L264.7 461.4L264 460.7L263.3 460.7L262.6 460.7L261.9 460.7L261.2 460.7L260.5 460.7L259.8 460.7L259.1 460.7L258.4 460.7L257.7 460.7L257 460.7L256.3 460.7L255.6 460.7L254.9 460.9L254.2 461L253.5 460.7L252.8 460.7L252.1 460.7L251.4 460.6L250.7 460.6L250 460.7L249.3 460.7L248.6 460.7L247.9 460.7L247.2 460.6L246.5 460.7L245.8 460.7L245.1 460.7L244.4 460.7L243.7 460.7L243 460.7L242.3 460.7L241.6 460.7L240.9 460.8L240.2 460.9L239.5 461.1L238.8 461.1L238.1 460.7L237.4 460.7L236.7 460.7L236 460.7L235.3 460.7L234.6 460.7L233.9 460.6L233.2 460.7L232.5 460.7L231.8 460.7L231.1 460.7L230.4 460.7L229.7 460.7L229 460.7L228.3 460.7L227.6 460.7L226.9 460.7L226.2 460.7L225.5 460.8L224.8 461L224.1 461.1L223.4 461.2L222.7 460.7L222 460.7L221.3 460.7L220.6 460.7L219.9 460.7L219.2 460.7L218.5 460.6L217.8 460.7L217.1 460.7L216.4 460.6L215.7 460.7L215 460.7L214.3 460.7L213.6 460.7L212.9 460.7L212.2 460.8L211.5 460.9L210.8 461.1L210.1 461.3L209.4 460.6L208.7 460.7L208 460.7L207.3 460.7L206.6 460.7Z" fill="#d6ecdf" opacity="0.7"/>
<rect x="207" y="222.4" width="25" height="7.2" fill="#28573c" opacity="0.9"/>
<text x="208.2" y="227.67" font-size="4.5" fill="#f4f8f5" font-weight="bold">TP Cowbell</text>
<rect x="207" y="246.5" width="25" height="7.2" fill="#28573c" opacity="0.9"/>
<text x="208.2" y="251.77" font-size="4.5" fill="#f4f8f5" font-weight="bold">Tom 3_01.a</text>
<rect x="207" y="270.6" width="25" height="7.2" fill="#28573c" opacity="0.9"/>
<text x="208.2" y="275.88" font-size="4.5" fill="#f4f8f5" font-weight="bold">Tom 2_01.a</text>
<rect x="207" y="294.7" width="25" height="7.2" fill="#28573c" opacity="0.9"/>
<text x="208.2" y="299.98" font-size="4.5" fill="#f4f8f5" font-weight="bold">Tom 1_01.a</text>
<rect x="207" y="318.8" width="25" height="7.2" fill="#28573c" opacity="0.9"/>
<text x="208.2" y="324.07" font-size="4.5" fill="#f4f8f5" font-weight="bold">Snare Top_</text>
<rect x="207" y="342.9" width="25" height="7.2" fill="#28573c" opacity="0.9"/>
<text x="208.2" y="348.17" font-size="4.5" fill="#f4f8f5" font-weight="bold">Snare Bott</text>
<rect x="207" y="367" width="25" height="7.2" fill="#28573c" opacity="0.9"/>
<text x="208.2" y="372.27" font-size="4.5" fill="#f4f8f5" font-weight="bold">Snare 2_01</text>
<rect x="207" y="391.1" width="25" height="7.2" fill="#28573c" opacity="0.9"/>
<text x="208.2" y="396.38" font-size="4.5" fill="#f4f8f5" font-weight="bold">Simon Gtr_</text>
<rect x="207" y="415.2" width="25" height="7.2" fill="#28573c" opacity="0.9"/>
<text x="208.2" y="420.48" font-size="4.5" fill="#f4f8f5" font-weight="bold">Simon DI_0</text>
<rect x="207" y="439.3" width="34" height="7.2" fill="#28573c" opacity="0.9"/>
<text x="208.2" y="444.57" font-size="4.5" fill="#f4f8f5" font-weight="bold">Sample_01.wav</text>
<rect x="207" y="463.4" width="28.5" height="7.2" fill="#28573c" opacity="0.9"/>
<text x="208.2" y="468.67" font-size="4.5" fill="#f4f8f5" font-weight="bold">Ride_01.wav</text>
<rect x="773" y="203.6" width="4.6" height="267.4" fill="#242429"/>
<rect x="774" y="206" width="2" height="132" fill="#6b6b71" rx="1"/>
<rect x="207" y="467.8" width="570" height="3.2" fill="#1c1c20"/>
<rect x="235.5" y="468.3" width="74.5" height="1.9" fill="#6b6b71" rx="0.9"/>
<rect x="113" y="206.4" width="94" height="264.6" fill="#27272c"/>
<rect x="113" y="206.4" width="2.4" height="264.6" fill="#3a7a56"/>
<line x1="115.4" y1="206.4" x2="207" y2="206.4" stroke="#18181b" stroke-width="0.9"/>
<rect x="121.9" y="207.4" width="15.7" height="9.7" fill="#29292e"/>
<rect x="138.4" y="207.4" width="52.4" height="9.7" fill="#29292e"/>
<line x1="138" y1="207" x2="138" y2="217.4" stroke="#1c1c20" stroke-width="0.5"/>
<line x1="116" y1="217.6" x2="191" y2="217.6" stroke="#1e1e22" stroke-width="0.5"/>
<text x="129.8" y="214.02" font-size="4.9" fill="#ececee" font-weight="bold" text-anchor="middle">A2</text>
<text x="142.2" y="214.05" font-size="5" fill="#ececee" font-weight="bold">Audio 2</text>
<rect x="127.4" y="220.5" width="15.8" height="6.8" fill="#212125" rx="0.8" stroke="#33333a" stroke-width="0.4"/>
<text x="135.3" y="225.51" font-size="4.6" fill="#55555b" text-anchor="middle">0.0</text>
<rect x="149.2" y="224.3" width="3.4" height="2" fill="#5a5a60" rx="0.3"/>
<path d="M150 224.3 v-0.8 a0.9 0.9 0 0 1 1.8 0 v0.8" fill="none" stroke="#4a4a50" stroke-width="0.4"/>
<rect x="159.3" y="220.7" width="6.8" height="6.4" fill="#3a3a40" rx="0.8"/>
<text x="162.7" y="225.57" font-size="4.5" fill="#85858b" font-weight="bold" text-anchor="middle">R</text>
<rect x="170.3" y="220.7" width="6.8" height="6.4" fill="#3a3a40" rx="0.8"/>
<text x="173.7" y="225.57" font-size="4.5" fill="#85858b" font-weight="bold" text-anchor="middle">S</text>
<rect x="181.4" y="220.7" width="6.8" height="6.4" fill="#3a3a40" rx="0.8"/>
<text x="184.8" y="225.57" font-size="4.5" fill="#85858b" font-weight="bold" text-anchor="middle">M</text>
<rect x="191.6" y="206.9" width="14" height="23.2" fill="#222226"/>
<line x1="115.4" y1="230.5" x2="207" y2="230.5" stroke="#18181b" stroke-width="0.9"/>
<rect x="121.9" y="231.5" width="15.7" height="9.7" fill="#29292e"/>
<rect x="138.4" y="231.5" width="52.4" height="9.7" fill="#29292e"/>
<line x1="138" y1="231.1" x2="138" y2="241.5" stroke="#1c1c20" stroke-width="0.5"/>
<line x1="116" y1="241.7" x2="191" y2="241.7" stroke="#1e1e22" stroke-width="0.5"/>
<text x="129.8" y="238.12" font-size="4.9" fill="#ececee" font-weight="bold" text-anchor="middle">A3</text>
<text x="142.2" y="238.15" font-size="5" fill="#ececee" font-weight="bold">Tom 3</text>
<rect x="127.4" y="244.6" width="15.8" height="6.8" fill="#212125" rx="0.8" stroke="#33333a" stroke-width="0.4"/>
<text x="135.3" y="249.61" font-size="4.6" fill="#55555b" text-anchor="middle">0.0</text>
<rect x="149.2" y="248.4" width="3.4" height="2" fill="#5a5a60" rx="0.3"/>
<path d="M150 248.4 v-0.8 a0.9 0.9 0 0 1 1.8 0 v0.8" fill="none" stroke="#4a4a50" stroke-width="0.4"/>
<rect x="159.3" y="244.8" width="6.8" height="6.4" fill="#3a3a40" rx="0.8"/>
<text x="162.7" y="249.67" font-size="4.5" fill="#85858b" font-weight="bold" text-anchor="middle">R</text>
<rect x="170.3" y="244.8" width="6.8" height="6.4" fill="#3a3a40" rx="0.8"/>
<text x="173.7" y="249.67" font-size="4.5" fill="#85858b" font-weight="bold" text-anchor="middle">S</text>
<rect x="181.4" y="244.8" width="6.8" height="6.4" fill="#3a3a40" rx="0.8"/>
<text x="184.8" y="249.67" font-size="4.5" fill="#85858b" font-weight="bold" text-anchor="middle">M</text>
<rect x="191.6" y="231" width="14" height="23.2" fill="#222226"/>
<line x1="115.4" y1="254.6" x2="207" y2="254.6" stroke="#18181b" stroke-width="0.9"/>
<rect x="121.9" y="255.6" width="15.7" height="9.7" fill="#29292e"/>
<rect x="138.4" y="255.6" width="52.4" height="9.7" fill="#29292e"/>
<line x1="138" y1="255.2" x2="138" y2="265.6" stroke="#1c1c20" stroke-width="0.5"/>
<line x1="116" y1="265.8" x2="191" y2="265.8" stroke="#1e1e22" stroke-width="0.5"/>
<text x="129.8" y="262.21" font-size="4.9" fill="#ececee" font-weight="bold" text-anchor="middle">A4</text>
<text x="142.2" y="262.25" font-size="5" fill="#ececee" font-weight="bold">Tom 2</text>
<rect x="127.4" y="268.7" width="15.8" height="6.8" fill="#212125" rx="0.8" stroke="#33333a" stroke-width="0.4"/>
<text x="135.3" y="273.71" font-size="4.6" fill="#55555b" text-anchor="middle">0.0</text>
<rect x="149.2" y="272.5" width="3.4" height="2" fill="#5a5a60" rx="0.3"/>
<path d="M150 272.5 v-0.8 a0.9 0.9 0 0 1 1.8 0 v0.8" fill="none" stroke="#4a4a50" stroke-width="0.4"/>
<rect x="159.3" y="268.9" width="6.8" height="6.4" fill="#3a3a40" rx="0.8"/>
<text x="162.7" y="273.78" font-size="4.5" fill="#85858b" font-weight="bold" text-anchor="middle">R</text>
<rect x="170.3" y="268.9" width="6.8" height="6.4" fill="#3a3a40" rx="0.8"/>
<text x="173.7" y="273.78" font-size="4.5" fill="#85858b" font-weight="bold" text-anchor="middle">S</text>
<rect x="181.4" y="268.9" width="6.8" height="6.4" fill="#3a3a40" rx="0.8"/>
<text x="184.8" y="273.78" font-size="4.5" fill="#85858b" font-weight="bold" text-anchor="middle">M</text>
<rect x="191.6" y="255.1" width="14" height="23.2" fill="#222226"/>
<line x1="115.4" y1="278.7" x2="207" y2="278.7" stroke="#18181b" stroke-width="0.9"/>
<rect x="121.9" y="279.7" width="15.7" height="9.7" fill="#29292e"/>
<rect x="138.4" y="279.7" width="52.4" height="9.7" fill="#29292e"/>
<line x1="138" y1="279.3" x2="138" y2="289.7" stroke="#1c1c20" stroke-width="0.5"/>
<line x1="116" y1="289.9" x2="191" y2="289.9" stroke="#1e1e22" stroke-width="0.5"/>
<text x="129.8" y="286.31" font-size="4.9" fill="#ececee" font-weight="bold" text-anchor="middle">A5</text>
<text x="142.2" y="286.35" font-size="5" fill="#ececee" font-weight="bold">Tom 1</text>
<text x="175.6" y="286.35" font-size="5" fill="#8e8e94" font-style="italic">fx</text>
<rect x="127.4" y="292.8" width="15.8" height="6.8" fill="#212125" rx="0.8" stroke="#33333a" stroke-width="0.4"/>
<text x="135.3" y="297.81" font-size="4.6" fill="#55555b" text-anchor="middle">0.0</text>
<rect x="149.2" y="296.6" width="3.4" height="2" fill="#5a5a60" rx="0.3"/>
<path d="M150 296.6 v-0.8 a0.9 0.9 0 0 1 1.8 0 v0.8" fill="none" stroke="#4a4a50" stroke-width="0.4"/>
<rect x="159.3" y="293" width="6.8" height="6.4" fill="#3a3a40" rx="0.8"/>
<text x="162.7" y="297.88" font-size="4.5" fill="#85858b" font-weight="bold" text-anchor="middle">R</text>
<rect x="170.3" y="293" width="6.8" height="6.4" fill="#3a3a40" rx="0.8"/>
<text x="173.7" y="297.88" font-size="4.5" fill="#85858b" font-weight="bold" text-anchor="middle">S</text>
<rect x="181.4" y="293" width="6.8" height="6.4" fill="#3a3a40" rx="0.8"/>
<text x="184.8" y="297.88" font-size="4.5" fill="#85858b" font-weight="bold" text-anchor="middle">M</text>
<rect x="191.6" y="279.2" width="14" height="23.2" fill="#222226"/>
<line x1="115.4" y1="302.8" x2="207" y2="302.8" stroke="#18181b" stroke-width="0.9"/>
<rect x="121.9" y="303.8" width="15.7" height="9.7" fill="#29292e"/>
<rect x="138.4" y="303.8" width="52.4" height="9.7" fill="#29292e"/>
<line x1="138" y1="303.4" x2="138" y2="313.8" stroke="#1c1c20" stroke-width="0.5"/>
<line x1="116" y1="314" x2="191" y2="314" stroke="#1e1e22" stroke-width="0.5"/>
<text x="129.8" y="310.41" font-size="4.9" fill="#ececee" font-weight="bold" text-anchor="middle">A6</text>
<text x="142.2" y="310.45" font-size="5" fill="#ececee" font-weight="bold">Snare</text>
<text x="175.6" y="310.45" font-size="5" fill="#8e8e94" font-style="italic">fx</text>
<rect x="127.4" y="316.9" width="15.8" height="6.8" fill="#212125" rx="0.8" stroke="#33333a" stroke-width="0.4"/>
<text x="135.3" y="321.91" font-size="4.6" fill="#55555b" text-anchor="middle">0.0</text>
<rect x="149.2" y="320.7" width="3.4" height="2" fill="#5a5a60" rx="0.3"/>
<path d="M150 320.7 v-0.8 a0.9 0.9 0 0 1 1.8 0 v0.8" fill="none" stroke="#4a4a50" stroke-width="0.4"/>
<rect x="159.3" y="317.1" width="6.8" height="6.4" fill="#3a3a40" rx="0.8"/>
<text x="162.7" y="321.98" font-size="4.5" fill="#85858b" font-weight="bold" text-anchor="middle">R</text>
<rect x="170.3" y="317.1" width="6.8" height="6.4" fill="#3a3a40" rx="0.8"/>
<text x="173.7" y="321.98" font-size="4.5" fill="#85858b" font-weight="bold" text-anchor="middle">S</text>
<rect x="181.4" y="317.1" width="6.8" height="6.4" fill="#3a3a40" rx="0.8"/>
<text x="184.8" y="321.98" font-size="4.5" fill="#85858b" font-weight="bold" text-anchor="middle">M</text>
<rect x="191.6" y="303.3" width="14" height="23.2" fill="#222226"/>
<line x1="115.4" y1="326.9" x2="207" y2="326.9" stroke="#18181b" stroke-width="0.9"/>
<rect x="121.9" y="327.9" width="15.7" height="9.7" fill="#29292e"/>
<rect x="138.4" y="327.9" width="52.4" height="9.7" fill="#29292e"/>
<line x1="138" y1="327.5" x2="138" y2="337.9" stroke="#1c1c20" stroke-width="0.5"/>
<line x1="116" y1="338.1" x2="191" y2="338.1" stroke="#1e1e22" stroke-width="0.5"/>
<text x="129.8" y="334.51" font-size="4.9" fill="#ececee" font-weight="bold" text-anchor="middle">A7</text>
<text x="142.2" y="334.55" font-size="5" fill="#ececee" font-weight="bold">Snare B</text>
<rect x="127.4" y="341" width="15.8" height="6.8" fill="#212125" rx="0.8" stroke="#33333a" stroke-width="0.4"/>
<text x="135.3" y="346.01" font-size="4.6" fill="#55555b" text-anchor="middle">0.0</text>
<rect x="149.2" y="344.8" width="3.4" height="2" fill="#5a5a60" rx="0.3"/>
<path d="M150 344.8 v-0.8 a0.9 0.9 0 0 1 1.8 0 v0.8" fill="none" stroke="#4a4a50" stroke-width="0.4"/>
<rect x="159.3" y="341.2" width="6.8" height="6.4" fill="#3a3a40" rx="0.8"/>
<text x="162.7" y="346.07" font-size="4.5" fill="#85858b" font-weight="bold" text-anchor="middle">R</text>
<rect x="170.3" y="341.2" width="6.8" height="6.4" fill="#3a3a40" rx="0.8"/>
<text x="173.7" y="346.07" font-size="4.5" fill="#85858b" font-weight="bold" text-anchor="middle">S</text>
<rect x="181.4" y="341.2" width="6.8" height="6.4" fill="#3a3a40" rx="0.8"/>
<text x="184.8" y="346.07" font-size="4.5" fill="#85858b" font-weight="bold" text-anchor="middle">M</text>
<rect x="191.6" y="327.4" width="14" height="23.2" fill="#222226"/>
<line x1="115.4" y1="351" x2="207" y2="351" stroke="#18181b" stroke-width="0.9"/>
<rect x="121.9" y="352" width="15.7" height="9.7" fill="#29292e"/>
<rect x="138.4" y="352" width="52.4" height="9.7" fill="#29292e"/>
<line x1="138" y1="351.6" x2="138" y2="362" stroke="#1c1c20" stroke-width="0.5"/>
<line x1="116" y1="362.2" x2="191" y2="362.2" stroke="#1e1e22" stroke-width="0.5"/>
<text x="129.8" y="358.61" font-size="4.9" fill="#ececee" font-weight="bold" text-anchor="middle">A8</text>
<text x="142.2" y="358.65" font-size="5" fill="#ececee" font-weight="bold">Snare 2</text>
<rect x="127.4" y="365.1" width="15.8" height="6.8" fill="#212125" rx="0.8" stroke="#33333a" stroke-width="0.4"/>
<text x="135.3" y="370.11" font-size="4.6" fill="#55555b" text-anchor="middle">0.0</text>
<rect x="149.2" y="368.9" width="3.4" height="2" fill="#5a5a60" rx="0.3"/>
<path d="M150 368.9 v-0.8 a0.9 0.9 0 0 1 1.8 0 v0.8" fill="none" stroke="#4a4a50" stroke-width="0.4"/>
<rect x="159.3" y="365.3" width="6.8" height="6.4" fill="#3a3a40" rx="0.8"/>
<text x="162.7" y="370.18" font-size="4.5" fill="#85858b" font-weight="bold" text-anchor="middle">R</text>
<rect x="170.3" y="365.3" width="6.8" height="6.4" fill="#3a3a40" rx="0.8"/>
<text x="173.7" y="370.18" font-size="4.5" fill="#85858b" font-weight="bold" text-anchor="middle">S</text>
<rect x="181.4" y="365.3" width="6.8" height="6.4" fill="#3a3a40" rx="0.8"/>
<text x="184.8" y="370.18" font-size="4.5" fill="#85858b" font-weight="bold" text-anchor="middle">M</text>
<rect x="191.6" y="351.5" width="14" height="23.2" fill="#222226"/>
<line x1="115.4" y1="375.1" x2="207" y2="375.1" stroke="#18181b" stroke-width="0.9"/>
<rect x="121.9" y="376.1" width="15.7" height="9.7" fill="#29292e"/>
<rect x="138.4" y="376.1" width="52.4" height="9.7" fill="#29292e"/>
<line x1="138" y1="375.7" x2="138" y2="386.1" stroke="#1c1c20" stroke-width="0.5"/>
<line x1="116" y1="386.3" x2="191" y2="386.3" stroke="#1e1e22" stroke-width="0.5"/>
<text x="129.8" y="382.71" font-size="4.9" fill="#ececee" font-weight="bold" text-anchor="middle">A9</text>
<text x="142.2" y="382.75" font-size="5" fill="#ececee" font-weight="bold">Simon Gtr 1</text>
<rect x="127.4" y="389.2" width="15.8" height="6.8" fill="#212125" rx="0.8" stroke="#33333a" stroke-width="0.4"/>
<text x="135.3" y="394.21" font-size="4.6" fill="#55555b" text-anchor="middle">0.0</text>
<rect x="149.2" y="393" width="3.4" height="2" fill="#5a5a60" rx="0.3"/>
<path d="M150 393 v-0.8 a0.9 0.9 0 0 1 1.8 0 v0.8" fill="none" stroke="#4a4a50" stroke-width="0.4"/>
<rect x="159.3" y="389.4" width="6.8" height="6.4" fill="#3a3a40" rx="0.8"/>
<text x="162.7" y="394.28" font-size="4.5" fill="#85858b" font-weight="bold" text-anchor="middle">R</text>
<rect x="170.3" y="389.4" width="6.8" height="6.4" fill="#3a3a40" rx="0.8"/>
<text x="173.7" y="394.28" font-size="4.5" fill="#85858b" font-weight="bold" text-anchor="middle">S</text>
<rect x="181.4" y="389.4" width="6.8" height="6.4" fill="#3a3a40" rx="0.8"/>
<text x="184.8" y="394.28" font-size="4.5" fill="#85858b" font-weight="bold" text-anchor="middle">M</text>
<rect x="191.6" y="375.6" width="14" height="23.2" fill="#222226"/>
<line x1="115.4" y1="399.2" x2="207" y2="399.2" stroke="#18181b" stroke-width="0.9"/>
<rect x="121.9" y="400.2" width="15.7" height="9.7" fill="#29292e"/>
<rect x="138.4" y="400.2" width="52.4" height="9.7" fill="#29292e"/>
<line x1="138" y1="399.8" x2="138" y2="410.2" stroke="#1c1c20" stroke-width="0.5"/>
<line x1="116" y1="410.4" x2="191" y2="410.4" stroke="#1e1e22" stroke-width="0.5"/>
<text x="129.8" y="406.81" font-size="4.9" fill="#ececee" font-weight="bold" text-anchor="middle">A10</text>
<text x="142.2" y="406.85" font-size="5" fill="#ececee" font-weight="bold">Simon DI</text>
<rect x="127.4" y="413.3" width="15.8" height="6.8" fill="#212125" rx="0.8" stroke="#33333a" stroke-width="0.4"/>
<text x="135.3" y="418.31" font-size="4.6" fill="#55555b" text-anchor="middle">0.0</text>
<rect x="149.2" y="417.1" width="3.4" height="2" fill="#5a5a60" rx="0.3"/>
<path d="M150 417.1 v-0.8 a0.9 0.9 0 0 1 1.8 0 v0.8" fill="none" stroke="#4a4a50" stroke-width="0.4"/>
<rect x="159.3" y="413.5" width="6.8" height="6.4" fill="#3a3a40" rx="0.8"/>
<text x="162.7" y="418.38" font-size="4.5" fill="#85858b" font-weight="bold" text-anchor="middle">R</text>
<rect x="170.3" y="413.5" width="6.8" height="6.4" fill="#3a3a40" rx="0.8"/>
<text x="173.7" y="418.38" font-size="4.5" fill="#85858b" font-weight="bold" text-anchor="middle">S</text>
<rect x="181.4" y="413.5" width="6.8" height="6.4" fill="#3a3a40" rx="0.8"/>
<text x="184.8" y="418.38" font-size="4.5" fill="#85858b" font-weight="bold" text-anchor="middle">M</text>
<rect x="191.6" y="399.7" width="14" height="23.2" fill="#222226"/>
<line x1="115.4" y1="423.3" x2="207" y2="423.3" stroke="#18181b" stroke-width="0.9"/>
<rect x="121.9" y="424.3" width="15.7" height="9.7" fill="#29292e"/>
<rect x="138.4" y="424.3" width="52.4" height="9.7" fill="#29292e"/>
<line x1="138" y1="423.9" x2="138" y2="434.3" stroke="#1c1c20" stroke-width="0.5"/>
<line x1="116" y1="434.5" x2="191" y2="434.5" stroke="#1e1e22" stroke-width="0.5"/>
<text x="129.8" y="430.91" font-size="4.9" fill="#ececee" font-weight="bold" text-anchor="middle">A11</text>
<text x="142.2" y="430.95" font-size="5" fill="#ececee" font-weight="bold">Sample</text>
<rect x="127.4" y="437.4" width="15.8" height="6.8" fill="#212125" rx="0.8" stroke="#33333a" stroke-width="0.4"/>
<text x="135.3" y="442.41" font-size="4.6" fill="#55555b" text-anchor="middle">0.0</text>
<rect x="149.2" y="441.2" width="3.4" height="2" fill="#5a5a60" rx="0.3"/>
<path d="M150 441.2 v-0.8 a0.9 0.9 0 0 1 1.8 0 v0.8" fill="none" stroke="#4a4a50" stroke-width="0.4"/>
<rect x="159.3" y="437.6" width="6.8" height="6.4" fill="#3a3a40" rx="0.8"/>
<text x="162.7" y="442.48" font-size="4.5" fill="#85858b" font-weight="bold" text-anchor="middle">R</text>
<rect x="170.3" y="437.6" width="6.8" height="6.4" fill="#3a3a40" rx="0.8"/>
<text x="173.7" y="442.48" font-size="4.5" fill="#85858b" font-weight="bold" text-anchor="middle">S</text>
<rect x="181.4" y="437.6" width="6.8" height="6.4" fill="#3a3a40" rx="0.8"/>
<text x="184.8" y="442.48" font-size="4.5" fill="#85858b" font-weight="bold" text-anchor="middle">M</text>
<rect x="191.6" y="423.8" width="14" height="23.2" fill="#222226"/>
<line x1="115.4" y1="447.4" x2="207" y2="447.4" stroke="#18181b" stroke-width="0.9"/>
<rect x="121.9" y="448.4" width="15.7" height="9.7" fill="#29292e"/>
<rect x="138.4" y="448.4" width="52.4" height="9.7" fill="#29292e"/>
<line x1="138" y1="448" x2="138" y2="458.4" stroke="#1c1c20" stroke-width="0.5"/>
<line x1="116" y1="458.6" x2="191" y2="458.6" stroke="#1e1e22" stroke-width="0.5"/>
<text x="129.8" y="455.01" font-size="4.9" fill="#ececee" font-weight="bold" text-anchor="middle">A12</text>
<text x="142.2" y="455.05" font-size="5" fill="#ececee" font-weight="bold">Ride</text>
<rect x="127.4" y="461.5" width="15.8" height="6.8" fill="#212125" rx="0.8" stroke="#33333a" stroke-width="0.4"/>
<text x="135.3" y="466.51" font-size="4.6" fill="#55555b" text-anchor="middle">0.0</text>
<rect x="149.2" y="465.3" width="3.4" height="2" fill="#5a5a60" rx="0.3"/>
<path d="M150 465.3 v-0.8 a0.9 0.9 0 0 1 1.8 0 v0.8" fill="none" stroke="#4a4a50" stroke-width="0.4"/>
<rect x="159.3" y="461.7" width="6.8" height="6.4" fill="#3a3a40" rx="0.8"/>
<text x="162.7" y="466.57" font-size="4.5" fill="#85858b" font-weight="bold" text-anchor="middle">R</text>
<rect x="170.3" y="461.7" width="6.8" height="6.4" fill="#3a3a40" rx="0.8"/>
<text x="173.7" y="466.57" font-size="4.5" fill="#85858b" font-weight="bold" text-anchor="middle">S</text>
<rect x="181.4" y="461.7" width="6.8" height="6.4" fill="#3a3a40" rx="0.8"/>
<text x="184.8" y="466.57" font-size="4.5" fill="#85858b" font-weight="bold" text-anchor="middle">M</text>
<rect x="191.6" y="447.9" width="14" height="23.2" fill="#222226"/>
<line x1="191.2" y1="206.4" x2="191.2" y2="471" stroke="#18181b" stroke-width="0.6"/>
<line x1="206.2" y1="206.4" x2="206.2" y2="471" stroke="#18181b" stroke-width="0.8"/>
<rect x="196" y="208.4" width="2.2" height="20.3" fill="#202024"/>
<rect x="198.7" y="208.4" width="2.2" height="20.3" fill="#202024"/>
<rect x="196" y="232.5" width="2.2" height="20.3" fill="#202024"/>
<rect x="196" y="242" width="2.2" height="10.8" fill="#1fbd22"/>
<rect x="198.7" y="232.5" width="2.2" height="20.3" fill="#202024"/>
<rect x="198.7" y="242" width="2.2" height="10.8" fill="#1fbd22"/>
<rect x="196" y="256.6" width="2.2" height="20.3" fill="#202024"/>
<rect x="196" y="258" width="2.2" height="4" fill="#d2301a"/>
<rect x="196" y="262" width="2.2" height="4.7" fill="#efe04c"/>
<rect x="196" y="266.7" width="2.2" height="10.2" fill="#1fbd22"/>
<rect x="198.7" y="256.6" width="2.2" height="20.3" fill="#202024"/>
<rect x="198.7" y="258" width="2.2" height="4" fill="#d2301a"/>
<rect x="198.7" y="262" width="2.2" height="4.7" fill="#efe04c"/>
<rect x="198.7" y="266.7" width="2.2" height="10.2" fill="#1fbd22"/>
<rect x="196.9" y="280.7" width="3.7" height="20.3" fill="#212125"/>
<rect x="196.9" y="288.6" width="3.7" height="1.9" fill="#efe04c" rx="0.6"/>
<rect x="196.9" y="290.5" width="3.7" height="10.5" fill="#1fbd22" rx="0.6"/>
<rect x="196.9" y="304.8" width="3.7" height="20.3" fill="#212125"/>
<rect x="196.9" y="312" width="3.7" height="3" fill="#efe04c" rx="0.6"/>
<rect x="196.9" y="315" width="3.7" height="10.1" fill="#1fbd22" rx="0.6"/>
<rect x="196.9" y="328.9" width="3.7" height="20.3" fill="#212125"/>
<rect x="196.9" y="338" width="3.7" height="1.5" fill="#efe04c" rx="0.6"/>
<rect x="196.9" y="339.5" width="3.7" height="9.7" fill="#1fbd22" rx="0.6"/>
<rect x="196.9" y="353" width="3.7" height="20.3" fill="#212125"/>
<rect x="196.9" y="366.5" width="3.7" height="6.8" fill="#1fbd22" rx="0.6"/>
<rect x="196.9" y="377.1" width="3.7" height="20.3" fill="#212125"/>
<rect x="196.9" y="385.3" width="3.7" height="2.5" fill="#efe04c" rx="0.6"/>
<rect x="196.9" y="387.8" width="3.7" height="9.6" fill="#1fbd22" rx="0.6"/>
<rect x="196.9" y="401.2" width="3.7" height="20.3" fill="#212125"/>
<rect x="196.9" y="412.7" width="3.7" height="8.8" fill="#1fbd22" rx="0.6"/>
<rect x="196" y="425.3" width="2.2" height="20.3" fill="#202024"/>
<rect x="198.7" y="425.3" width="2.2" height="20.3" fill="#202024"/>
<rect x="196.9" y="449.4" width="3.7" height="20.3" fill="#212125"/>
<rect x="196.9" y="461.7" width="3.7" height="8" fill="#1fbd22" rx="0.6"/>
<line x1="661.8" y1="190" x2="661.8" y2="468" stroke="#cc4636" stroke-width="0.9"/>
<path d="M659.3 187.6 h5 v2 l-2.5 2.6 l-2.5 -2.6z" fill="#ee4e3e"/>
<rect x="777.8" y="187.3" width="109.2" height="283.7" fill="#27272c"/>
<line x1="777.5" y1="187.3" x2="777.5" y2="471" stroke="#18181b" stroke-width="0.8"/>
<rect x="777.8" y="187.3" width="109.2" height="9.5" fill="#222227"/>
<line x1="777.8" y1="187.3" x2="887" y2="187.3" stroke="#18181b" stroke-width="0.6"/>
<text x="781" y="194.16" font-size="5.3" fill="#f2f2f4" font-weight="bold" textLength="14.4" lengthAdjust="spacingAndGlyphs">Mixer</text>
<circle cx="877.8" cy="192.3" r="0.55" fill="#8a8a90"/>
<circle cx="879.9" cy="192.3" r="0.55" fill="#8a8a90"/>
<circle cx="882" cy="192.3" r="0.55" fill="#8a8a90"/>
<rect x="777.8" y="196.8" width="28.6" height="274.2" fill="#29292e"/>
<text x="803.4" y="214.94" font-size="4.1" fill="#85858b" text-anchor="end">Input</text>
<text x="803.4" y="228.63" font-size="4.1" fill="#85858b" text-anchor="end">Track FX</text>
<text x="803.4" y="244.44" font-size="4.1" fill="#85858b" text-anchor="end">Order</text>
<text x="803.4" y="257.33" font-size="4.1" fill="#85858b" text-anchor="end">Effects</text>
<text x="803.4" y="281.13" font-size="4.1" fill="#85858b" text-anchor="end">Effects In</text>
<text x="803.4" y="292.94" font-size="4.1" fill="#85858b" text-anchor="end">Dynamics</text>
<text x="803.4" y="320.13" font-size="4.1" fill="#85858b" text-anchor="end">EQ</text>
<text x="803.4" y="336.04" font-size="4.1" fill="#85858b" text-anchor="end">Bus Sends</text>
<text x="803.4" y="346.13" font-size="4.1" fill="#85858b" text-anchor="end">Pan</text>
<rect x="806.7" y="196.8" width="26.9" height="274.2" fill="#222227"/>
<line x1="806.7" y1="196.8" x2="806.7" y2="471" stroke="#18181b" stroke-width="0.6"/>
<rect x="807" y="197.2" width="26.6" height="1" fill="#37855e"/>
<text x="820.15" y="205.38" font-size="4.5" fill="#ececee" font-weight="bold" text-anchor="middle">A5</text>
<line x1="806.7" y1="208.2" x2="833.6" y2="208.2" stroke="#1a1a1d" stroke-width="0.5"/>
<line x1="806.7" y1="219.5" x2="833.6" y2="219.5" stroke="#1a1a1d" stroke-width="0.5"/>
<line x1="806.7" y1="237.2" x2="833.6" y2="237.2" stroke="#1a1a1d" stroke-width="0.5"/>
<line x1="806.7" y1="248.3" x2="833.6" y2="248.3" stroke="#1a1a1d" stroke-width="0.5"/>
<line x1="806.7" y1="274.5" x2="833.6" y2="274.5" stroke="#1a1a1d" stroke-width="0.5"/>
<line x1="806.7" y1="285.3" x2="833.6" y2="285.3" stroke="#1a1a1d" stroke-width="0.5"/>
<line x1="806.7" y1="310.8" x2="833.6" y2="310.8" stroke="#1a1a1d" stroke-width="0.5"/>
<line x1="806.7" y1="329.6" x2="833.6" y2="329.6" stroke="#1a1a1d" stroke-width="0.5"/>
<line x1="806.7" y1="339.6" x2="833.6" y2="339.6" stroke="#1a1a1d" stroke-width="0.5"/>
<line x1="806.7" y1="350.6" x2="833.6" y2="350.6" stroke="#1a1a1d" stroke-width="0.5"/>
<rect x="808.9" y="210.2" width="22.5" height="6.5" fill="#1c1c20" rx="0.6" stroke="#34343a" stroke-width="0.4"/>
<text x="820.15" y="215" font-size="4.3" fill="#9a9aa0" text-anchor="middle">No Input</text>
<rect x="809.3" y="222" width="21.7" height="5.2" fill="#45454c" rx="0.5"/>
<text x="820.15" y="226.06" font-size="3.9" fill="#9a9aa0" text-anchor="middle" font-style="italic">Voice Iso</text>
<rect x="809.3" y="229.4" width="21.7" height="5.2" fill="#45454c" rx="0.5"/>
<text x="820.15" y="233.47" font-size="3.9" fill="#9a9aa0" text-anchor="middle" font-style="italic">Dial Lev</text>
<text x="810.5" y="244.44" font-size="4.1" fill="#d8a820" font-weight="bold" font-style="italic">FX</text>
<text x="817.1" y="244.44" font-size="4.1" fill="#a8c020" font-weight="bold" font-style="italic">DY</text>
<text x="823.9" y="244.44" font-size="4.1" fill="#20b8d8" font-weight="bold" font-style="italic">EQ</text>
<rect x="808.9" y="251" width="22.5" height="6.2" fill="#2c2c32" rx="0.5"/>
<text x="809.7" y="255.74" font-size="4.4" fill="#c8a83a">Limiter</text>
<rect x="808.9" y="258.4" width="22.5" height="6.2" fill="#2c2c32" rx="0.5"/>
<text x="809.7" y="263.14" font-size="4.4" fill="#c8a83a">FL EQ</text>
<rect x="808.9" y="265.8" width="22.5" height="6.2" fill="#1c1c20" rx="0.5"/>
<text x="820.15" y="270.3" font-size="4" fill="#8a8a90" text-anchor="middle">+</text>
<rect x="816.65" y="276.3" width="7" height="7" fill="#e0b424" rx="1"/>
<text x="820.15" y="280.88" font-size="2.8" fill="#fff4c0" font-weight="bold" text-anchor="middle">IN</text>
<rect x="809.5" y="288" width="21.3" height="19.4" fill="#26262b" rx="0.4"/>
<line x1="809.5" y1="292.85" x2="830.8" y2="292.85" stroke="#30303a" stroke-width="0.3"/>
<line x1="814.83" y1="288" x2="814.83" y2="307.4" stroke="#30303a" stroke-width="0.3"/>
<line x1="809.5" y1="297.7" x2="830.8" y2="297.7" stroke="#30303a" stroke-width="0.3"/>
<line x1="820.15" y1="288" x2="820.15" y2="307.4" stroke="#30303a" stroke-width="0.3"/>
<line x1="809.5" y1="302.55" x2="830.8" y2="302.55" stroke="#30303a" stroke-width="0.3"/>
<line x1="825.48" y1="288" x2="825.48" y2="307.4" stroke="#30303a" stroke-width="0.3"/>
<line x1="810.1" y1="306.6" x2="830" y2="289" stroke="#b4b440" stroke-width="0.95"/>
<rect x="809.5" y="314.5" width="21.3" height="11.6" fill="#26262b" rx="0.4"/>
<line x1="809.5" y1="321.3" x2="830.8" y2="321.3" stroke="#2aa8c4" stroke-width="0.8"/>
<text x="820.15" y="335.85" font-size="3" fill="#55555b" text-anchor="middle">+</text>
<rect x="809.5" y="340.6" width="21.3" height="8.6" fill="#1e1e22" rx="0.4"/>
<circle cx="820.15" cy="344" r="0.9" fill="#3a9ae8"/>
<rect x="807" y="351" width="26.6" height="14" fill="#26262b"/>
<text x="820.15" y="361.11" font-size="4.6" fill="#ececee" font-weight="bold" text-anchor="middle">Tom 1</text>
<rect x="809.25" y="366.3" width="6.6" height="6.6" fill="#3a3a40" rx="0.7"/>
<text x="812.55" y="371.03" font-size="3.8" fill="#77777d" font-weight="bold" text-anchor="middle">R</text>
<rect x="816.85" y="366.3" width="6.6" height="6.6" fill="#3a3a40" rx="0.7"/>
<text x="820.15" y="371.03" font-size="3.8" fill="#77777d" font-weight="bold" text-anchor="middle">S</text>
<rect x="824.45" y="366.3" width="6.6" height="6.6" fill="#3a3a40" rx="0.7"/>
<text x="827.75" y="371.03" font-size="3.8" fill="#77777d" font-weight="bold" text-anchor="middle">M</text>
<line x1="806.7" y1="375.3" x2="833.6" y2="375.3" stroke="#1a1a1d" stroke-width="0.5"/>
<path d="M816.95 380.6 q1.6 -2.6 3.2 0 q1.6 2.6 3.2 0" fill="none" stroke="#66666c" stroke-width="0.5"/>
<line x1="806.7" y1="386.2" x2="833.6" y2="386.2" stroke="#1a1a1d" stroke-width="0.5"/>
<text x="810.1" y="391.74" font-size="4.1" fill="#d8d8dc" font-weight="bold">0.0</text>
<line x1="813.5" y1="395" x2="813.5" y2="465" stroke="#151518" stroke-width="1.1"/>
<text x="822.3" y="397.92" font-size="3.2" fill="#74747a" text-anchor="end">0</text>
<text x="822.3" y="406.62" font-size="3.2" fill="#74747a" text-anchor="end">-5</text>
<text x="822.3" y="415.72" font-size="3.2" fill="#74747a" text-anchor="end">-10</text>
<text x="822.3" y="423.72" font-size="3.2" fill="#74747a" text-anchor="end">-15</text>
<text x="822.3" y="432.12" font-size="3.2" fill="#74747a" text-anchor="end">-20</text>
<text x="822.3" y="445.12" font-size="3.2" fill="#74747a" text-anchor="end">-30</text>
<text x="822.3" y="455.72" font-size="3.2" fill="#74747a" text-anchor="end">-40</text>
<text x="822.3" y="461.12" font-size="3.2" fill="#74747a" text-anchor="end">-50</text>
<line x1="809.3" y1="397" x2="810.3" y2="397" stroke="#3a3a40" stroke-width="0.3"/>
<line x1="809.3" y1="403" x2="810.3" y2="403" stroke="#3a3a40" stroke-width="0.3"/>
<line x1="809.3" y1="409" x2="810.3" y2="409" stroke="#3a3a40" stroke-width="0.3"/>
<line x1="809.3" y1="415" x2="810.3" y2="415" stroke="#3a3a40" stroke-width="0.3"/>
<line x1="809.3" y1="421" x2="810.3" y2="421" stroke="#3a3a40" stroke-width="0.3"/>
<line x1="809.3" y1="427" x2="810.3" y2="427" stroke="#3a3a40" stroke-width="0.3"/>
<line x1="809.3" y1="433" x2="810.3" y2="433" stroke="#3a3a40" stroke-width="0.3"/>
<line x1="809.3" y1="439" x2="810.3" y2="439" stroke="#3a3a40" stroke-width="0.3"/>
<line x1="809.3" y1="445" x2="810.3" y2="445" stroke="#3a3a40" stroke-width="0.3"/>
<line x1="809.3" y1="451" x2="810.3" y2="451" stroke="#3a3a40" stroke-width="0.3"/>
<line x1="809.3" y1="457" x2="810.3" y2="457" stroke="#3a3a40" stroke-width="0.3"/>
<line x1="809.3" y1="463" x2="810.3" y2="463" stroke="#3a3a40" stroke-width="0.3"/>
<rect x="811" y="410.6" width="5" height="8" fill="#b4b4b8" rx="0.7"/>
<rect x="811" y="410.6" width="5" height="3.8" fill="#dcdce0" rx="0.7"/>
<line x1="811" y1="414.6" x2="816" y2="414.6" stroke="#303036" stroke-width="0.6"/>
<line x1="809.3" y1="414.6" x2="810.6" y2="414.6" stroke="#d0d0d4" stroke-width="0.5"/>
<rect x="833.6" y="196.8" width="26.6" height="274.2" fill="#222227"/>
<line x1="833.6" y1="196.8" x2="833.6" y2="471" stroke="#18181b" stroke-width="0.6"/>
<rect x="833.9" y="197.2" width="26.3" height="1" fill="#37855e"/>
<text x="846.9" y="205.38" font-size="4.5" fill="#ececee" font-weight="bold" text-anchor="middle">A6</text>
<line x1="833.6" y1="208.2" x2="860.2" y2="208.2" stroke="#1a1a1d" stroke-width="0.5"/>
<line x1="833.6" y1="219.5" x2="860.2" y2="219.5" stroke="#1a1a1d" stroke-width="0.5"/>
<line x1="833.6" y1="237.2" x2="860.2" y2="237.2" stroke="#1a1a1d" stroke-width="0.5"/>
<line x1="833.6" y1="248.3" x2="860.2" y2="248.3" stroke="#1a1a1d" stroke-width="0.5"/>
<line x1="833.6" y1="274.5" x2="860.2" y2="274.5" stroke="#1a1a1d" stroke-width="0.5"/>
<line x1="833.6" y1="285.3" x2="860.2" y2="285.3" stroke="#1a1a1d" stroke-width="0.5"/>
<line x1="833.6" y1="310.8" x2="860.2" y2="310.8" stroke="#1a1a1d" stroke-width="0.5"/>
<line x1="833.6" y1="329.6" x2="860.2" y2="329.6" stroke="#1a1a1d" stroke-width="0.5"/>
<line x1="833.6" y1="339.6" x2="860.2" y2="339.6" stroke="#1a1a1d" stroke-width="0.5"/>
<line x1="833.6" y1="350.6" x2="860.2" y2="350.6" stroke="#1a1a1d" stroke-width="0.5"/>
<rect x="835.8" y="210.2" width="22.2" height="6.5" fill="#1c1c20" rx="0.6" stroke="#34343a" stroke-width="0.4"/>
<text x="846.9" y="215" font-size="4.3" fill="#9a9aa0" text-anchor="middle">No Input</text>
<rect x="836.2" y="222" width="21.4" height="5.2" fill="#45454c" rx="0.5"/>
<text x="846.9" y="226.06" font-size="3.9" fill="#9a9aa0" text-anchor="middle" font-style="italic">Voice Iso</text>
<rect x="836.2" y="229.4" width="21.4" height="5.2" fill="#45454c" rx="0.5"/>
<text x="846.9" y="233.47" font-size="3.9" fill="#9a9aa0" text-anchor="middle" font-style="italic">Dial Lev</text>
<text x="837.4" y="244.44" font-size="4.1" fill="#d8a820" font-weight="bold" font-style="italic">FX</text>
<text x="844" y="244.44" font-size="4.1" fill="#a8c020" font-weight="bold" font-style="italic">DY</text>
<text x="850.8" y="244.44" font-size="4.1" fill="#20b8d8" font-weight="bold" font-style="italic">EQ</text>
<rect x="835.8" y="251" width="22.2" height="6.2" fill="#2c2c32" rx="0.5"/>
<text x="836.6" y="255.74" font-size="4.4" fill="#c8a83a">Dialogu...</text>
<rect x="835.8" y="258.4" width="22.2" height="6.2" fill="#2c2c32" rx="0.5"/>
<text x="836.6" y="263.14" font-size="4.4" fill="#c8a83a">FL EQ</text>
<rect x="835.8" y="265.8" width="22.2" height="6.2" fill="#1c1c20" rx="0.5"/>
<text x="846.9" y="270.3" font-size="4" fill="#8a8a90" text-anchor="middle">+</text>
<rect x="843.4" y="276.3" width="7" height="7" fill="#e0b424" rx="1"/>
<text x="846.9" y="280.88" font-size="2.8" fill="#fff4c0" font-weight="bold" text-anchor="middle">IN</text>
<rect x="836.4" y="288" width="21" height="19.4" fill="#26262b" rx="0.4"/>
<line x1="836.4" y1="292.85" x2="857.4" y2="292.85" stroke="#30303a" stroke-width="0.3"/>
<line x1="841.65" y1="288" x2="841.65" y2="307.4" stroke="#30303a" stroke-width="0.3"/>
<line x1="836.4" y1="297.7" x2="857.4" y2="297.7" stroke="#30303a" stroke-width="0.3"/>
<line x1="846.9" y1="288" x2="846.9" y2="307.4" stroke="#30303a" stroke-width="0.3"/>
<line x1="836.4" y1="302.55" x2="857.4" y2="302.55" stroke="#30303a" stroke-width="0.3"/>
<line x1="852.15" y1="288" x2="852.15" y2="307.4" stroke="#30303a" stroke-width="0.3"/>
<line x1="837" y1="306.6" x2="856.6" y2="289" stroke="#b4b440" stroke-width="0.95"/>
<rect x="836.4" y="314.5" width="21" height="11.6" fill="#26262b" rx="0.4"/>
<line x1="836.4" y1="321.3" x2="857.4" y2="321.3" stroke="#2aa8c4" stroke-width="0.8"/>
<text x="846.9" y="335.85" font-size="3" fill="#55555b" text-anchor="middle">+</text>
<rect x="836.4" y="340.6" width="21" height="8.6" fill="#1e1e22" rx="0.4"/>
<circle cx="846.9" cy="344" r="0.9" fill="#3a9ae8"/>
<rect x="833.9" y="351" width="26.3" height="14" fill="#26262b"/>
<text x="846.9" y="361.11" font-size="4.6" fill="#ececee" font-weight="bold" text-anchor="middle">Snare</text>
<rect x="836" y="366.3" width="6.6" height="6.6" fill="#3a3a40" rx="0.7"/>
<text x="839.3" y="371.03" font-size="3.8" fill="#77777d" font-weight="bold" text-anchor="middle">R</text>
<rect x="843.6" y="366.3" width="6.6" height="6.6" fill="#3a3a40" rx="0.7"/>
<text x="846.9" y="371.03" font-size="3.8" fill="#77777d" font-weight="bold" text-anchor="middle">S</text>
<rect x="851.2" y="366.3" width="6.6" height="6.6" fill="#3a3a40" rx="0.7"/>
<text x="854.5" y="371.03" font-size="3.8" fill="#77777d" font-weight="bold" text-anchor="middle">M</text>
<line x1="833.6" y1="375.3" x2="860.2" y2="375.3" stroke="#1a1a1d" stroke-width="0.5"/>
<path d="M843.7 380.6 q1.6 -2.6 3.2 0 q1.6 2.6 3.2 0" fill="none" stroke="#66666c" stroke-width="0.5"/>
<line x1="833.6" y1="386.2" x2="860.2" y2="386.2" stroke="#1a1a1d" stroke-width="0.5"/>
<text x="837" y="391.74" font-size="4.1" fill="#d8d8dc" font-weight="bold">0.0</text>
<line x1="840.4" y1="395" x2="840.4" y2="465" stroke="#151518" stroke-width="1.1"/>
<text x="849.2" y="397.92" font-size="3.2" fill="#74747a" text-anchor="end">0</text>
<text x="849.2" y="406.62" font-size="3.2" fill="#74747a" text-anchor="end">-5</text>
<text x="849.2" y="415.72" font-size="3.2" fill="#74747a" text-anchor="end">-10</text>
<text x="849.2" y="423.72" font-size="3.2" fill="#74747a" text-anchor="end">-15</text>
<text x="849.2" y="432.12" font-size="3.2" fill="#74747a" text-anchor="end">-20</text>
<text x="849.2" y="445.12" font-size="3.2" fill="#74747a" text-anchor="end">-30</text>
<text x="849.2" y="455.72" font-size="3.2" fill="#74747a" text-anchor="end">-40</text>
<text x="849.2" y="461.12" font-size="3.2" fill="#74747a" text-anchor="end">-50</text>
<line x1="836.2" y1="397" x2="837.2" y2="397" stroke="#3a3a40" stroke-width="0.3"/>
<line x1="836.2" y1="403" x2="837.2" y2="403" stroke="#3a3a40" stroke-width="0.3"/>
<line x1="836.2" y1="409" x2="837.2" y2="409" stroke="#3a3a40" stroke-width="0.3"/>
<line x1="836.2" y1="415" x2="837.2" y2="415" stroke="#3a3a40" stroke-width="0.3"/>
<line x1="836.2" y1="421" x2="837.2" y2="421" stroke="#3a3a40" stroke-width="0.3"/>
<line x1="836.2" y1="427" x2="837.2" y2="427" stroke="#3a3a40" stroke-width="0.3"/>
<line x1="836.2" y1="433" x2="837.2" y2="433" stroke="#3a3a40" stroke-width="0.3"/>
<line x1="836.2" y1="439" x2="837.2" y2="439" stroke="#3a3a40" stroke-width="0.3"/>
<line x1="836.2" y1="445" x2="837.2" y2="445" stroke="#3a3a40" stroke-width="0.3"/>
<line x1="836.2" y1="451" x2="837.2" y2="451" stroke="#3a3a40" stroke-width="0.3"/>
<line x1="836.2" y1="457" x2="837.2" y2="457" stroke="#3a3a40" stroke-width="0.3"/>
<line x1="836.2" y1="463" x2="837.2" y2="463" stroke="#3a3a40" stroke-width="0.3"/>
<rect x="837.9" y="410.6" width="5" height="8" fill="#b4b4b8" rx="0.7"/>
<rect x="837.9" y="410.6" width="5" height="3.8" fill="#dcdce0" rx="0.7"/>
<line x1="837.9" y1="414.6" x2="842.9" y2="414.6" stroke="#303036" stroke-width="0.6"/>
<line x1="836.2" y1="414.6" x2="837.5" y2="414.6" stroke="#d0d0d4" stroke-width="0.5"/>
<rect x="860.2" y="196.8" width="26.8" height="274.2" fill="#222227"/>
<line x1="860.2" y1="196.8" x2="860.2" y2="471" stroke="#18181b" stroke-width="0.6"/>
<rect x="860.5" y="197.2" width="26.5" height="1" fill="#2a6f96"/>
<text x="873.6" y="205.38" font-size="4.5" fill="#ececee" font-weight="bold" text-anchor="middle">Bus1</text>
<line x1="860.2" y1="208.2" x2="887" y2="208.2" stroke="#1a1a1d" stroke-width="0.5"/>
<line x1="860.2" y1="219.5" x2="887" y2="219.5" stroke="#1a1a1d" stroke-width="0.5"/>
<line x1="860.2" y1="237.2" x2="887" y2="237.2" stroke="#1a1a1d" stroke-width="0.5"/>
<line x1="860.2" y1="248.3" x2="887" y2="248.3" stroke="#1a1a1d" stroke-width="0.5"/>
<line x1="860.2" y1="274.5" x2="887" y2="274.5" stroke="#1a1a1d" stroke-width="0.5"/>
<line x1="860.2" y1="285.3" x2="887" y2="285.3" stroke="#1a1a1d" stroke-width="0.5"/>
<line x1="860.2" y1="310.8" x2="887" y2="310.8" stroke="#1a1a1d" stroke-width="0.5"/>
<line x1="860.2" y1="329.6" x2="887" y2="329.6" stroke="#1a1a1d" stroke-width="0.5"/>
<line x1="860.2" y1="339.6" x2="887" y2="339.6" stroke="#1a1a1d" stroke-width="0.5"/>
<line x1="860.2" y1="350.6" x2="887" y2="350.6" stroke="#1a1a1d" stroke-width="0.5"/>
<rect x="862.4" y="210.2" width="22.4" height="6.5" fill="#1c1c20" rx="0.6" stroke="#34343a" stroke-width="0.4"/>
<rect x="862.4" y="251" width="22.4" height="6.2" fill="#2c2c32" rx="0.5"/>
<text x="863.2" y="255.74" font-size="4.4" fill="#c8a83a">Multiba...</text>
<rect x="862.4" y="258.4" width="22.4" height="6.2" fill="#2c2c32" rx="0.5"/>
<text x="863.2" y="263.14" font-size="4.4" fill="#c8a83a">FL EQ</text>
<rect x="862.4" y="265.8" width="22.4" height="6.2" fill="#1c1c20" rx="0.5"/>
<text x="873.6" y="270.3" font-size="4" fill="#8a8a90" text-anchor="middle">+</text>
<rect x="870.1" y="276.3" width="7" height="7" fill="#e0b424" rx="1"/>
<text x="873.6" y="280.88" font-size="2.8" fill="#fff4c0" font-weight="bold" text-anchor="middle">IN</text>
<rect x="863" y="288" width="21.2" height="19.4" fill="#26262b" rx="0.4"/>
<line x1="863" y1="292.85" x2="884.2" y2="292.85" stroke="#30303a" stroke-width="0.3"/>
<line x1="868.3" y1="288" x2="868.3" y2="307.4" stroke="#30303a" stroke-width="0.3"/>
<line x1="863" y1="297.7" x2="884.2" y2="297.7" stroke="#30303a" stroke-width="0.3"/>
<line x1="873.6" y1="288" x2="873.6" y2="307.4" stroke="#30303a" stroke-width="0.3"/>
<line x1="863" y1="302.55" x2="884.2" y2="302.55" stroke="#30303a" stroke-width="0.3"/>
<line x1="878.9" y1="288" x2="878.9" y2="307.4" stroke="#30303a" stroke-width="0.3"/>
<line x1="863.6" y1="306.6" x2="883.4" y2="289" stroke="#b4b440" stroke-width="0.95"/>
<rect x="863" y="314.5" width="21.2" height="11.6" fill="#26262b" rx="0.4"/>
<line x1="863" y1="321.3" x2="884.2" y2="321.3" stroke="#2aa8c4" stroke-width="0.8"/>
<text x="873.6" y="335.85" font-size="3" fill="#55555b" text-anchor="middle">+</text>
<rect x="860.5" y="351" width="26.5" height="14" fill="#26262b"/>
<text x="873.6" y="361.11" font-size="4.6" fill="#ececee" font-weight="bold" text-anchor="middle">Bus 1</text>
<rect x="870.3" y="366.3" width="6.6" height="6.6" fill="#3a3a40" rx="0.7"/>
<text x="873.6" y="371.03" font-size="3.8" fill="#77777d" font-weight="bold" text-anchor="middle">M</text>
<line x1="860.2" y1="375.3" x2="887" y2="375.3" stroke="#1a1a1d" stroke-width="0.5"/>
<path d="M870.4 380.6 q1.6 -2.6 3.2 0 q1.6 2.6 3.2 0" fill="none" stroke="#66666c" stroke-width="0.5"/>
<line x1="860.2" y1="386.2" x2="887" y2="386.2" stroke="#1a1a1d" stroke-width="0.5"/>
<text x="863.6" y="391.74" font-size="4.1" fill="#d8d8dc" font-weight="bold">-4.2</text>
<line x1="867" y1="395" x2="867" y2="465" stroke="#151518" stroke-width="1.1"/>
<text x="875.8" y="397.92" font-size="3.2" fill="#74747a" text-anchor="end">0</text>
<text x="875.8" y="406.62" font-size="3.2" fill="#74747a" text-anchor="end">-5</text>
<text x="875.8" y="415.72" font-size="3.2" fill="#74747a" text-anchor="end">-10</text>
<text x="875.8" y="423.72" font-size="3.2" fill="#74747a" text-anchor="end">-15</text>
<text x="875.8" y="432.12" font-size="3.2" fill="#74747a" text-anchor="end">-20</text>
<text x="875.8" y="445.12" font-size="3.2" fill="#74747a" text-anchor="end">-30</text>
<text x="875.8" y="455.72" font-size="3.2" fill="#74747a" text-anchor="end">-40</text>
<text x="875.8" y="461.12" font-size="3.2" fill="#74747a" text-anchor="end">-50</text>
<line x1="862.8" y1="397" x2="863.8" y2="397" stroke="#3a3a40" stroke-width="0.3"/>
<line x1="862.8" y1="403" x2="863.8" y2="403" stroke="#3a3a40" stroke-width="0.3"/>
<line x1="862.8" y1="409" x2="863.8" y2="409" stroke="#3a3a40" stroke-width="0.3"/>
<line x1="862.8" y1="415" x2="863.8" y2="415" stroke="#3a3a40" stroke-width="0.3"/>
<line x1="862.8" y1="421" x2="863.8" y2="421" stroke="#3a3a40" stroke-width="0.3"/>
<line x1="862.8" y1="427" x2="863.8" y2="427" stroke="#3a3a40" stroke-width="0.3"/>
<line x1="862.8" y1="433" x2="863.8" y2="433" stroke="#3a3a40" stroke-width="0.3"/>
<line x1="862.8" y1="439" x2="863.8" y2="439" stroke="#3a3a40" stroke-width="0.3"/>
<line x1="862.8" y1="445" x2="863.8" y2="445" stroke="#3a3a40" stroke-width="0.3"/>
<line x1="862.8" y1="451" x2="863.8" y2="451" stroke="#3a3a40" stroke-width="0.3"/>
<line x1="862.8" y1="457" x2="863.8" y2="457" stroke="#3a3a40" stroke-width="0.3"/>
<line x1="862.8" y1="463" x2="863.8" y2="463" stroke="#3a3a40" stroke-width="0.3"/>
<rect x="864.5" y="422" width="5" height="8" fill="#9c9ca2" rx="0.7"/>
<rect x="864.5" y="422" width="5" height="3.8" fill="#c0c0c4" rx="0.7"/>
<line x1="864.5" y1="426" x2="869.5" y2="426" stroke="#303036" stroke-width="0.6"/>
<line x1="862.8" y1="426" x2="864.1" y2="426" stroke="#d0d0d4" stroke-width="0.5"/>
<rect x="824.7" y="393.4" width="4.8" height="71.8" fill="#1b1b1f"/>
<rect x="824.9" y="421.4" width="4.4" height="7.3" fill="#efe04c"/>
<rect x="824.9" y="428.7" width="4.4" height="36.3" fill="#1fbd22"/>
<rect x="851.4" y="393.4" width="4.7" height="71.8" fill="#1b1b1f"/>
<rect x="851.6" y="418" width="4.3" height="10" fill="#efe04c"/>
<rect x="851.6" y="428" width="4.3" height="37" fill="#1fbd22"/>
<rect x="877.7" y="393.4" width="8.5" height="71.8" fill="#1b1b1f"/>
<rect x="877.9" y="406.3" width="3.8" height="8.2" fill="#efe04c"/>
<rect x="877.9" y="414.5" width="3.8" height="50.5" fill="#1fbd22"/>
<rect x="882.2" y="406.3" width="3.8" height="8.2" fill="#efe04c"/>
<rect x="882.2" y="414.5" width="3.8" height="50.5" fill="#1fbd22"/>
<rect x="806.7" y="466.4" width="80.3" height="4.6" fill="#1e1e22"/>
<rect x="810" y="468.2" width="12.6" height="1.6" fill="#6b6b71" rx="0.8"/>
<defs><radialGradient id="kg" cx="0.4" cy="0.35" r="0.75"><stop offset="0" stop-color="#b8b8bc"/><stop offset="0.65" stop-color="#929298"/><stop offset="1" stop-color="#606066"/></radialGradient>
<clipPath id="gc"><rect x="277.3" y="176.6" width="209.2" height="82.6"/></clipPath></defs>
<rect x="229.5" y="119" width="305" height="309.6" fill="#000" rx="1" opacity="0.25"/>
<rect x="231" y="120" width="302" height="306.6" fill="#2b2b31"/>
<rect x="231" y="120" width="302" height="11.6" fill="#222227"/>
<path d="M235.6 124.7 l2.4 2.4 m0 -2.4 l-2.4 2.4" fill="none" stroke="#8a8a90" stroke-width="0.5"/>
<text x="364.4" y="127.66" font-size="5.3" fill="#f2f2f4" font-weight="bold" text-anchor="middle" textLength="34" lengthAdjust="spacingAndGlyphs">Tom 1 - Slot 2</text>
<line x1="503.4" y1="120.5" x2="503.4" y2="131.4" stroke="#303036" stroke-width="0.5"/>
<line x1="517.6" y1="120.5" x2="517.6" y2="131.4" stroke="#303036" stroke-width="0.5"/>
<circle cx="510.3" cy="125.8" r="1.9" fill="none" stroke="#77777d" stroke-width="0.45"/>
<path d="M510.3 124.8 v1.2 h1" fill="none" stroke="#77777d" stroke-width="0.4"/>
<circle cx="523.3" cy="125.8" r="0.55" fill="#8a8a90"/>
<circle cx="525.4" cy="125.8" r="0.55" fill="#8a8a90"/>
<circle cx="527.5" cy="125.8" r="0.55" fill="#8a8a90"/>
<rect x="231" y="131.6" width="302" height="12.4" fill="#28282d"/>
<line x1="231" y1="131.6" x2="533" y2="131.6" stroke="#1a1a1d" stroke-width="0.5"/>
<line x1="231" y1="144" x2="533" y2="144" stroke="#1a1a1d" stroke-width="0.5"/>
<rect x="233.8" y="133.6" width="9" height="8.4" fill="#222227" rx="0.8" stroke="#3a3a40" stroke-width="0.4"/>
<text x="238.3" y="139.65" font-size="5" fill="#8a8a90" text-anchor="middle">+</text>
<rect x="245.4" y="133.6" width="70.2" height="8.4" fill="#232328" rx="0.8" stroke="#34343a" stroke-width="0.4"/>
<text x="249.3" y="139.59" font-size="5.1" fill="#77777d" textLength="18.4" lengthAdjust="spacingAndGlyphs">Default*</text>
<path d="M310.8 137.2 l1.6 1.6 l1.6 -1.6" fill="none" stroke="#77777d" stroke-width="0.5"/>
<path d="M323.4 136 l-1.7 1.8 l1.7 1.8 M329.2 136 l1.7 1.8 l-1.7 1.8" fill="none" stroke="#77777d" stroke-width="0.5"/>
<line x1="336" y1="133.5" x2="336" y2="142" stroke="#34343a" stroke-width="0.5"/>
<rect x="341" y="133.6" width="24.4" height="8.4" fill="#1e1e22" rx="0.8" stroke="#34343a" stroke-width="0.4"/>
<rect x="341.6" y="134.2" width="6.6" height="7.2" fill="#3a2422" rx="0.6"/>
<text x="344.9" y="139.44" font-size="4.4" fill="#e8483a" font-weight="bold" text-anchor="middle">A</text>
<text x="352.9" y="139.3" font-size="4" fill="#77777d" text-anchor="middle">+</text>
<text x="360.7" y="139.44" font-size="4.4" fill="#8a8a90" font-weight="bold" text-anchor="middle">B</text>
<line x1="349.3" y1="134" x2="349.3" y2="141.6" stroke="#34343a" stroke-width="0.4"/>
<line x1="356.6" y1="134" x2="356.6" y2="141.6" stroke="#34343a" stroke-width="0.4"/>
<path d="M520.2 136 q1.5 -1.6 3 0.8 q1.6 2.6 3.2 0.8" fill="none" stroke="#dc564a" stroke-width="1.1"/>
<rect x="238.8" y="150.4" width="9.2" height="5.2" fill="#1c1c20" rx="2.6"/>
<circle cx="245.3" cy="153" r="1.9" fill="#ea5650"/>
<text x="251.8" y="154.72" font-size="4.9" fill="#f0f0f2" font-weight="bold" textLength="28.5" lengthAdjust="spacingAndGlyphs">Fairlight EQ</text>
<text x="240.9" y="167.2" font-size="4.3" fill="#e2e2e6" font-weight="bold" textLength="11" lengthAdjust="spacingAndGlyphs">Input</text>
<text x="511.2" y="167.2" font-size="4.3" fill="#e2e2e6" font-weight="bold" textLength="14.4" lengthAdjust="spacingAndGlyphs">Output</text>
<rect x="264.2" y="163.5" width="234.8" height="108.3" fill="#1f1f24" rx="1.2"/>
<rect x="277.3" y="176.6" width="209.2" height="82.6" fill="#222227" stroke="#3a3a42" stroke-width="0.5"/>
<line x1="277.3" y1="176.6" x2="277.3" y2="259.2" stroke="#303037" stroke-width="0.4"/>
<line x1="291" y1="176.6" x2="291" y2="259.2" stroke="#303037" stroke-width="0.4"/>
<line x1="306.8" y1="176.6" x2="306.8" y2="259.2" stroke="#303037" stroke-width="0.4"/>
<line x1="316" y1="176.6" x2="316" y2="259.2" stroke="#303037" stroke-width="0.4"/>
<line x1="327" y1="176.6" x2="327" y2="259.2" stroke="#303037" stroke-width="0.4"/>
<line x1="337.5" y1="176.6" x2="337.5" y2="259.2" stroke="#303037" stroke-width="0.4"/>
<line x1="348.2" y1="176.6" x2="348.2" y2="259.2" stroke="#303037" stroke-width="0.4"/>
<line x1="358.5" y1="176.6" x2="358.5" y2="259.2" stroke="#303037" stroke-width="0.4"/>
<line x1="369" y1="176.6" x2="369" y2="259.2" stroke="#303037" stroke-width="0.4"/>
<line x1="379.5" y1="176.6" x2="379.5" y2="259.2" stroke="#303037" stroke-width="0.4"/>
<line x1="390.1" y1="176.6" x2="390.1" y2="259.2" stroke="#303037" stroke-width="0.4"/>
<line x1="401.8" y1="176.6" x2="401.8" y2="259.2" stroke="#303037" stroke-width="0.4"/>
<line x1="413.5" y1="176.6" x2="413.5" y2="259.2" stroke="#303037" stroke-width="0.4"/>
<line x1="424.4" y1="176.6" x2="424.4" y2="259.2" stroke="#303037" stroke-width="0.4"/>
<line x1="435.2" y1="176.6" x2="435.2" y2="259.2" stroke="#303037" stroke-width="0.4"/>
<line x1="445.6" y1="176.6" x2="445.6" y2="259.2" stroke="#303037" stroke-width="0.4"/>
<line x1="456" y1="176.6" x2="456" y2="259.2" stroke="#303037" stroke-width="0.4"/>
<line x1="467" y1="176.6" x2="467" y2="259.2" stroke="#303037" stroke-width="0.4"/>
<line x1="477.8" y1="176.6" x2="477.8" y2="259.2" stroke="#303037" stroke-width="0.4"/>
<line x1="486.5" y1="176.6" x2="486.5" y2="259.2" stroke="#303037" stroke-width="0.4"/>
<line x1="277.3" y1="176.6" x2="486.5" y2="176.6" stroke="#303037" stroke-width="0.4"/>
<line x1="277.3" y1="186.7" x2="486.5" y2="186.7" stroke="#303037" stroke-width="0.4"/>
<line x1="277.3" y1="196.8" x2="486.5" y2="196.8" stroke="#303037" stroke-width="0.4"/>
<line x1="277.3" y1="207" x2="486.5" y2="207" stroke="#303037" stroke-width="0.4"/>
<line x1="277.3" y1="217.3" x2="486.5" y2="217.3" stroke="#303037" stroke-width="0.4"/>
<line x1="277.3" y1="227.8" x2="486.5" y2="227.8" stroke="#303037" stroke-width="0.4"/>
<line x1="277.3" y1="238.2" x2="486.5" y2="238.2" stroke="#303037" stroke-width="0.4"/>
<line x1="277.3" y1="248.6" x2="486.5" y2="248.6" stroke="#303037" stroke-width="0.4"/>
<line x1="277.3" y1="259.2" x2="486.5" y2="259.2" stroke="#303037" stroke-width="0.4"/>
<line x1="277.3" y1="217.3" x2="486.5" y2="217.3" stroke="#44444c" stroke-width="0.5"/>
<text x="274.8" y="177.72" font-size="3.2" fill="#707076" text-anchor="end">20</text>
<text x="274.8" y="197.92" font-size="3.2" fill="#707076" text-anchor="end">10</text>
<text x="274.8" y="218.42" font-size="3.2" fill="#707076" text-anchor="end">0dB</text>
<text x="274.8" y="239.32" font-size="3.2" fill="#707076" text-anchor="end">-10</text>
<text x="274.8" y="260.32" font-size="3.2" fill="#707076" text-anchor="end">-20</text>
<text x="306.8" y="265.92" font-size="3.2" fill="#707076" text-anchor="middle">30Hz</text>
<text x="327" y="265.92" font-size="3.2" fill="#707076" text-anchor="middle">100</text>
<text x="348.2" y="265.92" font-size="3.2" fill="#707076" text-anchor="middle">200</text>
<text x="369" y="265.92" font-size="3.2" fill="#707076" text-anchor="middle">400</text>
<text x="390.1" y="265.92" font-size="3.2" fill="#707076" text-anchor="middle">800</text>
<text x="413.5" y="265.92" font-size="3.2" fill="#707076" text-anchor="middle">1.60k</text>
<text x="435.2" y="265.92" font-size="3.2" fill="#707076" text-anchor="middle">3.20k</text>
<text x="456" y="265.92" font-size="3.2" fill="#707076" text-anchor="middle">6.40k</text>
<text x="477.8" y="265.92" font-size="3.2" fill="#707076" text-anchor="middle">12.80k</text>
<path d="M277.3 255.4 L278.9 253.54 L280.5 251.69 L282.1 249.84 L283.7 248.01 L285.3 246.19 L286.9 244.39 L288.5 242.61 L290.1 240.85 L291.7 239.13 L293.3 237.43 L294.9 235.78 L296.5 234.18 L298.1 232.63 L299.7 231.15 L301.3 229.74 L302.9 228.41 L304.5 227.17 L306.1 226.02 L307.7 224.96 L309.3 224.01 L310.9 223.16 L312.5 222.4 L314.1 221.74 L315.7 221.16 L317.3 220.67 L318.9 220.25 L320.5 219.89 L322.1 219.59 L323.7 219.35 L325.3 219.14 L326.9 218.97 L328.5 218.83 L330.1 218.71 L331.7 218.62 L333.3 218.54 L334.9 218.47 L336.5 218.42 L338.1 218.38 L339.7 218.35 L341.3 218.32 L342.9 218.3 L344.5 218.29 L346.1 218.28 L347.7 218.27 L349.3 218.27 L350.9 218.27 L352.5 218.29 L354.1 218.31 L355.7 218.34 L357.3 218.4 L358.9 218.47 L360.5 218.57 L362.1 218.71 L363.7 218.89 L365.3 219.13 L366.9 219.44 L368.5 219.82 L370.1 220.26 L371.7 220.77 L373.3 221.27 L374.9 221.38 L376.5 220.9 L378.1 220.38 L379.7 219.92 L381.3 219.52 L382.9 219.2 L384.5 218.95 L386.1 218.75 L387.7 218.6 L389.3 218.49 L390.9 218.41 L392.5 218.36 L394.1 218.32 L395.7 218.3 L397.3 218.3 L398.9 218.31 L400.5 218.33 L402.1 218.37 L403.7 218.43 L405.3 218.51 L406.9 218.63 L408.5 218.79 L410.1 219 L411.7 219.27 L413.3 219.62 L414.9 220.07 L416.5 220.61 L418.1 221.27 L419.7 222.01 L421.3 222.82 L422.9 223.56 L424.5 223.31 L426.1 222.52 L427.7 221.73 L429.3 221.02 L430.9 220.41 L432.5 219.91 L434.1 219.5 L435.7 219.19 L437.3 218.94 L438.9 218.76 L440.5 218.63 L442.1 218.54 L443.7 218.47 L445.3 218.43 L446.9 218.41 L448.5 218.41 L450.1 218.42 L451.7 218.45 L453.3 218.49 L454.9 218.54 L456.5 218.6 L458.1 218.68 L459.7 218.78 L461.3 218.9 L462.9 219.05 L464.5 219.22 L466.1 219.43 L467.7 219.68 L469.3 219.97 L470.9 220.3 L472.5 220.7 L474.1 221.15 L475.7 221.66 L477.3 222.23 L478.9 222.87 L480.5 223.55 L482.1 224.29 L483.7 225.06 L485.3 225.85 L486.5 226.45 L486.5 217.3 L277.3 217.3 Z" fill="#1d4a58" opacity="0.92" clip-path="url(#gc)"/>
<path d="M277.3 255.4 L278.9 253.54 L280.5 251.69 L282.1 249.84 L283.7 248.01 L285.3 246.19 L286.9 244.39 L288.5 242.61 L290.1 240.85 L291.7 239.13 L293.3 237.43 L294.9 235.78 L296.5 234.18 L298.1 232.63 L299.7 231.15 L301.3 229.74 L302.9 228.41 L304.5 227.17 L306.1 226.02 L307.7 224.96 L309.3 224.01 L310.9 223.16 L312.5 222.4 L314.1 221.74 L315.7 221.16 L317.3 220.67 L318.9 220.25 L320.5 219.89 L322.1 219.59 L323.7 219.35 L325.3 219.14 L326.9 218.97 L328.5 218.83 L330.1 218.71 L331.7 218.62 L333.3 218.54 L334.9 218.47 L336.5 218.42 L338.1 218.38 L339.7 218.35 L341.3 218.32 L342.9 218.3 L344.5 218.29 L346.1 218.28 L347.7 218.27 L349.3 218.27 L350.9 218.27 L352.5 218.29 L354.1 218.31 L355.7 218.34 L357.3 218.4 L358.9 218.47 L360.5 218.57 L362.1 218.71 L363.7 218.89 L365.3 219.13 L366.9 219.44 L368.5 219.82 L370.1 220.26 L371.7 220.77 L373.3 221.27 L374.9 221.38 L376.5 220.9 L378.1 220.38 L379.7 219.92 L381.3 219.52 L382.9 219.2 L384.5 218.95 L386.1 218.75 L387.7 218.6 L389.3 218.49 L390.9 218.41 L392.5 218.36 L394.1 218.32 L395.7 218.3 L397.3 218.3 L398.9 218.31 L400.5 218.33 L402.1 218.37 L403.7 218.43 L405.3 218.51 L406.9 218.63 L408.5 218.79 L410.1 219 L411.7 219.27 L413.3 219.62 L414.9 220.07 L416.5 220.61 L418.1 221.27 L419.7 222.01 L421.3 222.82 L422.9 223.56 L424.5 223.31 L426.1 222.52 L427.7 221.73 L429.3 221.02 L430.9 220.41 L432.5 219.91 L434.1 219.5 L435.7 219.19 L437.3 218.94 L438.9 218.76 L440.5 218.63 L442.1 218.54 L443.7 218.47 L445.3 218.43 L446.9 218.41 L448.5 218.41 L450.1 218.42 L451.7 218.45 L453.3 218.49 L454.9 218.54 L456.5 218.6 L458.1 218.68 L459.7 218.78 L461.3 218.9 L462.9 219.05 L464.5 219.22 L466.1 219.43 L467.7 219.68 L469.3 219.97 L470.9 220.3 L472.5 220.7 L474.1 221.15 L475.7 221.66 L477.3 222.23 L478.9 222.87 L480.5 223.55 L482.1 224.29 L483.7 225.06 L485.3 225.85 L486.5 226.45" fill="none" stroke="#3fb0c6" stroke-width="0.9" clip-path="url(#gc)" stroke-linejoin="round"/>
<circle cx="301.2" cy="244.7" r="1.9" fill="#1f3f4a" stroke="#4ac0d8" stroke-width="0.5"/>
<text x="301.2" y="245.54" font-size="2.4" fill="#9ae0f0" text-anchor="middle">1</text>
<circle cx="320.5" cy="226" r="1.9" fill="#1f3f4a" stroke="#4ac0d8" stroke-width="0.5"/>
<text x="320.5" y="226.84" font-size="2.4" fill="#9ae0f0" text-anchor="middle">2</text>
<circle cx="374.3" cy="221.7" r="1.9" fill="#1f3f4a" stroke="#4ac0d8" stroke-width="0.5"/>
<text x="374.3" y="222.54" font-size="2.4" fill="#9ae0f0" text-anchor="middle">3</text>
<circle cx="423.4" cy="223.9" r="1.9" fill="#1f3f4a" stroke="#4ac0d8" stroke-width="0.5"/>
<text x="423.4" y="224.74" font-size="2.4" fill="#9ae0f0" text-anchor="middle">4</text>
<circle cx="471" cy="226" r="1.9" fill="#1f3f4a" stroke="#4ac0d8" stroke-width="0.5"/>
<text x="471" y="226.84" font-size="2.4" fill="#9ae0f0" text-anchor="middle">5</text>
<rect x="245.8" y="177.5" width="4" height="93.3" fill="#202024"/>
<rect x="246" y="224.8" width="3.6" height="46" fill="#1fbd22"/>
<line x1="245.8" y1="211.7" x2="249.8" y2="211.7" stroke="#c8b440" stroke-width="0.8"/>
<text x="243.6" y="179.12" font-size="3.2" fill="#77777d" text-anchor="end">0</text>
<text x="243.6" y="191.12" font-size="3.2" fill="#77777d" text-anchor="end">-5</text>
<text x="243.6" y="202.92" font-size="3.2" fill="#77777d" text-anchor="end">-10</text>
<text x="243.6" y="213.82" font-size="3.2" fill="#77777d" text-anchor="end">-15</text>
<text x="243.6" y="225.92" font-size="3.2" fill="#77777d" text-anchor="end">-20</text>
<text x="243.6" y="244.52" font-size="3.2" fill="#77777d" text-anchor="end">-30</text>
<text x="243.6" y="257.92" font-size="3.2" fill="#77777d" text-anchor="end">-40</text>
<text x="243.6" y="265.12" font-size="3.2" fill="#77777d" text-anchor="end">-50</text>
<rect x="517.8" y="177.5" width="4.2" height="93.3" fill="#202024"/>
<rect x="518" y="222.6" width="3.8" height="48.2" fill="#1fbd22"/>
<line x1="517.8" y1="210.3" x2="522" y2="210.3" stroke="#c8b440" stroke-width="0.8"/>
<text x="515.8" y="179.12" font-size="3.2" fill="#77777d" text-anchor="end">0</text>
<text x="515.8" y="191.12" font-size="3.2" fill="#77777d" text-anchor="end">-5</text>
<text x="515.8" y="202.92" font-size="3.2" fill="#77777d" text-anchor="end">-10</text>
<text x="515.8" y="213.82" font-size="3.2" fill="#77777d" text-anchor="end">-15</text>
<text x="515.8" y="225.92" font-size="3.2" fill="#77777d" text-anchor="end">-20</text>
<text x="515.8" y="244.52" font-size="3.2" fill="#77777d" text-anchor="end">-30</text>
<text x="515.8" y="257.92" font-size="3.2" fill="#77777d" text-anchor="end">-40</text>
<text x="515.8" y="265.12" font-size="3.2" fill="#77777d" text-anchor="end">-50</text>
<rect x="238.7" y="278.7" width="283.6" height="139.9" fill="#303036" rx="2.2" stroke="#3c3c43" stroke-width="0.5"/>
<line x1="285.3" y1="290" x2="285.3" y2="406" stroke="#44444b" stroke-width="0.5"/>
<line x1="333" y1="290" x2="333" y2="406" stroke="#44444b" stroke-width="0.5"/>
<line x1="380.6" y1="290" x2="380.6" y2="406" stroke="#44444b" stroke-width="0.5"/>
<line x1="428.1" y1="290" x2="428.1" y2="406" stroke="#44444b" stroke-width="0.5"/>
<line x1="475.5" y1="290" x2="475.5" y2="406" stroke="#44444b" stroke-width="0.5"/>
<rect x="249.7" y="282.2" width="22.8" height="7.9" fill="#1b1b1f" rx="3.9"/>
<text x="261.1" y="288.16" font-size="5.3" fill="#e4523e" font-weight="bold" text-anchor="middle" textLength="16.4" lengthAdjust="spacingAndGlyphs">Band 1</text>
<rect x="248.2" y="296.5" width="25.8" height="9.3" fill="#1a1a1e" rx="4.6"/>
<path d="M253.7 303 q2 0 2.8 -2.2 q0.6 -1.2 3 -1.2" fill="none" stroke="#d8d8dc" stroke-width="0.8"/>
<path d="M265.5 300.6 l1.4 1.4 l1.4 -1.4" fill="none" stroke="#9a9aa0" stroke-width="0.5"/>
<circle cx="261.1" cy="318.8" r="6" fill="#1a1a1e"/>
<circle cx="261.1" cy="318.8" r="5.1" fill="url(#kg)"/>
<line x1="259.79" y1="319.72" x2="257.25" y2="321.5" stroke="#2a2a30" stroke-width="0.8"/>
<text x="251.7" y="330.17" font-size="3.9" fill="#707076" text-anchor="middle">20</text>
<text x="261.1" y="330.17" font-size="3.9" fill="#707076" text-anchor="middle">Hz</text>
<text x="270.9" y="330.17" font-size="3.9" fill="#707076" text-anchor="middle">19k</text>
<rect x="250.7" y="334" width="20.8" height="8.6" fill="#17171a" rx="1.2"/>
<text x="261.1" y="340.32" font-size="5.2" fill="#f2f2f4" font-weight="bold" text-anchor="middle">44</text>
<circle cx="261.1" cy="355.5" r="6" fill="#1a1a1e"/>
<path d="M261.1 349.5 A6 6 0 0 0 255.8 352.68" fill="none" stroke="#38b6d0" stroke-width="1.1"/>
<circle cx="261.1" cy="355.5" r="5.1" fill="url(#kg)"/>
<line x1="259.71" y1="354.7" x2="257.03" y2="353.15" stroke="#2a2a30" stroke-width="0.8"/>
<text x="251.1" y="367.37" font-size="3.9" fill="#707076" text-anchor="middle">-20</text>
<text x="261.1" y="367.37" font-size="3.9" fill="#707076" text-anchor="middle">dB</text>
<text x="271.1" y="367.37" font-size="3.9" fill="#707076" text-anchor="middle">+20</text>
<rect x="250.7" y="371.3" width="20.8" height="8.6" fill="#17171a" rx="1.2"/>
<text x="261.1" y="377.62" font-size="5.2" fill="#f2f2f4" font-weight="bold" text-anchor="middle">-12.6</text>
<circle cx="261.1" cy="392.8" r="6" fill="#1a1a1e"/>
<path d="M256.86 397.04 A6 6 0 0 1 255.19 393.84" fill="none" stroke="#38b6d0" stroke-width="1.1"/>
<circle cx="261.1" cy="392.8" r="5.1" fill="url(#kg)"/>
<line x1="259.55" y1="393.21" x2="256.56" y2="394.02" stroke="#2a2a30" stroke-width="0.8"/>
<text x="251.5" y="404.37" font-size="3.9" fill="#707076" text-anchor="middle">Low</text>
<text x="261.1" y="404.37" font-size="3.9" fill="#707076" text-anchor="middle">Q</text>
<text x="270.1" y="404.37" font-size="3.9" fill="#707076" text-anchor="middle">Hi</text>
<rect x="250.7" y="408" width="20.8" height="8.6" fill="#17171a" rx="1.2"/>
<text x="261.1" y="414.32" font-size="5.2" fill="#f2f2f4" font-weight="bold" text-anchor="middle">2.3</text>
<rect x="297.6" y="282.2" width="22.8" height="7.9" fill="#1b1b1f" rx="3.9"/>
<text x="309" y="288.16" font-size="5.3" fill="#e4523e" font-weight="bold" text-anchor="middle" textLength="16.4" lengthAdjust="spacingAndGlyphs">Band 2</text>
<rect x="296.1" y="296.5" width="25.8" height="9.3" fill="#1a1a1e" rx="4.6"/>
<path d="M301 299.6 q2.6 0 3 1.6 h3.4 M301 302.8 q2.6 0 3 -1.6" fill="none" stroke="#d8d8dc" stroke-width="0.7"/>
<path d="M313.4 300.6 l1.4 1.4 l1.4 -1.4" fill="none" stroke="#9a9aa0" stroke-width="0.5"/>
<circle cx="309" cy="318.8" r="6" fill="#1a1a1e"/>
<circle cx="309" cy="318.8" r="5.1" fill="url(#kg)"/>
<line x1="307.59" y1="319.55" x2="304.85" y2="321.01" stroke="#2a2a30" stroke-width="0.8"/>
<text x="299.6" y="330.17" font-size="3.9" fill="#707076" text-anchor="middle">20</text>
<text x="309" y="330.17" font-size="3.9" fill="#707076" text-anchor="middle">Hz</text>
<text x="318.8" y="330.17" font-size="3.9" fill="#707076" text-anchor="middle">19k</text>
<rect x="298.6" y="334" width="20.8" height="8.6" fill="#17171a" rx="1.2"/>
<text x="309" y="340.32" font-size="5.2" fill="#f2f2f4" font-weight="bold" text-anchor="middle">81</text>
<circle cx="309" cy="355.5" r="6" fill="#1a1a1e"/>
<path d="M309 349.5 A6 6 0 0 0 306.56 350.02" fill="none" stroke="#38b6d0" stroke-width="1.1"/>
<circle cx="309" cy="355.5" r="5.1" fill="url(#kg)"/>
<line x1="308.4" y1="354.02" x2="307.24" y2="351.14" stroke="#2a2a30" stroke-width="0.8"/>
<text x="299" y="367.37" font-size="3.9" fill="#707076" text-anchor="middle">-20</text>
<text x="309" y="367.37" font-size="3.9" fill="#707076" text-anchor="middle">dB</text>
<text x="319" y="367.37" font-size="3.9" fill="#707076" text-anchor="middle">+20</text>
<rect x="298.6" y="371.3" width="20.8" height="8.6" fill="#17171a" rx="1.2"/>
<text x="309" y="377.62" font-size="5.2" fill="#f2f2f4" font-weight="bold" text-anchor="middle">-3.9</text>
<circle cx="309" cy="392.8" r="6" fill="#1a1a1e"/>
<path d="M304.76 397.04 A6 6 0 0 1 303.09 393.84" fill="none" stroke="#38b6d0" stroke-width="1.1"/>
<circle cx="309" cy="392.8" r="5.1" fill="url(#kg)"/>
<line x1="307.45" y1="393.21" x2="304.46" y2="394.02" stroke="#2a2a30" stroke-width="0.8"/>
<text x="299.4" y="404.37" font-size="3.9" fill="#707076" text-anchor="middle">Low</text>
<text x="309" y="404.37" font-size="3.9" fill="#707076" text-anchor="middle">Q</text>
<text x="318" y="404.37" font-size="3.9" fill="#707076" text-anchor="middle">Hi</text>
<rect x="298.6" y="408" width="20.8" height="8.6" fill="#17171a" rx="1.2"/>
<text x="309" y="414.32" font-size="5.2" fill="#f2f2f4" font-weight="bold" text-anchor="middle">2.3</text>
<rect x="345.3" y="282.2" width="22.8" height="7.9" fill="#1b1b1f" rx="3.9"/>
<text x="356.7" y="288.16" font-size="5.3" fill="#e4523e" font-weight="bold" text-anchor="middle" textLength="16.4" lengthAdjust="spacingAndGlyphs">Band 3</text>
<rect x="343.8" y="296.5" width="25.8" height="9.3" fill="#1a1a1e" rx="4.6"/>
<line x1="348.5" y1="301.2" x2="350.8" y2="301.2" stroke="#d8d8dc" stroke-width="0.7"/>
<line x1="353.4" y1="301.2" x2="355.7" y2="301.2" stroke="#d8d8dc" stroke-width="0.7"/>
<circle cx="352.1" cy="301.2" r="1.3" fill="none" stroke="#d8d8dc" stroke-width="0.7"/>
<path d="M361.1 300.6 l1.4 1.4 l1.4 -1.4" fill="none" stroke="#9a9aa0" stroke-width="0.5"/>
<circle cx="356.7" cy="318.8" r="6" fill="#1a1a1e"/>
<circle cx="356.7" cy="318.8" r="5.1" fill="url(#kg)"/>
<line x1="355.67" y1="317.57" x2="353.68" y2="315.2" stroke="#2a2a30" stroke-width="0.8"/>
<text x="347.3" y="330.17" font-size="3.9" fill="#707076" text-anchor="middle">20</text>
<text x="356.7" y="330.17" font-size="3.9" fill="#707076" text-anchor="middle">Hz</text>
<text x="366.5" y="330.17" font-size="3.9" fill="#707076" text-anchor="middle">19k</text>
<rect x="346.3" y="334" width="20.8" height="8.6" fill="#17171a" rx="1.2"/>
<text x="356.7" y="340.32" font-size="5.2" fill="#f2f2f4" font-weight="bold" text-anchor="middle">480</text>
<circle cx="356.7" cy="355.5" r="6" fill="#1a1a1e"/>
<path d="M356.7 349.5 A6 6 0 0 0 355.45 349.63" fill="none" stroke="#38b6d0" stroke-width="1.1"/>
<circle cx="356.7" cy="355.5" r="5.1" fill="url(#kg)"/>
<line x1="356.42" y1="353.92" x2="355.88" y2="350.87" stroke="#2a2a30" stroke-width="0.8"/>
<text x="346.7" y="367.37" font-size="3.9" fill="#707076" text-anchor="middle">-20</text>
<text x="356.7" y="367.37" font-size="3.9" fill="#707076" text-anchor="middle">dB</text>
<text x="366.7" y="367.37" font-size="3.9" fill="#707076" text-anchor="middle">+20</text>
<rect x="346.3" y="371.3" width="20.8" height="8.6" fill="#17171a" rx="1.2"/>
<text x="356.7" y="377.62" font-size="5.2" fill="#f2f2f4" font-weight="bold" text-anchor="middle">-1.7</text>
<circle cx="356.7" cy="392.8" r="6" fill="#1a1a1e"/>
<path d="M352.46 397.04 A6 6 0 0 1 350.79 393.84" fill="none" stroke="#38b6d0" stroke-width="1.1"/>
<circle cx="356.7" cy="392.8" r="5.1" fill="url(#kg)"/>
<line x1="355.15" y1="393.21" x2="352.16" y2="394.02" stroke="#2a2a30" stroke-width="0.8"/>
<text x="347.1" y="404.37" font-size="3.9" fill="#707076" text-anchor="middle">Low</text>
<text x="356.7" y="404.37" font-size="3.9" fill="#707076" text-anchor="middle">Q</text>
<text x="365.7" y="404.37" font-size="3.9" fill="#707076" text-anchor="middle">Hi</text>
<rect x="346.3" y="408" width="20.8" height="8.6" fill="#17171a" rx="1.2"/>
<text x="356.7" y="414.32" font-size="5.2" fill="#f2f2f4" font-weight="bold" text-anchor="middle">2.3</text>
<rect x="392.8" y="282.2" width="22.8" height="7.9" fill="#1b1b1f" rx="3.9"/>
<text x="404.2" y="288.16" font-size="5.3" fill="#e4523e" font-weight="bold" text-anchor="middle" textLength="16.4" lengthAdjust="spacingAndGlyphs">Band 4</text>
<rect x="391.3" y="296.5" width="25.8" height="9.3" fill="#1a1a1e" rx="4.6"/>
<line x1="396" y1="301.2" x2="398.3" y2="301.2" stroke="#d8d8dc" stroke-width="0.7"/>
<line x1="400.9" y1="301.2" x2="403.2" y2="301.2" stroke="#d8d8dc" stroke-width="0.7"/>
<circle cx="399.6" cy="301.2" r="1.3" fill="none" stroke="#d8d8dc" stroke-width="0.7"/>
<path d="M408.6 300.6 l1.4 1.4 l1.4 -1.4" fill="none" stroke="#9a9aa0" stroke-width="0.5"/>
<circle cx="404.2" cy="318.8" r="6" fill="#1a1a1e"/>
<path d="M399.96 323.04 A6 6 0 0 1 398.29 317.76" fill="none" stroke="#38b6d0" stroke-width="1.1"/>
<circle cx="404.2" cy="318.8" r="5.1" fill="url(#kg)"/>
<line x1="403.92" y1="317.22" x2="403.38" y2="314.17" stroke="#2a2a30" stroke-width="0.8"/>
<text x="394.8" y="330.17" font-size="3.9" fill="#707076" text-anchor="middle">20</text>
<text x="404.2" y="330.17" font-size="3.9" fill="#707076" text-anchor="middle">Hz</text>
<text x="414" y="330.17" font-size="3.9" fill="#707076" text-anchor="middle">19k</text>
<rect x="393.8" y="334" width="20.8" height="8.6" fill="#17171a" rx="1.2"/>
<text x="404.2" y="340.32" font-size="5.2" fill="#f2f2f4" font-weight="bold" text-anchor="middle">2366</text>
<circle cx="404.2" cy="355.5" r="6" fill="#1a1a1e"/>
<path d="M404.2 349.5 A6 6 0 0 0 402.35 349.79" fill="none" stroke="#38b6d0" stroke-width="1.1"/>
<circle cx="404.2" cy="355.5" r="5.1" fill="url(#kg)"/>
<line x1="403.76" y1="353.96" x2="402.9" y2="350.98" stroke="#2a2a30" stroke-width="0.8"/>
<text x="394.2" y="367.37" font-size="3.9" fill="#707076" text-anchor="middle">-20</text>
<text x="404.2" y="367.37" font-size="3.9" fill="#707076" text-anchor="middle">dB</text>
<text x="414.2" y="367.37" font-size="3.9" fill="#707076" text-anchor="middle">+20</text>
<rect x="393.8" y="371.3" width="20.8" height="8.6" fill="#17171a" rx="1.2"/>
<text x="404.2" y="377.62" font-size="5.2" fill="#f2f2f4" font-weight="bold" text-anchor="middle">-2.7</text>
<circle cx="404.2" cy="392.8" r="6" fill="#1a1a1e"/>
<path d="M399.96 397.04 A6 6 0 0 1 398.29 393.84" fill="none" stroke="#38b6d0" stroke-width="1.1"/>
<circle cx="404.2" cy="392.8" r="5.1" fill="url(#kg)"/>
<line x1="402.65" y1="393.21" x2="399.66" y2="394.02" stroke="#2a2a30" stroke-width="0.8"/>
<text x="394.6" y="404.37" font-size="3.9" fill="#707076" text-anchor="middle">Low</text>
<text x="404.2" y="404.37" font-size="3.9" fill="#707076" text-anchor="middle">Q</text>
<text x="413.2" y="404.37" font-size="3.9" fill="#707076" text-anchor="middle">Hi</text>
<rect x="393.8" y="408" width="20.8" height="8.6" fill="#17171a" rx="1.2"/>
<text x="404.2" y="414.32" font-size="5.2" fill="#f2f2f4" font-weight="bold" text-anchor="middle">2.3</text>
<rect x="440.2" y="282.2" width="22.8" height="7.9" fill="#1b1b1f" rx="3.9"/>
<text x="451.6" y="288.16" font-size="5.3" fill="#e4523e" font-weight="bold" text-anchor="middle" textLength="16.4" lengthAdjust="spacingAndGlyphs">Band 5</text>
<rect x="438.7" y="296.5" width="25.8" height="9.3" fill="#1a1a1e" rx="4.6"/>
<path d="M443.6 301.2 h3.4 q0.4 -1.6 3 -1.6 M447 301.2 q0.4 1.6 3 1.6" fill="none" stroke="#d8d8dc" stroke-width="0.7"/>
<path d="M456 300.6 l1.4 1.4 l1.4 -1.4" fill="none" stroke="#9a9aa0" stroke-width="0.5"/>
<circle cx="451.6" cy="318.8" r="6" fill="#1a1a1e"/>
<path d="M447.36 323.04 A6 6 0 0 1 454.14 313.36" fill="none" stroke="#38b6d0" stroke-width="1.1"/>
<circle cx="451.6" cy="318.8" r="5.1" fill="url(#kg)"/>
<line x1="452.28" y1="317.35" x2="453.59" y2="314.54" stroke="#2a2a30" stroke-width="0.8"/>
<text x="442.2" y="330.17" font-size="3.9" fill="#707076" text-anchor="middle">20</text>
<text x="451.6" y="330.17" font-size="3.9" fill="#707076" text-anchor="middle">Hz</text>
<text x="461.4" y="330.17" font-size="3.9" fill="#707076" text-anchor="middle">19k</text>
<rect x="441.2" y="334" width="20.8" height="8.6" fill="#17171a" rx="1.2"/>
<text x="451.6" y="340.32" font-size="5.2" fill="#f2f2f4" font-weight="bold" text-anchor="middle">11212</text>
<circle cx="451.6" cy="355.5" r="6" fill="#1a1a1e"/>
<path d="M451.6 349.5 A6 6 0 0 0 449.35 349.94" fill="none" stroke="#38b6d0" stroke-width="1.1"/>
<circle cx="451.6" cy="355.5" r="5.1" fill="url(#kg)"/>
<line x1="451.05" y1="354" x2="449.99" y2="351.08" stroke="#2a2a30" stroke-width="0.8"/>
<text x="441.6" y="367.37" font-size="3.9" fill="#707076" text-anchor="middle">-20</text>
<text x="451.6" y="367.37" font-size="3.9" fill="#707076" text-anchor="middle">dB</text>
<text x="461.6" y="367.37" font-size="3.9" fill="#707076" text-anchor="middle">+20</text>
<rect x="441.2" y="371.3" width="20.8" height="8.6" fill="#17171a" rx="1.2"/>
<text x="451.6" y="377.62" font-size="5.2" fill="#f2f2f4" font-weight="bold" text-anchor="middle">-3.7</text>
<circle cx="451.6" cy="392.8" r="6" fill="#1a1a1e"/>
<path d="M447.36 397.04 A6 6 0 0 1 445.69 393.84" fill="none" stroke="#38b6d0" stroke-width="1.1"/>
<circle cx="451.6" cy="392.8" r="5.1" fill="url(#kg)"/>
<line x1="450.05" y1="393.21" x2="447.06" y2="394.02" stroke="#2a2a30" stroke-width="0.8"/>
<text x="442" y="404.37" font-size="3.9" fill="#707076" text-anchor="middle">Low</text>
<text x="451.6" y="404.37" font-size="3.9" fill="#707076" text-anchor="middle">Q</text>
<text x="460.6" y="404.37" font-size="3.9" fill="#707076" text-anchor="middle">Hi</text>
<rect x="441.2" y="408" width="20.8" height="8.6" fill="#17171a" rx="1.2"/>
<text x="451.6" y="414.32" font-size="5.2" fill="#f2f2f4" font-weight="bold" text-anchor="middle">2.3</text>
<rect x="487.6" y="282.2" width="22.8" height="7.9" fill="#3a3a41" rx="3.9"/>
<text x="499" y="288.16" font-size="5.3" fill="#8a8a90" text-anchor="middle" textLength="16.4" lengthAdjust="spacingAndGlyphs">Band 6</text>
<rect x="486.1" y="296.5" width="25.8" height="9.3" fill="#1a1a1e" rx="4.6"/>
<path d="M491.6 299.5 q2.4 0 3 1.2 q0.8 2.2 2.8 2.2" fill="none" stroke="#d8d8dc" stroke-width="0.8"/>
<path d="M503.4 300.6 l1.4 1.4 l1.4 -1.4" fill="none" stroke="#9a9aa0" stroke-width="0.5"/>
<circle cx="499" cy="318.8" r="6" fill="#1a1a1e"/>
<path d="M494.76 323.04 A6 6 0 0 1 502.69 314.07" fill="none" stroke="#38b6d0" stroke-width="1.1"/>
<circle cx="499" cy="318.8" r="5.1" fill="url(#kg)"/>
<line x1="499.99" y1="317.54" x2="501.89" y2="315.1" stroke="#2a2a30" stroke-width="0.8"/>
<text x="489.6" y="330.17" font-size="3.9" fill="#707076" text-anchor="middle">20</text>
<text x="499" y="330.17" font-size="3.9" fill="#707076" text-anchor="middle">Hz</text>
<text x="508.8" y="330.17" font-size="3.9" fill="#707076" text-anchor="middle">19k</text>
<rect x="488.6" y="334" width="20.8" height="8.6" fill="#17171a" rx="1.2"/>
<text x="499" y="340.32" font-size="5.2" fill="#f2f2f4" font-weight="bold" text-anchor="middle">19000</text>
<circle cx="499" cy="355.5" r="6" fill="#1a1a1e"/>
<circle cx="499" cy="355.5" r="5.1" fill="url(#kg)"/>
<line x1="499" y1="353.9" x2="499" y2="350.8" stroke="#2a2a30" stroke-width="0.8"/>
<text x="489" y="367.37" font-size="3.9" fill="#707076" text-anchor="middle">-20</text>
<text x="499" y="367.37" font-size="3.9" fill="#707076" text-anchor="middle">dB</text>
<text x="509" y="367.37" font-size="3.9" fill="#707076" text-anchor="middle">+20</text>
<rect x="488.6" y="371.3" width="20.8" height="8.6" fill="#17171a" rx="1.2"/>
<text x="499" y="377.62" font-size="5.2" fill="#f2f2f4" font-weight="bold" text-anchor="middle">0.0</text>
<circle cx="499" cy="392.8" r="6" fill="#1a1a1e"/>
<path d="M494.76 397.04 A6 6 0 0 1 493.09 393.84" fill="none" stroke="#38b6d0" stroke-width="1.1"/>
<circle cx="499" cy="392.8" r="5.1" fill="url(#kg)"/>
<line x1="497.45" y1="393.21" x2="494.46" y2="394.02" stroke="#2a2a30" stroke-width="0.8"/>
<text x="489.4" y="404.37" font-size="3.9" fill="#707076" text-anchor="middle">Low</text>
<text x="499" y="404.37" font-size="3.9" fill="#707076" text-anchor="middle">Q</text>
<text x="508" y="404.37" font-size="3.9" fill="#707076" text-anchor="middle">Hi</text>
<rect x="488.6" y="408" width="20.8" height="8.6" fill="#17171a" rx="1.2"/>
<text x="499" y="414.32" font-size="5.2" fill="#f2f2f4" font-weight="bold" text-anchor="middle">2.3</text>
<rect x="113" y="471" width="774" height="19.6" fill="#1d1d21"/>
<line x1="113" y1="471" x2="887" y2="471" stroke="#141417" stroke-width="0.6"/>
<circle cx="135.4" cy="479.9" r="1.65" fill="#ececf0"/>
<circle cx="133.3" cy="483.3" r="1.65" fill="#ececf0"/>
<circle cx="137.5" cy="483.3" r="1.65" fill="#ececf0"/>
<text x="142.2" y="483.79" font-size="5.4" fill="#e0e0e4" font-weight="bold" textLength="65.8" lengthAdjust="spacingAndGlyphs">DaVinci Resolve Studio 21</text>
<text x="356.8" y="487.51" font-size="4.9" fill="#7a7a80" text-anchor="middle">Media</text>
<g transform="translate(356.8 478.2) scale(1.25) translate(-356.8 -478.2)">
<rect x="354.4" y="476.4" width="4.8" height="3.6" fill="none" rx="0.4" stroke="#7a7a80" stroke-width="0.45"/>
<line x1="355.2" y1="478.8" x2="358.4" y2="478.8" stroke="#7a7a80" stroke-width="0.4"/>
</g>
<text x="397.2" y="487.51" font-size="4.9" fill="#7a7a80" text-anchor="middle">Photo</text>
<g transform="translate(397.2 478.2) scale(1.25) translate(-397.2 -478.2)">
<circle cx="397.2" cy="478.2" r="2.1" fill="none" stroke="#7a7a80" stroke-width="0.45"/>
<circle cx="397.2" cy="478.2" r="0.8" fill="none" stroke="#7a7a80" stroke-width="0.4"/>
<circle cx="399.6" cy="476.2" r="0.4" fill="#7a7a80"/>
</g>
<text x="438.4" y="487.51" font-size="4.9" fill="#7a7a80" text-anchor="middle">Cut</text>
<g transform="translate(438.4 478.2) scale(1.25) translate(-438.4 -478.2)">
<rect x="435.6" y="476.9" width="5.6" height="2.6" fill="none" rx="0.4" stroke="#7a7a80" stroke-width="0.45"/>
<path d="M439.8 476.8 l1.4 -1.2" fill="none" stroke="#7a7a80" stroke-width="0.4"/>
</g>
<text x="480" y="487.51" font-size="4.9" fill="#7a7a80" text-anchor="middle">Edit</text>
<g transform="translate(480 478.2) scale(1.25) translate(-480 -478.2)">
<rect x="477" y="477.8" width="2.4" height="2" fill="#7a7a80"/>
<rect x="480.6" y="477.8" width="2.4" height="2" fill="#7a7a80"/>
<path d="M478.4 475.8 l1.6 1.4 l1.6 -1.4" fill="none" stroke="#7a7a80" stroke-width="0.5"/>
</g>
<text x="520.4" y="487.51" font-size="4.9" fill="#7a7a80" text-anchor="middle">Fusion</text>
<g transform="translate(520.4 478.2) scale(1.25) translate(-520.4 -478.2)">
<path d="M518 479.8 l3 -3 l1 1 l-3 3z M522.4 478 l0.8 -1.6" fill="none" stroke="#7a7a80" stroke-width="0.45"/>
</g>
<text x="560.8" y="487.51" font-size="4.9" fill="#7a7a80" text-anchor="middle">Color</text>
<g transform="translate(560.8 478.2) scale(1.25) translate(-560.8 -478.2)">
<circle cx="560.8" cy="478.2" r="2.1" fill="none" stroke="#7a7a80" stroke-width="0.45"/>
<circle cx="560.8" cy="478.2" r="0.5" fill="#7a7a80"/>
</g>
<rect x="582.8" y="471.3" width="40.6" height="19.3" fill="#0c0c0e"/>
<rect x="582.8" y="489.5" width="40.6" height="1.1" fill="#e0503c"/>
<text x="603.2" y="487.51" font-size="4.9" fill="#f4f4f6" font-weight="bold" text-anchor="middle">Fairlight</text>
<g transform="translate(603.2 478.2) scale(1.25) translate(-603.2 -478.2)">
<path d="M602.1 479.8 v-3.4 l3 -0.8 v3.4" fill="none" stroke="#58e070" stroke-width="0.55"/>
<circle cx="601.4" cy="479.9" r="0.85" fill="#58e070"/>
<circle cx="604.4" cy="479.1" r="0.85" fill="#58e070"/>
</g>
<text x="644" y="487.51" font-size="4.9" fill="#7a7a80" text-anchor="middle">Deliver</text>
<g transform="translate(644 478.2) scale(1.25) translate(-644 -478.2)">
<path d="M641.6 479.4 l4.4 -4 l-1 4.6 l-1.2 -1.6z" fill="none" stroke="#7a7a80" stroke-width="0.45"/>
</g>
<circle cx="794.2" cy="481.6" r="3.1" fill="#15283c" stroke="#2a6ab0" stroke-width="0.6"/>
<path d="M792.6 483.2 v-2 a1.6 1.6 0 0 1 3.2 0 v2" fill="none" stroke="#2a6ab0" stroke-width="0.5"/>
<line x1="794.2" y1="480.6" x2="794.2" y2="483" stroke="#2a6ab0" stroke-width="0.4"/>
<ellipse cx="814.4" cy="481.2" rx="3" ry="2.3" fill="#c8c8cc"/>
<path d="M812.4 482.8 l-0.4 2 l2.4 -1.2z" fill="#c8c8cc"/>
<ellipse cx="814.4" cy="481.1" rx="1.7" ry="1" fill="#1d1d21" opacity="0.55"/>
<circle cx="835.6" cy="480" r="1.25" fill="#c8c8cc"/>
<path d="M833 484.2 q0 -2.6 2.6 -2.6 q2.6 0 2.6 2.6z" fill="#c8c8cc"/>
<circle cx="831.8" cy="481.2" r="0.85" fill="#c8c8cc"/>
<path d="M830 484.2 q0 -1.8 1.8 -1.8 q0.9 0 1.3 0.5 l-0.5 1.3z" fill="#c8c8cc"/>
<path d="M850 481.4 l3.4 -3.2 l3.4 3.2 v3 h-2.3 v-2 h-2.2 v2 h-2.3z" fill="#c8c8cc"/>
<circle cx="873.5" cy="481.6" r="2.2" fill="none" stroke="#c8c8cc" stroke-width="1.3"/>
<line x1="876.1" y1="481.6" x2="877" y2="481.6" stroke="#c8c8cc" stroke-width="0.9"/>
<line x1="875.34" y1="483.44" x2="875.97" y2="484.07" stroke="#c8c8cc" stroke-width="0.9"/>
<line x1="873.5" y1="484.2" x2="873.5" y2="485.1" stroke="#c8c8cc" stroke-width="0.9"/>
<line x1="871.66" y1="483.44" x2="871.03" y2="484.07" stroke="#c8c8cc" stroke-width="0.9"/>
<line x1="870.9" y1="481.6" x2="870" y2="481.6" stroke="#c8c8cc" stroke-width="0.9"/>
<line x1="871.66" y1="479.76" x2="871.03" y2="479.13" stroke="#c8c8cc" stroke-width="0.9"/>
<line x1="873.5" y1="479" x2="873.5" y2="478.1" stroke="#c8c8cc" stroke-width="0.9"/>
<line x1="875.34" y1="479.76" x2="875.97" y2="479.13" stroke="#c8c8cc" stroke-width="0.9"/>
</svg>
</div>
</body></html>
